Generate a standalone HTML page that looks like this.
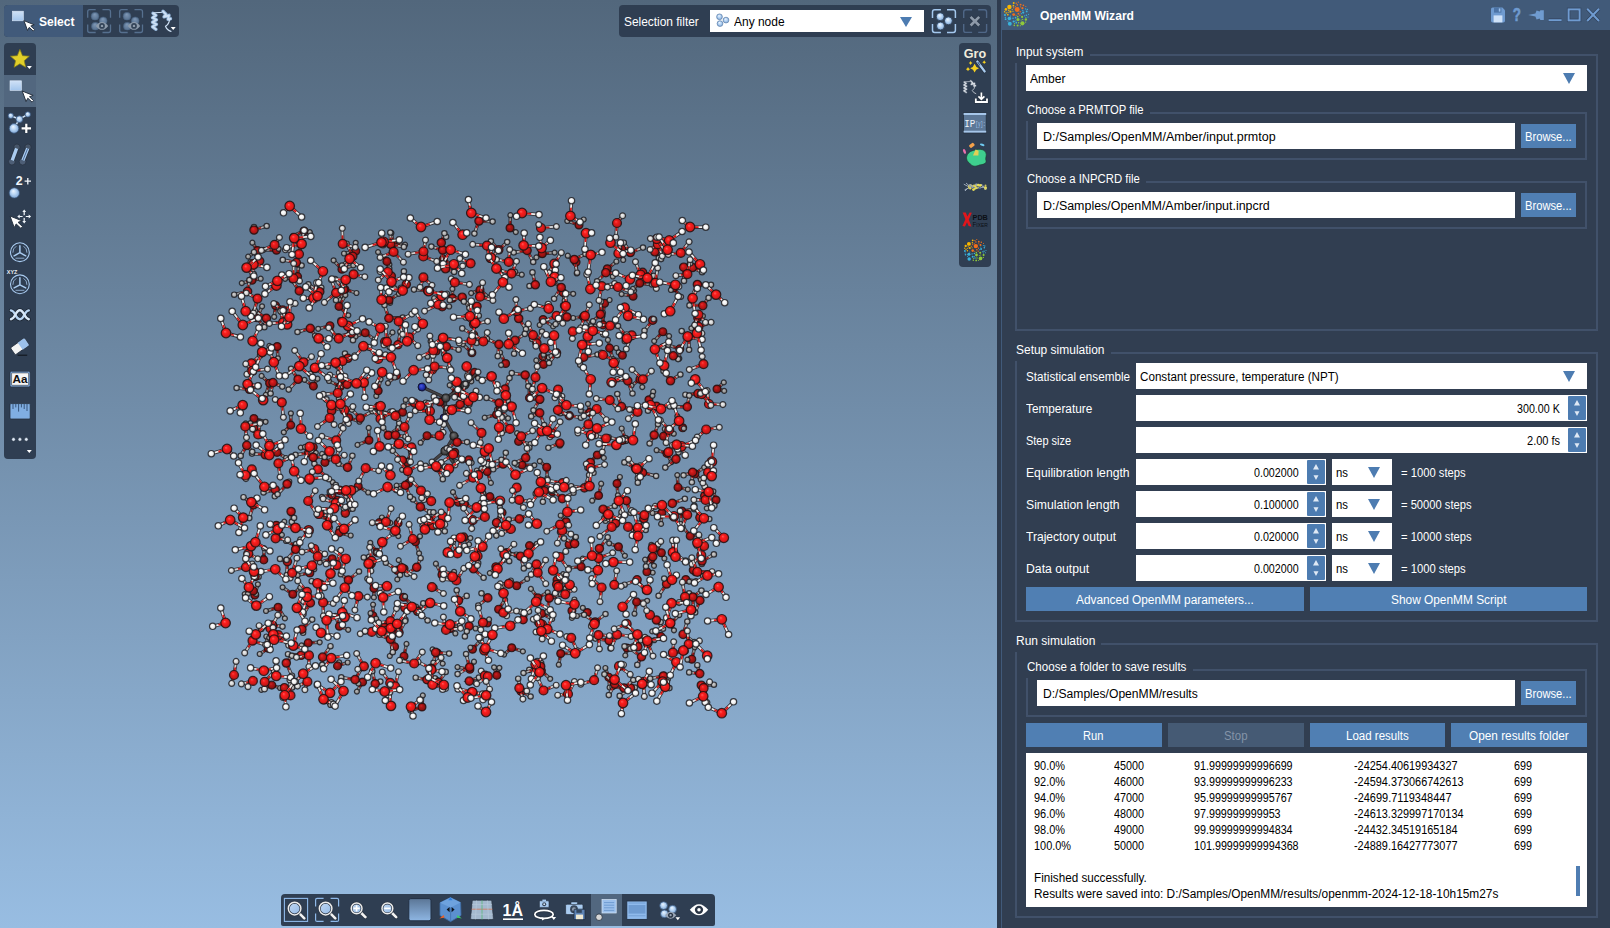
<!DOCTYPE html>
<html lang="en"><head><meta charset="utf-8"><title>OpenMM Wizard</title>
<style>
html,body{margin:0;padding:0;}
body{width:1610px;height:928px;overflow:hidden;position:relative;background:#2f3e52;font-family:"Liberation Sans",sans-serif;font-size:12px;color:#fff;}
.abs,.abs *{position:absolute;box-sizing:border-box;}
#view{left:0;top:0;width:997px;height:928px;background:linear-gradient(#52677c 0%,#98bde2 100%);overflow:hidden;}
#split{left:997px;top:0;width:5px;height:928px;background:#2e3b4e;border-right:1px solid #415a7a;}
#panel{left:1001px;top:0;width:609px;height:928px;background:#313e51;}
#phead{left:0;top:0;width:609px;height:30px;background:#415a79;}
.t{transform-origin:0 50%;white-space:nowrap;line-height:16px;height:16px;color:#fff;}
.dk{color:#000;}
.gb{border:2px solid #41516a;}
.lbl{background:#313e51;padding:0 0 0 0;}
.in{background:#fff;}
.btn{background:#507fb3;text-align:center;}
.btn.dis{background:#455a74;color:#8494a8;}
.tb{background:#2f3e52;border-radius:4px;}
svg{overflow:visible;}
.b{font-weight:bold;}
.t.dis{color:#8494a8;}
.bd{stroke:#201414;stroke-width:3.4;opacity:.82}
.bw1{stroke:#ececec;stroke-width:1.8}.bw2{stroke:#d0d0d0;stroke-width:1.8}.bw3{stroke:#b4b4b4;stroke-width:1.8}.bw4{stroke:#909090;stroke-width:1.8}
.br1{stroke:#d81818;stroke-width:1.8}.br2{stroke:#c01616;stroke-width:1.8}.br3{stroke:#a41414;stroke-width:1.8}.br4{stroke:#881010;stroke-width:1.8}
.bc{stroke:#444;stroke-width:1.7}
</style></head><body>
<div id="view" class="abs">
<svg class="mol" style="left:0;top:0" width="997" height="928" viewBox="0 0 997 928">
<defs><radialGradient id="gO1" cx=".5" cy=".5" r=".5" fx=".38" fy=".34"><stop offset="0" stop-color="#ff5a5a"/><stop offset="0.35" stop-color="#fc1c1c"/><stop offset="0.75" stop-color="#dc1a1a"/><stop offset="1" stop-color="#a41616"/></radialGradient><radialGradient id="gO2" cx=".5" cy=".5" r=".5" fx=".38" fy=".34"><stop offset="0" stop-color="#f84444"/><stop offset="0.35" stop-color="#ee1a1a"/><stop offset="0.75" stop-color="#c81818"/><stop offset="1" stop-color="#921414"/></radialGradient><radialGradient id="gO3" cx=".5" cy=".5" r=".5" fx=".38" fy=".34"><stop offset="0" stop-color="#e03232"/><stop offset="0.35" stop-color="#d01818"/><stop offset="0.75" stop-color="#aa1414"/><stop offset="1" stop-color="#7a1010"/></radialGradient><radialGradient id="gO4" cx=".5" cy=".5" r=".5" fx=".38" fy=".34"><stop offset="0" stop-color="#c42a2a"/><stop offset="0.35" stop-color="#b01414"/><stop offset="0.75" stop-color="#8e1212"/><stop offset="1" stop-color="#640e0e"/></radialGradient><radialGradient id="gH1" cx=".5" cy=".5" r=".5" fx=".38" fy=".34"><stop offset="0" stop-color="#fff"/><stop offset="0.45" stop-color="#f8f8f8"/><stop offset="0.78" stop-color="#dcdcdc"/><stop offset="1" stop-color="#aaa"/></radialGradient><radialGradient id="gH2" cx=".5" cy=".5" r=".5" fx=".38" fy=".34"><stop offset="0" stop-color="#f0f0f0"/><stop offset="0.45" stop-color="#dedede"/><stop offset="0.78" stop-color="#bcbcbc"/><stop offset="1" stop-color="#8c8c8c"/></radialGradient><radialGradient id="gH3" cx=".5" cy=".5" r=".5" fx=".38" fy=".34"><stop offset="0" stop-color="#d0d0d0"/><stop offset="0.45" stop-color="#bababa"/><stop offset="0.78" stop-color="#9a9a9a"/><stop offset="1" stop-color="#727272"/></radialGradient><radialGradient id="gH4" cx=".5" cy=".5" r=".5" fx=".38" fy=".34"><stop offset="0" stop-color="#b8b8b8"/><stop offset="0.45" stop-color="#a4a4a4"/><stop offset="0.78" stop-color="#888"/><stop offset="1" stop-color="#646464"/></radialGradient><radialGradient id="gC" cx=".5" cy=".5" r=".5" fx=".38" fy=".34"><stop offset="0" stop-color="#777"/><stop offset="0.6" stop-color="#4a4a4a"/><stop offset="1" stop-color="#2a2a2a"/></radialGradient><radialGradient id="gN" cx=".5" cy=".5" r=".5" fx=".38" fy=".34"><stop offset="0" stop-color="#4a5ae0"/><stop offset="0.6" stop-color="#2030b0"/><stop offset="1" stop-color="#101850"/></radialGradient><circle id="o1" r="4.8" fill="url(#gO1)" stroke="#1e1010" stroke-opacity=".82" stroke-width="1.2"/><circle id="h1" r="3.2" fill="url(#gH1)" stroke="#1c1c20" stroke-opacity=".8" stroke-width="1.2"/><circle id="o2" r="4.5" fill="url(#gO2)" stroke="#1e1010" stroke-opacity=".82" stroke-width="1.2"/><circle id="h2" r="2.95" fill="url(#gH2)" stroke="#1c1c20" stroke-opacity=".8" stroke-width="1.2"/><circle id="o3" r="4.2" fill="url(#gO3)" stroke="#1e1010" stroke-opacity=".82" stroke-width="1.2"/><circle id="h3" r="2.7" fill="url(#gH3)" stroke="#1c1c20" stroke-opacity=".8" stroke-width="1.2"/><circle id="o4" r="3.95" fill="url(#gO4)" stroke="#1e1010" stroke-opacity=".82" stroke-width="1.2"/><circle id="h4" r="2.5" fill="url(#gH4)" stroke="#1c1c20" stroke-opacity=".8" stroke-width="1.2"/><circle id="c" r="4.1" fill="url(#gC)" stroke="#181818" stroke-width=".9"/><circle id="n" r="4" fill="url(#gN)" stroke="#101030" stroke-width=".9"/></defs>
<g fill="none" stroke-linecap="round">
<path class="bd" d="M453 492.1L458.5 502.3L466.3 504.3"/><path class="bw4" d="M453 492.1L458.5 502.3L466.3 504.3"/><path class="br4" d="M455.7 497.2L458.5 502.3L462.4 503.3"/>
<use href="#h4" x="466.3" y="504.3"/>
<use href="#h4" x="453" y="492.1"/>
<use href="#o4" x="458.5" y="502.3"/>
<path class="bd" d="M405.1 244.7L393.1 243.8L391.4 233"/><path class="bw4" d="M405.1 244.7L393.1 243.8L391.4 233"/><path class="br4" d="M399.1 244.2L393.1 243.8L392.3 238.4"/>
<use href="#h4" x="391.4" y="233"/>
<use href="#o4" x="393.1" y="243.8"/>
<use href="#h4" x="405.1" y="244.7"/>
<path class="bd" d="M653.2 391.7L648.9 399.8L652.5 395.8"/><path class="bw4" d="M653.2 391.7L648.9 399.8L652.5 395.8"/><path class="br4" d="M651 395.7L648.9 399.8L650.7 397.8"/>
<use href="#h4" x="653.2" y="391.7"/>
<use href="#o4" x="648.9" y="399.8"/>
<use href="#h4" x="652.5" y="395.8"/>
<path class="bd" d="M376.3 396L378.2 390.8L380.6 379.3"/><path class="bw4" d="M376.3 396L378.2 390.8L380.6 379.3"/><path class="br4" d="M377.2 393.4L378.2 390.8L379.4 385.1"/>
<use href="#h4" x="376.3" y="396"/>
<use href="#h4" x="380.6" y="379.3"/>
<use href="#o4" x="378.2" y="390.8"/>
<path class="bd" d="M616.3 348L622.4 355.3L618.7 352.5"/><path class="bw4" d="M616.3 348L622.4 355.3L618.7 352.5"/><path class="br4" d="M619.3 351.7L622.4 355.3L620.5 353.9"/>
<use href="#h4" x="618.7" y="352.5"/>
<use href="#o4" x="622.4" y="355.3"/>
<use href="#h4" x="616.3" y="348"/>
<path class="bd" d="M398.9 293.8L389 300.2L390.1 302.9"/><path class="bw4" d="M398.9 293.8L389 300.2L390.1 302.9"/><path class="br4" d="M394 297L389 300.2L389.6 301.5"/>
<use href="#h4" x="390.1" y="302.9"/>
<use href="#o4" x="389" y="300.2"/>
<use href="#h4" x="398.9" y="293.8"/>
<path class="bd" d="M370.3 542.8L376.8 552.4L376.3 552.3"/><path class="bw4" d="M370.3 542.8L376.8 552.4L376.3 552.3"/><path class="br4" d="M373.5 547.6L376.8 552.4L376.6 552.3"/>
<use href="#h4" x="370.3" y="542.8"/>
<use href="#o4" x="376.8" y="552.4"/>
<use href="#h4" x="376.3" y="552.3"/>
<path class="bd" d="M449.2 306.5L442.2 306.9L434.1 298.2"/><path class="bw4" d="M449.2 306.5L442.2 306.9L434.1 298.2"/><path class="br4" d="M445.7 306.7L442.2 306.9L438.2 302.5"/>
<use href="#o4" x="442.2" y="306.9"/>
<use href="#h4" x="434.1" y="298.2"/>
<use href="#h4" x="449.2" y="306.5"/>
<path class="bd" d="M634.5 613.7L636.6 601.9L647.2 600.8"/><path class="bw4" d="M634.5 613.7L636.6 601.9L647.2 600.8"/><path class="br4" d="M635.5 607.8L636.6 601.9L641.9 601.3"/>
<use href="#h4" x="647.2" y="600.8"/>
<use href="#o4" x="636.6" y="601.9"/>
<use href="#h4" x="634.5" y="613.7"/>
<path class="bd" d="M334 457.7L324.9 462.4L322.1 453.9"/><path class="bw4" d="M334 457.7L324.9 462.4L322.1 453.9"/><path class="br4" d="M329.4 460.1L324.9 462.4L323.5 458.2"/>
<use href="#h4" x="334" y="457.7"/>
<use href="#o4" x="324.9" y="462.4"/>
<use href="#h4" x="322.1" y="453.9"/>
<path class="bd" d="M338.8 528.8L339.1 532.8L350.7 535.5"/><path class="bw4" d="M338.8 528.8L339.1 532.8L350.7 535.5"/><path class="br4" d="M339 530.8L339.1 532.8L344.9 534.1"/>
<use href="#h4" x="338.8" y="528.8"/>
<use href="#o4" x="339.1" y="532.8"/>
<use href="#h4" x="350.7" y="535.5"/>
<path class="bd" d="M573.2 318L583.5 316.8L591 324.7"/><path class="bw4" d="M573.2 318L583.5 316.8L591 324.7"/><path class="br4" d="M578.3 317.4L583.5 316.8L587.2 320.7"/>
<use href="#h4" x="573.2" y="318"/>
<use href="#h4" x="591" y="324.7"/>
<use href="#o4" x="583.5" y="316.8"/>
<path class="bd" d="M495.2 522.5L502.1 512.6L499.9 507.1"/><path class="bw4" d="M495.2 522.5L502.1 512.6L499.9 507.1"/><path class="br4" d="M498.7 517.5L502.1 512.6L501 509.9"/>
<use href="#o4" x="502.1" y="512.6"/>
<use href="#h4" x="495.2" y="522.5"/>
<use href="#h4" x="499.9" y="507.1"/>
<path class="bd" d="M657.3 549L651 559.1L654 565.8"/><path class="bw4" d="M657.3 549L651 559.1L654 565.8"/><path class="br4" d="M654.2 554.1L651 559.1L652.5 562.5"/>
<use href="#h4" x="654" y="565.8"/>
<use href="#h4" x="657.3" y="549"/>
<use href="#o4" x="651" y="559.1"/>
<path class="bd" d="M355.7 489.4L358.2 486.3L368.2 492.5"/><path class="bw4" d="M355.7 489.4L358.2 486.3L368.2 492.5"/><path class="br4" d="M356.9 487.8L358.2 486.3L363.2 489.4"/>
<use href="#h4" x="368.2" y="492.5"/>
<use href="#o4" x="358.2" y="486.3"/>
<use href="#h4" x="355.7" y="489.4"/>
<path class="bd" d="M257.9 584.3L254.8 595.1L256 593.9"/><path class="bw4" d="M257.9 584.3L254.8 595.1L256 593.9"/><path class="br4" d="M256.4 589.7L254.8 595.1L255.4 594.5"/>
<use href="#h4" x="257.9" y="584.3"/>
<use href="#o4" x="254.8" y="595.1"/>
<use href="#h4" x="256" y="593.9"/>
<path class="bd" d="M619.4 247.5L622.1 248.2L623.2 260"/><path class="bw4" d="M619.4 247.5L622.1 248.2L623.2 260"/><path class="br4" d="M620.7 247.8L622.1 248.2L622.6 254.1"/>
<use href="#h4" x="623.2" y="260"/>
<use href="#o4" x="622.1" y="248.2"/>
<use href="#h4" x="619.4" y="247.5"/>
<path class="bd" d="M300.2 539.4L296.4 546.1L286 541"/><path class="bw4" d="M300.2 539.4L296.4 546.1L286 541"/><path class="br4" d="M298.3 542.8L296.4 546.1L291.2 543.6"/>
<use href="#h4" x="286" y="541"/>
<use href="#o4" x="296.4" y="546.1"/>
<use href="#h4" x="300.2" y="539.4"/>
<path class="bd" d="M446.9 411.5L439.9 402L443 399.3"/><path class="bw4" d="M446.9 411.5L439.9 402L443 399.3"/><path class="br4" d="M443.4 406.7L439.9 402L441.5 400.7"/>
<use href="#h4" x="443" y="399.3"/>
<use href="#o4" x="439.9" y="402"/>
<use href="#h4" x="446.9" y="411.5"/>
<path class="bd" d="M348.2 629.8L339.4 626.2L335.4 615.9"/><path class="bw4" d="M348.2 629.8L339.4 626.2L335.4 615.9"/><path class="br4" d="M343.8 628L339.4 626.2L337.4 621.1"/>
<use href="#h4" x="348.2" y="629.8"/>
<use href="#h4" x="335.4" y="615.9"/>
<use href="#o4" x="339.4" y="626.2"/>
<path class="bd" d="M252.4 242.7L257.5 250.5L248.2 256.6"/><path class="bw4" d="M252.4 242.7L257.5 250.5L248.2 256.6"/><path class="br4" d="M255 246.6L257.5 250.5L252.9 253.6"/>
<use href="#h4" x="252.4" y="242.7"/>
<use href="#o4" x="257.5" y="250.5"/>
<use href="#h4" x="248.2" y="256.6"/>
<path class="bd" d="M480.4 640.6L472.5 649.2L470.4 647.6"/><path class="bw4" d="M480.4 640.6L472.5 649.2L470.4 647.6"/><path class="br4" d="M476.5 644.9L472.5 649.2L471.4 648.4"/>
<use href="#h4" x="480.4" y="640.6"/>
<use href="#o4" x="472.5" y="649.2"/>
<use href="#h4" x="470.4" y="647.6"/>
<path class="bd" d="M304.5 379.8L313.4 386.1L317.5 378.7"/><path class="bw4" d="M304.5 379.8L313.4 386.1L317.5 378.7"/><path class="br4" d="M309 382.9L313.4 386.1L315.5 382.4"/>
<use href="#h4" x="304.5" y="379.8"/>
<use href="#o4" x="313.4" y="386.1"/>
<use href="#h4" x="317.5" y="378.7"/>
<path class="bd" d="M476.8 470.5L487.2 471.5L490.9 482.9"/><path class="bw4" d="M476.8 470.5L487.2 471.5L490.9 482.9"/><path class="br4" d="M482 471L487.2 471.5L489 477.2"/>
<use href="#h4" x="476.8" y="470.5"/>
<use href="#h4" x="490.9" y="482.9"/>
<use href="#o4" x="487.2" y="471.5"/>
<path class="bd" d="M340.8 425.9L348.7 417.7L359.5 421.7"/><path class="bw4" d="M340.8 425.9L348.7 417.7L359.5 421.7"/><path class="br4" d="M344.8 421.8L348.7 417.7L354.1 419.7"/>
<use href="#h4" x="340.8" y="425.9"/>
<use href="#h4" x="359.5" y="421.7"/>
<use href="#o4" x="348.7" y="417.7"/>
<path class="bd" d="M515.2 271.7L511.5 273L521.8 274.7"/><path class="bw4" d="M515.2 271.7L511.5 273L521.8 274.7"/><path class="br4" d="M513.4 272.4L511.5 273L516.7 273.8"/>
<use href="#h4" x="515.2" y="271.7"/>
<use href="#o4" x="511.5" y="273"/>
<use href="#h4" x="521.8" y="274.7"/>
<path class="bd" d="M419.1 553.3L415.5 541.8L420 536.3"/><path class="bw4" d="M419.1 553.3L415.5 541.8L420 536.3"/><path class="br4" d="M417.3 547.6L415.5 541.8L417.8 539.1"/>
<use href="#h4" x="420" y="536.3"/>
<use href="#h4" x="419.1" y="553.3"/>
<use href="#o4" x="415.5" y="541.8"/>
<path class="bd" d="M621.6 294.1L633.1 296.2L634.2 290.6"/><path class="bw4" d="M621.6 294.1L633.1 296.2L634.2 290.6"/><path class="br4" d="M627.4 295.1L633.1 296.2L633.7 293.4"/>
<use href="#h4" x="621.6" y="294.1"/>
<use href="#o4" x="633.1" y="296.2"/>
<use href="#h4" x="634.2" y="290.6"/>
<path class="bd" d="M442.7 663.6L437.3 653L432.6 649.4"/><path class="bw4" d="M442.7 663.6L437.3 653L432.6 649.4"/><path class="br4" d="M440 658.3L437.3 653L435 651.2"/>
<use href="#o4" x="437.3" y="653"/>
<use href="#h4" x="442.7" y="663.6"/>
<use href="#h4" x="432.6" y="649.4"/>
<path class="bd" d="M547.3 478.5L546.7 467.2L539.8 461.2"/><path class="bw4" d="M547.3 478.5L546.7 467.2L539.8 461.2"/><path class="br4" d="M547 472.9L546.7 467.2L543.3 464.2"/>
<use href="#o4" x="546.7" y="467.2"/>
<use href="#h4" x="547.3" y="478.5"/>
<use href="#h4" x="539.8" y="461.2"/>
<path class="bd" d="M671.5 462.1L666.9 453.4L656.6 450.2"/><path class="bw4" d="M671.5 462.1L666.9 453.4L656.6 450.2"/><path class="br4" d="M669.2 457.8L666.9 453.4L661.8 451.8"/>
<use href="#h4" x="671.5" y="462.1"/>
<use href="#h4" x="656.6" y="450.2"/>
<use href="#o4" x="666.9" y="453.4"/>
<path class="bd" d="M266.3 636.5L268.3 648.3L259.7 654"/><path class="bw4" d="M266.3 636.5L268.3 648.3L259.7 654"/><path class="br4" d="M267.3 642.4L268.3 648.3L264 651.2"/>
<use href="#o4" x="268.3" y="648.3"/>
<use href="#h4" x="266.3" y="636.5"/>
<use href="#h4" x="259.7" y="654"/>
<path class="bd" d="M681.1 296.8L673.4 288L670.9 290"/><path class="bw4" d="M681.1 296.8L673.4 288L670.9 290"/><path class="br4" d="M677.3 292.4L673.4 288L672.2 289"/>
<use href="#h4" x="681.1" y="296.8"/>
<use href="#o4" x="673.4" y="288"/>
<use href="#h4" x="670.9" y="290"/>
<path class="bd" d="M393.1 637.1L394.6 646.7L389.8 656"/><path class="bw4" d="M393.1 637.1L394.6 646.7L389.8 656"/><path class="br4" d="M393.9 641.9L394.6 646.7L392.2 651.4"/>
<use href="#h4" x="393.1" y="637.1"/>
<use href="#h4" x="389.8" y="656"/>
<use href="#o4" x="394.6" y="646.7"/>
<path class="bd" d="M438.5 436.7L427 435.7L420.6 442.7"/><path class="bw4" d="M438.5 436.7L427 435.7L420.6 442.7"/><path class="br4" d="M432.7 436.2L427 435.7L423.8 439.2"/>
<use href="#o4" x="427" y="435.7"/>
<use href="#h4" x="438.5" y="436.7"/>
<use href="#h4" x="420.6" y="442.7"/>
<path class="bd" d="M689.3 581.7L685.8 579.5L695.9 581"/><path class="bw4" d="M689.3 581.7L685.8 579.5L695.9 581"/><path class="br4" d="M687.5 580.6L685.8 579.5L690.9 580.3"/>
<use href="#h4" x="695.9" y="581"/>
<use href="#o4" x="685.8" y="579.5"/>
<use href="#h4" x="689.3" y="581.7"/>
<path class="bd" d="M347.7 662.5L337.5 665.9L339.1 662.3"/><path class="bw4" d="M347.7 662.5L337.5 665.9L339.1 662.3"/><path class="br4" d="M342.6 664.2L337.5 665.9L338.3 664.1"/>
<use href="#h4" x="339.1" y="662.3"/>
<use href="#o4" x="337.5" y="665.9"/>
<use href="#h4" x="347.7" y="662.5"/>
<path class="bd" d="M517.1 433.2L518.6 441.4L530.5 444"/><path class="bw4" d="M517.1 433.2L518.6 441.4L530.5 444"/><path class="br4" d="M517.8 437.3L518.6 441.4L524.5 442.7"/>
<use href="#h4" x="517.1" y="433.2"/>
<use href="#h4" x="530.5" y="444"/>
<use href="#o4" x="518.6" y="441.4"/>
<path class="bd" d="M374.5 339.5L365.2 332.7L355.5 336.6"/><path class="bw4" d="M374.5 339.5L365.2 332.7L355.5 336.6"/><path class="br4" d="M369.8 336.1L365.2 332.7L360.4 334.7"/>
<use href="#h4" x="355.5" y="336.6"/>
<use href="#h4" x="374.5" y="339.5"/>
<use href="#o4" x="365.2" y="332.7"/>
<path class="bd" d="M603.8 457.9L597.3 455L588.6 463.5"/><path class="bw4" d="M603.8 457.9L597.3 455L588.6 463.5"/><path class="br4" d="M600.6 456.4L597.3 455L592.9 459.2"/>
<use href="#h4" x="603.8" y="457.9"/>
<use href="#o4" x="597.3" y="455"/>
<use href="#h4" x="588.6" y="463.5"/>
<path class="bd" d="M471.3 381.4L474.5 372.4L478 378.2"/><path class="bw4" d="M471.3 381.4L474.5 372.4L478 378.2"/><path class="br4" d="M472.9 376.9L474.5 372.4L476.3 375.3"/>
<use href="#h4" x="471.3" y="381.4"/>
<use href="#o4" x="474.5" y="372.4"/>
<use href="#h4" x="478" y="378.2"/>
<path class="bd" d="M274.2 316.8L275.6 305.6L278.5 307.5"/><path class="bw4" d="M274.2 316.8L275.6 305.6L278.5 307.5"/><path class="br4" d="M274.9 311.2L275.6 305.6L277 306.6"/>
<use href="#h4" x="274.2" y="316.8"/>
<use href="#o4" x="275.6" y="305.6"/>
<use href="#h4" x="278.5" y="307.5"/>
<path class="bd" d="M724.2 390.9L717 389L723.8 382.4"/><path class="bw4" d="M724.2 390.9L717 389L723.8 382.4"/><path class="br4" d="M720.6 390L717 389L720.4 385.7"/>
<use href="#h4" x="724.2" y="390.9"/>
<use href="#o4" x="717" y="389"/>
<use href="#h4" x="723.8" y="382.4"/>
<path class="bd" d="M277.9 358.3L277.2 346.5L269.4 345.9"/><path class="bw4" d="M277.9 358.3L277.2 346.5L269.4 345.9"/><path class="br4" d="M277.6 352.4L277.2 346.5L273.3 346.2"/>
<use href="#h4" x="269.4" y="345.9"/>
<use href="#o4" x="277.2" y="346.5"/>
<use href="#h4" x="277.9" y="358.3"/>
<path class="bd" d="M504.2 613L498.6 609.2L505.1 599.5"/><path class="bw4" d="M504.2 613L498.6 609.2L505.1 599.5"/><path class="br4" d="M501.4 611.1L498.6 609.2L501.8 604.3"/>
<use href="#h4" x="504.2" y="613"/>
<use href="#o4" x="498.6" y="609.2"/>
<use href="#h4" x="505.1" y="599.5"/>
<path class="bd" d="M530.9 588.9L537.9 597.9L547.7 592.3"/><path class="bw4" d="M530.9 588.9L537.9 597.9L547.7 592.3"/><path class="br4" d="M534.4 593.4L537.9 597.9L542.8 595.1"/>
<use href="#h4" x="530.9" y="588.9"/>
<use href="#o4" x="537.9" y="597.9"/>
<use href="#h4" x="547.7" y="592.3"/>
<path class="bd" d="M580.9 410.7L589.8 412.5L588 403.9"/><path class="bw4" d="M580.9 410.7L589.8 412.5L588 403.9"/><path class="br4" d="M585.3 411.6L589.8 412.5L588.9 408.2"/>
<use href="#h4" x="588" y="403.9"/>
<use href="#o4" x="589.8" y="412.5"/>
<use href="#h4" x="580.9" y="410.7"/>
<path class="bd" d="M668.2 345.1L679.8 348.9L679.3 358.5"/><path class="bw4" d="M668.2 345.1L679.8 348.9L679.3 358.5"/><path class="br4" d="M674 347L679.8 348.9L679.5 353.7"/>
<use href="#h4" x="668.2" y="345.1"/>
<use href="#o4" x="679.8" y="348.9"/>
<use href="#h4" x="679.3" y="358.5"/>
<path class="bd" d="M625.3 655.4L627 648L637.4 642"/><path class="bw4" d="M625.3 655.4L627 648L637.4 642"/><path class="br4" d="M626.2 651.7L627 648L632.2 645"/>
<use href="#o4" x="627" y="648"/>
<use href="#h4" x="637.4" y="642"/>
<use href="#h4" x="625.3" y="655.4"/>
<path class="bd" d="M319.7 642.3L308.2 642.9L301.6 645.4"/><path class="bw4" d="M319.7 642.3L308.2 642.9L301.6 645.4"/><path class="br4" d="M314 642.6L308.2 642.9L304.9 644.1"/>
<use href="#h4" x="301.6" y="645.4"/>
<use href="#h4" x="319.7" y="642.3"/>
<use href="#o4" x="308.2" y="642.9"/>
<path class="bd" d="M355.7 242.8L355.8 251.1L344 253.5"/><path class="bw4" d="M355.7 242.8L355.8 251.1L344 253.5"/><path class="br4" d="M355.8 246.9L355.8 251.1L349.9 252.3"/>
<use href="#h4" x="344" y="253.5"/>
<use href="#o4" x="355.8" y="251.1"/>
<use href="#h4" x="355.7" y="242.8"/>
<path class="bd" d="M539.8 400.7L529.5 397.9L529.1 385.6"/><path class="bw4" d="M539.8 400.7L529.5 397.9L529.1 385.6"/><path class="br4" d="M534.7 399.3L529.5 397.9L529.3 391.8"/>
<use href="#o4" x="529.5" y="397.9"/>
<use href="#h4" x="529.1" y="385.6"/>
<use href="#h4" x="539.8" y="400.7"/>
<path class="bd" d="M489.3 297.6L480 289.9L471.2 293.1"/><path class="bw4" d="M489.3 297.6L480 289.9L471.2 293.1"/><path class="br4" d="M484.6 293.7L480 289.9L475.6 291.5"/>
<use href="#h4" x="471.2" y="293.1"/>
<use href="#h4" x="489.3" y="297.6"/>
<use href="#o4" x="480" y="289.9"/>
<path class="bd" d="M265.6 421.8L253.9 418.5L250.3 423.2"/><path class="bw4" d="M265.6 421.8L253.9 418.5L250.3 423.2"/><path class="br4" d="M259.8 420.2L253.9 418.5L252.1 420.9"/>
<use href="#h4" x="265.6" y="421.8"/>
<use href="#o4" x="253.9" y="418.5"/>
<use href="#h4" x="250.3" y="423.2"/>
<path class="bd" d="M679.3 615.1L670.6 623.7L674 630.3"/><path class="bw4" d="M679.3 615.1L670.6 623.7L674 630.3"/><path class="br4" d="M675 619.4L670.6 623.7L672.3 627"/>
<use href="#h4" x="679.3" y="615.1"/>
<use href="#o4" x="670.6" y="623.7"/>
<use href="#h4" x="674" y="630.3"/>
<path class="bd" d="M430.6 341.3L436.2 351L427.5 356.7"/><path class="bw4" d="M430.6 341.3L436.2 351L427.5 356.7"/><path class="br4" d="M433.4 346.1L436.2 351L431.8 353.9"/>
<use href="#h4" x="427.5" y="356.7"/>
<use href="#o4" x="436.2" y="351"/>
<use href="#h4" x="430.6" y="341.3"/>
<path class="bd" d="M548.8 357.4L542.7 356.4L551.4 356.1"/><path class="bw4" d="M548.8 357.4L542.7 356.4L551.4 356.1"/><path class="br4" d="M545.7 356.9L542.7 356.4L547 356.2"/>
<use href="#h4" x="548.8" y="357.4"/>
<use href="#o4" x="542.7" y="356.4"/>
<use href="#h4" x="551.4" y="356.1"/>
<path class="bd" d="M504 560.1L495.8 566.7L489.8 573.1"/><path class="bw4" d="M504 560.1L495.8 566.7L489.8 573.1"/><path class="br4" d="M499.9 563.4L495.8 566.7L492.8 569.9"/>
<use href="#o4" x="495.8" y="566.7"/>
<use href="#h4" x="504" y="560.1"/>
<use href="#h4" x="489.8" y="573.1"/>
<path class="bd" d="M682.7 526.6L690.2 536.1L698.6 535.4"/><path class="bw4" d="M682.7 526.6L690.2 536.1L698.6 535.4"/><path class="br4" d="M686.5 531.3L690.2 536.1L694.4 535.8"/>
<use href="#o4" x="690.2" y="536.1"/>
<use href="#h4" x="682.7" y="526.6"/>
<use href="#h4" x="698.6" y="535.4"/>
<path class="bd" d="M687.8 489.4L678 487.4L677.3 475.1"/><path class="bw4" d="M687.8 489.4L678 487.4L677.3 475.1"/><path class="br4" d="M682.9 488.4L678 487.4L677.6 481.2"/>
<use href="#h4" x="677.3" y="475.1"/>
<use href="#o4" x="678" y="487.4"/>
<use href="#h4" x="687.8" y="489.4"/>
<path class="bd" d="M261.3 689.9L271.8 685.1L280.1 688"/><path class="bw4" d="M261.3 689.9L271.8 685.1L280.1 688"/><path class="br4" d="M266.5 687.5L271.8 685.1L275.9 686.5"/>
<use href="#o4" x="271.8" y="685.1"/>
<use href="#h4" x="261.3" y="689.9"/>
<use href="#h4" x="280.1" y="688"/>
<path class="bd" d="M536.8 543.8L529.5 545.6L528.2 557.9"/><path class="bw4" d="M536.8 543.8L529.5 545.6L528.2 557.9"/><path class="br4" d="M533.1 544.7L529.5 545.6L528.8 551.8"/>
<use href="#h4" x="536.8" y="543.8"/>
<use href="#o4" x="529.5" y="545.6"/>
<use href="#h4" x="528.2" y="557.9"/>
<path class="bd" d="M560.7 515.5L566.2 521.8L559.8 532.3"/><path class="bw4" d="M560.7 515.5L566.2 521.8L559.8 532.3"/><path class="br4" d="M563.4 518.7L566.2 521.8L563 527.1"/>
<use href="#h4" x="560.7" y="515.5"/>
<use href="#o4" x="566.2" y="521.8"/>
<use href="#h4" x="559.8" y="532.3"/>
<path class="bd" d="M550.2 678.8L541.4 670.7L541.4 662.7"/><path class="bw4" d="M550.2 678.8L541.4 670.7L541.4 662.7"/><path class="br4" d="M545.8 674.7L541.4 670.7L541.4 666.7"/>
<use href="#h4" x="541.4" y="662.7"/>
<use href="#h4" x="550.2" y="678.8"/>
<use href="#o4" x="541.4" y="670.7"/>
<path class="bd" d="M564.6 300.7L563.1 292.6L573.2 293.8"/><path class="bw4" d="M564.6 300.7L563.1 292.6L573.2 293.8"/><path class="br4" d="M563.9 296.6L563.1 292.6L568.1 293.2"/>
<use href="#h4" x="564.6" y="300.7"/>
<use href="#o4" x="563.1" y="292.6"/>
<use href="#h4" x="573.2" y="293.8"/>
<path class="bd" d="M504.1 654.6L511.7 647.8L522.9 651.4"/><path class="bw4" d="M504.1 654.6L511.7 647.8L522.9 651.4"/><path class="br4" d="M507.9 651.2L511.7 647.8L517.3 649.6"/>
<use href="#o4" x="511.7" y="647.8"/>
<use href="#h4" x="522.9" y="651.4"/>
<use href="#h4" x="504.1" y="654.6"/>
<path class="bd" d="M300.3 587.6L292.8 594.2L282.6 587.3"/><path class="bw4" d="M300.3 587.6L292.8 594.2L282.6 587.3"/><path class="br4" d="M296.5 590.9L292.8 594.2L287.7 590.8"/>
<use href="#h4" x="300.3" y="587.6"/>
<use href="#o4" x="292.8" y="594.2"/>
<use href="#h4" x="282.6" y="587.3"/>
<path class="bd" d="M309.8 232.2L304 231L292.9 235.9"/><path class="bw4" d="M309.8 232.2L304 231L292.9 235.9"/><path class="br4" d="M306.9 231.6L304 231L298.4 233.5"/>
<use href="#h4" x="309.8" y="232.2"/>
<use href="#h4" x="292.9" y="235.9"/>
<use href="#o4" x="304" y="231"/>
<path class="bd" d="M500.1 414.6L496.6 414.5L484.7 417.7"/><path class="bw4" d="M500.1 414.6L496.6 414.5L484.7 417.7"/><path class="br4" d="M498.3 414.5L496.6 414.5L490.6 416.1"/>
<use href="#h4" x="500.1" y="414.6"/>
<use href="#h4" x="484.7" y="417.7"/>
<use href="#o4" x="496.6" y="414.5"/>
<path class="bd" d="M281.9 534.9L276.3 525.3L284.3 521.7"/><path class="bw4" d="M281.9 534.9L276.3 525.3L284.3 521.7"/><path class="br4" d="M279.1 530.1L276.3 525.3L280.3 523.5"/>
<use href="#h4" x="281.9" y="534.9"/>
<use href="#o4" x="276.3" y="525.3"/>
<use href="#h4" x="284.3" y="521.7"/>
<path class="bd" d="M574.4 599.5L571.9 610.8L571.9 617.9"/><path class="bw4" d="M574.4 599.5L571.9 610.8L571.9 617.9"/><path class="br4" d="M573.1 605.2L571.9 610.8L571.9 614.4"/>
<use href="#o4" x="571.9" y="610.8"/>
<use href="#h4" x="574.4" y="599.5"/>
<use href="#h4" x="571.9" y="617.9"/>
<path class="bd" d="M568.9 567.9L581.2 566.7L582.8 558.6"/><path class="bw4" d="M568.9 567.9L581.2 566.7L582.8 558.6"/><path class="br4" d="M575 567.3L581.2 566.7L582 562.7"/>
<use href="#h4" x="568.9" y="567.9"/>
<use href="#o4" x="581.2" y="566.7"/>
<use href="#h4" x="582.8" y="558.6"/>
<path class="bd" d="M409.6 471L408.7 483.3L396.6 485.6"/><path class="bw4" d="M409.6 471L408.7 483.3L396.6 485.6"/><path class="br4" d="M409.2 477.2L408.7 483.3L402.7 484.4"/>
<use href="#o4" x="408.7" y="483.3"/>
<use href="#h4" x="409.6" y="471"/>
<use href="#h4" x="396.6" y="485.6"/>
<path class="bd" d="M617.9 495.3L617 483.5L619.9 477"/><path class="bw4" d="M617.9 495.3L617 483.5L619.9 477"/><path class="br4" d="M617.4 489.4L617 483.5L618.4 480.3"/>
<use href="#h4" x="619.9" y="477"/>
<use href="#h4" x="617.9" y="495.3"/>
<use href="#o4" x="617" y="483.5"/>
<path class="bd" d="M691.4 328.3L697.6 317.7L702.9 316"/><path class="bw4" d="M691.4 328.3L697.6 317.7L702.9 316"/><path class="br4" d="M694.5 323L697.6 317.7L700.2 316.9"/>
<use href="#h4" x="702.9" y="316"/>
<use href="#h4" x="691.4" y="328.3"/>
<use href="#o4" x="697.6" y="317.7"/>
<path class="bd" d="M694.7 647.3L691.8 659.2L687.4 659.7"/><path class="bw4" d="M694.7 647.3L691.8 659.2L687.4 659.7"/><path class="br4" d="M693.3 653.3L691.8 659.2L689.6 659.4"/>
<use href="#h4" x="694.7" y="647.3"/>
<use href="#o4" x="691.8" y="659.2"/>
<use href="#h4" x="687.4" y="659.7"/>
<path class="bd" d="M469.1 544.4L463.7 536.9L470.4 538.1"/><path class="bw4" d="M469.1 544.4L463.7 536.9L470.4 538.1"/><path class="br4" d="M466.4 540.6L463.7 536.9L467 537.5"/>
<use href="#h4" x="469.1" y="544.4"/>
<use href="#o4" x="463.7" y="536.9"/>
<use href="#h4" x="470.4" y="538.1"/>
<path class="bd" d="M452.8 265.4L443.3 259.1L443.3 262.4"/><path class="bw4" d="M452.8 265.4L443.3 259.1L443.3 262.4"/><path class="br4" d="M448 262.3L443.3 259.1L443.3 260.8"/>
<use href="#h4" x="452.8" y="265.4"/>
<use href="#o4" x="443.3" y="259.1"/>
<use href="#h4" x="443.3" y="262.4"/>
<path class="bd" d="M713.4 491.3L716 500L706.8 508.3"/><path class="bw4" d="M713.4 491.3L716 500L706.8 508.3"/><path class="br4" d="M714.7 495.7L716 500L711.4 504.1"/>
<use href="#h4" x="713.4" y="491.3"/>
<use href="#h4" x="706.8" y="508.3"/>
<use href="#o4" x="716" y="500"/>
<path class="bd" d="M612.8 276.5L607.3 268.8L616.4 261.5"/><path class="bw4" d="M612.8 276.5L607.3 268.8L616.4 261.5"/><path class="br4" d="M610 272.7L607.3 268.8L611.8 265.1"/>
<use href="#h4" x="616.4" y="261.5"/>
<use href="#o4" x="607.3" y="268.8"/>
<use href="#h4" x="612.8" y="276.5"/>
<path class="bd" d="M268.4 449.8L277.1 452.4L286 458"/><path class="bw4" d="M268.4 449.8L277.1 452.4L286 458"/><path class="br4" d="M272.7 451.1L277.1 452.4L281.5 455.2"/>
<use href="#h4" x="268.4" y="449.8"/>
<use href="#h4" x="286" y="458"/>
<use href="#o4" x="277.1" y="452.4"/>
<path class="bd" d="M241.8 283.1L252 280.3L260.7 278.7"/><path class="bw4" d="M241.8 283.1L252 280.3L260.7 278.7"/><path class="br4" d="M246.9 281.7L252 280.3L256.4 279.5"/>
<use href="#o4" x="252" y="280.3"/>
<use href="#h4" x="241.8" y="283.1"/>
<use href="#h4" x="260.7" y="278.7"/>
<path class="bd" d="M567.3 221L579 225L583.7 219.5"/><path class="bw4" d="M567.3 221L579 225L583.7 219.5"/><path class="br4" d="M573.1 223L579 225L581.4 222.3"/>
<use href="#h4" x="567.3" y="221"/>
<use href="#o4" x="579" y="225"/>
<use href="#h4" x="583.7" y="219.5"/>
<path class="bd" d="M317.8 515.9L329.6 519.7L330 527.6"/><path class="bw4" d="M317.8 515.9L329.6 519.7L330 527.6"/><path class="br4" d="M323.7 517.8L329.6 519.7L329.8 523.7"/>
<use href="#h4" x="317.8" y="515.9"/>
<use href="#o4" x="329.6" y="519.7"/>
<use href="#h4" x="330" y="527.6"/>
<path class="bd" d="M412.4 605.1L403.5 597.3L405.1 596.4"/><path class="bw4" d="M412.4 605.1L403.5 597.3L405.1 596.4"/><path class="br4" d="M407.9 601.2L403.5 597.3L404.3 596.9"/>
<use href="#h4" x="412.4" y="605.1"/>
<use href="#o4" x="403.5" y="597.3"/>
<use href="#h4" x="405.1" y="596.4"/>
<path class="bd" d="M370.5 613.2L372.9 615.7L373.1 604.6"/><path class="bw4" d="M370.5 613.2L372.9 615.7L373.1 604.6"/><path class="br4" d="M371.7 614.4L372.9 615.7L373 610.2"/>
<use href="#h4" x="373.1" y="604.6"/>
<use href="#o4" x="372.9" y="615.7"/>
<use href="#h4" x="370.5" y="613.2"/>
<path class="bd" d="M645.1 559.6L646.9 571.8L652.7 572.6"/><path class="bw4" d="M645.1 559.6L646.9 571.8L652.7 572.6"/><path class="br4" d="M646 565.7L646.9 571.8L649.8 572.2"/>
<use href="#h4" x="652.7" y="572.6"/>
<use href="#o4" x="646.9" y="571.8"/>
<use href="#h4" x="645.1" y="559.6"/>
<path class="bd" d="M462.4 460.5L454.8 452.3L452.3 457.2"/><path class="bw4" d="M462.4 460.5L454.8 452.3L452.3 457.2"/><path class="br4" d="M458.6 456.4L454.8 452.3L453.6 454.7"/>
<use href="#h4" x="452.3" y="457.2"/>
<use href="#o4" x="454.8" y="452.3"/>
<use href="#h4" x="462.4" y="460.5"/>
<path class="bd" d="M379 412.5L378.2 406.6L385 413.6"/><path class="bw4" d="M379 412.5L378.2 406.6L385 413.6"/><path class="br4" d="M378.6 409.5L378.2 406.6L381.6 410.1"/>
<use href="#h4" x="379" y="412.5"/>
<use href="#o4" x="378.2" y="406.6"/>
<use href="#h4" x="385" y="413.6"/>
<path class="bd" d="M272.1 627.5L272.9 626.6L269.2 637.7"/><path class="bw4" d="M272.1 627.5L272.9 626.6L269.2 637.7"/><path class="br4" d="M272.5 627L272.9 626.6L271 632.2"/>
<use href="#h4" x="272.1" y="627.5"/>
<use href="#o4" x="272.9" y="626.6"/>
<use href="#h4" x="269.2" y="637.7"/>
<path class="bd" d="M422.8 695.4L422 707L410.3 710.6"/><path class="bw4" d="M422.8 695.4L422 707L410.3 710.6"/><path class="br4" d="M422.4 701.2L422 707L416.1 708.8"/>
<use href="#h4" x="422.8" y="695.4"/>
<use href="#h4" x="410.3" y="710.6"/>
<use href="#o4" x="422" y="707"/>
<path class="bd" d="M261.6 375.9L269.6 383.2L265.8 394.9"/><path class="bw4" d="M261.6 375.9L269.6 383.2L265.8 394.9"/><path class="br4" d="M265.6 379.6L269.6 383.2L267.7 389"/>
<use href="#o4" x="269.6" y="383.2"/>
<use href="#h4" x="265.8" y="394.9"/>
<use href="#h4" x="261.6" y="375.9"/>
<path class="bd" d="M457.5 667.1L469.9 669.3L474 661.7"/><path class="bw4" d="M457.5 667.1L469.9 669.3L474 661.7"/><path class="br4" d="M463.7 668.2L469.9 669.3L472 665.5"/>
<use href="#h4" x="474" y="661.7"/>
<use href="#o4" x="469.9" y="669.3"/>
<use href="#h4" x="457.5" y="667.1"/>
<path class="bd" d="M334.9 336.4L330 325.7L318.2 328.8"/><path class="bw4" d="M334.9 336.4L330 325.7L318.2 328.8"/><path class="br4" d="M332.4 331.1L330 325.7L324.1 327.2"/>
<use href="#h4" x="334.9" y="336.4"/>
<use href="#o4" x="330" y="325.7"/>
<use href="#h4" x="318.2" y="328.8"/>
<path class="bd" d="M356.5 293L345 289.4L339.7 299.8"/><path class="bw4" d="M356.5 293L345 289.4L339.7 299.8"/><path class="br4" d="M350.8 291.2L345 289.4L342.4 294.6"/>
<use href="#h4" x="339.7" y="299.8"/>
<use href="#o4" x="345" y="289.4"/>
<use href="#h4" x="356.5" y="293"/>
<path class="bd" d="M381.9 517.5L379.3 522.6L390.3 522.9"/><path class="bw4" d="M381.9 517.5L379.3 522.6L390.3 522.9"/><path class="br4" d="M380.6 520L379.3 522.6L384.8 522.7"/>
<use href="#h4" x="381.9" y="517.5"/>
<use href="#o4" x="379.3" y="522.6"/>
<use href="#h4" x="390.3" y="522.9"/>
<path class="bd" d="M652.5 513L661.9 512.8L661.1 523.9"/><path class="bw4" d="M652.5 513L661.9 512.8L661.1 523.9"/><path class="br4" d="M657.2 512.9L661.9 512.8L661.5 518.4"/>
<use href="#h4" x="661.1" y="523.9"/>
<use href="#o4" x="661.9" y="512.8"/>
<use href="#h4" x="652.5" y="513"/>
<path class="bd" d="M602.6 315.7L604.6 303.3L609.6 300"/><path class="bw4" d="M602.6 315.7L604.6 303.3L609.6 300"/><path class="br4" d="M603.6 309.5L604.6 303.3L607.1 301.7"/>
<use href="#o4" x="604.6" y="303.3"/>
<use href="#h4" x="602.6" y="315.7"/>
<use href="#h4" x="609.6" y="300"/>
<path class="bd" d="M673.8 433.7L663.5 436.2L664.8 429"/><path class="bw4" d="M673.8 433.7L663.5 436.2L664.8 429"/><path class="br4" d="M668.7 434.9L663.5 436.2L664.2 432.6"/>
<use href="#h4" x="673.8" y="433.7"/>
<use href="#o4" x="663.5" y="436.2"/>
<use href="#h4" x="664.8" y="429"/>
<path class="bd" d="M527.2 578.9L516.7 585.7L510.9 580.5"/><path class="bw4" d="M527.2 578.9L516.7 585.7L510.9 580.5"/><path class="br4" d="M522 582.3L516.7 585.7L513.8 583.1"/>
<use href="#h4" x="510.9" y="580.5"/>
<use href="#o4" x="516.7" y="585.7"/>
<use href="#h4" x="527.2" y="578.9"/>
<path class="bd" d="M605.4 668L608.8 677.2L609.6 687.5"/><path class="bw4" d="M605.4 668L608.8 677.2L609.6 687.5"/><path class="br4" d="M607.1 672.6L608.8 677.2L609.2 682.3"/>
<use href="#h4" x="605.4" y="668"/>
<use href="#h4" x="609.6" y="687.5"/>
<use href="#o4" x="608.8" y="677.2"/>
<path class="bd" d="M300.8 447.6L313.3 447.1L315.8 452.8"/><path class="bw4" d="M300.8 447.6L313.3 447.1L315.8 452.8"/><path class="br4" d="M307 447.3L313.3 447.1L314.6 449.9"/>
<use href="#h4" x="315.8" y="452.8"/>
<use href="#o4" x="313.3" y="447.1"/>
<use href="#h4" x="300.8" y="447.6"/>
<path class="bd" d="M454.1 571.8L441.9 574.8L435.9 563.7"/><path class="bw4" d="M454.1 571.8L441.9 574.8L435.9 563.7"/><path class="br4" d="M448 573.3L441.9 574.8L438.9 569.3"/>
<use href="#h4" x="435.9" y="563.7"/>
<use href="#h4" x="454.1" y="571.8"/>
<use href="#o4" x="441.9" y="574.8"/>
<path class="bd" d="M406.5 643.9L404 656.2L401.7 660.2"/><path class="bw4" d="M406.5 643.9L404 656.2L401.7 660.2"/><path class="br4" d="M405.2 650L404 656.2L402.8 658.2"/>
<use href="#o4" x="404" y="656.2"/>
<use href="#h4" x="406.5" y="643.9"/>
<use href="#h4" x="401.7" y="660.2"/>
<path class="bd" d="M314.3 569.2L309.9 573L297.6 575.2"/><path class="bw4" d="M314.3 569.2L309.9 573L297.6 575.2"/><path class="br4" d="M312.1 571.1L309.9 573L303.8 574.1"/>
<use href="#h4" x="314.3" y="569.2"/>
<use href="#h4" x="297.6" y="575.2"/>
<use href="#o4" x="309.9" y="573"/>
<path class="bd" d="M447.1 293.5L452.6 298.3L452.4 288.9"/><path class="bw4" d="M447.1 293.5L452.6 298.3L452.4 288.9"/><path class="br4" d="M449.9 295.9L452.6 298.3L452.5 293.6"/>
<use href="#h4" x="447.1" y="293.5"/>
<use href="#o4" x="452.6" y="298.3"/>
<use href="#h4" x="452.4" y="288.9"/>
<path class="bd" d="M576.8 273.5L576.1 262.1L567.8 255.7"/><path class="bw4" d="M576.8 273.5L576.1 262.1L567.8 255.7"/><path class="br4" d="M576.4 267.8L576.1 262.1L572 258.9"/>
<use href="#h4" x="567.8" y="255.7"/>
<use href="#h4" x="576.8" y="273.5"/>
<use href="#o4" x="576.1" y="262.1"/>
<path class="bd" d="M651.7 284.6L639.7 283.2L632.9 288.9"/><path class="bw4" d="M651.7 284.6L639.7 283.2L632.9 288.9"/><path class="br4" d="M645.7 283.9L639.7 283.2L636.3 286"/>
<use href="#h4" x="632.9" y="288.9"/>
<use href="#h4" x="651.7" y="284.6"/>
<use href="#o4" x="639.7" y="283.2"/>
<path class="bd" d="M576.1 543.5L569.1 544.5L575.2 537.6"/><path class="bw4" d="M576.1 543.5L569.1 544.5L575.2 537.6"/><path class="br4" d="M572.6 544L569.1 544.5L572.1 541.1"/>
<use href="#h4" x="576.1" y="543.5"/>
<use href="#o4" x="569.1" y="544.5"/>
<use href="#h4" x="575.2" y="537.6"/>
<path class="bd" d="M462.9 344.3L471.9 352.7L472.5 352.5"/><path class="bw4" d="M462.9 344.3L471.9 352.7L472.5 352.5"/><path class="br4" d="M467.4 348.5L471.9 352.7L472.2 352.6"/>
<use href="#h4" x="472.5" y="352.5"/>
<use href="#o4" x="471.9" y="352.7"/>
<use href="#h4" x="462.9" y="344.3"/>
<path class="bd" d="M621.7 428.5L625.6 439.6L625.3 438"/><path class="bw4" d="M621.7 428.5L625.6 439.6L625.3 438"/><path class="br4" d="M623.6 434.1L625.6 439.6L625.4 438.8"/>
<use href="#h4" x="621.7" y="428.5"/>
<use href="#o4" x="625.6" y="439.6"/>
<use href="#h4" x="625.3" y="438"/>
<path class="bd" d="M534.4 465.3L522 465L516.7 464.6"/><path class="bw4" d="M534.4 465.3L522 465L516.7 464.6"/><path class="br4" d="M528.2 465.1L522 465L519.3 464.8"/>
<use href="#o4" x="522" y="465"/>
<use href="#h4" x="534.4" y="465.3"/>
<use href="#h4" x="516.7" y="464.6"/>
<path class="bd" d="M331.5 702L324 700L330.3 705"/><path class="bw4" d="M331.5 702L324 700L330.3 705"/><path class="br4" d="M327.8 701L324 700L327.2 702.5"/>
<use href="#h4" x="331.5" y="702"/>
<use href="#o4" x="324" y="700"/>
<use href="#h4" x="330.3" y="705"/>
<path class="bd" d="M386 342.6L384.5 341.6L392.5 332.4"/><path class="bw4" d="M386 342.6L384.5 341.6L392.5 332.4"/><path class="br4" d="M385.3 342.1L384.5 341.6L388.5 337"/>
<use href="#h4" x="386" y="342.6"/>
<use href="#o4" x="384.5" y="341.6"/>
<use href="#h4" x="392.5" y="332.4"/>
<path class="bd" d="M455.4 633.5L450 628.6L459.8 625.3"/><path class="bw4" d="M455.4 633.5L450 628.6L459.8 625.3"/><path class="br4" d="M452.7 631.1L450 628.6L454.9 627"/>
<use href="#h4" x="459.8" y="625.3"/>
<use href="#o4" x="450" y="628.6"/>
<use href="#h4" x="455.4" y="633.5"/>
<path class="bd" d="M543.5 354.7L543.5 364.4L536.3 360.4"/><path class="bw4" d="M543.5 354.7L543.5 364.4L536.3 360.4"/><path class="br4" d="M543.5 359.5L543.5 364.4L539.9 362.4"/>
<use href="#h4" x="543.5" y="354.7"/>
<use href="#o4" x="543.5" y="364.4"/>
<use href="#h4" x="536.3" y="360.4"/>
<path class="bd" d="M245.7 423.4L254.1 428.4L261.7 435.6"/><path class="bw4" d="M245.7 423.4L254.1 428.4L261.7 435.6"/><path class="br4" d="M249.9 425.9L254.1 428.4L257.9 432"/>
<use href="#h4" x="245.7" y="423.4"/>
<use href="#h4" x="261.7" y="435.6"/>
<use href="#o4" x="254.1" y="428.4"/>
<path class="bd" d="M601.2 483.7L598.6 495.5L592.2 500.7"/><path class="bw4" d="M601.2 483.7L598.6 495.5L592.2 500.7"/><path class="br4" d="M599.9 489.6L598.6 495.5L595.4 498.1"/>
<use href="#h4" x="592.2" y="500.7"/>
<use href="#h4" x="601.2" y="483.7"/>
<use href="#o4" x="598.6" y="495.5"/>
<path class="bd" d="M247.9 593.8L253.4 590.9L244.7 594.1"/><path class="bw4" d="M247.9 593.8L253.4 590.9L244.7 594.1"/><path class="br4" d="M250.6 592.4L253.4 590.9L249.1 592.5"/>
<use href="#h4" x="244.7" y="594.1"/>
<use href="#o4" x="253.4" y="590.9"/>
<use href="#h4" x="247.9" y="593.8"/>
<path class="bd" d="M613 359L609.6 348.1L607.9 339.9"/><path class="bw4" d="M613 359L609.6 348.1L607.9 339.9"/><path class="br4" d="M611.3 353.5L609.6 348.1L608.7 344"/>
<use href="#h4" x="607.9" y="339.9"/>
<use href="#h4" x="613" y="359"/>
<use href="#o4" x="609.6" y="348.1"/>
<path class="bd" d="M298.6 264.7L297.6 276.6L285.1 278.8"/><path class="bw4" d="M298.6 264.7L297.6 276.6L285.1 278.8"/><path class="br4" d="M298.1 270.7L297.6 276.6L291.4 277.7"/>
<use href="#h4" x="285.1" y="278.8"/>
<use href="#o4" x="297.6" y="276.6"/>
<use href="#h4" x="298.6" y="264.7"/>
<path class="bd" d="M654.3 640.2L660.9 636.4L652.2 631.4"/><path class="bw4" d="M654.3 640.2L660.9 636.4L652.2 631.4"/><path class="br4" d="M657.6 638.3L660.9 636.4L656.5 633.9"/>
<use href="#h4" x="652.2" y="631.4"/>
<use href="#o4" x="660.9" y="636.4"/>
<use href="#h4" x="654.3" y="640.2"/>
<path class="bd" d="M563.1 574.1L557 579.9L565.3 588.7"/><path class="bw4" d="M563.1 574.1L557 579.9L565.3 588.7"/><path class="br4" d="M560 577L557 579.9L561.2 584.3"/>
<use href="#h4" x="565.3" y="588.7"/>
<use href="#o4" x="557" y="579.9"/>
<use href="#h4" x="563.1" y="574.1"/>
<path class="bd" d="M329 381L340.3 386.5L338.8 398.5"/><path class="bw4" d="M329 381L340.3 386.5L338.8 398.5"/><path class="br4" d="M334.7 383.8L340.3 386.5L339.6 392.5"/>
<use href="#h4" x="338.8" y="398.5"/>
<use href="#h4" x="329" y="381"/>
<use href="#o4" x="340.3" y="386.5"/>
<path class="bd" d="M332.7 482.2L332.1 494.9L321.9 496.8"/><path class="bw4" d="M332.7 482.2L332.1 494.9L321.9 496.8"/><path class="br4" d="M332.4 488.6L332.1 494.9L327 495.9"/>
<use href="#h4" x="321.9" y="496.8"/>
<use href="#o4" x="332.1" y="494.9"/>
<use href="#h4" x="332.7" y="482.2"/>
<path class="bd" d="M542.7 484.7L552.5 491.8L555.3 487.1"/><path class="bw4" d="M542.7 484.7L552.5 491.8L555.3 487.1"/><path class="br4" d="M547.6 488.3L552.5 491.8L553.9 489.5"/>
<use href="#h4" x="542.7" y="484.7"/>
<use href="#o4" x="552.5" y="491.8"/>
<use href="#h4" x="555.3" y="487.1"/>
<path class="bd" d="M398.7 560.1L404.1 568.8L397.3 579.4"/><path class="bw4" d="M398.7 560.1L404.1 568.8L397.3 579.4"/><path class="br4" d="M401.4 564.4L404.1 568.8L400.7 574.1"/>
<use href="#o4" x="404.1" y="568.8"/>
<use href="#h4" x="397.3" y="579.4"/>
<use href="#h4" x="398.7" y="560.1"/>
<path class="bd" d="M576.9 616L587.3 612.5L582.8 607.8"/><path class="bw4" d="M576.9 616L587.3 612.5L582.8 607.8"/><path class="br4" d="M582.1 614.2L587.3 612.5L585.1 610.1"/>
<use href="#h4" x="576.9" y="616"/>
<use href="#o4" x="587.3" y="612.5"/>
<use href="#h4" x="582.8" y="607.8"/>
<path class="bd" d="M624.9 555.8L618.5 546.8L609.2 543.3"/><path class="bw4" d="M624.9 555.8L618.5 546.8L609.2 543.3"/><path class="br4" d="M621.7 551.3L618.5 546.8L613.8 545.1"/>
<use href="#h4" x="609.2" y="543.3"/>
<use href="#h4" x="624.9" y="555.8"/>
<use href="#o4" x="618.5" y="546.8"/>
<path class="bd" d="M494.1 667.3L496.8 675.3L499.4 667.8"/><path class="bw4" d="M494.1 667.3L496.8 675.3L499.4 667.8"/><path class="br4" d="M495.5 671.3L496.8 675.3L498.1 671.6"/>
<use href="#h4" x="494.1" y="667.3"/>
<use href="#o4" x="496.8" y="675.3"/>
<use href="#h4" x="499.4" y="667.8"/>
<path class="bd" d="M410.9 451.8L407.6 462.3L402.1 469.8"/><path class="bw4" d="M410.9 451.8L407.6 462.3L402.1 469.8"/><path class="br4" d="M409.3 457L407.6 462.3L404.8 466.1"/>
<use href="#o4" x="407.6" y="462.3"/>
<use href="#h4" x="410.9" y="451.8"/>
<use href="#h4" x="402.1" y="469.8"/>
<path class="bd" d="M483.2 492.7L489.9 496.6L500 502.8"/><path class="bw4" d="M483.2 492.7L489.9 496.6L500 502.8"/><path class="br4" d="M486.5 494.7L489.9 496.6L494.9 499.7"/>
<use href="#o4" x="489.9" y="496.6"/>
<use href="#h4" x="500" y="502.8"/>
<use href="#h4" x="483.2" y="492.7"/>
<path class="bd" d="M704.2 467.4L694.9 473.9L700.8 479.7"/><path class="bw4" d="M704.2 467.4L694.9 473.9L700.8 479.7"/><path class="br4" d="M699.5 470.6L694.9 473.9L697.8 476.8"/>
<use href="#h4" x="700.8" y="479.7"/>
<use href="#o4" x="694.9" y="473.9"/>
<use href="#h4" x="704.2" y="467.4"/>
<path class="bd" d="M554.6 252.6L542.3 253.7L536.4 257.4"/><path class="bw4" d="M554.6 252.6L542.3 253.7L536.4 257.4"/><path class="br4" d="M548.4 253.2L542.3 253.7L539.3 255.6"/>
<use href="#h4" x="536.4" y="257.4"/>
<use href="#h4" x="554.6" y="252.6"/>
<use href="#o4" x="542.3" y="253.7"/>
<path class="bd" d="M373.9 597.4L373.9 588.2L367.2 578.7"/><path class="bw4" d="M373.9 597.4L373.9 588.2L367.2 578.7"/><path class="br4" d="M373.9 592.8L373.9 588.2L370.5 583.5"/>
<use href="#o4" x="373.9" y="588.2"/>
<use href="#h4" x="367.2" y="578.7"/>
<use href="#h4" x="373.9" y="597.4"/>
<path class="bd" d="M515.8 232.1L510 228L510.4 215.2"/><path class="bw4" d="M515.8 232.1L510 228L510.4 215.2"/><path class="br4" d="M512.9 230L510 228L510.2 221.6"/>
<use href="#o4" x="510" y="228"/>
<use href="#h4" x="510.4" y="215.2"/>
<use href="#h4" x="515.8" y="232.1"/>
<path class="bd" d="M664 674.7L661.9 683.7L667.9 679.4"/><path class="bw4" d="M664 674.7L661.9 683.7L667.9 679.4"/><path class="br4" d="M662.9 679.2L661.9 683.7L664.9 681.5"/>
<use href="#h4" x="667.9" y="679.4"/>
<use href="#o4" x="661.9" y="683.7"/>
<use href="#h4" x="664" y="674.7"/>
<path class="bd" d="M539.7 325L543.1 319.5L553.2 326.4"/><path class="bw4" d="M539.7 325L543.1 319.5L553.2 326.4"/><path class="br4" d="M541.4 322.3L543.1 319.5L548.2 323"/>
<use href="#h4" x="539.7" y="325"/>
<use href="#o4" x="543.1" y="319.5"/>
<use href="#h4" x="553.2" y="326.4"/>
<path class="bd" d="M376.2 618.7L384.6 626.8L386.6 635.8"/><path class="bw4" d="M376.2 618.7L384.6 626.8L386.6 635.8"/><path class="br4" d="M380.4 622.8L384.6 626.8L385.6 631.3"/>
<use href="#o4" x="384.6" y="626.8"/>
<use href="#h4" x="376.2" y="618.7"/>
<use href="#h4" x="386.6" y="635.8"/>
<path class="bd" d="M388 383.1L396.5 375.4L394.7 377.5"/><path class="bw4" d="M388 383.1L396.5 375.4L394.7 377.5"/><path class="br4" d="M392.3 379.3L396.5 375.4L395.6 376.5"/>
<use href="#h4" x="388" y="383.1"/>
<use href="#o4" x="396.5" y="375.4"/>
<use href="#h4" x="394.7" y="377.5"/>
<path class="bd" d="M378.1 252.1L386.9 261.4L389.4 264.5"/><path class="bw4" d="M378.1 252.1L386.9 261.4L389.4 264.5"/><path class="br4" d="M382.5 256.8L386.9 261.4L388.2 263"/>
<use href="#h4" x="389.4" y="264.5"/>
<use href="#h4" x="378.1" y="252.1"/>
<use href="#o4" x="386.9" y="261.4"/>
<path class="bd" d="M456.1 462.1L468.8 459.9L471.7 462.8"/><path class="bw4" d="M456.1 462.1L468.8 459.9L471.7 462.8"/><path class="br4" d="M462.4 461L468.8 459.9L470.3 461.3"/>
<use href="#h4" x="456.1" y="462.1"/>
<use href="#o4" x="468.8" y="459.9"/>
<use href="#h4" x="471.7" y="462.8"/>
<path class="bd" d="M357.5 444.9L369 440.3L368.7 427.9"/><path class="bw4" d="M357.5 444.9L369 440.3L368.7 427.9"/><path class="br4" d="M363.3 442.6L369 440.3L368.9 434.1"/>
<use href="#h4" x="357.5" y="444.9"/>
<use href="#h4" x="368.7" y="427.9"/>
<use href="#o4" x="369" y="440.3"/>
<path class="bd" d="M353.3 265.4L341.9 269.2L333.6 260.3"/><path class="bw4" d="M353.3 265.4L341.9 269.2L333.6 260.3"/><path class="br4" d="M347.6 267.3L341.9 269.2L337.8 264.7"/>
<use href="#h4" x="353.3" y="265.4"/>
<use href="#h4" x="333.6" y="260.3"/>
<use href="#o4" x="341.9" y="269.2"/>
<path class="bd" d="M405.7 399.9L402.6 412.2L390.2 411.7"/><path class="bw4" d="M405.7 399.9L402.6 412.2L390.2 411.7"/><path class="br4" d="M404.1 406.1L402.6 412.2L396.4 412"/>
<use href="#h4" x="405.7" y="399.9"/>
<use href="#o4" x="402.6" y="412.2"/>
<use href="#h4" x="390.2" y="411.7"/>
<path class="bd" d="M263.1 326.2L257.1 317.7L262.1 306.3"/><path class="bw4" d="M263.1 326.2L257.1 317.7L262.1 306.3"/><path class="br4" d="M260.1 322L257.1 317.7L259.6 312"/>
<use href="#o4" x="257.1" y="317.7"/>
<use href="#h4" x="262.1" y="306.3"/>
<use href="#h4" x="263.1" y="326.2"/>
<path class="bd" d="M278.6 248.8L276.5 250.2L263.6 249.9"/><path class="bw4" d="M278.6 248.8L276.5 250.2L263.6 249.9"/><path class="br4" d="M277.5 249.5L276.5 250.2L270.1 250.1"/>
<use href="#h4" x="263.6" y="249.9"/>
<use href="#o4" x="276.5" y="250.2"/>
<use href="#h4" x="278.6" y="248.8"/>
<path class="bd" d="M508.1 418.3L500 408.4L497 409.4"/><path class="bw4" d="M508.1 418.3L500 408.4L497 409.4"/><path class="br4" d="M504 413.3L500 408.4L498.5 408.9"/>
<use href="#h4" x="497" y="409.4"/>
<use href="#o4" x="500" y="408.4"/>
<use href="#h4" x="508.1" y="418.3"/>
<path class="bd" d="M642.3 387.1L639.9 379.2L631.5 385.6"/><path class="bw4" d="M642.3 387.1L639.9 379.2L631.5 385.6"/><path class="br4" d="M641.1 383.1L639.9 379.2L635.7 382.4"/>
<use href="#h4" x="631.5" y="385.6"/>
<use href="#o4" x="639.9" y="379.2"/>
<use href="#h4" x="642.3" y="387.1"/>
<path class="bd" d="M449.7 385.2L456 393.1L462.5 385.1"/><path class="bw4" d="M449.7 385.2L456 393.1L462.5 385.1"/><path class="br4" d="M452.8 389.1L456 393.1L459.2 389.1"/>
<use href="#h4" x="449.7" y="385.2"/>
<use href="#o4" x="456" y="393.1"/>
<use href="#h4" x="462.5" y="385.1"/>
<path class="bd" d="M573.3 653.2L560.7 653.5L558.8 664.7"/><path class="bw4" d="M573.3 653.2L560.7 653.5L558.8 664.7"/><path class="br4" d="M567 653.3L560.7 653.5L559.8 659.1"/>
<use href="#h4" x="558.8" y="664.7"/>
<use href="#o4" x="560.7" y="653.5"/>
<use href="#h4" x="573.3" y="653.2"/>
<path class="bd" d="M500.1 352.5L505.6 363.5L501.1 365.1"/><path class="bw4" d="M500.1 352.5L505.6 363.5L501.1 365.1"/><path class="br4" d="M502.9 358L505.6 363.5L503.4 364.3"/>
<use href="#h4" x="500.1" y="352.5"/>
<use href="#o4" x="505.6" y="363.5"/>
<use href="#h4" x="501.1" y="365.1"/>
<path class="bd" d="M489.1 619.4L487.3 623L475.6 628.5"/><path class="bw4" d="M489.1 619.4L487.3 623L475.6 628.5"/><path class="br4" d="M488.2 621.2L487.3 623L481.5 625.7"/>
<use href="#h4" x="475.6" y="628.5"/>
<use href="#o4" x="487.3" y="623"/>
<use href="#h4" x="489.1" y="619.4"/>
<path class="bd" d="M694.7 573.1L693.2 570L703 575.9"/><path class="bw4" d="M694.7 573.1L693.2 570L703 575.9"/><path class="br4" d="M693.9 571.6L693.2 570L698.1 573"/>
<use href="#h4" x="694.7" y="573.1"/>
<use href="#o4" x="693.2" y="570"/>
<use href="#h4" x="703" y="575.9"/>
<path class="bd" d="M263.5 557.6L263.8 559.9L264.1 548.2"/><path class="bw4" d="M263.5 557.6L263.8 559.9L264.1 548.2"/><path class="br4" d="M263.7 558.7L263.8 559.9L264 554"/>
<use href="#h4" x="263.5" y="557.6"/>
<use href="#o4" x="263.8" y="559.9"/>
<use href="#h4" x="264.1" y="548.2"/>
<path class="bd" d="M337.2 566.3L332.2 558.7L319.8 562.4"/><path class="bw4" d="M337.2 566.3L332.2 558.7L319.8 562.4"/><path class="br4" d="M334.7 562.5L332.2 558.7L326 560.6"/>
<use href="#h4" x="337.2" y="566.3"/>
<use href="#o4" x="332.2" y="558.7"/>
<use href="#h4" x="319.8" y="562.4"/>
<path class="bd" d="M536.7 622.5L541.8 613.4L552.2 619"/><path class="bw4" d="M536.7 622.5L541.8 613.4L552.2 619"/><path class="br4" d="M539.2 618L541.8 613.4L547 616.2"/>
<use href="#h4" x="536.7" y="622.5"/>
<use href="#o4" x="541.8" y="613.4"/>
<use href="#h4" x="552.2" y="619"/>
<path class="bd" d="M283.8 432.3L290.8 425.1L290.9 413.3"/><path class="bw4" d="M283.8 432.3L290.8 425.1L290.9 413.3"/><path class="br4" d="M287.3 428.7L290.8 425.1L290.9 419.2"/>
<use href="#o4" x="290.8" y="425.1"/>
<use href="#h4" x="290.9" y="413.3"/>
<use href="#h4" x="283.8" y="432.3"/>
<path class="bd" d="M465 385L446 398"/><path class="bc" d="M465 385L446 398"/><path class="bd" d="M446 398L422 387"/><path class="bc" d="M446 398L422 387"/><path class="bd" d="M446 398L444 418"/><path class="bc" d="M446 398L444 418"/><path class="bd" d="M444 418L454 436"/><path class="bc" d="M444 418L454 436"/><path class="bd" d="M454 436L445 451"/><path class="bc" d="M454 436L445 451"/><path class="bd" d="M465 385L478 372"/><path class="bc" d="M465 385L478 372"/><path class="bd" d="M445 451L432 462"/><path class="bc" d="M445 451L432 462"/><path class="bd" d="M445 451L455 465"/><path class="bc" d="M445 451L455 465"/><use href="#c" x="465" y="385"/><use href="#c" x="454" y="436"/><use href="#c" x="445" y="451"/><use href="#c" x="446" y="398"/><use href="#n" x="422" y="387"/><use href="#n" x="444" y="418"/><use href="#h2" x="478" y="372"/><use href="#h2" x="432" y="462"/><use href="#h2" x="455" y="465"/><use href="#h2" x="476" y="391"/>
<path class="bd" d="M680.5 523.9L681.8 511L694.1 509.3"/><path class="bw4" d="M680.5 523.9L681.8 511L694.1 509.3"/><path class="br4" d="M681.1 517.4L681.8 511L687.9 510.2"/>
<use href="#h4" x="694.1" y="509.3"/>
<use href="#o4" x="681.8" y="511"/>
<use href="#h4" x="680.5" y="523.9"/>
<path class="bd" d="M348.3 315.3L339 306.4L345.4 295.1"/><path class="bw4" d="M348.3 315.3L339 306.4L345.4 295.1"/><path class="br4" d="M343.7 310.8L339 306.4L342.2 300.7"/>
<use href="#h4" x="348.3" y="315.3"/>
<use href="#o4" x="339" y="306.4"/>
<use href="#h4" x="345.4" y="295.1"/>
<path class="bd" d="M398.3 536.1L398.1 523.1L399 519.8"/><path class="bw4" d="M398.3 536.1L398.1 523.1L399 519.8"/><path class="br4" d="M398.2 529.6L398.1 523.1L398.6 521.5"/>
<use href="#o4" x="398.1" y="523.1"/>
<use href="#h4" x="398.3" y="536.1"/>
<use href="#h4" x="399" y="519.8"/>
<path class="bd" d="M651.4 544.8L661.4 552.7L664.4 558.5"/><path class="bw4" d="M651.4 544.8L661.4 552.7L664.4 558.5"/><path class="br4" d="M656.4 548.8L661.4 552.7L662.9 555.6"/>
<use href="#h4" x="664.4" y="558.5"/>
<use href="#h4" x="651.4" y="544.8"/>
<use href="#o4" x="661.4" y="552.7"/>
<path class="bd" d="M284.9 618.4L278.1 607.3L266 611"/><path class="bw4" d="M284.9 618.4L278.1 607.3L266 611"/><path class="br4" d="M281.5 612.8L278.1 607.3L272.1 609.2"/>
<use href="#h4" x="284.9" y="618.4"/>
<use href="#o4" x="278.1" y="607.3"/>
<use href="#h4" x="266" y="611"/>
<path class="bd" d="M358.4 683.6L362.6 682L356.9 691.6"/><path class="bw4" d="M358.4 683.6L362.6 682L356.9 691.6"/><path class="br4" d="M360.5 682.8L362.6 682L359.8 686.8"/>
<use href="#h4" x="356.9" y="691.6"/>
<use href="#o4" x="362.6" y="682"/>
<use href="#h4" x="358.4" y="683.6"/>
<path class="bd" d="M654.2 341.1L662.8 331.7L669.1 336.1"/><path class="bw4" d="M654.2 341.1L662.8 331.7L669.1 336.1"/><path class="br4" d="M658.5 336.4L662.8 331.7L666 333.9"/>
<use href="#h4" x="654.2" y="341.1"/>
<use href="#o4" x="662.8" y="331.7"/>
<use href="#h4" x="669.1" y="336.1"/>
<path class="bd" d="M677.3 416.1L682.7 427.8L683.8 428.4"/><path class="bw4" d="M677.3 416.1L682.7 427.8L683.8 428.4"/><path class="br4" d="M680 421.9L682.7 427.8L683.2 428.1"/>
<use href="#h4" x="677.3" y="416.1"/>
<use href="#o4" x="682.7" y="427.8"/>
<use href="#h4" x="683.8" y="428.4"/>
<path class="bd" d="M603 312.8L603.1 324.9L591.2 326.2"/><path class="bw4" d="M603 312.8L603.1 324.9L591.2 326.2"/><path class="br4" d="M603.1 318.8L603.1 324.9L597.2 325.6"/>
<use href="#h4" x="591.2" y="326.2"/>
<use href="#o4" x="603.1" y="324.9"/>
<use href="#h4" x="603" y="312.8"/>
<path class="bd" d="M415.8 606.8L404.8 607.8L405.4 619.7"/><path class="bw3" d="M415.8 606.8L404.8 607.8L405.4 619.7"/><path class="br3" d="M410.3 607.3L404.8 607.8L405.1 613.8"/>
<use href="#h3" x="415.8" y="606.8"/>
<use href="#o3" x="404.8" y="607.8"/>
<use href="#h3" x="405.4" y="619.7"/>
<path class="bd" d="M342.3 407.6L331.6 410.9L326.5 399.4"/><path class="bw3" d="M342.3 407.6L331.6 410.9L326.5 399.4"/><path class="br3" d="M336.9 409.2L331.6 410.9L329 405.1"/>
<use href="#h3" x="342.3" y="407.6"/>
<use href="#o3" x="331.6" y="410.9"/>
<use href="#h3" x="326.5" y="399.4"/>
<path class="bd" d="M620 501L626.4 500.7L630.6 513"/><path class="bw3" d="M620 501L626.4 500.7L630.6 513"/><path class="br3" d="M623.2 500.9L626.4 500.7L628.5 506.9"/>
<use href="#h3" x="630.6" y="513"/>
<use href="#o3" x="626.4" y="500.7"/>
<use href="#h3" x="620" y="501"/>
<path class="bd" d="M327.9 366.6L315 368L310.4 373.9"/><path class="bw3" d="M327.9 366.6L315 368L310.4 373.9"/><path class="br3" d="M321.5 367.3L315 368L312.7 371"/>
<use href="#h3" x="310.4" y="373.9"/>
<use href="#h3" x="327.9" y="366.6"/>
<use href="#o3" x="315" y="368"/>
<path class="bd" d="M403.9 271.4L406.3 284.3L401.1 287.7"/><path class="bw3" d="M403.9 271.4L406.3 284.3L401.1 287.7"/><path class="br3" d="M405.1 277.8L406.3 284.3L403.7 286"/>
<use href="#h3" x="403.9" y="271.4"/>
<use href="#o3" x="406.3" y="284.3"/>
<use href="#h3" x="401.1" y="287.7"/>
<path class="bd" d="M593.5 472.8L590.4 462.5L587.4 467.7"/><path class="bw3" d="M593.5 472.8L590.4 462.5L587.4 467.7"/><path class="br3" d="M591.9 467.6L590.4 462.5L588.9 465.1"/>
<use href="#h3" x="593.5" y="472.8"/>
<use href="#o3" x="590.4" y="462.5"/>
<use href="#h3" x="587.4" y="467.7"/>
<path class="bd" d="M702.1 272.2L692.4 267.5L698.1 265.3"/><path class="bw3" d="M702.1 272.2L692.4 267.5L698.1 265.3"/><path class="br3" d="M697.3 269.8L692.4 267.5L695.3 266.4"/>
<use href="#h3" x="702.1" y="272.2"/>
<use href="#o3" x="692.4" y="267.5"/>
<use href="#h3" x="698.1" y="265.3"/>
<path class="bd" d="M559.7 445.4L559.9 443.1L548.4 447.8"/><path class="bw3" d="M559.7 445.4L559.9 443.1L548.4 447.8"/><path class="br3" d="M559.8 444.3L559.9 443.1L554.2 445.5"/>
<use href="#h3" x="559.7" y="445.4"/>
<use href="#o3" x="559.9" y="443.1"/>
<use href="#h3" x="548.4" y="447.8"/>
<path class="bd" d="M292.2 687.5L284.4 687.7L290.1 696.4"/><path class="bw3" d="M292.2 687.5L284.4 687.7L290.1 696.4"/><path class="br3" d="M288.3 687.6L284.4 687.7L287.3 692"/>
<use href="#h3" x="290.1" y="696.4"/>
<use href="#o3" x="284.4" y="687.7"/>
<use href="#h3" x="292.2" y="687.5"/>
<path class="bd" d="M493.2 469.3L503.1 464L505.8 452.8"/><path class="bw3" d="M493.2 469.3L503.1 464L505.8 452.8"/><path class="br3" d="M498.1 466.6L503.1 464L504.4 458.4"/>
<use href="#o3" x="503.1" y="464"/>
<use href="#h3" x="505.8" y="452.8"/>
<use href="#h3" x="493.2" y="469.3"/>
<path class="bd" d="M458.6 349.7L446.4 346.6L444.3 354.2"/><path class="bw3" d="M458.6 349.7L446.4 346.6L444.3 354.2"/><path class="br3" d="M452.5 348.2L446.4 346.6L445.3 350.4"/>
<use href="#h3" x="458.6" y="349.7"/>
<use href="#o3" x="446.4" y="346.6"/>
<use href="#h3" x="444.3" y="354.2"/>
<path class="bd" d="M415.7 677.7L427 679.7L436.3 679.7"/><path class="bw3" d="M415.7 677.7L427 679.7L436.3 679.7"/><path class="br3" d="M421.3 678.7L427 679.7L431.6 679.7"/>
<use href="#h3" x="436.3" y="679.7"/>
<use href="#h3" x="415.7" y="677.7"/>
<use href="#o3" x="427" y="679.7"/>
<path class="bd" d="M660.7 622.1L656.4 620L663 628.7"/><path class="bw3" d="M660.7 622.1L656.4 620L663 628.7"/><path class="br3" d="M658.5 621.1L656.4 620L659.7 624.4"/>
<use href="#h3" x="660.7" y="622.1"/>
<use href="#o3" x="656.4" y="620"/>
<use href="#h3" x="663" y="628.7"/>
<path class="bd" d="M352.6 508.8L345.3 513.1L348.9 505.5"/><path class="bw3" d="M352.6 508.8L345.3 513.1L348.9 505.5"/><path class="br3" d="M348.9 511L345.3 513.1L347.1 509.3"/>
<use href="#h3" x="352.6" y="508.8"/>
<use href="#o3" x="345.3" y="513.1"/>
<use href="#h3" x="348.9" y="505.5"/>
<path class="bd" d="M363.8 557.5L371.1 563.7L369.2 556.8"/><path class="bw3" d="M363.8 557.5L371.1 563.7L369.2 556.8"/><path class="br3" d="M367.4 560.6L371.1 563.7L370.1 560.3"/>
<use href="#h3" x="369.2" y="556.8"/>
<use href="#o3" x="371.1" y="563.7"/>
<use href="#h3" x="363.8" y="557.5"/>
<path class="bd" d="M529 514.5L519.4 518.9L508.8 519.6"/><path class="bw3" d="M529 514.5L519.4 518.9L508.8 519.6"/><path class="br3" d="M524.2 516.7L519.4 518.9L514.1 519.3"/>
<use href="#o3" x="519.4" y="518.9"/>
<use href="#h3" x="529" y="514.5"/>
<use href="#h3" x="508.8" y="519.6"/>
<path class="bd" d="M685.4 394.7L698 393.6L697.5 394.3"/><path class="bw3" d="M685.4 394.7L698 393.6L697.5 394.3"/><path class="br3" d="M691.7 394.2L698 393.6L697.7 394"/>
<use href="#h3" x="697.5" y="394.3"/>
<use href="#o3" x="698" y="393.6"/>
<use href="#h3" x="685.4" y="394.7"/>
<path class="bd" d="M597.1 281.3L605.8 272.7L616.1 273.3"/><path class="bw3" d="M597.1 281.3L605.8 272.7L616.1 273.3"/><path class="br3" d="M601.5 277L605.8 272.7L611 273"/>
<use href="#o3" x="605.8" y="272.7"/>
<use href="#h3" x="597.1" y="281.3"/>
<use href="#h3" x="616.1" y="273.3"/>
<path class="bd" d="M407.1 573.9L416.7 567.3L420.6 558.2"/><path class="bw3" d="M407.1 573.9L416.7 567.3L420.6 558.2"/><path class="br3" d="M411.9 570.6L416.7 567.3L418.6 562.7"/>
<use href="#h3" x="420.6" y="558.2"/>
<use href="#h3" x="407.1" y="573.9"/>
<use href="#o3" x="416.7" y="567.3"/>
<path class="bd" d="M529.5 286L535.3 284.8L532.5 272.4"/><path class="bw3" d="M529.5 286L535.3 284.8L532.5 272.4"/><path class="br3" d="M532.4 285.4L535.3 284.8L533.9 278.6"/>
<use href="#h3" x="529.5" y="286"/>
<use href="#o3" x="535.3" y="284.8"/>
<use href="#h3" x="532.5" y="272.4"/>
<path class="bd" d="M507.2 242.1L498.8 249.8L490.9 241.3"/><path class="bw3" d="M507.2 242.1L498.8 249.8L490.9 241.3"/><path class="br3" d="M503 245.9L498.8 249.8L494.8 245.5"/>
<use href="#h3" x="507.2" y="242.1"/>
<use href="#o3" x="498.8" y="249.8"/>
<use href="#h3" x="490.9" y="241.3"/>
<path class="bd" d="M400.4 331.8L397.9 344.8L389.7 346.9"/><path class="bw3" d="M400.4 331.8L397.9 344.8L389.7 346.9"/><path class="br3" d="M399.2 338.3L397.9 344.8L393.8 345.9"/>
<use href="#h3" x="389.7" y="346.9"/>
<use href="#h3" x="400.4" y="331.8"/>
<use href="#o3" x="397.9" y="344.8"/>
<path class="bd" d="M653.5 275.9L642.6 272.4L645 275.6"/><path class="bw3" d="M653.5 275.9L642.6 272.4L645 275.6"/><path class="br3" d="M648 274.1L642.6 272.4L643.8 274"/>
<use href="#h3" x="645" y="275.6"/>
<use href="#o3" x="642.6" y="272.4"/>
<use href="#h3" x="653.5" y="275.9"/>
<path class="bd" d="M516.4 554.7L506.6 552.8L509.2 561.2"/><path class="bw3" d="M516.4 554.7L506.6 552.8L509.2 561.2"/><path class="br3" d="M511.5 553.8L506.6 552.8L507.9 557"/>
<use href="#h3" x="516.4" y="554.7"/>
<use href="#o3" x="506.6" y="552.8"/>
<use href="#h3" x="509.2" y="561.2"/>
<path class="bd" d="M695.2 612.4L699.9 600.4L689.1 593.4"/><path class="bw3" d="M695.2 612.4L699.9 600.4L689.1 593.4"/><path class="br3" d="M697.6 606.4L699.9 600.4L694.5 596.9"/>
<use href="#h3" x="689.1" y="593.4"/>
<use href="#o3" x="699.9" y="600.4"/>
<use href="#h3" x="695.2" y="612.4"/>
<path class="bd" d="M315.2 335.8L310.3 328.4L297.5 332"/><path class="bw3" d="M315.2 335.8L310.3 328.4L297.5 332"/><path class="br3" d="M312.7 332.1L310.3 328.4L303.9 330.2"/>
<use href="#h3" x="297.5" y="332"/>
<use href="#o3" x="310.3" y="328.4"/>
<use href="#h3" x="315.2" y="335.8"/>
<path class="bd" d="M497.8 356.2L499 344.4L486.9 338.9"/><path class="bw3" d="M497.8 356.2L499 344.4L486.9 338.9"/><path class="br3" d="M498.4 350.3L499 344.4L492.9 341.7"/>
<use href="#h3" x="497.8" y="356.2"/>
<use href="#h3" x="486.9" y="338.9"/>
<use href="#o3" x="499" y="344.4"/>
<path class="bd" d="M637.8 478.2L635.5 468L624.4 462.4"/><path class="bw3" d="M637.8 478.2L635.5 468L624.4 462.4"/><path class="br3" d="M636.7 473.1L635.5 468L630 465.2"/>
<use href="#o3" x="635.5" y="468"/>
<use href="#h3" x="624.4" y="462.4"/>
<use href="#h3" x="637.8" y="478.2"/>
<path class="bd" d="M575.8 537L574.6 543.7L564.1 538.4"/><path class="bw3" d="M575.8 537L574.6 543.7L564.1 538.4"/><path class="br3" d="M575.2 540.3L574.6 543.7L569.4 541.1"/>
<use href="#h3" x="564.1" y="538.4"/>
<use href="#o3" x="574.6" y="543.7"/>
<use href="#h3" x="575.8" y="537"/>
<path class="bd" d="M469.4 308L462.2 297.2L449.8 300.2"/><path class="bw3" d="M469.4 308L462.2 297.2L449.8 300.2"/><path class="br3" d="M465.8 302.6L462.2 297.2L456 298.7"/>
<use href="#o3" x="462.2" y="297.2"/>
<use href="#h3" x="469.4" y="308"/>
<use href="#h3" x="449.8" y="300.2"/>
<path class="bd" d="M683.6 475.3L692.6 472.3L691.9 482.3"/><path class="bw3" d="M683.6 475.3L692.6 472.3L691.9 482.3"/><path class="br3" d="M688.1 473.8L692.6 472.3L692.3 477.3"/>
<use href="#h3" x="691.9" y="482.3"/>
<use href="#o3" x="692.6" y="472.3"/>
<use href="#h3" x="683.6" y="475.3"/>
<path class="bd" d="M337.6 366.3L347.9 358.3L345 353.5"/><path class="bw3" d="M337.6 366.3L347.9 358.3L345 353.5"/><path class="br3" d="M342.7 362.3L347.9 358.3L346.4 355.9"/>
<use href="#h3" x="345" y="353.5"/>
<use href="#o3" x="347.9" y="358.3"/>
<use href="#h3" x="337.6" y="366.3"/>
<path class="bd" d="M441.9 263.3L442.7 250L431.4 246.6"/><path class="bw3" d="M441.9 263.3L442.7 250L431.4 246.6"/><path class="br3" d="M442.3 256.6L442.7 250L437 248.3"/>
<use href="#h3" x="441.9" y="263.3"/>
<use href="#o3" x="442.7" y="250"/>
<use href="#h3" x="431.4" y="246.6"/>
<path class="bd" d="M549.1 363L556.5 352.9L557.3 355.1"/><path class="bw3" d="M549.1 363L556.5 352.9L557.3 355.1"/><path class="br3" d="M552.8 357.9L556.5 352.9L556.9 354"/>
<use href="#h3" x="557.3" y="355.1"/>
<use href="#o3" x="556.5" y="352.9"/>
<use href="#h3" x="549.1" y="363"/>
<path class="bd" d="M478.9 677.6L469.3 681.1L475.6 682.5"/><path class="bw3" d="M478.9 677.6L469.3 681.1L475.6 682.5"/><path class="br3" d="M474.1 679.3L469.3 681.1L472.5 681.8"/>
<use href="#h3" x="475.6" y="682.5"/>
<use href="#o3" x="469.3" y="681.1"/>
<use href="#h3" x="478.9" y="677.6"/>
<path class="bd" d="M469.3 404.6L462.3 394.8L465.5 383.9"/><path class="bw3" d="M469.3 404.6L462.3 394.8L465.5 383.9"/><path class="br3" d="M465.8 399.7L462.3 394.8L463.9 389.4"/>
<use href="#o3" x="462.3" y="394.8"/>
<use href="#h3" x="469.3" y="404.6"/>
<use href="#h3" x="465.5" y="383.9"/>
<path class="bd" d="M311.7 581.2L320.6 584.4L321.3 597.7"/><path class="bw3" d="M311.7 581.2L320.6 584.4L321.3 597.7"/><path class="br3" d="M316.2 582.8L320.6 584.4L321 591"/>
<use href="#h3" x="311.7" y="581.2"/>
<use href="#h3" x="321.3" y="597.7"/>
<use href="#o3" x="320.6" y="584.4"/>
<path class="bd" d="M383.2 427.7L388.3 435.3L398.4 428"/><path class="bw3" d="M383.2 427.7L388.3 435.3L398.4 428"/><path class="br3" d="M385.8 431.5L388.3 435.3L393.4 431.6"/>
<use href="#h3" x="383.2" y="427.7"/>
<use href="#o3" x="388.3" y="435.3"/>
<use href="#h3" x="398.4" y="428"/>
<path class="bd" d="M292 280.1L299.3 290.9L307.8 287"/><path class="bw3" d="M292 280.1L299.3 290.9L307.8 287"/><path class="br3" d="M295.6 285.5L299.3 290.9L303.6 289"/>
<use href="#h3" x="307.8" y="287"/>
<use href="#o3" x="299.3" y="290.9"/>
<use href="#h3" x="292" y="280.1"/>
<path class="bd" d="M274.8 496.3L275.2 489.7L263.5 492.5"/><path class="bw3" d="M274.8 496.3L275.2 489.7L263.5 492.5"/><path class="br3" d="M275 493L275.2 489.7L269.3 491.1"/>
<use href="#h3" x="274.8" y="496.3"/>
<use href="#o3" x="275.2" y="489.7"/>
<use href="#h3" x="263.5" y="492.5"/>
<path class="bd" d="M533.5 410.3L539.8 399.3L531.5 389.3"/><path class="bw3" d="M533.5 410.3L539.8 399.3L531.5 389.3"/><path class="br3" d="M536.6 404.8L539.8 399.3L535.6 394.3"/>
<use href="#h3" x="533.5" y="410.3"/>
<use href="#h3" x="531.5" y="389.3"/>
<use href="#o3" x="539.8" y="399.3"/>
<path class="bd" d="M697.3 665.2L699.8 673.6L689.2 672.4"/><path class="bw3" d="M697.3 665.2L699.8 673.6L689.2 672.4"/><path class="br3" d="M698.5 669.4L699.8 673.6L694.5 673"/>
<use href="#h3" x="689.2" y="672.4"/>
<use href="#o3" x="699.8" y="673.6"/>
<use href="#h3" x="697.3" y="665.2"/>
<path class="bd" d="M466.7 595.9L458.5 600.6L456.7 590.3"/><path class="bw3" d="M466.7 595.9L458.5 600.6L456.7 590.3"/><path class="br3" d="M462.6 598.2L458.5 600.6L457.6 595.5"/>
<use href="#h3" x="456.7" y="590.3"/>
<use href="#o3" x="458.5" y="600.6"/>
<use href="#h3" x="466.7" y="595.9"/>
<path class="bd" d="M252 453.6L265.3 454.8L269.7 442.3"/><path class="bw3" d="M252 453.6L265.3 454.8L269.7 442.3"/><path class="br3" d="M258.6 454.2L265.3 454.8L267.5 448.5"/>
<use href="#h3" x="252" y="453.6"/>
<use href="#o3" x="265.3" y="454.8"/>
<use href="#h3" x="269.7" y="442.3"/>
<path class="bd" d="M573.5 492.7L562.3 498.6L552.5 490.9"/><path class="bw3" d="M573.5 492.7L562.3 498.6L552.5 490.9"/><path class="br3" d="M567.9 495.7L562.3 498.6L557.4 494.7"/>
<use href="#h3" x="552.5" y="490.9"/>
<use href="#h3" x="573.5" y="492.7"/>
<use href="#o3" x="562.3" y="498.6"/>
<path class="bd" d="M252.2 563.7L255.1 576.5L258.6 576.7"/><path class="bw3" d="M252.2 563.7L255.1 576.5L258.6 576.7"/><path class="br3" d="M253.7 570.1L255.1 576.5L256.9 576.6"/>
<use href="#h3" x="258.6" y="576.7"/>
<use href="#o3" x="255.1" y="576.5"/>
<use href="#h3" x="252.2" y="563.7"/>
<path class="bd" d="M619.7 695.9L630.5 688L634.9 687.6"/><path class="bw3" d="M619.7 695.9L630.5 688L634.9 687.6"/><path class="br3" d="M625.1 691.9L630.5 688L632.7 687.8"/>
<use href="#h3" x="634.9" y="687.6"/>
<use href="#h3" x="619.7" y="695.9"/>
<use href="#o3" x="630.5" y="688"/>
<path class="bd" d="M413.1 499.4L420.4 506.9L429.9 512.2"/><path class="bw3" d="M413.1 499.4L420.4 506.9L429.9 512.2"/><path class="br3" d="M416.7 503.1L420.4 506.9L425.2 509.6"/>
<use href="#h3" x="413.1" y="499.4"/>
<use href="#h3" x="429.9" y="512.2"/>
<use href="#o3" x="420.4" y="506.9"/>
<path class="bd" d="M555.6 324.2L566.9 317L563.1 305.5"/><path class="bw3" d="M555.6 324.2L566.9 317L563.1 305.5"/><path class="br3" d="M561.3 320.6L566.9 317L565 311.2"/>
<use href="#h3" x="555.6" y="324.2"/>
<use href="#o3" x="566.9" y="317"/>
<use href="#h3" x="563.1" y="305.5"/>
<path class="bd" d="M649.6 443.5L654.2 435L658 424.2"/><path class="bw3" d="M649.6 443.5L654.2 435L658 424.2"/><path class="br3" d="M651.9 439.3L654.2 435L656.1 429.6"/>
<use href="#o3" x="654.2" y="435"/>
<use href="#h3" x="658" y="424.2"/>
<use href="#h3" x="649.6" y="443.5"/>
<path class="bd" d="M280 558.9L287.4 561.6L286.8 575"/><path class="bw3" d="M280 558.9L287.4 561.6L286.8 575"/><path class="br3" d="M283.7 560.3L287.4 561.6L287.1 568.3"/>
<use href="#h3" x="286.8" y="575"/>
<use href="#o3" x="287.4" y="561.6"/>
<use href="#h3" x="280" y="558.9"/>
<path class="bd" d="M646 566.4L652.8 556.6L656.1 548"/><path class="bw3" d="M646 566.4L652.8 556.6L656.1 548"/><path class="br3" d="M649.4 561.5L652.8 556.6L654.4 552.3"/>
<use href="#h3" x="656.1" y="548"/>
<use href="#h3" x="646" y="566.4"/>
<use href="#o3" x="652.8" y="556.6"/>
<path class="bd" d="M605.6 520.8L603.1 509.2L614.8 505.9"/><path class="bw3" d="M605.6 520.8L603.1 509.2L614.8 505.9"/><path class="br3" d="M604.3 515L603.1 509.2L608.9 507.6"/>
<use href="#h3" x="605.6" y="520.8"/>
<use href="#o3" x="603.1" y="509.2"/>
<use href="#h3" x="614.8" y="505.9"/>
<path class="bd" d="M709.3 519L699.9 517.6L694.3 505.7"/><path class="bw3" d="M709.3 519L699.9 517.6L694.3 505.7"/><path class="br3" d="M704.6 518.3L699.9 517.6L697.1 511.6"/>
<use href="#o3" x="699.9" y="517.6"/>
<use href="#h3" x="694.3" y="505.7"/>
<use href="#h3" x="709.3" y="519"/>
<path class="bd" d="M462.1 501.4L464 503.9L476.2 509.6"/><path class="bw3" d="M462.1 501.4L464 503.9L476.2 509.6"/><path class="br3" d="M463.1 502.7L464 503.9L470.1 506.8"/>
<use href="#h3" x="476.2" y="509.6"/>
<use href="#o3" x="464" y="503.9"/>
<use href="#h3" x="462.1" y="501.4"/>
<path class="bd" d="M529.3 669.8L540.7 666.4L538.8 670.3"/><path class="bw3" d="M529.3 669.8L540.7 666.4L538.8 670.3"/><path class="br3" d="M535 668.1L540.7 666.4L539.8 668.3"/>
<use href="#h3" x="529.3" y="669.8"/>
<use href="#o3" x="540.7" y="666.4"/>
<use href="#h3" x="538.8" y="670.3"/>
<path class="bd" d="M270.6 393.5L273 382.6L282.3 386.6"/><path class="bw3" d="M270.6 393.5L273 382.6L282.3 386.6"/><path class="br3" d="M271.8 388L273 382.6L277.7 384.6"/>
<use href="#h3" x="282.3" y="386.6"/>
<use href="#o3" x="273" y="382.6"/>
<use href="#h3" x="270.6" y="393.5"/>
<path class="bd" d="M681.7 331.1L688.9 336.7L689.1 349.8"/><path class="bw3" d="M681.7 331.1L688.9 336.7L689.1 349.8"/><path class="br3" d="M685.3 333.9L688.9 336.7L689 343.2"/>
<use href="#o3" x="688.9" y="336.7"/>
<use href="#h3" x="689.1" y="349.8"/>
<use href="#h3" x="681.7" y="331.1"/>
<path class="bd" d="M405.2 621.1L399 632.7L385.9 629.6"/><path class="bw3" d="M405.2 621.1L399 632.7L385.9 629.6"/><path class="br3" d="M402.1 626.9L399 632.7L392.5 631.1"/>
<use href="#o3" x="399" y="632.7"/>
<use href="#h3" x="385.9" y="629.6"/>
<use href="#h3" x="405.2" y="621.1"/>
<path class="bd" d="M640.8 640.3L637.9 646.8L624.5 646.4"/><path class="bw3" d="M640.8 640.3L637.9 646.8L624.5 646.4"/><path class="br3" d="M639.4 643.5L637.9 646.8L631.2 646.6"/>
<use href="#h3" x="640.8" y="640.3"/>
<use href="#o3" x="637.9" y="646.8"/>
<use href="#h3" x="624.5" y="646.4"/>
<path class="bd" d="M585.4 254L574.3 259.5L577.1 272.7"/><path class="bw3" d="M585.4 254L574.3 259.5L577.1 272.7"/><path class="br3" d="M579.9 256.7L574.3 259.5L575.7 266.1"/>
<use href="#h3" x="585.4" y="254"/>
<use href="#o3" x="574.3" y="259.5"/>
<use href="#h3" x="577.1" y="272.7"/>
<path class="bd" d="M338.6 463.8L347.6 467.4L352.4 455.8"/><path class="bw3" d="M338.6 463.8L347.6 467.4L352.4 455.8"/><path class="br3" d="M343.1 465.6L347.6 467.4L350 461.6"/>
<use href="#h3" x="352.4" y="455.8"/>
<use href="#o3" x="347.6" y="467.4"/>
<use href="#h3" x="338.6" y="463.8"/>
<path class="bd" d="M314.4 463.8L308.8 452.7L295.5 454.9"/><path class="bw3" d="M314.4 463.8L308.8 452.7L295.5 454.9"/><path class="br3" d="M311.6 458.2L308.8 452.7L302.2 453.8"/>
<use href="#h3" x="314.4" y="463.8"/>
<use href="#h3" x="295.5" y="454.9"/>
<use href="#o3" x="308.8" y="452.7"/>
<path class="bd" d="M653.6 319.2L652.7 320.2L644.5 330.7"/><path class="bw3" d="M653.6 319.2L652.7 320.2L644.5 330.7"/><path class="br3" d="M653.2 319.7L652.7 320.2L648.6 325.4"/>
<use href="#h3" x="644.5" y="330.7"/>
<use href="#o3" x="652.7" y="320.2"/>
<use href="#h3" x="653.6" y="319.2"/>
<path class="bd" d="M414 289.6L427.5 290.5L431.1 291.8"/><path class="bw3" d="M414 289.6L427.5 290.5L431.1 291.8"/><path class="br3" d="M420.8 290L427.5 290.5L429.3 291.2"/>
<use href="#o3" x="427.5" y="290.5"/>
<use href="#h3" x="414" y="289.6"/>
<use href="#h3" x="431.1" y="291.8"/>
<path class="bd" d="M663.5 370.9L670.5 380.8L680.4 374.5"/><path class="bw3" d="M663.5 370.9L670.5 380.8L680.4 374.5"/><path class="br3" d="M667 375.8L670.5 380.8L675.5 377.6"/>
<use href="#h3" x="663.5" y="370.9"/>
<use href="#o3" x="670.5" y="380.8"/>
<use href="#h3" x="680.4" y="374.5"/>
<path class="bd" d="M529 611.6L523.1 619.7L520.9 611.7"/><path class="bw3" d="M529 611.6L523.1 619.7L520.9 611.7"/><path class="br3" d="M526.1 615.7L523.1 619.7L522 615.7"/>
<use href="#h3" x="529" y="611.6"/>
<use href="#o3" x="523.1" y="619.7"/>
<use href="#h3" x="520.9" y="611.7"/>
<path class="bd" d="M529.3 447.7L525.7 457.8L514.7 463"/><path class="bw3" d="M529.3 447.7L525.7 457.8L514.7 463"/><path class="br3" d="M527.5 452.7L525.7 457.8L520.2 460.4"/>
<use href="#o3" x="525.7" y="457.8"/>
<use href="#h3" x="514.7" y="463"/>
<use href="#h3" x="529.3" y="447.7"/>
<path class="bd" d="M288 654.2L301.1 655.3L307.4 655.6"/><path class="bw3" d="M288 654.2L301.1 655.3L307.4 655.6"/><path class="br3" d="M294.6 654.8L301.1 655.3L304.2 655.5"/>
<use href="#o3" x="301.1" y="655.3"/>
<use href="#h3" x="288" y="654.2"/>
<use href="#h3" x="307.4" y="655.6"/>
<path class="bd" d="M560.4 588L556.7 584.5L554 596.1"/><path class="bw3" d="M560.4 588L556.7 584.5L554 596.1"/><path class="br3" d="M558.6 586.3L556.7 584.5L555.4 590.3"/>
<use href="#h3" x="560.4" y="588"/>
<use href="#o3" x="556.7" y="584.5"/>
<use href="#h3" x="554" y="596.1"/>
<path class="bd" d="M390.3 232.6L390.7 244.3L403.9 246.9"/><path class="bw3" d="M390.3 232.6L390.7 244.3L403.9 246.9"/><path class="br3" d="M390.5 238.4L390.7 244.3L397.3 245.6"/>
<use href="#h3" x="403.9" y="246.9"/>
<use href="#o3" x="390.7" y="244.3"/>
<use href="#h3" x="390.3" y="232.6"/>
<path class="bd" d="M584.1 614.8L595.2 622L605.5 614"/><path class="bw3" d="M584.1 614.8L595.2 622L605.5 614"/><path class="br3" d="M589.6 618.4L595.2 622L600.3 618"/>
<use href="#o3" x="595.2" y="622"/>
<use href="#h3" x="584.1" y="614.8"/>
<use href="#h3" x="605.5" y="614"/>
<path class="bd" d="M560.2 413.2L569.2 415.6L580.9 417.7"/><path class="bw3" d="M560.2 413.2L569.2 415.6L580.9 417.7"/><path class="br3" d="M564.7 414.4L569.2 415.6L575 416.6"/>
<use href="#h3" x="560.2" y="413.2"/>
<use href="#h3" x="580.9" y="417.7"/>
<use href="#o3" x="569.2" y="415.6"/>
<path class="bd" d="M669.4 688.1L663.4 676L650.2 678.6"/><path class="bw3" d="M669.4 688.1L663.4 676L650.2 678.6"/><path class="br3" d="M666.4 682.1L663.4 676L656.8 677.3"/>
<use href="#o3" x="663.4" y="676"/>
<use href="#h3" x="650.2" y="678.6"/>
<use href="#h3" x="669.4" y="688.1"/>
<path class="bd" d="M261.3 628.9L272.5 625L282.5 626.6"/><path class="bw3" d="M261.3 628.9L272.5 625L282.5 626.6"/><path class="br3" d="M266.9 626.9L272.5 625L277.5 625.8"/>
<use href="#h3" x="282.5" y="626.6"/>
<use href="#h3" x="261.3" y="628.9"/>
<use href="#o3" x="272.5" y="625"/>
<path class="bd" d="M467 442.1L457.1 442.2L446.7 448.3"/><path class="bw3" d="M467 442.1L457.1 442.2L446.7 448.3"/><path class="br3" d="M462 442.2L457.1 442.2L451.9 445.3"/>
<use href="#h3" x="467" y="442.1"/>
<use href="#h3" x="446.7" y="448.3"/>
<use href="#o3" x="457.1" y="442.2"/>
<path class="bd" d="M476.6 342.9L473.5 334.9L462.3 328.4"/><path class="bw3" d="M476.6 342.9L473.5 334.9L462.3 328.4"/><path class="br3" d="M475.1 338.9L473.5 334.9L467.9 331.7"/>
<use href="#h3" x="476.6" y="342.9"/>
<use href="#h3" x="462.3" y="328.4"/>
<use href="#o3" x="473.5" y="334.9"/>
<path class="bd" d="M264.4 327.2L266.4 318.3L255 311"/><path class="bw3" d="M264.4 327.2L266.4 318.3L255 311"/><path class="br3" d="M265.4 322.8L266.4 318.3L260.7 314.6"/>
<use href="#h3" x="264.4" y="327.2"/>
<use href="#o3" x="266.4" y="318.3"/>
<use href="#h3" x="255" y="311"/>
<path class="bd" d="M445.7 671.9L438.4 682.3L434.9 678.4"/><path class="bw3" d="M445.7 671.9L438.4 682.3L434.9 678.4"/><path class="br3" d="M442 677.1L438.4 682.3L436.6 680.3"/>
<use href="#h3" x="434.9" y="678.4"/>
<use href="#o3" x="438.4" y="682.3"/>
<use href="#h3" x="445.7" y="671.9"/>
<path class="bd" d="M645.7 530L643.8 518.8L638.8 523.5"/><path class="bw3" d="M645.7 530L643.8 518.8L638.8 523.5"/><path class="br3" d="M644.7 524.4L643.8 518.8L641.3 521.2"/>
<use href="#h3" x="645.7" y="530"/>
<use href="#o3" x="643.8" y="518.8"/>
<use href="#h3" x="638.8" y="523.5"/>
<path class="bd" d="M409.1 460.9L402.2 460.2L392.7 450.8"/><path class="bw3" d="M409.1 460.9L402.2 460.2L392.7 450.8"/><path class="br3" d="M405.7 460.5L402.2 460.2L397.5 455.5"/>
<use href="#h3" x="409.1" y="460.9"/>
<use href="#h3" x="392.7" y="450.8"/>
<use href="#o3" x="402.2" y="460.2"/>
<path class="bd" d="M514.5 312.4L518.7 318.5L526 329.2"/><path class="bw3" d="M514.5 312.4L518.7 318.5L526 329.2"/><path class="br3" d="M516.6 315.5L518.7 318.5L522.4 323.9"/>
<use href="#h3" x="514.5" y="312.4"/>
<use href="#h3" x="526" y="329.2"/>
<use href="#o3" x="518.7" y="318.5"/>
<path class="bd" d="M690.1 263.5L683.7 267.2L684 280.9"/><path class="bw3" d="M690.1 263.5L683.7 267.2L684 280.9"/><path class="br3" d="M686.9 265.4L683.7 267.2L683.8 274.1"/>
<use href="#o3" x="683.7" y="267.2"/>
<use href="#h3" x="684" y="280.9"/>
<use href="#h3" x="690.1" y="263.5"/>
<path class="bd" d="M508.3 553.4L520.5 556.2L523.8 568.4"/><path class="bw3" d="M508.3 553.4L520.5 556.2L523.8 568.4"/><path class="br3" d="M514.4 554.8L520.5 556.2L522.2 562.3"/>
<use href="#h3" x="508.3" y="553.4"/>
<use href="#h3" x="523.8" y="568.4"/>
<use href="#o3" x="520.5" y="556.2"/>
<path class="bd" d="M359 571.5L348.4 580L340.8 574.2"/><path class="bw3" d="M359 571.5L348.4 580L340.8 574.2"/><path class="br3" d="M353.7 575.8L348.4 580L344.6 577.1"/>
<use href="#h3" x="359" y="571.5"/>
<use href="#o3" x="348.4" y="580"/>
<use href="#h3" x="340.8" y="574.2"/>
<path class="bd" d="M336 300.2L343.6 289.6L335 279"/><path class="bw3" d="M336 300.2L343.6 289.6L335 279"/><path class="br3" d="M339.8 294.9L343.6 289.6L339.3 284.3"/>
<use href="#h3" x="335" y="279"/>
<use href="#o3" x="343.6" y="289.6"/>
<use href="#h3" x="336" y="300.2"/>
<path class="bd" d="M500.7 515.2L496.6 522.7L496.3 535.6"/><path class="bw3" d="M500.7 515.2L496.6 522.7L496.3 535.6"/><path class="br3" d="M498.6 519L496.6 522.7L496.5 529.1"/>
<use href="#o3" x="496.6" y="522.7"/>
<use href="#h3" x="496.3" y="535.6"/>
<use href="#h3" x="500.7" y="515.2"/>
<path class="bd" d="M701.8 564L702 561L713.9 554.4"/><path class="bw3" d="M701.8 564L702 561L713.9 554.4"/><path class="br3" d="M701.9 562.5L702 561L708 557.7"/>
<use href="#h3" x="701.8" y="564"/>
<use href="#o3" x="702" y="561"/>
<use href="#h3" x="713.9" y="554.4"/>
<path class="bd" d="M708.6 297.9L702.8 305.6L689.5 305.4"/><path class="bw3" d="M708.6 297.9L702.8 305.6L689.5 305.4"/><path class="br3" d="M705.7 301.8L702.8 305.6L696.1 305.5"/>
<use href="#h3" x="708.6" y="297.9"/>
<use href="#h3" x="689.5" y="305.4"/>
<use href="#o3" x="702.8" y="305.6"/>
<path class="bd" d="M643 247.6L630.4 252.5L623.8 242.7"/><path class="bw3" d="M643 247.6L630.4 252.5L623.8 242.7"/><path class="br3" d="M636.7 250.1L630.4 252.5L627.1 247.6"/>
<use href="#h3" x="643" y="247.6"/>
<use href="#o3" x="630.4" y="252.5"/>
<use href="#h3" x="623.8" y="242.7"/>
<path class="bd" d="M250.6 262.4L259.7 261.1L254 252.2"/><path class="bw3" d="M250.6 262.4L259.7 261.1L254 252.2"/><path class="br3" d="M255.1 261.8L259.7 261.1L256.8 256.7"/>
<use href="#h3" x="254" y="252.2"/>
<use href="#o3" x="259.7" y="261.1"/>
<use href="#h3" x="250.6" y="262.4"/>
<path class="bd" d="M372.3 671.2L375.2 683.8L380.4 681.6"/><path class="bw3" d="M372.3 671.2L375.2 683.8L380.4 681.6"/><path class="br3" d="M373.7 677.5L375.2 683.8L377.8 682.7"/>
<use href="#h3" x="380.4" y="681.6"/>
<use href="#o3" x="375.2" y="683.8"/>
<use href="#h3" x="372.3" y="671.2"/>
<path class="bd" d="M674 406.8L687.3 406.9L689.2 395.6"/><path class="bw3" d="M674 406.8L687.3 406.9L689.2 395.6"/><path class="br3" d="M680.7 406.9L687.3 406.9L688.3 401.3"/>
<use href="#h3" x="689.2" y="395.6"/>
<use href="#o3" x="687.3" y="406.9"/>
<use href="#h3" x="674" y="406.8"/>
<path class="bd" d="M329.8 491.9L337.6 500.6L343.8 508.3"/><path class="bw3" d="M329.8 491.9L337.6 500.6L343.8 508.3"/><path class="br3" d="M333.7 496.2L337.6 500.6L340.7 504.4"/>
<use href="#o3" x="337.6" y="500.6"/>
<use href="#h3" x="329.8" y="491.9"/>
<use href="#h3" x="343.8" y="508.3"/>
<path class="bd" d="M601.1 301.5L600.4 314.3L593.1 321.3"/><path class="bw3" d="M601.1 301.5L600.4 314.3L593.1 321.3"/><path class="br3" d="M600.8 307.9L600.4 314.3L596.8 317.8"/>
<use href="#o3" x="600.4" y="314.3"/>
<use href="#h3" x="601.1" y="301.5"/>
<use href="#h3" x="593.1" y="321.3"/>
<path class="bd" d="M528.3 386.3L525.2 375L511.8 373.1"/><path class="bw3" d="M528.3 386.3L525.2 375L511.8 373.1"/><path class="br3" d="M526.8 380.7L525.2 375L518.5 374.1"/>
<use href="#h3" x="528.3" y="386.3"/>
<use href="#h3" x="511.8" y="373.1"/>
<use href="#o3" x="525.2" y="375"/>
<path class="bd" d="M632.5 393.5L627.8 380.9L617.4 379.2"/><path class="bw3" d="M632.5 393.5L627.8 380.9L617.4 379.2"/><path class="br3" d="M630.2 387.2L627.8 380.9L622.6 380"/>
<use href="#o3" x="627.8" y="380.9"/>
<use href="#h3" x="632.5" y="393.5"/>
<use href="#h3" x="617.4" y="379.2"/>
<path class="bd" d="M500.1 410.4L499.2 403L486.5 397.9"/><path class="bw3" d="M500.1 410.4L499.2 403L486.5 397.9"/><path class="br3" d="M499.7 406.7L499.2 403L492.8 400.4"/>
<use href="#h3" x="500.1" y="410.4"/>
<use href="#h3" x="486.5" y="397.9"/>
<use href="#o3" x="499.2" y="403"/>
<path class="bd" d="M626.3 440.5L622.1 440.3L608.6 437.4"/><path class="bw3" d="M626.3 440.5L622.1 440.3L608.6 437.4"/><path class="br3" d="M624.2 440.4L622.1 440.3L615.4 438.9"/>
<use href="#h3" x="626.3" y="440.5"/>
<use href="#h3" x="608.6" y="437.4"/>
<use href="#o3" x="622.1" y="440.3"/>
<path class="bd" d="M474.4 233.6L479 221L492.6 221.6"/><path class="bw3" d="M474.4 233.6L479 221L492.6 221.6"/><path class="br3" d="M476.7 227.3L479 221L485.8 221.3"/>
<use href="#h3" x="474.4" y="233.6"/>
<use href="#h3" x="492.6" y="221.6"/>
<use href="#o3" x="479" y="221"/>
<path class="bd" d="M338.3 336.3L351.3 333.4L353 340.2"/><path class="bw3" d="M338.3 336.3L351.3 333.4L353 340.2"/><path class="br3" d="M344.8 334.9L351.3 333.4L352.1 336.8"/>
<use href="#h3" x="338.3" y="336.3"/>
<use href="#o3" x="351.3" y="333.4"/>
<use href="#h3" x="353" y="340.2"/>
<path class="bd" d="M453.7 265.1L445.5 268.8L454.1 271.9"/><path class="bw3" d="M453.7 265.1L445.5 268.8L454.1 271.9"/><path class="br3" d="M449.6 267L445.5 268.8L449.8 270.4"/>
<use href="#h3" x="453.7" y="265.1"/>
<use href="#o3" x="445.5" y="268.8"/>
<use href="#h3" x="454.1" y="271.9"/>
<path class="bd" d="M389.2 268.5L391.3 276.1L394.5 288.6"/><path class="bw3" d="M389.2 268.5L391.3 276.1L394.5 288.6"/><path class="br3" d="M390.3 272.3L391.3 276.1L392.9 282.4"/>
<use href="#h3" x="389.2" y="268.5"/>
<use href="#h3" x="394.5" y="288.6"/>
<use href="#o3" x="391.3" y="276.1"/>
<path class="bd" d="M571.2 486.2L584.4 487.9L589.1 475.1"/><path class="bw3" d="M571.2 486.2L584.4 487.9L589.1 475.1"/><path class="br3" d="M577.8 487.1L584.4 487.9L586.7 481.5"/>
<use href="#h3" x="589.1" y="475.1"/>
<use href="#o3" x="584.4" y="487.9"/>
<use href="#h3" x="571.2" y="486.2"/>
<path class="bd" d="M624.6 584.7L637.1 579.8L645.3 590.9"/><path class="bw3" d="M624.6 584.7L637.1 579.8L645.3 590.9"/><path class="br3" d="M630.8 582.2L637.1 579.8L641.2 585.3"/>
<use href="#h3" x="645.3" y="590.9"/>
<use href="#o3" x="637.1" y="579.8"/>
<use href="#h3" x="624.6" y="584.7"/>
<path class="bd" d="M533.2 262L527.1 250.4L513.7 252.5"/><path class="bw3" d="M533.2 262L527.1 250.4L513.7 252.5"/><path class="br3" d="M530.1 256.2L527.1 250.4L520.4 251.5"/>
<use href="#o3" x="527.1" y="250.4"/>
<use href="#h3" x="513.7" y="252.5"/>
<use href="#h3" x="533.2" y="262"/>
<path class="bd" d="M612.6 686.9L624 688L633.3 680"/><path class="bw3" d="M612.6 686.9L624 688L633.3 680"/><path class="br3" d="M618.3 687.5L624 688L628.6 684"/>
<use href="#h3" x="612.6" y="686.9"/>
<use href="#h3" x="633.3" y="680"/>
<use href="#o3" x="624" y="688"/>
<path class="bd" d="M481.5 593.3L487.8 597.9L478.3 605.5"/><path class="bw3" d="M481.5 593.3L487.8 597.9L478.3 605.5"/><path class="br3" d="M484.7 595.6L487.8 597.9L483.1 601.7"/>
<use href="#h3" x="478.3" y="605.5"/>
<use href="#o3" x="487.8" y="597.9"/>
<use href="#h3" x="481.5" y="593.3"/>
<path class="bd" d="M687.3 621.5L683.1 634.4L694.4 642.1"/><path class="bw3" d="M687.3 621.5L683.1 634.4L694.4 642.1"/><path class="br3" d="M685.2 627.9L683.1 634.4L688.7 638.3"/>
<use href="#o3" x="683.1" y="634.4"/>
<use href="#h3" x="694.4" y="642.1"/>
<use href="#h3" x="687.3" y="621.5"/>
<path class="bd" d="M303.5 614.1L310.4 602.9L303.5 599"/><path class="bw3" d="M303.5 614.1L310.4 602.9L303.5 599"/><path class="br3" d="M306.9 608.5L310.4 602.9L306.9 601"/>
<use href="#h3" x="303.5" y="614.1"/>
<use href="#o3" x="310.4" y="602.9"/>
<use href="#h3" x="303.5" y="599"/>
<path class="bd" d="M446.9 408L460.2 404.4L464.3 409.5"/><path class="bw3" d="M446.9 408L460.2 404.4L464.3 409.5"/><path class="br3" d="M453.5 406.2L460.2 404.4L462.3 406.9"/>
<use href="#h3" x="446.9" y="408"/>
<use href="#o3" x="460.2" y="404.4"/>
<use href="#h3" x="464.3" y="409.5"/>
<path class="bd" d="M693.3 610.3L692.8 597L701.5 590.6"/><path class="bw3" d="M693.3 610.3L692.8 597L701.5 590.6"/><path class="br3" d="M693 603.6L692.8 597L697.2 593.8"/>
<use href="#h3" x="701.5" y="590.6"/>
<use href="#h3" x="693.3" y="610.3"/>
<use href="#o3" x="692.8" y="597"/>
<path class="bd" d="M322.2 664.8L322.6 657.1L330.5 646.2"/><path class="bw3" d="M322.2 664.8L322.6 657.1L330.5 646.2"/><path class="br3" d="M322.4 661L322.6 657.1L326.5 651.7"/>
<use href="#h3" x="322.2" y="664.8"/>
<use href="#h3" x="330.5" y="646.2"/>
<use href="#o3" x="322.6" y="657.1"/>
<path class="bd" d="M425.6 465.8L437.2 467.7L442.8 479.2"/><path class="bw3" d="M425.6 465.8L437.2 467.7L442.8 479.2"/><path class="br3" d="M431.4 466.8L437.2 467.7L440 473.5"/>
<use href="#h3" x="425.6" y="465.8"/>
<use href="#h3" x="442.8" y="479.2"/>
<use href="#o3" x="437.2" y="467.7"/>
<path class="bd" d="M530.6 696.5L521.1 691.2L518.2 678.7"/><path class="bw3" d="M530.6 696.5L521.1 691.2L518.2 678.7"/><path class="br3" d="M525.9 693.9L521.1 691.2L519.6 685"/>
<use href="#o3" x="521.1" y="691.2"/>
<use href="#h3" x="518.2" y="678.7"/>
<use href="#h3" x="530.6" y="696.5"/>
<path class="bd" d="M554.1 298.8L561.2 287.5L554.2 282.3"/><path class="bw3" d="M554.1 298.8L561.2 287.5L554.2 282.3"/><path class="br3" d="M557.6 293.1L561.2 287.5L557.7 284.9"/>
<use href="#h3" x="554.1" y="298.8"/>
<use href="#o3" x="561.2" y="287.5"/>
<use href="#h3" x="554.2" y="282.3"/>
<path class="bd" d="M249.4 280L247.6 291.4L234.2 294.7"/><path class="bw3" d="M249.4 280L247.6 291.4L234.2 294.7"/><path class="br3" d="M248.5 285.7L247.6 291.4L240.9 293.1"/>
<use href="#h3" x="249.4" y="280"/>
<use href="#h3" x="234.2" y="294.7"/>
<use href="#o3" x="247.6" y="291.4"/>
<path class="bd" d="M305.3 447L313.2 457.3L324.6 457.1"/><path class="bw3" d="M305.3 447L313.2 457.3L324.6 457.1"/><path class="br3" d="M309.2 452.2L313.2 457.3L318.9 457.2"/>
<use href="#h3" x="324.6" y="457.1"/>
<use href="#h3" x="305.3" y="447"/>
<use href="#o3" x="313.2" y="457.3"/>
<path class="bd" d="M531.2 416.4L539.7 412.9L544.2 425"/><path class="bw3" d="M531.2 416.4L539.7 412.9L544.2 425"/><path class="br3" d="M535.5 414.6L539.7 412.9L542 418.9"/>
<use href="#h3" x="544.2" y="425"/>
<use href="#o3" x="539.7" y="412.9"/>
<use href="#h3" x="531.2" y="416.4"/>
<path class="bd" d="M457.6 674.1L469.6 667.2L466.1 654"/><path class="bw3" d="M457.6 674.1L469.6 667.2L466.1 654"/><path class="br3" d="M463.6 670.7L469.6 667.2L467.9 660.6"/>
<use href="#h3" x="466.1" y="654"/>
<use href="#h3" x="457.6" y="674.1"/>
<use href="#o3" x="469.6" y="667.2"/>
<path class="bd" d="M423.3 603.3L417.6 611.3L427.6 620.5"/><path class="bw3" d="M423.3 603.3L417.6 611.3L427.6 620.5"/><path class="br3" d="M420.4 607.3L417.6 611.3L422.6 615.9"/>
<use href="#h3" x="427.6" y="620.5"/>
<use href="#o3" x="417.6" y="611.3"/>
<use href="#h3" x="423.3" y="603.3"/>
<path class="bd" d="M535.7 493.7L544.3 490.9L542.9 501.8"/><path class="bw3" d="M535.7 493.7L544.3 490.9L542.9 501.8"/><path class="br3" d="M540 492.3L544.3 490.9L543.6 496.3"/>
<use href="#h3" x="535.7" y="493.7"/>
<use href="#o3" x="544.3" y="490.9"/>
<use href="#h3" x="542.9" y="501.8"/>
<path class="bd" d="M289.1 481.7L287.1 484L277.6 494.3"/><path class="bw3" d="M289.1 481.7L287.1 484L277.6 494.3"/><path class="br3" d="M288.1 482.9L287.1 484L282.4 489.2"/>
<use href="#h3" x="289.1" y="481.7"/>
<use href="#o3" x="287.1" y="484"/>
<use href="#h3" x="277.6" y="494.3"/>
<path class="bd" d="M624.8 341.1L626.8 336.7L618 326"/><path class="bw3" d="M624.8 341.1L626.8 336.7L618 326"/><path class="br3" d="M625.8 338.9L626.8 336.7L622.4 331.3"/>
<use href="#h3" x="618" y="326"/>
<use href="#o3" x="626.8" y="336.7"/>
<use href="#h3" x="624.8" y="341.1"/>
<path class="bd" d="M291.1 368.8L298.1 379.3L288.7 389.6"/><path class="bw3" d="M291.1 368.8L298.1 379.3L288.7 389.6"/><path class="br3" d="M294.6 374.1L298.1 379.3L293.4 384.5"/>
<use href="#h3" x="291.1" y="368.8"/>
<use href="#o3" x="298.1" y="379.3"/>
<use href="#h3" x="288.7" y="389.6"/>
<path class="bd" d="M402.8 317.5L388.9 318.3L384.5 305.1"/><path class="bw3" d="M402.8 317.5L388.9 318.3L384.5 305.1"/><path class="br3" d="M395.8 317.9L388.9 318.3L386.7 311.7"/>
<use href="#h3" x="402.8" y="317.5"/>
<use href="#h3" x="384.5" y="305.1"/>
<use href="#o3" x="388.9" y="318.3"/>
<path class="bd" d="M292 675.7L286.3 663L291.9 655.8"/><path class="bw3" d="M292 675.7L286.3 663L291.9 655.8"/><path class="br3" d="M289.1 669.3L286.3 663L289.1 659.4"/>
<use href="#o3" x="286.3" y="663"/>
<use href="#h3" x="292" y="675.7"/>
<use href="#h3" x="291.9" y="655.8"/>
<path class="bd" d="M542 331.5L536.9 343.1L532.2 339"/><path class="bw3" d="M542 331.5L536.9 343.1L532.2 339"/><path class="br3" d="M539.4 337.3L536.9 343.1L534.6 341"/>
<use href="#h3" x="542" y="331.5"/>
<use href="#o3" x="536.9" y="343.1"/>
<use href="#h3" x="532.2" y="339"/>
<path class="bd" d="M621.5 512.2L615.6 523.3L604.3 518.3"/><path class="bw3" d="M621.5 512.2L615.6 523.3L604.3 518.3"/><path class="br3" d="M618.5 517.7L615.6 523.3L609.9 520.8"/>
<use href="#h3" x="621.5" y="512.2"/>
<use href="#o3" x="615.6" y="523.3"/>
<use href="#h3" x="604.3" y="518.3"/>
<path class="bd" d="M351.9 409.6L360.2 418.1L372.4 411.2"/><path class="bw3" d="M351.9 409.6L360.2 418.1L372.4 411.2"/><path class="br3" d="M356.1 413.8L360.2 418.1L366.3 414.7"/>
<use href="#h3" x="351.9" y="409.6"/>
<use href="#o3" x="360.2" y="418.1"/>
<use href="#h3" x="372.4" y="411.2"/>
<path class="bd" d="M637.3 664.9L641.5 656.8L630.4 648.7"/><path class="bw3" d="M637.3 664.9L641.5 656.8L630.4 648.7"/><path class="br3" d="M639.4 660.9L641.5 656.8L636 652.8"/>
<use href="#h3" x="637.3" y="664.9"/>
<use href="#o3" x="641.5" y="656.8"/>
<use href="#h3" x="630.4" y="648.7"/>
<path class="bd" d="M243.5 497.2L253.4 504.8L249.3 518.1"/><path class="bw3" d="M243.5 497.2L253.4 504.8L249.3 518.1"/><path class="br3" d="M248.4 501L253.4 504.8L251.3 511.5"/>
<use href="#h3" x="243.5" y="497.2"/>
<use href="#h3" x="249.3" y="518.1"/>
<use href="#o3" x="253.4" y="504.8"/>
<path class="bd" d="M301.6 265.5L296.3 262.6L282.8 259.9"/><path class="bw3" d="M301.6 265.5L296.3 262.6L282.8 259.9"/><path class="br3" d="M299 264L296.3 262.6L289.6 261.3"/>
<use href="#h3" x="301.6" y="265.5"/>
<use href="#h3" x="282.8" y="259.9"/>
<use href="#o3" x="296.3" y="262.6"/>
<path class="bd" d="M665.3 467.6L676 459.1L678.5 452.4"/><path class="bw3" d="M665.3 467.6L676 459.1L678.5 452.4"/><path class="br3" d="M670.7 463.4L676 459.1L677.3 455.7"/>
<use href="#h3" x="678.5" y="452.4"/>
<use href="#h3" x="665.3" y="467.6"/>
<use href="#o3" x="676" y="459.1"/>
<path class="bd" d="M338 388.6L347.1 384.4L340 374.7"/><path class="bw3" d="M338 388.6L347.1 384.4L340 374.7"/><path class="br3" d="M342.5 386.5L347.1 384.4L343.5 379.6"/>
<use href="#h3" x="340" y="374.7"/>
<use href="#o3" x="347.1" y="384.4"/>
<use href="#h3" x="338" y="388.6"/>
<path class="bd" d="M444.8 531.3L432.4 525.7L433.4 512.3"/><path class="bw3" d="M444.8 531.3L432.4 525.7L433.4 512.3"/><path class="br3" d="M438.6 528.5L432.4 525.7L432.9 519"/>
<use href="#o3" x="432.4" y="525.7"/>
<use href="#h3" x="444.8" y="531.3"/>
<use href="#h3" x="433.4" y="512.3"/>
<path class="bd" d="M254 227L254 230L266.7 226"/><path class="bw3" d="M254 227L254 230L266.7 226"/><path class="br3" d="M254 228.5L254 230L260.3 228"/>
<use href="#h3" x="254" y="227"/>
<use href="#o3" x="254" y="230"/>
<use href="#h3" x="266.7" y="226"/>
<path class="bd" d="M392.8 652.2L390.4 639.2L379.4 634.8"/><path class="bw3" d="M392.8 652.2L390.4 639.2L379.4 634.8"/><path class="br3" d="M391.6 645.7L390.4 639.2L384.9 637"/>
<use href="#o3" x="390.4" y="639.2"/>
<use href="#h3" x="392.8" y="652.2"/>
<use href="#h3" x="379.4" y="634.8"/>
<path class="bd" d="M501.5 459.8L489.3 463.4L481.7 468.9"/><path class="bw3" d="M501.5 459.8L489.3 463.4L481.7 468.9"/><path class="br3" d="M495.4 461.6L489.3 463.4L485.5 466.1"/>
<use href="#o3" x="489.3" y="463.4"/>
<use href="#h3" x="501.5" y="459.8"/>
<use href="#h3" x="481.7" y="468.9"/>
<path class="bd" d="M286.6 559.9L295.6 549.3L296.1 544"/><path class="bw3" d="M286.6 559.9L295.6 549.3L296.1 544"/><path class="br3" d="M291.1 554.6L295.6 549.3L295.8 546.6"/>
<use href="#h3" x="296.1" y="544"/>
<use href="#h3" x="286.6" y="559.9"/>
<use href="#o3" x="295.6" y="549.3"/>
<path class="bd" d="M684.9 498.8L672.3 503.4L672.7 502.4"/><path class="bw3" d="M684.9 498.8L672.3 503.4L672.7 502.4"/><path class="br3" d="M678.6 501.1L672.3 503.4L672.5 502.9"/>
<use href="#h3" x="672.7" y="502.4"/>
<use href="#o3" x="672.3" y="503.4"/>
<use href="#h3" x="684.9" y="498.8"/>
<path class="bd" d="M661.1 259.1L654.8 251.8L658.8 258.1"/><path class="bw3" d="M661.1 259.1L654.8 251.8L658.8 258.1"/><path class="br3" d="M657.9 255.5L654.8 251.8L656.8 255"/>
<use href="#h3" x="658.8" y="258.1"/>
<use href="#o3" x="654.8" y="251.8"/>
<use href="#h3" x="661.1" y="259.1"/>
<path class="bd" d="M396.3 490.1L405.4 485.3L410.1 496.9"/><path class="bw3" d="M396.3 490.1L405.4 485.3L410.1 496.9"/><path class="br3" d="M400.9 487.7L405.4 485.3L407.8 491.1"/>
<use href="#h3" x="396.3" y="490.1"/>
<use href="#o3" x="405.4" y="485.3"/>
<use href="#h3" x="410.1" y="496.9"/>
<path class="bd" d="M678.1 359.1L673.3 355.8L663 346.6"/><path class="bw3" d="M678.1 359.1L673.3 355.8L663 346.6"/><path class="br3" d="M675.7 357.5L673.3 355.8L668.2 351.2"/>
<use href="#h3" x="678.1" y="359.1"/>
<use href="#h3" x="663" y="346.6"/>
<use href="#o3" x="673.3" y="355.8"/>
<path class="bd" d="M595.4 638.6L609.2 640.5L610.5 648.4"/><path class="bw3" d="M595.4 638.6L609.2 640.5L610.5 648.4"/><path class="br3" d="M602.3 639.5L609.2 640.5L609.9 644.5"/>
<use href="#h3" x="595.4" y="638.6"/>
<use href="#o3" x="609.2" y="640.5"/>
<use href="#h3" x="610.5" y="648.4"/>
<path class="bd" d="M478.8 315.7L477 306.3L463.9 301.6"/><path class="bw3" d="M478.8 315.7L477 306.3L463.9 301.6"/><path class="br3" d="M477.9 311L477 306.3L470.5 303.9"/>
<use href="#o3" x="477" y="306.3"/>
<use href="#h3" x="463.9" y="301.6"/>
<use href="#h3" x="478.8" y="315.7"/>
<path class="bd" d="M483.6 577.8L473.5 568.8L478.2 563"/><path class="bw3" d="M483.6 577.8L473.5 568.8L478.2 563"/><path class="br3" d="M478.5 573.3L473.5 568.8L475.8 565.9"/>
<use href="#h3" x="478.2" y="563"/>
<use href="#o3" x="473.5" y="568.8"/>
<use href="#h3" x="483.6" y="577.8"/>
<path class="bd" d="M433.5 662.9L435.6 652.4L449.1 653.6"/><path class="bw3" d="M433.5 662.9L435.6 652.4L449.1 653.6"/><path class="br3" d="M434.6 657.7L435.6 652.4L442.3 653"/>
<use href="#h3" x="433.5" y="662.9"/>
<use href="#o3" x="435.6" y="652.4"/>
<use href="#h3" x="449.1" y="653.6"/>
<path class="bd" d="M400.1 575L397.6 570.3L385.8 562.7"/><path class="bw3" d="M400.1 575L397.6 570.3L385.8 562.7"/><path class="br3" d="M398.8 572.6L397.6 570.3L391.7 566.5"/>
<use href="#o3" x="397.6" y="570.3"/>
<use href="#h3" x="385.8" y="562.7"/>
<use href="#h3" x="400.1" y="575"/>
<path class="bd" d="M399.2 423.3L395.5 435.1L405.4 436.7"/><path class="bw3" d="M399.2 423.3L395.5 435.1L405.4 436.7"/><path class="br3" d="M397.3 429.2L395.5 435.1L400.5 435.9"/>
<use href="#h3" x="405.4" y="436.7"/>
<use href="#o3" x="395.5" y="435.1"/>
<use href="#h3" x="399.2" y="423.3"/>
<path class="bd" d="M713.9 684.7L701.3 685.2L703.7 691.9"/><path class="bw3" d="M713.9 684.7L701.3 685.2L703.7 691.9"/><path class="br3" d="M707.6 685L701.3 685.2L702.5 688.5"/>
<use href="#h3" x="703.7" y="691.9"/>
<use href="#o3" x="701.3" y="685.2"/>
<use href="#h3" x="713.9" y="684.7"/>
<path class="bd" d="M446.1 236.8L441.3 242.7L444.4 233.3"/><path class="bw3" d="M446.1 236.8L441.3 242.7L444.4 233.3"/><path class="br3" d="M443.7 239.7L441.3 242.7L442.8 238"/>
<use href="#h3" x="446.1" y="236.8"/>
<use href="#o3" x="441.3" y="242.7"/>
<use href="#h3" x="444.4" y="233.3"/>
<path class="bd" d="M561.2 594.3L549.2 598L547.6 611.7"/><path class="bw3" d="M561.2 594.3L549.2 598L547.6 611.7"/><path class="br3" d="M555.2 596.2L549.2 598L548.4 604.9"/>
<use href="#h3" x="561.2" y="594.3"/>
<use href="#h3" x="547.6" y="611.7"/>
<use href="#o3" x="549.2" y="598"/>
<path class="bd" d="M580.2 364.7L583.7 357.2L597.5 354.5"/><path class="bw3" d="M580.2 364.7L583.7 357.2L597.5 354.5"/><path class="br3" d="M582 361L583.7 357.2L590.6 355.9"/>
<use href="#h3" x="580.2" y="364.7"/>
<use href="#h3" x="597.5" y="354.5"/>
<use href="#o3" x="583.7" y="357.2"/>
<path class="bd" d="M464.9 636.4L469 626.1L466.8 631.3"/><path class="bw3" d="M464.9 636.4L469 626.1L466.8 631.3"/><path class="br3" d="M466.9 631.2L469 626.1L467.9 628.7"/>
<use href="#h3" x="464.9" y="636.4"/>
<use href="#o3" x="469" y="626.1"/>
<use href="#h3" x="466.8" y="631.3"/>
<path class="bd" d="M711 284.8L697.4 284.5L691.9 296.4"/><path class="bw3" d="M711 284.8L697.4 284.5L691.9 296.4"/><path class="br3" d="M704.2 284.7L697.4 284.5L694.6 290.5"/>
<use href="#h3" x="691.9" y="296.4"/>
<use href="#h3" x="711" y="284.8"/>
<use href="#o3" x="697.4" y="284.5"/>
<path class="bd" d="M656.1 476L642.5 472.7L637.8 482.7"/><path class="bw3" d="M656.1 476L642.5 472.7L637.8 482.7"/><path class="br3" d="M649.3 474.4L642.5 472.7L640.2 477.7"/>
<use href="#h3" x="637.8" y="482.7"/>
<use href="#o3" x="642.5" y="472.7"/>
<use href="#h3" x="656.1" y="476"/>
<path class="bd" d="M303.1 632.8L301.9 629.2L312.2 619.6"/><path class="bw3" d="M303.1 632.8L301.9 629.2L312.2 619.6"/><path class="br3" d="M302.5 631L301.9 629.2L307.1 624.4"/>
<use href="#h3" x="303.1" y="632.8"/>
<use href="#o3" x="301.9" y="629.2"/>
<use href="#h3" x="312.2" y="619.6"/>
<path class="bd" d="M632.8 410L621.5 406.6L617.3 394"/><path class="bw3" d="M632.8 410L621.5 406.6L617.3 394"/><path class="br3" d="M627.1 408.3L621.5 406.6L619.4 400.3"/>
<use href="#o3" x="621.5" y="406.6"/>
<use href="#h3" x="617.3" y="394"/>
<use href="#h3" x="632.8" y="410"/>
<path class="bd" d="M346.6 243.7L352.8 256.3L342 265.6"/><path class="bw3" d="M346.6 243.7L352.8 256.3L342 265.6"/><path class="br3" d="M349.7 250L352.8 256.3L347.4 261"/>
<use href="#h3" x="346.6" y="243.7"/>
<use href="#h3" x="342" y="265.6"/>
<use href="#o3" x="352.8" y="256.3"/>
<path class="bd" d="M240.7 455.9L246.8 445.4L252.3 451.8"/><path class="bw3" d="M240.7 455.9L246.8 445.4L252.3 451.8"/><path class="br3" d="M243.8 450.7L246.8 445.4L249.5 448.6"/>
<use href="#h3" x="252.3" y="451.8"/>
<use href="#o3" x="246.8" y="445.4"/>
<use href="#h3" x="240.7" y="455.9"/>
<path class="bd" d="M523.5 673L536.9 668.7L537.2 661.1"/><path class="bw3" d="M523.5 673L536.9 668.7L537.2 661.1"/><path class="br3" d="M530.2 670.8L536.9 668.7L537 664.9"/>
<use href="#h3" x="523.5" y="673"/>
<use href="#o3" x="536.9" y="668.7"/>
<use href="#h3" x="537.2" y="661.1"/>
<path class="bd" d="M291.8 521.9L291.1 511.5L294.1 517.9"/><path class="bw3" d="M291.8 521.9L291.1 511.5L294.1 517.9"/><path class="br3" d="M291.4 516.7L291.1 511.5L292.6 514.7"/>
<use href="#h3" x="291.8" y="521.9"/>
<use href="#o3" x="291.1" y="511.5"/>
<use href="#h3" x="294.1" y="517.9"/>
<path class="bd" d="M341.3 677.4L355.1 679.6L361.7 668.1"/><path class="bw3" d="M341.3 677.4L355.1 679.6L361.7 668.1"/><path class="br3" d="M348.2 678.5L355.1 679.6L358.4 673.8"/>
<use href="#o3" x="355.1" y="679.6"/>
<use href="#h3" x="341.3" y="677.4"/>
<use href="#h3" x="361.7" y="668.1"/>
<path class="bd" d="M425.9 402.7L414.6 403.1L403.6 406.3"/><path class="bw3" d="M425.9 402.7L414.6 403.1L403.6 406.3"/><path class="br3" d="M420.2 402.9L414.6 403.1L409.1 404.7"/>
<use href="#h3" x="425.9" y="402.7"/>
<use href="#h3" x="403.6" y="406.3"/>
<use href="#o3" x="414.6" y="403.1"/>
<path class="bd" d="M308.4 284.4L319.8 291.7L321.3 287.7"/><path class="bw3" d="M308.4 284.4L319.8 291.7L321.3 287.7"/><path class="br3" d="M314.1 288L319.8 291.7L320.5 289.7"/>
<use href="#h3" x="321.3" y="287.7"/>
<use href="#o3" x="319.8" y="291.7"/>
<use href="#h3" x="308.4" y="284.4"/>
<path class="bd" d="M236.6 388L249.5 389.3L258.6 385.5"/><path class="bw3" d="M236.6 388L249.5 389.3L258.6 385.5"/><path class="br3" d="M243 388.7L249.5 389.3L254 387.4"/>
<use href="#o3" x="249.5" y="389.3"/>
<use href="#h3" x="236.6" y="388"/>
<use href="#h3" x="258.6" y="385.5"/>
<path class="bd" d="M600.2 557L599.4 548.5L607.7 537.3"/><path class="bw3" d="M600.2 557L599.4 548.5L607.7 537.3"/><path class="br3" d="M599.8 552.7L599.4 548.5L603.5 542.9"/>
<use href="#o3" x="599.4" y="548.5"/>
<use href="#h3" x="607.7" y="537.3"/>
<use href="#h3" x="600.2" y="557"/>
<path class="bd" d="M664.2 578.6L666.6 584L658.6 595.8"/><path class="bw3" d="M664.2 578.6L666.6 584L658.6 595.8"/><path class="br3" d="M665.4 581.3L666.6 584L662.6 589.9"/>
<use href="#h3" x="658.6" y="595.8"/>
<use href="#o3" x="666.6" y="584"/>
<use href="#h3" x="664.2" y="578.6"/>
<path class="bd" d="M604.4 674.3L614.8 684.1L608.8 695.1"/><path class="bw3" d="M604.4 674.3L614.8 684.1L608.8 695.1"/><path class="br3" d="M609.6 679.2L614.8 684.1L611.8 689.6"/>
<use href="#h3" x="608.8" y="695.1"/>
<use href="#o3" x="614.8" y="684.1"/>
<use href="#h3" x="604.4" y="674.3"/>
<path class="bd" d="M349.2 500.3L339.5 490.2L335.8 485.1"/><path class="bw3" d="M349.2 500.3L339.5 490.2L335.8 485.1"/><path class="br3" d="M344.3 495.3L339.5 490.2L337.6 487.7"/>
<use href="#h3" x="335.8" y="485.1"/>
<use href="#h3" x="349.2" y="500.3"/>
<use href="#o3" x="339.5" y="490.2"/>
<path class="bd" d="M509.5 378.1L505 389L507.8 400.6"/><path class="bw3" d="M509.5 378.1L505 389L507.8 400.6"/><path class="br3" d="M507.3 383.5L505 389L506.4 394.8"/>
<use href="#h3" x="509.5" y="378.1"/>
<use href="#h3" x="507.8" y="400.6"/>
<use href="#o3" x="505" y="389"/>
<path class="bd" d="M714.4 505.7L704.8 495.8L704 496.5"/><path class="bw3" d="M714.4 505.7L704.8 495.8L704 496.5"/><path class="br3" d="M709.6 500.7L704.8 495.8L704.4 496.1"/>
<use href="#h3" x="704" y="496.5"/>
<use href="#o3" x="704.8" y="495.8"/>
<use href="#h3" x="714.4" y="505.7"/>
<path class="bd" d="M524.8 333.9L515.1 340.4L514.1 353.7"/><path class="bw3" d="M524.8 333.9L515.1 340.4L514.1 353.7"/><path class="br3" d="M519.9 337.2L515.1 340.4L514.6 347"/>
<use href="#h3" x="524.8" y="333.9"/>
<use href="#h3" x="514.1" y="353.7"/>
<use href="#o3" x="515.1" y="340.4"/>
<path class="bd" d="M669.7 406.4L656.5 406.3L648 410.7"/><path class="bw3" d="M669.7 406.4L656.5 406.3L648 410.7"/><path class="br3" d="M663.1 406.3L656.5 406.3L652.3 408.5"/>
<use href="#h3" x="648" y="410.7"/>
<use href="#h3" x="669.7" y="406.4"/>
<use href="#o3" x="656.5" y="406.3"/>
<path class="bd" d="M500.3 587.6L508.8 583.8L500.2 583.9"/><path class="bw2" d="M500.3 587.6L508.8 583.8L500.2 583.9"/><path class="br2" d="M504.5 585.7L508.8 583.8L504.5 583.9"/>
<use href="#h2" x="500.2" y="583.9"/>
<use href="#o2" x="508.8" y="583.8"/>
<use href="#h2" x="500.3" y="587.6"/>
<path class="bd" d="M274.3 671.5L264.7 681.9L264.5 688.9"/><path class="bw2" d="M274.3 671.5L264.7 681.9L264.5 688.9"/><path class="br2" d="M269.5 676.7L264.7 681.9L264.6 685.4"/>
<use href="#h2" x="264.5" y="688.9"/>
<use href="#h2" x="274.3" y="671.5"/>
<use href="#o2" x="264.7" y="681.9"/>
<path class="bd" d="M574.4 681.5L568 694L557.7 695.2"/><path class="bw2" d="M574.4 681.5L568 694L557.7 695.2"/><path class="br2" d="M571.2 687.7L568 694L562.9 694.6"/>
<use href="#o2" x="568" y="694"/>
<use href="#h2" x="574.4" y="681.5"/>
<use href="#h2" x="557.7" y="695.2"/>
<path class="bd" d="M658.1 544.2L652.7 548.2L660.8 541.4"/><path class="bw2" d="M658.1 544.2L652.7 548.2L660.8 541.4"/><path class="br2" d="M655.4 546.2L652.7 548.2L656.7 544.8"/>
<use href="#h2" x="658.1" y="544.2"/>
<use href="#o2" x="652.7" y="548.2"/>
<use href="#h2" x="660.8" y="541.4"/>
<path class="bd" d="M255.2 542.6L248.3 553.6L257.7 558.8"/><path class="bw2" d="M255.2 542.6L248.3 553.6L257.7 558.8"/><path class="br2" d="M251.8 548.1L248.3 553.6L253 556.2"/>
<use href="#h2" x="255.2" y="542.6"/>
<use href="#o2" x="248.3" y="553.6"/>
<use href="#h2" x="257.7" y="558.8"/>
<path class="bd" d="M423.7 499.7L431.2 501.1L421.7 497.9"/><path class="bw2" d="M423.7 499.7L431.2 501.1L421.7 497.9"/><path class="br2" d="M427.5 500.4L431.2 501.1L426.5 499.5"/>
<use href="#h2" x="423.7" y="499.7"/>
<use href="#o2" x="431.2" y="501.1"/>
<use href="#h2" x="421.7" y="497.9"/>
<path class="bd" d="M297.8 580.9L306.9 591.8L303.7 601.4"/><path class="bw2" d="M297.8 580.9L306.9 591.8L303.7 601.4"/><path class="br2" d="M302.4 586.3L306.9 591.8L305.3 596.6"/>
<use href="#o2" x="306.9" y="591.8"/>
<use href="#h2" x="297.8" y="580.9"/>
<use href="#h2" x="303.7" y="601.4"/>
<path class="bd" d="M417.8 329.1L409 337.4L417.8 345.7"/><path class="bw2" d="M417.8 329.1L409 337.4L417.8 345.7"/><path class="br2" d="M413.4 333.2L409 337.4L413.4 341.6"/>
<use href="#h2" x="417.8" y="329.1"/>
<use href="#o2" x="409" y="337.4"/>
<use href="#h2" x="417.8" y="345.7"/>
<path class="bd" d="M433 355.5L432 369.7L426.2 374.9"/><path class="bw2" d="M433 355.5L432 369.7L426.2 374.9"/><path class="br2" d="M432.5 362.6L432 369.7L429.1 372.3"/>
<use href="#h2" x="426.2" y="374.9"/>
<use href="#h2" x="433" y="355.5"/>
<use href="#o2" x="432" y="369.7"/>
<path class="bd" d="M443.1 432.4L439.5 435.7L443.7 424.4"/><path class="bw2" d="M443.1 432.4L439.5 435.7L443.7 424.4"/><path class="br2" d="M441.3 434.1L439.5 435.7L441.6 430.1"/>
<use href="#h2" x="443.1" y="432.4"/>
<use href="#o2" x="439.5" y="435.7"/>
<use href="#h2" x="443.7" y="424.4"/>
<path class="bd" d="M472.7 244.4L487 245.7L489.6 259.4"/><path class="bw2" d="M472.7 244.4L487 245.7L489.6 259.4"/><path class="br2" d="M479.9 245L487 245.7L488.3 252.5"/>
<use href="#h2" x="489.6" y="259.4"/>
<use href="#h2" x="472.7" y="244.4"/>
<use href="#o2" x="487" y="245.7"/>
<path class="bd" d="M707.1 390.5L709 404L722.9 404.6"/><path class="bw2" d="M707.1 390.5L709 404L722.9 404.6"/><path class="br2" d="M708 397.3L709 404L715.9 404.3"/>
<use href="#h2" x="707.1" y="390.5"/>
<use href="#o2" x="709" y="404"/>
<use href="#h2" x="722.9" y="404.6"/>
<path class="bd" d="M489.6 689.2L484.9 675.7L481.2 671.1"/><path class="bw2" d="M489.6 689.2L484.9 675.7L481.2 671.1"/><path class="br2" d="M487.2 682.5L484.9 675.7L483 673.4"/>
<use href="#h2" x="481.2" y="671.1"/>
<use href="#h2" x="489.6" y="689.2"/>
<use href="#o2" x="484.9" y="675.7"/>
<path class="bd" d="M434.3 587.6L431.9 587.1L443.4 593.5"/><path class="bw2" d="M434.3 587.6L431.9 587.1L443.4 593.5"/><path class="br2" d="M433.1 587.3L431.9 587.1L437.6 590.3"/>
<use href="#h2" x="434.3" y="587.6"/>
<use href="#o2" x="431.9" y="587.1"/>
<use href="#h2" x="443.4" y="593.5"/>
<path class="bd" d="M566.7 636.6L571.2 637.9L577.4 650.9"/><path class="bw2" d="M566.7 636.6L571.2 637.9L577.4 650.9"/><path class="br2" d="M569 637.3L571.2 637.9L574.3 644.4"/>
<use href="#h2" x="566.7" y="636.6"/>
<use href="#o2" x="571.2" y="637.9"/>
<use href="#h2" x="577.4" y="650.9"/>
<path class="bd" d="M550 436.8L551.7 433.5L560.1 421.8"/><path class="bw2" d="M550 436.8L551.7 433.5L560.1 421.8"/><path class="br2" d="M550.8 435.1L551.7 433.5L555.9 427.7"/>
<use href="#h2" x="550" y="436.8"/>
<use href="#h2" x="560.1" y="421.8"/>
<use href="#o2" x="551.7" y="433.5"/>
<path class="bd" d="M586.3 464L590.6 468L604.6 464.6"/><path class="bw2" d="M586.3 464L590.6 468L604.6 464.6"/><path class="br2" d="M588.5 466L590.6 468L597.6 466.3"/>
<use href="#h2" x="586.3" y="464"/>
<use href="#o2" x="590.6" y="468"/>
<use href="#h2" x="604.6" y="464.6"/>
<path class="bd" d="M645 637.3L647.6 643L653 656.1"/><path class="bw2" d="M645 637.3L647.6 643L653 656.1"/><path class="br2" d="M646.3 640.2L647.6 643L650.3 649.5"/>
<use href="#h2" x="645" y="637.3"/>
<use href="#h2" x="653" y="656.1"/>
<use href="#o2" x="647.6" y="643"/>
<path class="bd" d="M698.9 534.9L704.1 546L696.8 545.6"/><path class="bw2" d="M698.9 534.9L704.1 546L696.8 545.6"/><path class="br2" d="M701.5 540.4L704.1 546L700.4 545.8"/>
<use href="#h2" x="696.8" y="545.6"/>
<use href="#o2" x="704.1" y="546"/>
<use href="#h2" x="698.9" y="534.9"/>
<path class="bd" d="M638.1 275L640.6 274.7L635.5 261.8"/><path class="bw2" d="M638.1 275L640.6 274.7L635.5 261.8"/><path class="br2" d="M639.4 274.8L640.6 274.7L638.1 268.2"/>
<use href="#h2" x="638.1" y="275"/>
<use href="#o2" x="640.6" y="274.7"/>
<use href="#h2" x="635.5" y="261.8"/>
<path class="bd" d="M352.9 406.6L344.5 410.1L348.4 423.5"/><path class="bw2" d="M352.9 406.6L344.5 410.1L348.4 423.5"/><path class="br2" d="M348.7 408.3L344.5 410.1L346.4 416.8"/>
<use href="#h2" x="348.4" y="423.5"/>
<use href="#o2" x="344.5" y="410.1"/>
<use href="#h2" x="352.9" y="406.6"/>
<path class="bd" d="M302 552L314.3 549L324.8 554"/><path class="bw2" d="M302 552L314.3 549L324.8 554"/><path class="br2" d="M308.2 550.5L314.3 549L319.5 551.5"/>
<use href="#o2" x="314.3" y="549"/>
<use href="#h2" x="302" y="552"/>
<use href="#h2" x="324.8" y="554"/>
<path class="bd" d="M477.4 565.5L477.6 556L481.1 543.4"/><path class="bw2" d="M477.4 565.5L477.6 556L481.1 543.4"/><path class="br2" d="M477.5 560.7L477.6 556L479.3 549.7"/>
<use href="#o2" x="477.6" y="556"/>
<use href="#h2" x="481.1" y="543.4"/>
<use href="#h2" x="477.4" y="565.5"/>
<path class="bd" d="M465.8 317.3L473.9 324.1L487.6 321.3"/><path class="bw2" d="M465.8 317.3L473.9 324.1L487.6 321.3"/><path class="br2" d="M469.9 320.7L473.9 324.1L480.7 322.7"/>
<use href="#h2" x="465.8" y="317.3"/>
<use href="#h2" x="487.6" y="321.3"/>
<use href="#o2" x="473.9" y="324.1"/>
<path class="bd" d="M244.7 652.9L252.5 640.7L265.6 644.8"/><path class="bw2" d="M244.7 652.9L252.5 640.7L265.6 644.8"/><path class="br2" d="M248.6 646.8L252.5 640.7L259.1 642.8"/>
<use href="#h2" x="244.7" y="652.9"/>
<use href="#o2" x="252.5" y="640.7"/>
<use href="#h2" x="265.6" y="644.8"/>
<path class="bd" d="M557.4 543.2L562.2 530.5L570.9 534.1"/><path class="bw2" d="M557.4 543.2L562.2 530.5L570.9 534.1"/><path class="br2" d="M559.8 536.8L562.2 530.5L566.5 532.3"/>
<use href="#h2" x="557.4" y="543.2"/>
<use href="#o2" x="562.2" y="530.5"/>
<use href="#h2" x="570.9" y="534.1"/>
<path class="bd" d="M304.9 689.8L307.4 681.7L297.5 686.1"/><path class="bw2" d="M304.9 689.8L307.4 681.7L297.5 686.1"/><path class="br2" d="M306.2 685.7L307.4 681.7L302.5 683.9"/>
<use href="#h2" x="297.5" y="686.1"/>
<use href="#o2" x="307.4" y="681.7"/>
<use href="#h2" x="304.9" y="689.8"/>
<path class="bd" d="M523.4 507.5L519.2 499.8L529.7 501.7"/><path class="bw2" d="M523.4 507.5L519.2 499.8L529.7 501.7"/><path class="br2" d="M521.3 503.7L519.2 499.8L524.5 500.7"/>
<use href="#h2" x="529.7" y="501.7"/>
<use href="#o2" x="519.2" y="499.8"/>
<use href="#h2" x="523.4" y="507.5"/>
<path class="bd" d="M273.8 303.6L282.6 310.4L295.2 303.4"/><path class="bw2" d="M273.8 303.6L282.6 310.4L295.2 303.4"/><path class="br2" d="M278.2 307L282.6 310.4L288.9 306.9"/>
<use href="#o2" x="282.6" y="310.4"/>
<use href="#h2" x="295.2" y="303.4"/>
<use href="#h2" x="273.8" y="303.6"/>
<path class="bd" d="M531.2 574.5L536.5 564.3L528.8 565.7"/><path class="bw2" d="M531.2 574.5L536.5 564.3L528.8 565.7"/><path class="br2" d="M533.9 569.4L536.5 564.3L532.6 565"/>
<use href="#h2" x="531.2" y="574.5"/>
<use href="#o2" x="536.5" y="564.3"/>
<use href="#h2" x="528.8" y="565.7"/>
<path class="bd" d="M498.7 269.8L511.5 273.6L516.5 261.3"/><path class="bw2" d="M498.7 269.8L511.5 273.6L516.5 261.3"/><path class="br2" d="M505.1 271.7L511.5 273.6L514 267.4"/>
<use href="#h2" x="516.5" y="261.3"/>
<use href="#o2" x="511.5" y="273.6"/>
<use href="#h2" x="498.7" y="269.8"/>
<path class="bd" d="M358.8 481L365.7 468.2L378.7 470.8"/><path class="bw2" d="M358.8 481L365.7 468.2L378.7 470.8"/><path class="br2" d="M362.2 474.6L365.7 468.2L372.2 469.5"/>
<use href="#o2" x="365.7" y="468.2"/>
<use href="#h2" x="358.8" y="481"/>
<use href="#h2" x="378.7" y="470.8"/>
<path class="bd" d="M635.3 532.9L628.1 526.9L636.4 529.7"/><path class="bw2" d="M635.3 532.9L628.1 526.9L636.4 529.7"/><path class="br2" d="M631.7 529.9L628.1 526.9L632.2 528.3"/>
<use href="#h2" x="635.3" y="532.9"/>
<use href="#o2" x="628.1" y="526.9"/>
<use href="#h2" x="636.4" y="529.7"/>
<path class="bd" d="M675.9 275.7L687.4 274.1L690.1 259.7"/><path class="bw2" d="M675.9 275.7L687.4 274.1L690.1 259.7"/><path class="br2" d="M681.6 274.9L687.4 274.1L688.8 266.9"/>
<use href="#h2" x="675.9" y="275.7"/>
<use href="#h2" x="690.1" y="259.7"/>
<use href="#o2" x="687.4" y="274.1"/>
<path class="bd" d="M644.3 696.4L643.5 681.8L638.5 679.2"/><path class="bw2" d="M644.3 696.4L643.5 681.8L638.5 679.2"/><path class="br2" d="M643.9 689.1L643.5 681.8L641 680.5"/>
<use href="#h2" x="644.3" y="696.4"/>
<use href="#o2" x="643.5" y="681.8"/>
<use href="#h2" x="638.5" y="679.2"/>
<path class="bd" d="M246.9 374.2L251.5 363.3L260.3 355.3"/><path class="bw2" d="M246.9 374.2L251.5 363.3L260.3 355.3"/><path class="br2" d="M249.2 368.7L251.5 363.3L255.9 359.3"/>
<use href="#h2" x="260.3" y="355.3"/>
<use href="#h2" x="246.9" y="374.2"/>
<use href="#o2" x="251.5" y="363.3"/>
<path class="bd" d="M701.9 333.4L698.4 326.8L711.1 322.3"/><path class="bw2" d="M701.9 333.4L698.4 326.8L711.1 322.3"/><path class="br2" d="M700.2 330.1L698.4 326.8L704.8 324.6"/>
<use href="#h2" x="711.1" y="322.3"/>
<use href="#o2" x="698.4" y="326.8"/>
<use href="#h2" x="701.9" y="333.4"/>
<path class="bd" d="M562.8 323.3L556.6 315.8L543.2 321.5"/><path class="bw2" d="M562.8 323.3L556.6 315.8L543.2 321.5"/><path class="br2" d="M559.7 319.6L556.6 315.8L549.9 318.7"/>
<use href="#h2" x="543.2" y="321.5"/>
<use href="#o2" x="556.6" y="315.8"/>
<use href="#h2" x="562.8" y="323.3"/>
<path class="bd" d="M396.5 608.6L390.4 621.2L378.8 622.9"/><path class="bw2" d="M396.5 608.6L390.4 621.2L378.8 622.9"/><path class="br2" d="M393.4 614.9L390.4 621.2L384.6 622.1"/>
<use href="#o2" x="390.4" y="621.2"/>
<use href="#h2" x="396.5" y="608.6"/>
<use href="#h2" x="378.8" y="622.9"/>
<path class="bd" d="M616.7 570.8L614.3 584.8L621.2 586.3"/><path class="bw2" d="M616.7 570.8L614.3 584.8L621.2 586.3"/><path class="br2" d="M615.5 577.8L614.3 584.8L617.8 585.6"/>
<use href="#h2" x="616.7" y="570.8"/>
<use href="#o2" x="614.3" y="584.8"/>
<use href="#h2" x="621.2" y="586.3"/>
<path class="bd" d="M436.7 261.4L423.3 256.5L424.1 251.8"/><path class="bw2" d="M436.7 261.4L423.3 256.5L424.1 251.8"/><path class="br2" d="M430 258.9L423.3 256.5L423.7 254.1"/>
<use href="#h2" x="436.7" y="261.4"/>
<use href="#o2" x="423.3" y="256.5"/>
<use href="#h2" x="424.1" y="251.8"/>
<path class="bd" d="M392.7 411.5L380.5 418.7L370.9 408.2"/><path class="bw2" d="M392.7 411.5L380.5 418.7L370.9 408.2"/><path class="br2" d="M386.6 415.1L380.5 418.7L375.7 413.5"/>
<use href="#h2" x="370.9" y="408.2"/>
<use href="#o2" x="380.5" y="418.7"/>
<use href="#h2" x="392.7" y="411.5"/>
<path class="bd" d="M583.9 416L596.7 409L606.3 419.7"/><path class="bw2" d="M583.9 416L596.7 409L606.3 419.7"/><path class="br2" d="M590.3 412.5L596.7 409L601.5 414.4"/>
<use href="#h2" x="606.3" y="419.7"/>
<use href="#o2" x="596.7" y="409"/>
<use href="#h2" x="583.9" y="416"/>
<path class="bd" d="M454.6 397.2L468.4 401.4L471.7 395.8"/><path class="bw2" d="M454.6 397.2L468.4 401.4L471.7 395.8"/><path class="br2" d="M461.5 399.3L468.4 401.4L470 398.6"/>
<use href="#h2" x="454.6" y="397.2"/>
<use href="#o2" x="468.4" y="401.4"/>
<use href="#h2" x="471.7" y="395.8"/>
<path class="bd" d="M339.3 372.8L342.4 361.1L354.7 355.7"/><path class="bw2" d="M339.3 372.8L342.4 361.1L354.7 355.7"/><path class="br2" d="M340.9 366.9L342.4 361.1L348.5 358.4"/>
<use href="#h2" x="339.3" y="372.8"/>
<use href="#h2" x="354.7" y="355.7"/>
<use href="#o2" x="342.4" y="361.1"/>
<path class="bd" d="M328.8 479L317.9 469.3L312.3 471.8"/><path class="bw2" d="M328.8 479L317.9 469.3L312.3 471.8"/><path class="br2" d="M323.3 474.1L317.9 469.3L315.1 470.6"/>
<use href="#h2" x="328.8" y="479"/>
<use href="#o2" x="317.9" y="469.3"/>
<use href="#h2" x="312.3" y="471.8"/>
<path class="bd" d="M628.6 459.2L638.1 469.2L640.2 465.8"/><path class="bw2" d="M628.6 459.2L638.1 469.2L640.2 465.8"/><path class="br2" d="M633.4 464.2L638.1 469.2L639.2 467.5"/>
<use href="#h2" x="640.2" y="465.8"/>
<use href="#o2" x="638.1" y="469.2"/>
<use href="#h2" x="628.6" y="459.2"/>
<path class="bd" d="M662.3 256.1L657.9 244.2L650.1 249.5"/><path class="bw2" d="M662.3 256.1L657.9 244.2L650.1 249.5"/><path class="br2" d="M660.1 250.1L657.9 244.2L654 246.8"/>
<use href="#h2" x="662.3" y="256.1"/>
<use href="#o2" x="657.9" y="244.2"/>
<use href="#h2" x="650.1" y="249.5"/>
<path class="bd" d="M599 300.4L601.7 286.2L614.6 283.6"/><path class="bw2" d="M599 300.4L601.7 286.2L614.6 283.6"/><path class="br2" d="M600.3 293.3L601.7 286.2L608.2 284.9"/>
<use href="#o2" x="601.7" y="286.2"/>
<use href="#h2" x="599" y="300.4"/>
<use href="#h2" x="614.6" y="283.6"/>
<path class="bd" d="M666.1 442.7L669.2 429.9L660.3 420.2"/><path class="bw2" d="M666.1 442.7L669.2 429.9L660.3 420.2"/><path class="br2" d="M667.6 436.3L669.2 429.9L664.7 425"/>
<use href="#o2" x="669.2" y="429.9"/>
<use href="#h2" x="660.3" y="420.2"/>
<use href="#h2" x="666.1" y="442.7"/>
<path class="bd" d="M469.4 284.4L454.8 282.4L451.3 278.9"/><path class="bw2" d="M469.4 284.4L454.8 282.4L451.3 278.9"/><path class="br2" d="M462.1 283.4L454.8 282.4L453 280.6"/>
<use href="#h2" x="451.3" y="278.9"/>
<use href="#h2" x="469.4" y="284.4"/>
<use href="#o2" x="454.8" y="282.4"/>
<path class="bd" d="M537.2 366.4L535.5 377.3L532.4 389.1"/><path class="bw2" d="M537.2 366.4L535.5 377.3L532.4 389.1"/><path class="br2" d="M536.4 371.8L535.5 377.3L533.9 383.2"/>
<use href="#o2" x="535.5" y="377.3"/>
<use href="#h2" x="532.4" y="389.1"/>
<use href="#h2" x="537.2" y="366.4"/>
<path class="bd" d="M561.9 396.3L557.9 410.1L569.4 415.6"/><path class="bw2" d="M561.9 396.3L557.9 410.1L569.4 415.6"/><path class="br2" d="M559.9 403.2L557.9 410.1L563.6 412.9"/>
<use href="#h2" x="569.4" y="415.6"/>
<use href="#o2" x="557.9" y="410.1"/>
<use href="#h2" x="561.9" y="396.3"/>
<path class="bd" d="M611.1 648.1L617 634.6L631.1 636.4"/><path class="bw2" d="M611.1 648.1L617 634.6L631.1 636.4"/><path class="br2" d="M614 641.4L617 634.6L624 635.5"/>
<use href="#h2" x="631.1" y="636.4"/>
<use href="#h2" x="611.1" y="648.1"/>
<use href="#o2" x="617" y="634.6"/>
<path class="bd" d="M616.4 361L603 355L601.3 353.1"/><path class="bw2" d="M616.4 361L603 355L601.3 353.1"/><path class="br2" d="M609.7 358L603 355L602.1 354.1"/>
<use href="#h2" x="601.3" y="353.1"/>
<use href="#o2" x="603" y="355"/>
<use href="#h2" x="616.4" y="361"/>
<path class="bd" d="M555.2 593.2L558.4 586.9L566.3 575"/><path class="bw2" d="M555.2 593.2L558.4 586.9L566.3 575"/><path class="br2" d="M556.8 590.1L558.4 586.9L562.3 581"/>
<use href="#h2" x="555.2" y="593.2"/>
<use href="#h2" x="566.3" y="575"/>
<use href="#o2" x="558.4" y="586.9"/>
<path class="bd" d="M418.1 661.9L431.2 668.7L441.1 657.7"/><path class="bw2" d="M418.1 661.9L431.2 668.7L441.1 657.7"/><path class="br2" d="M424.7 665.3L431.2 668.7L436.2 663.2"/>
<use href="#h2" x="441.1" y="657.7"/>
<use href="#o2" x="431.2" y="668.7"/>
<use href="#h2" x="418.1" y="661.9"/>
<path class="bd" d="M410.5 461.9L411.5 447.3L397.5 442.6"/><path class="bw2" d="M410.5 461.9L411.5 447.3L397.5 442.6"/><path class="br2" d="M411 454.6L411.5 447.3L404.5 444.9"/>
<use href="#h2" x="410.5" y="461.9"/>
<use href="#h2" x="397.5" y="442.6"/>
<use href="#o2" x="411.5" y="447.3"/>
<path class="bd" d="M628.4 418.7L637.6 411.8L629.6 409.5"/><path class="bw2" d="M628.4 418.7L637.6 411.8L629.6 409.5"/><path class="br2" d="M633 415.3L637.6 411.8L633.6 410.7"/>
<use href="#h2" x="628.4" y="418.7"/>
<use href="#o2" x="637.6" y="411.8"/>
<use href="#h2" x="629.6" y="409.5"/>
<path class="bd" d="M444.8 524.4L442.7 516.2L436.3 525.4"/><path class="bw2" d="M444.8 524.4L442.7 516.2L436.3 525.4"/><path class="br2" d="M443.8 520.3L442.7 516.2L439.5 520.8"/>
<use href="#h2" x="444.8" y="524.4"/>
<use href="#o2" x="442.7" y="516.2"/>
<use href="#h2" x="436.3" y="525.4"/>
<path class="bd" d="M329.7 515.8L319.1 514L326.4 510.9"/><path class="bw2" d="M329.7 515.8L319.1 514L326.4 510.9"/><path class="br2" d="M324.4 514.9L319.1 514L322.8 512.5"/>
<use href="#h2" x="329.7" y="515.8"/>
<use href="#o2" x="319.1" y="514"/>
<use href="#h2" x="326.4" y="510.9"/>
<path class="bd" d="M236.1 661.4L234 675L231.7 683.4"/><path class="bw2" d="M236.1 661.4L234 675L231.7 683.4"/><path class="br2" d="M235.1 668.2L234 675L232.8 679.2"/>
<use href="#o2" x="234" y="675"/>
<use href="#h2" x="236.1" y="661.4"/>
<use href="#h2" x="231.7" y="683.4"/>
<path class="bd" d="M354.9 610.1L358.4 596.1L367.4 597.1"/><path class="bw2" d="M354.9 610.1L358.4 596.1L367.4 597.1"/><path class="br2" d="M356.6 603.1L358.4 596.1L362.9 596.6"/>
<use href="#h2" x="367.4" y="597.1"/>
<use href="#o2" x="358.4" y="596.1"/>
<use href="#h2" x="354.9" y="610.1"/>
<path class="bd" d="M700.6 393.5L701.7 394.1L710.9 405.3"/><path class="bw2" d="M700.6 393.5L701.7 394.1L710.9 405.3"/><path class="br2" d="M701.2 393.8L701.7 394.1L706.3 399.7"/>
<use href="#h2" x="710.9" y="405.3"/>
<use href="#o2" x="701.7" y="394.1"/>
<use href="#h2" x="700.6" y="393.5"/>
<path class="bd" d="M391 508.6L386 521.9L372.3 522.7"/><path class="bw2" d="M391 508.6L386 521.9L372.3 522.7"/><path class="br2" d="M388.5 515.3L386 521.9L379.2 522.3"/>
<use href="#o2" x="386" y="521.9"/>
<use href="#h2" x="391" y="508.6"/>
<use href="#h2" x="372.3" y="522.7"/>
<path class="bd" d="M526.8 691L519.3 688.1L522.9 699.1"/><path class="bw2" d="M526.8 691L519.3 688.1L522.9 699.1"/><path class="br2" d="M523 689.5L519.3 688.1L521.1 693.6"/>
<use href="#h2" x="522.9" y="699.1"/>
<use href="#o2" x="519.3" y="688.1"/>
<use href="#h2" x="526.8" y="691"/>
<path class="bd" d="M696.1 541.6L701.3 555.2L692 564.2"/><path class="bw2" d="M696.1 541.6L701.3 555.2L692 564.2"/><path class="br2" d="M698.7 548.4L701.3 555.2L696.6 559.7"/>
<use href="#o2" x="701.3" y="555.2"/>
<use href="#h2" x="696.1" y="541.6"/>
<use href="#h2" x="692" y="564.2"/>
<path class="bd" d="M471.1 422.7L481.5 432.8L480.3 442.7"/><path class="bw2" d="M471.1 422.7L481.5 432.8L480.3 442.7"/><path class="br2" d="M476.3 427.8L481.5 432.8L480.9 437.8"/>
<use href="#h2" x="480.3" y="442.7"/>
<use href="#h2" x="471.1" y="422.7"/>
<use href="#o2" x="481.5" y="432.8"/>
<path class="bd" d="M500.9 548.8L504.3 554.1L513.9 544.2"/><path class="bw2" d="M500.9 548.8L504.3 554.1L513.9 544.2"/><path class="br2" d="M502.6 551.4L504.3 554.1L509.1 549.1"/>
<use href="#h2" x="513.9" y="544.2"/>
<use href="#o2" x="504.3" y="554.1"/>
<use href="#h2" x="500.9" y="548.8"/>
<path class="bd" d="M535.9 346.2L533 335.1L528.4 323.9"/><path class="bw2" d="M535.9 346.2L533 335.1L528.4 323.9"/><path class="br2" d="M534.5 340.7L533 335.1L530.7 329.5"/>
<use href="#o2" x="533" y="335.1"/>
<use href="#h2" x="528.4" y="323.9"/>
<use href="#h2" x="535.9" y="346.2"/>
<path class="bd" d="M434 396.8L430 411.1L415.3 410.8"/><path class="bw2" d="M434 396.8L430 411.1L415.3 410.8"/><path class="br2" d="M432 403.9L430 411.1L422.7 411"/>
<use href="#h2" x="415.3" y="410.8"/>
<use href="#h2" x="434" y="396.8"/>
<use href="#o2" x="430" y="411.1"/>
<path class="bd" d="M280.1 477.1L278.4 463.3L291.6 456.8"/><path class="bw2" d="M280.1 477.1L278.4 463.3L291.6 456.8"/><path class="br2" d="M279.3 470.2L278.4 463.3L285 460.1"/>
<use href="#h2" x="280.1" y="477.1"/>
<use href="#h2" x="291.6" y="456.8"/>
<use href="#o2" x="278.4" y="463.3"/>
<path class="bd" d="M538.1 610.4L542.1 624.6L536 632"/><path class="bw2" d="M538.1 610.4L542.1 624.6L536 632"/><path class="br2" d="M540.1 617.5L542.1 624.6L539.1 628.3"/>
<use href="#h2" x="536" y="632"/>
<use href="#h2" x="538.1" y="610.4"/>
<use href="#o2" x="542.1" y="624.6"/>
<path class="bd" d="M673.7 641.8L672.9 652.7L685.5 651.3"/><path class="bw2" d="M673.7 641.8L672.9 652.7L685.5 651.3"/><path class="br2" d="M673.3 647.2L672.9 652.7L679.2 652"/>
<use href="#h2" x="685.5" y="651.3"/>
<use href="#o2" x="672.9" y="652.7"/>
<use href="#h2" x="673.7" y="641.8"/>
<path class="bd" d="M299.5 280.9L293.4 278.3L293.7 263.5"/><path class="bw2" d="M299.5 280.9L293.4 278.3L293.7 263.5"/><path class="br2" d="M296.5 279.6L293.4 278.3L293.6 270.9"/>
<use href="#h2" x="299.5" y="280.9"/>
<use href="#o2" x="293.4" y="278.3"/>
<use href="#h2" x="293.7" y="263.5"/>
<path class="bd" d="M340.8 378.7L337.8 393L323.2 394.3"/><path class="bw2" d="M340.8 378.7L337.8 393L323.2 394.3"/><path class="br2" d="M339.3 385.9L337.8 393L330.5 393.7"/>
<use href="#h2" x="340.8" y="378.7"/>
<use href="#h2" x="323.2" y="394.3"/>
<use href="#o2" x="337.8" y="393"/>
<path class="bd" d="M279.4 237.5L274.6 244.9L261.4 250.4"/><path class="bw2" d="M279.4 237.5L274.6 244.9L261.4 250.4"/><path class="br2" d="M277 241.2L274.6 244.9L268 247.7"/>
<use href="#o2" x="274.6" y="244.9"/>
<use href="#h2" x="261.4" y="250.4"/>
<use href="#h2" x="279.4" y="237.5"/>
<path class="bd" d="M706.9 702.6L703.6 688.1L709.6 681.9"/><path class="bw2" d="M706.9 702.6L703.6 688.1L709.6 681.9"/><path class="br2" d="M705.3 695.3L703.6 688.1L706.6 685"/>
<use href="#o2" x="703.6" y="688.1"/>
<use href="#h2" x="706.9" y="702.6"/>
<use href="#h2" x="709.6" y="681.9"/>
<path class="bd" d="M364.8 276.8L353.6 274.3L343.4 284.7"/><path class="bw2" d="M364.8 276.8L353.6 274.3L343.4 284.7"/><path class="br2" d="M359.2 275.6L353.6 274.3L348.5 279.5"/>
<use href="#h2" x="364.8" y="276.8"/>
<use href="#h2" x="343.4" y="284.7"/>
<use href="#o2" x="353.6" y="274.3"/>
<path class="bd" d="M597.6 667.8L594.1 680.2L580.8 684.2"/><path class="bw2" d="M597.6 667.8L594.1 680.2L580.8 684.2"/><path class="br2" d="M595.8 674L594.1 680.2L587.4 682.2"/>
<use href="#h2" x="597.6" y="667.8"/>
<use href="#h2" x="580.8" y="684.2"/>
<use href="#o2" x="594.1" y="680.2"/>
<path class="bd" d="M516.5 611L503.3 612.6L506.7 615.8"/><path class="bw2" d="M516.5 611L503.3 612.6L506.7 615.8"/><path class="br2" d="M509.9 611.8L503.3 612.6L505 614.2"/>
<use href="#h2" x="506.7" y="615.8"/>
<use href="#o2" x="503.3" y="612.6"/>
<use href="#h2" x="516.5" y="611"/>
<path class="bd" d="M394.6 569.7L401.8 568.2L414.1 576.6"/><path class="bw2" d="M394.6 569.7L401.8 568.2L414.1 576.6"/><path class="br2" d="M398.2 569L401.8 568.2L407.9 572.4"/>
<use href="#o2" x="401.8" y="568.2"/>
<use href="#h2" x="414.1" y="576.6"/>
<use href="#h2" x="394.6" y="569.7"/>
<path class="bd" d="M311.3 545.8L317.8 556.5L309.3 568.5"/><path class="bw2" d="M311.3 545.8L317.8 556.5L309.3 568.5"/><path class="br2" d="M314.6 551.2L317.8 556.5L313.5 562.5"/>
<use href="#o2" x="317.8" y="556.5"/>
<use href="#h2" x="309.3" y="568.5"/>
<use href="#h2" x="311.3" y="545.8"/>
<path class="bd" d="M343.1 428.3L336.2 440.4L321.9 436.3"/><path class="bw2" d="M343.1 428.3L336.2 440.4L321.9 436.3"/><path class="br2" d="M339.6 434.4L336.2 440.4L329 438.3"/>
<use href="#h2" x="321.9" y="436.3"/>
<use href="#o2" x="336.2" y="440.4"/>
<use href="#h2" x="343.1" y="428.3"/>
<path class="bd" d="M287.7 539.9L275.6 538.3L279.9 528.8"/><path class="bw2" d="M287.7 539.9L275.6 538.3L279.9 528.8"/><path class="br2" d="M281.7 539.1L275.6 538.3L277.8 533.5"/>
<use href="#h2" x="287.7" y="539.9"/>
<use href="#o2" x="275.6" y="538.3"/>
<use href="#h2" x="279.9" y="528.8"/>
<path class="bd" d="M615.9 237.2L617 223L622.6 215.8"/><path class="bw2" d="M615.9 237.2L617 223L622.6 215.8"/><path class="br2" d="M616.4 230.1L617 223L619.8 219.4"/>
<use href="#o2" x="617" y="223"/>
<use href="#h2" x="615.9" y="237.2"/>
<use href="#h2" x="622.6" y="215.8"/>
<path class="bd" d="M463.8 568.4L456.4 580.4L442.6 579"/><path class="bw2" d="M463.8 568.4L456.4 580.4L442.6 579"/><path class="br2" d="M460.1 574.4L456.4 580.4L449.5 579.7"/>
<use href="#o2" x="456.4" y="580.4"/>
<use href="#h2" x="463.8" y="568.4"/>
<use href="#h2" x="442.6" y="579"/>
<path class="bd" d="M487.6 464.2L478.2 475.2L466.4 473.4"/><path class="bw2" d="M487.6 464.2L478.2 475.2L466.4 473.4"/><path class="br2" d="M482.9 469.7L478.2 475.2L472.3 474.3"/>
<use href="#o2" x="478.2" y="475.2"/>
<use href="#h2" x="487.6" y="464.2"/>
<use href="#h2" x="466.4" y="473.4"/>
<path class="bd" d="M679.1 602.6L685 596.9L682.4 582.2"/><path class="bw2" d="M679.1 602.6L685 596.9L682.4 582.2"/><path class="br2" d="M682.1 599.8L685 596.9L683.7 589.6"/>
<use href="#h2" x="679.1" y="602.6"/>
<use href="#h2" x="682.4" y="582.2"/>
<use href="#o2" x="685" y="596.9"/>
<path class="bd" d="M424.6 311.1L438 304.5L440 302.3"/><path class="bw2" d="M424.6 311.1L438 304.5L440 302.3"/><path class="br2" d="M431.3 307.8L438 304.5L439 303.4"/>
<use href="#h2" x="440" y="302.3"/>
<use href="#o2" x="438" y="304.5"/>
<use href="#h2" x="424.6" y="311.1"/>
<path class="bd" d="M308.9 666.7L309 655.4L296.5 657.3"/><path class="bw2" d="M308.9 666.7L309 655.4L296.5 657.3"/><path class="br2" d="M309 661.1L309 655.4L302.8 656.4"/>
<use href="#h2" x="296.5" y="657.3"/>
<use href="#o2" x="309" y="655.4"/>
<use href="#h2" x="308.9" y="666.7"/>
<path class="bd" d="M388.2 694.9L390.2 682.9L382.3 672"/><path class="bw2" d="M388.2 694.9L390.2 682.9L382.3 672"/><path class="br2" d="M389.2 688.9L390.2 682.9L386.2 677.5"/>
<use href="#h2" x="388.2" y="694.9"/>
<use href="#h2" x="382.3" y="672"/>
<use href="#o2" x="390.2" y="682.9"/>
<path class="bd" d="M260.1 422.4L258.2 434.5L252.6 429"/><path class="bw2" d="M260.1 422.4L258.2 434.5L252.6 429"/><path class="br2" d="M259.1 428.4L258.2 434.5L255.4 431.7"/>
<use href="#h2" x="252.6" y="429"/>
<use href="#o2" x="258.2" y="434.5"/>
<use href="#h2" x="260.1" y="422.4"/>
<path class="bd" d="M323.4 615.9L323.1 602.4L333.2 603.4"/><path class="bw2" d="M323.4 615.9L323.1 602.4L333.2 603.4"/><path class="br2" d="M323.3 609.1L323.1 602.4L328.1 602.9"/>
<use href="#h2" x="323.4" y="615.9"/>
<use href="#o2" x="323.1" y="602.4"/>
<use href="#h2" x="333.2" y="603.4"/>
<path class="bd" d="M275.3 399.5L281.8 402.3L283.4 417.3"/><path class="bw2" d="M275.3 399.5L281.8 402.3L283.4 417.3"/><path class="br2" d="M278.5 400.9L281.8 402.3L282.6 409.8"/>
<use href="#h2" x="275.3" y="399.5"/>
<use href="#o2" x="281.8" y="402.3"/>
<use href="#h2" x="283.4" y="417.3"/>
<path class="bd" d="M602.3 452L606.1 438.5L595.6 435.7"/><path class="bw2" d="M602.3 452L606.1 438.5L595.6 435.7"/><path class="br2" d="M604.2 445.3L606.1 438.5L600.9 437.1"/>
<use href="#h2" x="595.6" y="435.7"/>
<use href="#o2" x="606.1" y="438.5"/>
<use href="#h2" x="602.3" y="452"/>
<path class="bd" d="M246.7 554.3L246 567.1L231.4 570.5"/><path class="bw2" d="M246.7 554.3L246 567.1L231.4 570.5"/><path class="br2" d="M246.4 560.7L246 567.1L238.7 568.8"/>
<use href="#h2" x="246.7" y="554.3"/>
<use href="#o2" x="246" y="567.1"/>
<use href="#h2" x="231.4" y="570.5"/>
<path class="bd" d="M380.1 257.5L393.6 251.9L403.4 262.2"/><path class="bw2" d="M380.1 257.5L393.6 251.9L403.4 262.2"/><path class="br2" d="M386.9 254.7L393.6 251.9L398.5 257"/>
<use href="#h2" x="403.4" y="262.2"/>
<use href="#h2" x="380.1" y="257.5"/>
<use href="#o2" x="393.6" y="251.9"/>
<path class="bd" d="M277.8 615.2L270.5 628.4L259.1 625.7"/><path class="bw2" d="M277.8 615.2L270.5 628.4L259.1 625.7"/><path class="br2" d="M274.1 621.8L270.5 628.4L264.8 627"/>
<use href="#h2" x="259.1" y="625.7"/>
<use href="#o2" x="270.5" y="628.4"/>
<use href="#h2" x="277.8" y="615.2"/>
<path class="bd" d="M597.9 568.8L598.6 558.1L612.7 552.8"/><path class="bw2" d="M597.9 568.8L598.6 558.1L612.7 552.8"/><path class="br2" d="M598.3 563.4L598.6 558.1L605.7 555.4"/>
<use href="#o2" x="598.6" y="558.1"/>
<use href="#h2" x="612.7" y="552.8"/>
<use href="#h2" x="597.9" y="568.8"/>
<path class="bd" d="M561.3 252.7L554.3 263.7L548.9 272.8"/><path class="bw2" d="M561.3 252.7L554.3 263.7L548.9 272.8"/><path class="br2" d="M557.8 258.2L554.3 263.7L551.6 268.3"/>
<use href="#o2" x="554.3" y="263.7"/>
<use href="#h2" x="561.3" y="252.7"/>
<use href="#h2" x="548.9" y="272.8"/>
<path class="bd" d="M665.2 251.6L656.7 239.1L650.4 238.6"/><path class="bw2" d="M665.2 251.6L656.7 239.1L650.4 238.6"/><path class="br2" d="M661 245.4L656.7 239.1L653.6 238.9"/>
<use href="#o2" x="656.7" y="239.1"/>
<use href="#h2" x="665.2" y="251.6"/>
<use href="#h2" x="650.4" y="238.6"/>
<path class="bd" d="M400.5 546.3L412.8 539L409.1 524.4"/><path class="bw2" d="M400.5 546.3L412.8 539L409.1 524.4"/><path class="br2" d="M406.7 542.6L412.8 539L411 531.7"/>
<use href="#h2" x="400.5" y="546.3"/>
<use href="#h2" x="409.1" y="524.4"/>
<use href="#o2" x="412.8" y="539"/>
<path class="bd" d="M459.2 342.9L471.5 340.5L471.9 352.4"/><path class="bw2" d="M459.2 342.9L471.5 340.5L471.9 352.4"/><path class="br2" d="M465.3 341.7L471.5 340.5L471.7 346.4"/>
<use href="#h2" x="459.2" y="342.9"/>
<use href="#o2" x="471.5" y="340.5"/>
<use href="#h2" x="471.9" y="352.4"/>
<path class="bd" d="M352.2 332.1L338.7 338.6L328.7 327.8"/><path class="bw2" d="M352.2 332.1L338.7 338.6L328.7 327.8"/><path class="br2" d="M345.4 335.4L338.7 338.6L333.7 333.2"/>
<use href="#o2" x="338.7" y="338.6"/>
<use href="#h2" x="352.2" y="332.1"/>
<use href="#h2" x="328.7" y="327.8"/>
<path class="bd" d="M655.2 506.4L644.4 515.1L631.7 510.6"/><path class="bw2" d="M655.2 506.4L644.4 515.1L631.7 510.6"/><path class="br2" d="M649.8 510.8L644.4 515.1L638 512.9"/>
<use href="#h2" x="631.7" y="510.6"/>
<use href="#h2" x="655.2" y="506.4"/>
<use href="#o2" x="644.4" y="515.1"/>
<path class="bd" d="M657.7 268L655.3 282.8L656.3 288.5"/><path class="bw2" d="M657.7 268L655.3 282.8L656.3 288.5"/><path class="br2" d="M656.5 275.4L655.3 282.8L655.8 285.7"/>
<use href="#h2" x="656.3" y="288.5"/>
<use href="#h2" x="657.7" y="268"/>
<use href="#o2" x="655.3" y="282.8"/>
<path class="bd" d="M411.1 479.6L421 490.7L427.4 493.8"/><path class="bw2" d="M411.1 479.6L421 490.7L427.4 493.8"/><path class="br2" d="M416 485.2L421 490.7L424.2 492.3"/>
<use href="#o2" x="421" y="490.7"/>
<use href="#h2" x="411.1" y="479.6"/>
<use href="#h2" x="427.4" y="493.8"/>
<path class="bd" d="M587.5 329.1L572.8 331.4L572.4 338.5"/><path class="bw2" d="M587.5 329.1L572.8 331.4L572.4 338.5"/><path class="br2" d="M580.2 330.3L572.8 331.4L572.6 335"/>
<use href="#h2" x="572.4" y="338.5"/>
<use href="#o2" x="572.8" y="331.4"/>
<use href="#h2" x="587.5" y="329.1"/>
<path class="bd" d="M345.4 507L335.7 503.1L323.1 498.8"/><path class="bw2" d="M345.4 507L335.7 503.1L323.1 498.8"/><path class="br2" d="M340.5 505.1L335.7 503.1L329.4 501"/>
<use href="#h2" x="345.4" y="507"/>
<use href="#h2" x="323.1" y="498.8"/>
<use href="#o2" x="335.7" y="503.1"/>
<path class="bd" d="M410 415L404.5 427L408.2 439"/><path class="bw2" d="M410 415L404.5 427L408.2 439"/><path class="br2" d="M407.2 421L404.5 427L406.3 433"/>
<use href="#h2" x="408.2" y="439"/>
<use href="#h2" x="410" y="415"/>
<use href="#o2" x="404.5" y="427"/>
<path class="bd" d="M527.1 448.4L521.2 436.3L532.6 430.7"/><path class="bw2" d="M527.1 448.4L521.2 436.3L532.6 430.7"/><path class="br2" d="M524.1 442.4L521.2 436.3L526.9 433.5"/>
<use href="#h2" x="532.6" y="430.7"/>
<use href="#o2" x="521.2" y="436.3"/>
<use href="#h2" x="527.1" y="448.4"/>
<path class="bd" d="M599.6 324.6L610.1 325.7L603.5 334.2"/><path class="bw2" d="M599.6 324.6L610.1 325.7L603.5 334.2"/><path class="br2" d="M604.8 325.2L610.1 325.7L606.8 329.9"/>
<use href="#h2" x="603.5" y="334.2"/>
<use href="#o2" x="610.1" y="325.7"/>
<use href="#h2" x="599.6" y="324.6"/>
<path class="bd" d="M370.9 570.9L371.4 560.8L369.7 547.3"/><path class="bw2" d="M370.9 570.9L371.4 560.8L369.7 547.3"/><path class="br2" d="M371.1 565.8L371.4 560.8L370.6 554.1"/>
<use href="#h2" x="370.9" y="570.9"/>
<use href="#h2" x="369.7" y="547.3"/>
<use href="#o2" x="371.4" y="560.8"/>
<path class="bd" d="M246.3 293L257.5 298.6L253.5 313"/><path class="bw2" d="M246.3 293L257.5 298.6L253.5 313"/><path class="br2" d="M251.9 295.8L257.5 298.6L255.5 305.8"/>
<use href="#h2" x="253.5" y="313"/>
<use href="#o2" x="257.5" y="298.6"/>
<use href="#h2" x="246.3" y="293"/>
<path class="bd" d="M705.5 322.4L698.5 314.6L694.7 325.1"/><path class="bw2" d="M705.5 322.4L698.5 314.6L694.7 325.1"/><path class="br2" d="M702 318.5L698.5 314.6L696.6 319.8"/>
<use href="#h2" x="694.7" y="325.1"/>
<use href="#o2" x="698.5" y="314.6"/>
<use href="#h2" x="705.5" y="322.4"/>
<path class="bd" d="M245.9 478.6L251.8 469.4L247.5 475.5"/><path class="bw2" d="M245.9 478.6L251.8 469.4L247.5 475.5"/><path class="br2" d="M248.8 474L251.8 469.4L249.6 472.5"/>
<use href="#h2" x="245.9" y="478.6"/>
<use href="#o2" x="251.8" y="469.4"/>
<use href="#h2" x="247.5" y="475.5"/>
<path class="bd" d="M411.8 314.1L398.7 321.4L402.7 334.3"/><path class="bw2" d="M411.8 314.1L398.7 321.4L402.7 334.3"/><path class="br2" d="M405.2 317.7L398.7 321.4L400.7 327.9"/>
<use href="#h2" x="411.8" y="314.1"/>
<use href="#o2" x="398.7" y="321.4"/>
<use href="#h2" x="402.7" y="334.3"/>
<path class="bd" d="M441.2 462.6L453.2 454.4L449.7 449.8"/><path class="bw2" d="M441.2 462.6L453.2 454.4L449.7 449.8"/><path class="br2" d="M447.2 458.5L453.2 454.4L451.4 452.1"/>
<use href="#h2" x="449.7" y="449.8"/>
<use href="#o2" x="453.2" y="454.4"/>
<use href="#h2" x="441.2" y="462.6"/>
<path class="bd" d="M614.2 628.9L626.7 623.9L636.5 635.4"/><path class="bw2" d="M614.2 628.9L626.7 623.9L636.5 635.4"/><path class="br2" d="M620.4 626.4L626.7 623.9L631.6 629.7"/>
<use href="#h2" x="614.2" y="628.9"/>
<use href="#h2" x="636.5" y="635.4"/>
<use href="#o2" x="626.7" y="623.9"/>
<path class="bd" d="M545.8 583.7L537.7 572.7L545.6 560"/><path class="bw2" d="M545.8 583.7L537.7 572.7L545.6 560"/><path class="br2" d="M541.8 578.2L537.7 572.7L541.6 566.4"/>
<use href="#h2" x="545.8" y="583.7"/>
<use href="#h2" x="545.6" y="560"/>
<use href="#o2" x="537.7" y="572.7"/>
<path class="bd" d="M501.7 533.4L510.9 529L501.5 525.3"/><path class="bw2" d="M501.7 533.4L510.9 529L501.5 525.3"/><path class="br2" d="M506.3 531.2L510.9 529L506.2 527.2"/>
<use href="#h2" x="501.7" y="533.4"/>
<use href="#o2" x="510.9" y="529"/>
<use href="#h2" x="501.5" y="525.3"/>
<path class="bd" d="M449.5 367.9L434.6 366.5L428.8 379.9"/><path class="bw2" d="M449.5 367.9L434.6 366.5L428.8 379.9"/><path class="br2" d="M442 367.2L434.6 366.5L431.7 373.2"/>
<use href="#h2" x="428.8" y="379.9"/>
<use href="#h2" x="449.5" y="367.9"/>
<use href="#o2" x="434.6" y="366.5"/>
<path class="bd" d="M324.4 302.4L336.1 292.8L331.4 279.7"/><path class="bw2" d="M324.4 302.4L336.1 292.8L331.4 279.7"/><path class="br2" d="M330.2 297.6L336.1 292.8L333.7 286.3"/>
<use href="#h2" x="331.4" y="279.7"/>
<use href="#h2" x="324.4" y="302.4"/>
<use href="#o2" x="336.1" y="292.8"/>
<path class="bd" d="M365.1 631.1L371.8 631.9L360.3 633.8"/><path class="bw2" d="M365.1 631.1L371.8 631.9L360.3 633.8"/><path class="br2" d="M368.5 631.5L371.8 631.9L366.1 632.8"/>
<use href="#h2" x="360.3" y="633.8"/>
<use href="#o2" x="371.8" y="631.9"/>
<use href="#h2" x="365.1" y="631.1"/>
<path class="bd" d="M368.9 347.4L378.2 359L385.5 354.8"/><path class="bw2" d="M368.9 347.4L378.2 359L385.5 354.8"/><path class="br2" d="M373.6 353.2L378.2 359L381.9 356.9"/>
<use href="#h2" x="385.5" y="354.8"/>
<use href="#o2" x="378.2" y="359"/>
<use href="#h2" x="368.9" y="347.4"/>
<path class="bd" d="M496.5 259.5L508.8 261.9L509.7 249.5"/><path class="bw2" d="M496.5 259.5L508.8 261.9L509.7 249.5"/><path class="br2" d="M502.6 260.7L508.8 261.9L509.2 255.7"/>
<use href="#h2" x="496.5" y="259.5"/>
<use href="#o2" x="508.8" y="261.9"/>
<use href="#h2" x="509.7" y="249.5"/>
<path class="bd" d="M420.1 287.3L423.4 277.4L432 285.3"/><path class="bw2" d="M420.1 287.3L423.4 277.4L432 285.3"/><path class="br2" d="M421.7 282.4L423.4 277.4L427.7 281.4"/>
<use href="#h2" x="432" y="285.3"/>
<use href="#o2" x="423.4" y="277.4"/>
<use href="#h2" x="420.1" y="287.3"/>
<path class="bd" d="M471.7 528.6L472.7 520.2L463.7 508.2"/><path class="bw2" d="M471.7 528.6L472.7 520.2L463.7 508.2"/><path class="br2" d="M472.2 524.4L472.7 520.2L468.2 514.2"/>
<use href="#o2" x="472.7" y="520.2"/>
<use href="#h2" x="463.7" y="508.2"/>
<use href="#h2" x="471.7" y="528.6"/>
<path class="bd" d="M651.4 371.1L642.9 379.3L632.1 369.6"/><path class="bw2" d="M651.4 371.1L642.9 379.3L632.1 369.6"/><path class="br2" d="M647.2 375.2L642.9 379.3L637.5 374.4"/>
<use href="#h2" x="651.4" y="371.1"/>
<use href="#o2" x="642.9" y="379.3"/>
<use href="#h2" x="632.1" y="369.6"/>
<path class="bd" d="M704.8 486.5L705.6 500L693.9 499.8"/><path class="bw2" d="M704.8 486.5L705.6 500L693.9 499.8"/><path class="br2" d="M705.2 493.2L705.6 500L699.8 499.9"/>
<use href="#h2" x="693.9" y="499.8"/>
<use href="#o2" x="705.6" y="500"/>
<use href="#h2" x="704.8" y="486.5"/>
<path class="bd" d="M607.4 287.1L618 287L630.8 291.9"/><path class="bw2" d="M607.4 287.1L618 287L630.8 291.9"/><path class="br2" d="M612.7 287.1L618 287L624.4 289.5"/>
<use href="#o2" x="618" y="287"/>
<use href="#h2" x="630.8" y="291.9"/>
<use href="#h2" x="607.4" y="287.1"/>
<path class="bd" d="M596.3 398.6L609.8 400.1L618 409"/><path class="bw2" d="M596.3 398.6L609.8 400.1L618 409"/><path class="br2" d="M603.1 399.4L609.8 400.1L613.9 404.6"/>
<use href="#o2" x="609.8" y="400.1"/>
<use href="#h2" x="596.3" y="398.6"/>
<use href="#h2" x="618" y="409"/>
<path class="bd" d="M492.9 300.4L480 296.7L482.6 282.7"/><path class="bw2" d="M492.9 300.4L480 296.7L482.6 282.7"/><path class="br2" d="M486.5 298.5L480 296.7L481.3 289.7"/>
<use href="#h2" x="482.6" y="282.7"/>
<use href="#o2" x="480" y="296.7"/>
<use href="#h2" x="492.9" y="300.4"/>
<path class="bd" d="M554.9 397.8L558.1 389.7L561.8 400.2"/><path class="bw2" d="M554.9 397.8L558.1 389.7L561.8 400.2"/><path class="br2" d="M556.5 393.7L558.1 389.7L559.9 394.9"/>
<use href="#h2" x="561.8" y="400.2"/>
<use href="#o2" x="558.1" y="389.7"/>
<use href="#h2" x="554.9" y="397.8"/>
<path class="bd" d="M344.3 455.2L335.8 459.4L339 449.1"/><path class="bw2" d="M344.3 455.2L335.8 459.4L339 449.1"/><path class="br2" d="M340.1 457.3L335.8 459.4L337.4 454.3"/>
<use href="#h2" x="344.3" y="455.2"/>
<use href="#o2" x="335.8" y="459.4"/>
<use href="#h2" x="339" y="449.1"/>
<path class="bd" d="M464.6 546.1L457.4 553.4L452.6 542.1"/><path class="bw2" d="M464.6 546.1L457.4 553.4L452.6 542.1"/><path class="br2" d="M461 549.8L457.4 553.4L455 547.7"/>
<use href="#h2" x="452.6" y="542.1"/>
<use href="#o2" x="457.4" y="553.4"/>
<use href="#h2" x="464.6" y="546.1"/>
<path class="bd" d="M623.5 664.7L619 666.2L630.2 674.4"/><path class="bw2" d="M623.5 664.7L619 666.2L630.2 674.4"/><path class="br2" d="M621.2 665.5L619 666.2L624.6 670.3"/>
<use href="#h2" x="630.2" y="674.4"/>
<use href="#o2" x="619" y="666.2"/>
<use href="#h2" x="623.5" y="664.7"/>
<path class="bd" d="M478.6 608.1L482.9 622.6L480.8 629.8"/><path class="bw2" d="M478.6 608.1L482.9 622.6L480.8 629.8"/><path class="br2" d="M480.8 615.3L482.9 622.6L481.9 626.2"/>
<use href="#o2" x="482.9" y="622.6"/>
<use href="#h2" x="478.6" y="608.1"/>
<use href="#h2" x="480.8" y="629.8"/>
<path class="bd" d="M547.5 480.3L562.7 483.2L566.3 480.4"/><path class="bw2" d="M547.5 480.3L562.7 483.2L566.3 480.4"/><path class="br2" d="M555.1 481.7L562.7 483.2L564.5 481.8"/>
<use href="#h2" x="547.5" y="480.3"/>
<use href="#o2" x="562.7" y="483.2"/>
<use href="#h2" x="566.3" y="480.4"/>
<path class="bd" d="M574.1 589.3L565.2 594.3L570.5 586.8"/><path class="bw2" d="M574.1 589.3L565.2 594.3L570.5 586.8"/><path class="br2" d="M569.7 591.8L565.2 594.3L567.9 590.6"/>
<use href="#h2" x="570.5" y="586.8"/>
<use href="#o2" x="565.2" y="594.3"/>
<use href="#h2" x="574.1" y="589.3"/>
<path class="bd" d="M294.7 350.5L303.5 362.3L311.5 356.7"/><path class="bw2" d="M294.7 350.5L303.5 362.3L311.5 356.7"/><path class="br2" d="M299.1 356.4L303.5 362.3L307.5 359.5"/>
<use href="#h2" x="311.5" y="356.7"/>
<use href="#o2" x="303.5" y="362.3"/>
<use href="#h2" x="294.7" y="350.5"/>
<path class="bd" d="M719.3 427.3L706.2 429.5L697.2 437.1"/><path class="bw2" d="M719.3 427.3L706.2 429.5L697.2 437.1"/><path class="br2" d="M712.8 428.4L706.2 429.5L701.7 433.3"/>
<use href="#h2" x="697.2" y="437.1"/>
<use href="#h2" x="719.3" y="427.3"/>
<use href="#o2" x="706.2" y="429.5"/>
<path class="bd" d="M568.7 525.2L560.1 524.6L546.8 531.3"/><path class="bw2" d="M568.7 525.2L560.1 524.6L546.8 531.3"/><path class="br2" d="M564.4 524.9L560.1 524.6L553.4 528"/>
<use href="#o2" x="560.1" y="524.6"/>
<use href="#h2" x="546.8" y="531.3"/>
<use href="#h2" x="568.7" y="525.2"/>
<path class="bd" d="M422.3 652.1L414.2 663.5L399.5 660.4"/><path class="bw2" d="M422.3 652.1L414.2 663.5L399.5 660.4"/><path class="br2" d="M418.2 657.8L414.2 663.5L406.9 661.9"/>
<use href="#o2" x="414.2" y="663.5"/>
<use href="#h2" x="399.5" y="660.4"/>
<use href="#h2" x="422.3" y="652.1"/>
<path class="bd" d="M668.3 254.4L680.8 252.9L689.1 241.8"/><path class="bw2" d="M668.3 254.4L680.8 252.9L689.1 241.8"/><path class="br2" d="M674.5 253.6L680.8 252.9L684.9 247.4"/>
<use href="#o2" x="680.8" y="252.9"/>
<use href="#h2" x="689.1" y="241.8"/>
<use href="#h2" x="668.3" y="254.4"/>
<path class="bd" d="M356.7 653.5L363.9 666.3L357.8 669.3"/><path class="bw2" d="M356.7 653.5L363.9 666.3L357.8 669.3"/><path class="br2" d="M360.3 659.9L363.9 666.3L360.8 667.8"/>
<use href="#h2" x="356.7" y="653.5"/>
<use href="#o2" x="363.9" y="666.3"/>
<use href="#h2" x="357.8" y="669.3"/>
<path class="bd" d="M530.4 308.4L517 310.9L515.9 299.6"/><path class="bw2" d="M530.4 308.4L517 310.9L515.9 299.6"/><path class="br2" d="M523.7 309.6L517 310.9L516.5 305.3"/>
<use href="#h2" x="515.9" y="299.6"/>
<use href="#o2" x="517" y="310.9"/>
<use href="#h2" x="530.4" y="308.4"/>
<path class="bd" d="M285.4 249.8L299 254.1L301 244.9"/><path class="bw2" d="M285.4 249.8L299 254.1L301 244.9"/><path class="br2" d="M292.2 252L299 254.1L300 249.5"/>
<use href="#h2" x="301" y="244.9"/>
<use href="#o2" x="299" y="254.1"/>
<use href="#h2" x="285.4" y="249.8"/>
<path class="bd" d="M267.5 369.1L252.3 370.9L245.8 363.9"/><path class="bw2" d="M267.5 369.1L252.3 370.9L245.8 363.9"/><path class="br2" d="M259.9 370L252.3 370.9L249.1 367.4"/>
<use href="#h2" x="245.8" y="363.9"/>
<use href="#h2" x="267.5" y="369.1"/>
<use href="#o2" x="252.3" y="370.9"/>
<path class="bd" d="M542.2 638.9L540 623.7L533.3 619.3"/><path class="bw2" d="M542.2 638.9L540 623.7L533.3 619.3"/><path class="br2" d="M541.1 631.3L540 623.7L536.7 621.5"/>
<use href="#h2" x="533.3" y="619.3"/>
<use href="#h2" x="542.2" y="638.9"/>
<use href="#o2" x="540" y="623.7"/>
<path class="bd" d="M342.3 228.3L342.7 243.8L355.3 247.3"/><path class="bw2" d="M342.3 228.3L342.7 243.8L355.3 247.3"/><path class="br2" d="M342.5 236.1L342.7 243.8L349 245.6"/>
<use href="#h2" x="355.3" y="247.3"/>
<use href="#o2" x="342.7" y="243.8"/>
<use href="#h2" x="342.3" y="228.3"/>
<path class="bd" d="M689.3 369.6L703.5 364.1L702.2 356.5"/><path class="bw2" d="M689.3 369.6L703.5 364.1L702.2 356.5"/><path class="br2" d="M696.4 366.9L703.5 364.1L702.9 360.3"/>
<use href="#h2" x="689.3" y="369.6"/>
<use href="#o2" x="703.5" y="364.1"/>
<use href="#h2" x="702.2" y="356.5"/>
<path class="bd" d="M248 686.7L252.9 680.9L241.4 683.9"/><path class="bw2" d="M248 686.7L252.9 680.9L241.4 683.9"/><path class="br2" d="M250.4 683.8L252.9 680.9L247.1 682.4"/>
<use href="#h2" x="241.4" y="683.9"/>
<use href="#o2" x="252.9" y="680.9"/>
<use href="#h2" x="248" y="686.7"/>
<path class="bd" d="M610.7 515.5L611.7 527L599.9 536.4"/><path class="bw2" d="M610.7 515.5L611.7 527L599.9 536.4"/><path class="br2" d="M611.2 521.2L611.7 527L605.8 531.7"/>
<use href="#h2" x="610.7" y="515.5"/>
<use href="#h2" x="599.9" y="536.4"/>
<use href="#o2" x="611.7" y="527"/>
<path class="bd" d="M459.8 258.6L470.6 263.3L462.7 266"/><path class="bw2" d="M459.8 258.6L470.6 263.3L462.7 266"/><path class="br2" d="M465.2 260.9L470.6 263.3L466.6 264.6"/>
<use href="#h2" x="462.7" y="266"/>
<use href="#o2" x="470.6" y="263.3"/>
<use href="#h2" x="459.8" y="258.6"/>
<path class="bd" d="M443.4 617.1L446 629.9L460.6 628.3"/><path class="bw2" d="M443.4 617.1L446 629.9L460.6 628.3"/><path class="br2" d="M444.7 623.5L446 629.9L453.3 629.1"/>
<use href="#h2" x="443.4" y="617.1"/>
<use href="#o2" x="446" y="629.9"/>
<use href="#h2" x="460.6" y="628.3"/>
<path class="bd" d="M315.2 490.7L308.2 501L316.8 513.9"/><path class="bw2" d="M315.2 490.7L308.2 501L316.8 513.9"/><path class="br2" d="M311.7 495.9L308.2 501L312.5 507.5"/>
<use href="#o2" x="308.2" y="501"/>
<use href="#h2" x="316.8" y="513.9"/>
<use href="#h2" x="315.2" y="490.7"/>
<path class="bd" d="M486.1 681.4L487.8 676.4L476.7 683.8"/><path class="bw2" d="M486.1 681.4L487.8 676.4L476.7 683.8"/><path class="br2" d="M487 678.9L487.8 676.4L482.3 680.1"/>
<use href="#h2" x="476.7" y="683.8"/>
<use href="#o2" x="487.8" y="676.4"/>
<use href="#h2" x="486.1" y="681.4"/>
<path class="bd" d="M260 423.3L245.3 426.5L246.5 437.6"/><path class="bw2" d="M260 423.3L245.3 426.5L246.5 437.6"/><path class="br2" d="M252.6 424.9L245.3 426.5L245.9 432.1"/>
<use href="#h2" x="246.5" y="437.6"/>
<use href="#o2" x="245.3" y="426.5"/>
<use href="#h2" x="260" y="423.3"/>
<path class="bd" d="M672.5 445.2L668.5 452.1L676.3 444.4"/><path class="bw2" d="M672.5 445.2L668.5 452.1L676.3 444.4"/><path class="br2" d="M670.5 448.6L668.5 452.1L672.4 448.2"/>
<use href="#h2" x="676.3" y="444.4"/>
<use href="#o2" x="668.5" y="452.1"/>
<use href="#h2" x="672.5" y="445.2"/>
<path class="bd" d="M472.7 333.2L483.3 341.5L487.3 332.6"/><path class="bw2" d="M472.7 333.2L483.3 341.5L487.3 332.6"/><path class="br2" d="M478 337.4L483.3 341.5L485.3 337"/>
<use href="#h2" x="472.7" y="333.2"/>
<use href="#o2" x="483.3" y="341.5"/>
<use href="#h2" x="487.3" y="332.6"/>
<path class="bd" d="M290.2 577.9L292.2 572.9L296.9 558.2"/><path class="bw2" d="M290.2 577.9L292.2 572.9L296.9 558.2"/><path class="br2" d="M291.2 575.4L292.2 572.9L294.5 565.6"/>
<use href="#h2" x="290.2" y="577.9"/>
<use href="#h2" x="296.9" y="558.2"/>
<use href="#o2" x="292.2" y="572.9"/>
<path class="bd" d="M699.4 640.9L688.7 644.1L687.4 630.9"/><path class="bw2" d="M699.4 640.9L688.7 644.1L687.4 630.9"/><path class="br2" d="M694 642.5L688.7 644.1L688.1 637.5"/>
<use href="#h2" x="699.4" y="640.9"/>
<use href="#o2" x="688.7" y="644.1"/>
<use href="#h2" x="687.4" y="630.9"/>
<path class="bd" d="M600 601.7L601.6 587.5L591.8 578.6"/><path class="bw2" d="M600 601.7L601.6 587.5L591.8 578.6"/><path class="br2" d="M600.8 594.6L601.6 587.5L596.7 583.1"/>
<use href="#h2" x="591.8" y="578.6"/>
<use href="#h2" x="600" y="601.7"/>
<use href="#o2" x="601.6" y="587.5"/>
<path class="bd" d="M691.8 557.8L697.3 571.8L712.1 571.7"/><path class="bw2" d="M691.8 557.8L697.3 571.8L712.1 571.7"/><path class="br2" d="M694.6 564.8L697.3 571.8L704.7 571.7"/>
<use href="#o2" x="697.3" y="571.8"/>
<use href="#h2" x="691.8" y="557.8"/>
<use href="#h2" x="712.1" y="571.7"/>
<path class="bd" d="M273 627.6L278.3 635.2L288.7 645.3"/><path class="bw2" d="M273 627.6L278.3 635.2L288.7 645.3"/><path class="br2" d="M275.6 631.4L278.3 635.2L283.5 640.2"/>
<use href="#h2" x="273" y="627.6"/>
<use href="#h2" x="288.7" y="645.3"/>
<use href="#o2" x="278.3" y="635.2"/>
<path class="bd" d="M339.6 367.8L341.7 377.8L329.8 375.1"/><path class="bw2" d="M339.6 367.8L341.7 377.8L329.8 375.1"/><path class="br2" d="M340.7 372.8L341.7 377.8L335.8 376.5"/>
<use href="#h2" x="329.8" y="375.1"/>
<use href="#o2" x="341.7" y="377.8"/>
<use href="#h2" x="339.6" y="367.8"/>
<path class="bd" d="M556.4 226.5L541 228L538.8 224.6"/><path class="bw2" d="M556.4 226.5L541 228L538.8 224.6"/><path class="br2" d="M548.7 227.3L541 228L539.9 226.3"/>
<use href="#h2" x="556.4" y="226.5"/>
<use href="#o2" x="541" y="228"/>
<use href="#h2" x="538.8" y="224.6"/>
<path class="bd" d="M408.1 254.2L423.5 251.5L425.5 240.1"/><path class="bw2" d="M408.1 254.2L423.5 251.5L425.5 240.1"/><path class="br2" d="M415.8 252.9L423.5 251.5L424.5 245.8"/>
<use href="#h2" x="425.5" y="240.1"/>
<use href="#h2" x="408.1" y="254.2"/>
<use href="#o2" x="423.5" y="251.5"/>
<path class="bd" d="M340.7 550.3L336.7 565.1L326.2 564"/><path class="bw2" d="M340.7 550.3L336.7 565.1L326.2 564"/><path class="br2" d="M338.7 557.7L336.7 565.1L331.4 564.5"/>
<use href="#h2" x="340.7" y="550.3"/>
<use href="#o2" x="336.7" y="565.1"/>
<use href="#h2" x="326.2" y="564"/>
<path class="bd" d="M280.8 311.2L283.1 322.3L269.4 323.5"/><path class="bw2" d="M280.8 311.2L283.1 322.3L269.4 323.5"/><path class="br2" d="M282 316.7L283.1 322.3L276.3 322.9"/>
<use href="#h2" x="269.4" y="323.5"/>
<use href="#o2" x="283.1" y="322.3"/>
<use href="#h2" x="280.8" y="311.2"/>
<path class="bd" d="M289.9 680L290.5 695.4L282.9 697.4"/><path class="bw2" d="M289.9 680L290.5 695.4L282.9 697.4"/><path class="br2" d="M290.2 687.7L290.5 695.4L286.7 696.4"/>
<use href="#h2" x="289.9" y="680"/>
<use href="#o2" x="290.5" y="695.4"/>
<use href="#h2" x="282.9" y="697.4"/>
<path class="bd" d="M646.7 610.7L650 614.9L643.4 603.7"/><path class="bw2" d="M646.7 610.7L650 614.9L643.4 603.7"/><path class="br2" d="M648.3 612.8L650 614.9L646.7 609.3"/>
<use href="#h2" x="643.4" y="603.7"/>
<use href="#o2" x="650" y="614.9"/>
<use href="#h2" x="646.7" y="610.7"/>
<path class="bd" d="M580.7 327.8L585 315.8L589.3 304.8"/><path class="bw2" d="M580.7 327.8L585 315.8L589.3 304.8"/><path class="br2" d="M582.8 321.8L585 315.8L587.2 310.3"/>
<use href="#h2" x="589.3" y="304.8"/>
<use href="#h2" x="580.7" y="327.8"/>
<use href="#o2" x="585" y="315.8"/>
<path class="bd" d="M626.7 334.8L631.7 335.3L626.3 349"/><path class="bw2" d="M626.7 334.8L631.7 335.3L626.3 349"/><path class="br2" d="M629.2 335.1L631.7 335.3L629 342.1"/>
<use href="#h2" x="626.3" y="349"/>
<use href="#o2" x="631.7" y="335.3"/>
<use href="#h2" x="626.7" y="334.8"/>
<path class="bd" d="M512.1 500.2L516.7 487.7L512.5 490.6"/><path class="bw2" d="M512.1 500.2L516.7 487.7L512.5 490.6"/><path class="br2" d="M514.4 493.9L516.7 487.7L514.6 489.1"/>
<use href="#h2" x="512.1" y="500.2"/>
<use href="#o2" x="516.7" y="487.7"/>
<use href="#h2" x="512.5" y="490.6"/>
<path class="bd" d="M680.1 511L687.2 514.8L681.4 528.8"/><path class="bw2" d="M680.1 511L687.2 514.8L681.4 528.8"/><path class="br2" d="M683.6 512.9L687.2 514.8L684.3 521.8"/>
<use href="#h2" x="681.4" y="528.8"/>
<use href="#o2" x="687.2" y="514.8"/>
<use href="#h2" x="680.1" y="511"/>
<path class="bd" d="M397.8 418.3L395.4 415.8L380.3 411.7"/><path class="bw2" d="M397.8 418.3L395.4 415.8L380.3 411.7"/><path class="br2" d="M396.6 417L395.4 415.8L387.9 413.7"/>
<use href="#h2" x="397.8" y="418.3"/>
<use href="#o2" x="395.4" y="415.8"/>
<use href="#h2" x="380.3" y="411.7"/>
<path class="bd" d="M469 462.6L473 477.7L459.6 485.4"/><path class="bw2" d="M469 462.6L473 477.7L459.6 485.4"/><path class="br2" d="M471 470.1L473 477.7L466.3 481.5"/>
<use href="#o2" x="473" y="477.7"/>
<use href="#h2" x="469" y="462.6"/>
<use href="#h2" x="459.6" y="485.4"/>
<path class="bd" d="M419.3 357.4L433.3 350.5L429.9 336"/><path class="bw2" d="M419.3 357.4L433.3 350.5L429.9 336"/><path class="br2" d="M426.3 353.9L433.3 350.5L431.6 343.2"/>
<use href="#h2" x="429.9" y="336"/>
<use href="#o2" x="433.3" y="350.5"/>
<use href="#h2" x="419.3" y="357.4"/>
<path class="bd" d="M599.4 649L598.4 635.1L609.4 635.7"/><path class="bw2" d="M599.4 649L598.4 635.1L609.4 635.7"/><path class="br2" d="M598.9 642.1L598.4 635.1L603.9 635.4"/>
<use href="#h2" x="599.4" y="649"/>
<use href="#o2" x="598.4" y="635.1"/>
<use href="#h2" x="609.4" y="635.7"/>
<path class="bd" d="M334.1 424.6L329.7 418L317.5 426.5"/><path class="bw2" d="M334.1 424.6L329.7 418L317.5 426.5"/><path class="br2" d="M331.9 421.3L329.7 418L323.6 422.2"/>
<use href="#h2" x="317.5" y="426.5"/>
<use href="#o2" x="329.7" y="418"/>
<use href="#h2" x="334.1" y="424.6"/>
<path class="bd" d="M537.6 677.8L543.5 690.5L556.2 685.2"/><path class="bw2" d="M537.6 677.8L543.5 690.5L556.2 685.2"/><path class="br2" d="M540.5 684.1L543.5 690.5L549.9 687.8"/>
<use href="#h2" x="556.2" y="685.2"/>
<use href="#o2" x="543.5" y="690.5"/>
<use href="#h2" x="537.6" y="677.8"/>
<path class="bd" d="M702.9 483L708.1 472.4L703.8 478"/><path class="bw2" d="M702.9 483L708.1 472.4L703.8 478"/><path class="br2" d="M705.5 477.7L708.1 472.4L705.9 475.2"/>
<use href="#h2" x="702.9" y="483"/>
<use href="#o2" x="708.1" y="472.4"/>
<use href="#h2" x="703.8" y="478"/>
<path class="bd" d="M378.3 280.1L387.8 272L380.1 271.6"/><path class="bw2" d="M378.3 280.1L387.8 272L380.1 271.6"/><path class="br2" d="M383 276.1L387.8 272L384 271.8"/>
<use href="#h2" x="380.1" y="271.6"/>
<use href="#o2" x="387.8" y="272"/>
<use href="#h2" x="378.3" y="280.1"/>
<path class="bd" d="M385.4 326.2L386.9 341.8L384 345"/><path class="bw2" d="M385.4 326.2L386.9 341.8L384 345"/><path class="br2" d="M386.2 334L386.9 341.8L385.4 343.4"/>
<use href="#h2" x="384" y="345"/>
<use href="#o2" x="386.9" y="341.8"/>
<use href="#h2" x="385.4" y="326.2"/>
<path class="bd" d="M441.2 512L428.8 520.7L422.8 525.5"/><path class="bw2" d="M441.2 512L428.8 520.7L422.8 525.5"/><path class="br2" d="M435 516.3L428.8 520.7L425.8 523.1"/>
<use href="#h2" x="422.8" y="525.5"/>
<use href="#h2" x="441.2" y="512"/>
<use href="#o2" x="428.8" y="520.7"/>
<path class="bd" d="M565.8 551.4L559.6 557L568.5 569.5"/><path class="bw2" d="M565.8 551.4L559.6 557L568.5 569.5"/><path class="br2" d="M562.7 554.2L559.6 557L564 563.3"/>
<use href="#h2" x="565.8" y="551.4"/>
<use href="#o2" x="559.6" y="557"/>
<use href="#h2" x="568.5" y="569.5"/>
<path class="bd" d="M398.5 671.7L395.1 686.3L390.3 684.5"/><path class="bw2" d="M398.5 671.7L395.1 686.3L390.3 684.5"/><path class="br2" d="M396.8 679L395.1 686.3L392.7 685.4"/>
<use href="#h2" x="398.5" y="671.7"/>
<use href="#o2" x="395.1" y="686.3"/>
<use href="#h2" x="390.3" y="684.5"/>
<path class="bd" d="M420.5 463.8L407.8 471.1L397.6 459.5"/><path class="bw2" d="M420.5 463.8L407.8 471.1L397.6 459.5"/><path class="br2" d="M414.1 467.4L407.8 471.1L402.7 465.3"/>
<use href="#h2" x="397.6" y="459.5"/>
<use href="#o2" x="407.8" y="471.1"/>
<use href="#h2" x="420.5" y="463.8"/>
<path class="bd" d="M501.6 433L509.9 428.9L501.5 417.4"/><path class="bw2" d="M501.6 433L509.9 428.9L501.5 417.4"/><path class="br2" d="M505.7 431L509.9 428.9L505.7 423.1"/>
<use href="#h2" x="501.5" y="417.4"/>
<use href="#o2" x="509.9" y="428.9"/>
<use href="#h2" x="501.6" y="433"/>
<path class="bd" d="M473.1 520.4L484.9 516.9L480.6 503.4"/><path class="bw2" d="M473.1 520.4L484.9 516.9L480.6 503.4"/><path class="br2" d="M479 518.6L484.9 516.9L482.7 510.1"/>
<use href="#h2" x="480.6" y="503.4"/>
<use href="#o2" x="484.9" y="516.9"/>
<use href="#h2" x="473.1" y="520.4"/>
<path class="bd" d="M577.9 433L588.4 424.4L592.7 413.1"/><path class="bw2" d="M577.9 433L588.4 424.4L592.7 413.1"/><path class="br2" d="M583.2 428.7L588.4 424.4L590.6 418.8"/>
<use href="#h2" x="592.7" y="413.1"/>
<use href="#h2" x="577.9" y="433"/>
<use href="#o2" x="588.4" y="424.4"/>
<path class="bd" d="M250.9 316.3L245.7 311.2L241.5 296.2"/><path class="bw1" d="M250.9 316.3L245.7 311.2L241.5 296.2"/><path class="br1" d="M248.3 313.8L245.7 311.2L243.6 303.7"/>
<use href="#h1" x="250.9" y="316.3"/>
<use href="#h1" x="241.5" y="296.2"/>
<use href="#o1" x="245.7" y="311.2"/>
<path class="bd" d="M528.5 525L536.9 523.7L528.7 513.8"/><path class="bw1" d="M528.5 525L536.9 523.7L528.7 513.8"/><path class="br1" d="M532.7 524.4L536.9 523.7L532.8 518.7"/>
<use href="#h1" x="528.5" y="525"/>
<use href="#o1" x="536.9" y="523.7"/>
<use href="#h1" x="528.7" y="513.8"/>
<path class="bd" d="M238.5 462.8L245.3 475.2L240.1 474.7"/><path class="bw1" d="M238.5 462.8L245.3 475.2L240.1 474.7"/><path class="br1" d="M241.9 469L245.3 475.2L242.7 475"/>
<use href="#h1" x="238.5" y="462.8"/>
<use href="#o1" x="245.3" y="475.2"/>
<use href="#h1" x="240.1" y="474.7"/>
<path class="bd" d="M666.4 682L662.6 681.6L652 693.2"/><path class="bw1" d="M666.4 682L662.6 681.6L652 693.2"/><path class="br1" d="M664.5 681.8L662.6 681.6L657.3 687.4"/>
<use href="#h1" x="666.4" y="682"/>
<use href="#o1" x="662.6" y="681.6"/>
<use href="#h1" x="652" y="693.2"/>
<path class="bd" d="M301 480.3L294.2 471.2L291.6 457.5"/><path class="bw1" d="M301 480.3L294.2 471.2L291.6 457.5"/><path class="br1" d="M297.6 475.7L294.2 471.2L292.9 464.3"/>
<use href="#o1" x="294.2" y="471.2"/>
<use href="#h1" x="291.6" y="457.5"/>
<use href="#h1" x="301" y="480.3"/>
<path class="bd" d="M357 617.7L342.3 612.5L344.3 600.5"/><path class="bw1" d="M357 617.7L342.3 612.5L344.3 600.5"/><path class="br1" d="M349.7 615.1L342.3 612.5L343.3 606.5"/>
<use href="#h1" x="357" y="617.7"/>
<use href="#o1" x="342.3" y="612.5"/>
<use href="#h1" x="344.3" y="600.5"/>
<path class="bd" d="M624.6 515L618.8 500.8L627.4 490.7"/><path class="bw1" d="M624.6 515L618.8 500.8L627.4 490.7"/><path class="br1" d="M621.7 507.9L618.8 500.8L623.1 495.7"/>
<use href="#h1" x="627.4" y="490.7"/>
<use href="#h1" x="624.6" y="515"/>
<use href="#o1" x="618.8" y="500.8"/>
<path class="bd" d="M466.7 232.9L462.6 234.7L452.9 222.5"/><path class="bw1" d="M466.7 232.9L462.6 234.7L452.9 222.5"/><path class="br1" d="M464.7 233.8L462.6 234.7L457.8 228.6"/>
<use href="#h1" x="452.9" y="222.5"/>
<use href="#o1" x="462.6" y="234.7"/>
<use href="#h1" x="466.7" y="232.9"/>
<path class="bd" d="M253.3 274.6L253.4 264.4L266.9 267.4"/><path class="bw1" d="M253.3 274.6L253.4 264.4L266.9 267.4"/><path class="br1" d="M253.3 269.5L253.4 264.4L260.2 265.9"/>
<use href="#h1" x="253.3" y="274.6"/>
<use href="#o1" x="253.4" y="264.4"/>
<use href="#h1" x="266.9" y="267.4"/>
<path class="bd" d="M685.5 561.1L673 552.4L672.9 540.4"/><path class="bw1" d="M685.5 561.1L673 552.4L672.9 540.4"/><path class="br1" d="M679.3 556.8L673 552.4L672.9 546.4"/>
<use href="#h1" x="672.9" y="540.4"/>
<use href="#h1" x="685.5" y="561.1"/>
<use href="#o1" x="673" y="552.4"/>
<path class="bd" d="M375.6 585.6L387 586.2L380.3 593.5"/><path class="bw1" d="M375.6 585.6L387 586.2L380.3 593.5"/><path class="br1" d="M381.3 585.9L387 586.2L383.7 589.9"/>
<use href="#h1" x="380.3" y="593.5"/>
<use href="#o1" x="387" y="586.2"/>
<use href="#h1" x="375.6" y="585.6"/>
<path class="bd" d="M667.5 350.5L664.1 365.6L666.2 373.2"/><path class="bw1" d="M667.5 350.5L664.1 365.6L666.2 373.2"/><path class="br1" d="M665.8 358.1L664.1 365.6L665.2 369.4"/>
<use href="#o1" x="664.1" y="365.6"/>
<use href="#h1" x="667.5" y="350.5"/>
<use href="#h1" x="666.2" y="373.2"/>
<path class="bd" d="M269.4 596.7L256.3 605.6L245.6 597.9"/><path class="bw1" d="M269.4 596.7L256.3 605.6L245.6 597.9"/><path class="br1" d="M262.9 601.1L256.3 605.6L251 601.7"/>
<use href="#h1" x="245.6" y="597.9"/>
<use href="#h1" x="269.4" y="596.7"/>
<use href="#o1" x="256.3" y="605.6"/>
<path class="bd" d="M428.5 403.9L429.6 419.7L439.6 422.1"/><path class="bw1" d="M428.5 403.9L429.6 419.7L439.6 422.1"/><path class="br1" d="M429.1 411.8L429.6 419.7L434.6 420.9"/>
<use href="#h1" x="428.5" y="403.9"/>
<use href="#o1" x="429.6" y="419.7"/>
<use href="#h1" x="439.6" y="422.1"/>
<path class="bd" d="M334 518.4L344 528.9L355 519.9"/><path class="bw1" d="M334 518.4L344 528.9L355 519.9"/><path class="br1" d="M339 523.6L344 528.9L349.5 524.4"/>
<use href="#h1" x="355" y="519.9"/>
<use href="#o1" x="344" y="528.9"/>
<use href="#h1" x="334" y="518.4"/>
<path class="bd" d="M303.3 298.2L313.5 298.2L316.9 282.9"/><path class="bw1" d="M303.3 298.2L313.5 298.2L316.9 282.9"/><path class="br1" d="M308.4 298.2L313.5 298.2L315.2 290.6"/>
<use href="#h1" x="316.9" y="282.9"/>
<use href="#o1" x="313.5" y="298.2"/>
<use href="#h1" x="303.3" y="298.2"/>
<path class="bd" d="M350.7 504.4L351.1 490.4L336.1 487.7"/><path class="bw1" d="M350.7 504.4L351.1 490.4L336.1 487.7"/><path class="br1" d="M350.9 497.4L351.1 490.4L343.6 489.1"/>
<use href="#h1" x="336.1" y="487.7"/>
<use href="#o1" x="351.1" y="490.4"/>
<use href="#h1" x="350.7" y="504.4"/>
<path class="bd" d="M304.1 230.5L301.6 243.9L286.6 247.7"/><path class="bw1" d="M304.1 230.5L301.6 243.9L286.6 247.7"/><path class="br1" d="M302.8 237.2L301.6 243.9L294.1 245.8"/>
<use href="#h1" x="304.1" y="230.5"/>
<use href="#h1" x="286.6" y="247.7"/>
<use href="#o1" x="301.6" y="243.9"/>
<path class="bd" d="M625.9 376.5L611.6 382.3L612 383.6"/><path class="bw1" d="M625.9 376.5L611.6 382.3L612 383.6"/><path class="br1" d="M618.7 379.4L611.6 382.3L611.8 383"/>
<use href="#h1" x="625.9" y="376.5"/>
<use href="#o1" x="611.6" y="382.3"/>
<use href="#h1" x="612" y="383.6"/>
<path class="bd" d="M498.4 250.4L491 257.8L491.5 247.4"/><path class="bw1" d="M498.4 250.4L491 257.8L491.5 247.4"/><path class="br1" d="M494.7 254.1L491 257.8L491.3 252.6"/>
<use href="#h1" x="498.4" y="250.4"/>
<use href="#o1" x="491" y="257.8"/>
<use href="#h1" x="491.5" y="247.4"/>
<path class="bd" d="M318.4 440.5L329.5 451.3L337.3 445"/><path class="bw1" d="M318.4 440.5L329.5 451.3L337.3 445"/><path class="br1" d="M323.9 445.9L329.5 451.3L333.4 448.1"/>
<use href="#h1" x="337.3" y="445"/>
<use href="#o1" x="329.5" y="451.3"/>
<use href="#h1" x="318.4" y="440.5"/>
<path class="bd" d="M389.1 631.4L390.7 628.1L375.8 628.7"/><path class="bw1" d="M389.1 631.4L390.7 628.1L375.8 628.7"/><path class="br1" d="M389.9 629.8L390.7 628.1L383.2 628.4"/>
<use href="#h1" x="389.1" y="631.4"/>
<use href="#o1" x="390.7" y="628.1"/>
<use href="#h1" x="375.8" y="628.7"/>
<path class="bd" d="M454.1 538.2L447.8 552.4L450.6 554.3"/><path class="bw1" d="M454.1 538.2L447.8 552.4L450.6 554.3"/><path class="br1" d="M451 545.3L447.8 552.4L449.2 553.4"/>
<use href="#h1" x="454.1" y="538.2"/>
<use href="#o1" x="447.8" y="552.4"/>
<use href="#h1" x="450.6" y="554.3"/>
<path class="bd" d="M393.2 533L382.3 542.1L379.4 553.9"/><path class="bw1" d="M393.2 533L382.3 542.1L379.4 553.9"/><path class="br1" d="M387.7 537.6L382.3 542.1L380.9 548"/>
<use href="#h1" x="379.4" y="553.9"/>
<use href="#h1" x="393.2" y="533"/>
<use href="#o1" x="382.3" y="542.1"/>
<path class="bd" d="M534.3 304.5L548.7 308.5L548.3 304.5"/><path class="bw1" d="M534.3 304.5L548.7 308.5L548.3 304.5"/><path class="br1" d="M541.5 306.5L548.7 308.5L548.5 306.5"/>
<use href="#h1" x="548.3" y="304.5"/>
<use href="#o1" x="548.7" y="308.5"/>
<use href="#h1" x="534.3" y="304.5"/>
<path class="bd" d="M302.7 612.1L307.1 596.9L320.8 595.9"/><path class="bw1" d="M302.7 612.1L307.1 596.9L320.8 595.9"/><path class="br1" d="M304.9 604.5L307.1 596.9L314 596.4"/>
<use href="#h1" x="320.8" y="595.9"/>
<use href="#h1" x="302.7" y="612.1"/>
<use href="#o1" x="307.1" y="596.9"/>
<path class="bd" d="M373.4 451.4L379.6 446.4L377.6 430.6"/><path class="bw1" d="M373.4 451.4L379.6 446.4L377.6 430.6"/><path class="br1" d="M376.5 448.9L379.6 446.4L378.6 438.5"/>
<use href="#o1" x="379.6" y="446.4"/>
<use href="#h1" x="377.6" y="430.6"/>
<use href="#h1" x="373.4" y="451.4"/>
<path class="bd" d="M276.1 660.9L276.2 675.9L290.5 677.5"/><path class="bw1" d="M276.1 660.9L276.2 675.9L290.5 677.5"/><path class="br1" d="M276.2 668.4L276.2 675.9L283.4 676.7"/>
<use href="#h1" x="290.5" y="677.5"/>
<use href="#o1" x="276.2" y="675.9"/>
<use href="#h1" x="276.1" y="660.9"/>
<path class="bd" d="M443.7 605.9L430.1 602.9L419.4 612.4"/><path class="bw1" d="M443.7 605.9L430.1 602.9L419.4 612.4"/><path class="br1" d="M436.9 604.4L430.1 602.9L424.7 607.6"/>
<use href="#o1" x="430.1" y="602.9"/>
<use href="#h1" x="419.4" y="612.4"/>
<use href="#h1" x="443.7" y="605.9"/>
<path class="bd" d="M577.8 561L592.1 555.7L591.3 539.9"/><path class="bw1" d="M577.8 561L592.1 555.7L591.3 539.9"/><path class="br1" d="M584.9 558.3L592.1 555.7L591.7 547.8"/>
<use href="#o1" x="592.1" y="555.7"/>
<use href="#h1" x="591.3" y="539.9"/>
<use href="#h1" x="577.8" y="561"/>
<path class="bd" d="M666.7 617.9L671.5 603.2L686.7 602.6"/><path class="bw1" d="M666.7 617.9L671.5 603.2L686.7 602.6"/><path class="br1" d="M669.1 610.6L671.5 603.2L679.1 602.9"/>
<use href="#o1" x="671.5" y="603.2"/>
<use href="#h1" x="666.7" y="617.9"/>
<use href="#h1" x="686.7" y="602.6"/>
<path class="bd" d="M678.6 286.3L675.4 284.8L659.7 282.2"/><path class="bw1" d="M678.6 286.3L675.4 284.8L659.7 282.2"/><path class="br1" d="M677 285.5L675.4 284.8L667.6 283.5"/>
<use href="#h1" x="678.6" y="286.3"/>
<use href="#o1" x="675.4" y="284.8"/>
<use href="#h1" x="659.7" y="282.2"/>
<path class="bd" d="M620.5 242.8L618.7 253.3L630.8 250.2"/><path class="bw1" d="M620.5 242.8L618.7 253.3L630.8 250.2"/><path class="br1" d="M619.6 248.1L618.7 253.3L624.8 251.8"/>
<use href="#h1" x="630.8" y="250.2"/>
<use href="#o1" x="618.7" y="253.3"/>
<use href="#h1" x="620.5" y="242.8"/>
<path class="bd" d="M685.2 455.2L681.5 446.3L695.5 440.4"/><path class="bw1" d="M685.2 455.2L681.5 446.3L695.5 440.4"/><path class="br1" d="M683.3 450.7L681.5 446.3L688.5 443.4"/>
<use href="#h1" x="685.2" y="455.2"/>
<use href="#o1" x="681.5" y="446.3"/>
<use href="#h1" x="695.5" y="440.4"/>
<path class="bd" d="M327.7 377.6L315 367.9L321.1 353.7"/><path class="bw1" d="M327.7 377.6L315 367.9L321.1 353.7"/><path class="br1" d="M321.4 372.7L315 367.9L318 360.8"/>
<use href="#h1" x="321.1" y="353.7"/>
<use href="#o1" x="315" y="367.9"/>
<use href="#h1" x="327.7" y="377.6"/>
<path class="bd" d="M234.1 508.2L243.2 517.6L238.9 532.5"/><path class="bw1" d="M234.1 508.2L243.2 517.6L238.9 532.5"/><path class="br1" d="M238.6 512.9L243.2 517.6L241 525.1"/>
<use href="#o1" x="243.2" y="517.6"/>
<use href="#h1" x="238.9" y="532.5"/>
<use href="#h1" x="234.1" y="508.2"/>
<path class="bd" d="M260.9 343.4L252.6 341L259 327.8"/><path class="bw1" d="M260.9 343.4L252.6 341L259 327.8"/><path class="br1" d="M256.7 342.2L252.6 341L255.8 334.4"/>
<use href="#h1" x="260.9" y="343.4"/>
<use href="#o1" x="252.6" y="341"/>
<use href="#h1" x="259" y="327.8"/>
<path class="bd" d="M491.7 636.4L484.4 650.1L488.5 660.3"/><path class="bw1" d="M491.7 636.4L484.4 650.1L488.5 660.3"/><path class="br1" d="M488 643.3L484.4 650.1L486.5 655.2"/>
<use href="#h1" x="488.5" y="660.3"/>
<use href="#h1" x="491.7" y="636.4"/>
<use href="#o1" x="484.4" y="650.1"/>
<path class="bd" d="M588.3 351.6L587.8 336.4L585.2 327.9"/><path class="bw1" d="M588.3 351.6L587.8 336.4L585.2 327.9"/><path class="br1" d="M588.1 344L587.8 336.4L586.5 332.2"/>
<use href="#h1" x="585.2" y="327.9"/>
<use href="#h1" x="588.3" y="351.6"/>
<use href="#o1" x="587.8" y="336.4"/>
<path class="bd" d="M557.3 434.1L541.6 431.1L534.8 442.6"/><path class="bw1" d="M557.3 434.1L541.6 431.1L534.8 442.6"/><path class="br1" d="M549.5 432.6L541.6 431.1L538.2 436.8"/>
<use href="#o1" x="541.6" y="431.1"/>
<use href="#h1" x="557.3" y="434.1"/>
<use href="#h1" x="534.8" y="442.6"/>
<path class="bd" d="M550.4 240.3L541.6 248L539.9 237.3"/><path class="bw1" d="M550.4 240.3L541.6 248L539.9 237.3"/><path class="br1" d="M546 244.1L541.6 248L540.7 242.6"/>
<use href="#h1" x="539.9" y="237.3"/>
<use href="#o1" x="541.6" y="248"/>
<use href="#h1" x="550.4" y="240.3"/>
<path class="bd" d="M497 384.8L505.8 395.4L504.2 409.2"/><path class="bw1" d="M497 384.8L505.8 395.4L504.2 409.2"/><path class="br1" d="M501.4 390.1L505.8 395.4L505 402.3"/>
<use href="#o1" x="505.8" y="395.4"/>
<use href="#h1" x="504.2" y="409.2"/>
<use href="#h1" x="497" y="384.8"/>
<path class="bd" d="M451.4 378.1L456.6 381.8L463.5 396.2"/><path class="bw1" d="M451.4 378.1L456.6 381.8L463.5 396.2"/><path class="br1" d="M454 380L456.6 381.8L460 389"/>
<use href="#o1" x="456.6" y="381.8"/>
<use href="#h1" x="463.5" y="396.2"/>
<use href="#h1" x="451.4" y="378.1"/>
<path class="bd" d="M341 681.6L330 692.9L317.4 684.9"/><path class="bw1" d="M341 681.6L330 692.9L317.4 684.9"/><path class="br1" d="M335.5 687.2L330 692.9L323.7 688.9"/>
<use href="#h1" x="341" y="681.6"/>
<use href="#o1" x="330" y="692.9"/>
<use href="#h1" x="317.4" y="684.9"/>
<path class="bd" d="M640.2 476.9L636.7 468.9L649 458.7"/><path class="bw1" d="M640.2 476.9L636.7 468.9L649 458.7"/><path class="br1" d="M638.5 472.9L636.7 468.9L642.9 463.8"/>
<use href="#h1" x="649" y="458.7"/>
<use href="#o1" x="636.7" y="468.9"/>
<use href="#h1" x="640.2" y="476.9"/>
<path class="bd" d="M375.2 358.6L391 357.2L396.6 372.3"/><path class="bw1" d="M375.2 358.6L391 357.2L396.6 372.3"/><path class="br1" d="M383.1 357.9L391 357.2L393.8 364.8"/>
<use href="#o1" x="391" y="357.2"/>
<use href="#h1" x="396.6" y="372.3"/>
<use href="#h1" x="375.2" y="358.6"/>
<path class="bd" d="M270.2 524.2L277.7 529.2L265.9 534.9"/><path class="bw1" d="M270.2 524.2L277.7 529.2L265.9 534.9"/><path class="br1" d="M273.9 526.7L277.7 529.2L271.8 532"/>
<use href="#h1" x="270.2" y="524.2"/>
<use href="#o1" x="277.7" y="529.2"/>
<use href="#h1" x="265.9" y="534.9"/>
<path class="bd" d="M632.4 535.4L638.1 527.8L633.9 512.4"/><path class="bw1" d="M632.4 535.4L638.1 527.8L633.9 512.4"/><path class="br1" d="M635.3 531.6L638.1 527.8L636 520.1"/>
<use href="#o1" x="638.1" y="527.8"/>
<use href="#h1" x="633.9" y="512.4"/>
<use href="#h1" x="632.4" y="535.4"/>
<path class="bd" d="M670.3 675.2L676.4 662.3L663.6 654.5"/><path class="bw1" d="M670.3 675.2L676.4 662.3L663.6 654.5"/><path class="br1" d="M673.4 668.7L676.4 662.3L670 658.4"/>
<use href="#h1" x="670.3" y="675.2"/>
<use href="#o1" x="676.4" y="662.3"/>
<use href="#h1" x="663.6" y="654.5"/>
<path class="bd" d="M443.2 305.1L441.7 295.8L430.8 303.3"/><path class="bw1" d="M443.2 305.1L441.7 295.8L430.8 303.3"/><path class="br1" d="M442.5 300.5L441.7 295.8L436.3 299.6"/>
<use href="#h1" x="430.8" y="303.3"/>
<use href="#o1" x="441.7" y="295.8"/>
<use href="#h1" x="443.2" y="305.1"/>
<path class="bd" d="M340.8 320.9L348.1 325.9L362.5 318.8"/><path class="bw1" d="M340.8 320.9L348.1 325.9L362.5 318.8"/><path class="br1" d="M344.4 323.4L348.1 325.9L355.3 322.4"/>
<use href="#o1" x="348.1" y="325.9"/>
<use href="#h1" x="362.5" y="318.8"/>
<use href="#h1" x="340.8" y="320.9"/>
<path class="bd" d="M702 339.5L687.7 336.5L679.7 350.4"/><path class="bw1" d="M702 339.5L687.7 336.5L679.7 350.4"/><path class="br1" d="M694.9 338L687.7 336.5L683.7 343.4"/>
<use href="#h1" x="702" y="339.5"/>
<use href="#h1" x="679.7" y="350.4"/>
<use href="#o1" x="687.7" y="336.5"/>
<path class="bd" d="M638.4 314.7L624.6 307.7L615.6 319.9"/><path class="bw1" d="M638.4 314.7L624.6 307.7L615.6 319.9"/><path class="br1" d="M631.5 311.2L624.6 307.7L620.1 313.8"/>
<use href="#h1" x="615.6" y="319.9"/>
<use href="#o1" x="624.6" y="307.7"/>
<use href="#h1" x="638.4" y="314.7"/>
<path class="bd" d="M364.7 397.3L363.7 382.6L371.6 372.9"/><path class="bw1" d="M364.7 397.3L363.7 382.6L371.6 372.9"/><path class="br1" d="M364.2 390L363.7 382.6L367.6 377.8"/>
<use href="#o1" x="363.7" y="382.6"/>
<use href="#h1" x="364.7" y="397.3"/>
<use href="#h1" x="371.6" y="372.9"/>
<path class="bd" d="M506 462L515.5 474.7L530 468.3"/><path class="bw1" d="M506 462L515.5 474.7L530 468.3"/><path class="br1" d="M510.7 468.3L515.5 474.7L522.7 471.5"/>
<use href="#h1" x="506" y="462"/>
<use href="#o1" x="515.5" y="474.7"/>
<use href="#h1" x="530" y="468.3"/>
<path class="bd" d="M585.7 445.1L591.1 434.9L577.8 430.1"/><path class="bw1" d="M585.7 445.1L591.1 434.9L577.8 430.1"/><path class="br1" d="M588.4 440L591.1 434.9L584.4 432.5"/>
<use href="#h1" x="585.7" y="445.1"/>
<use href="#o1" x="591.1" y="434.9"/>
<use href="#h1" x="577.8" y="430.1"/>
<path class="bd" d="M565.8 579.8L569.6 584.8L559.6 576.7"/><path class="bw1" d="M565.8 579.8L569.6 584.8L559.6 576.7"/><path class="br1" d="M567.7 582.3L569.6 584.8L564.6 580.7"/>
<use href="#h1" x="559.6" y="576.7"/>
<use href="#o1" x="569.6" y="584.8"/>
<use href="#h1" x="565.8" y="579.8"/>
<path class="bd" d="M399.3 239.9L383.6 241.8L383 244.7"/><path class="bw1" d="M399.3 239.9L383.6 241.8L383 244.7"/><path class="br1" d="M391.4 240.8L383.6 241.8L383.3 243.3"/>
<use href="#h1" x="383" y="244.7"/>
<use href="#o1" x="383.6" y="241.8"/>
<use href="#h1" x="399.3" y="239.9"/>
<path class="bd" d="M257.9 385.9L247.6 384.1L253.3 371.4"/><path class="bw1" d="M257.9 385.9L247.6 384.1L253.3 371.4"/><path class="br1" d="M252.8 385L247.6 384.1L250.4 377.8"/>
<use href="#h1" x="253.3" y="371.4"/>
<use href="#o1" x="247.6" y="384.1"/>
<use href="#h1" x="257.9" y="385.9"/>
<path class="bd" d="M495.3 574.9L497.5 568.9L506.7 555.8"/><path class="bw1" d="M495.3 574.9L497.5 568.9L506.7 555.8"/><path class="br1" d="M496.4 571.9L497.5 568.9L502.1 562.3"/>
<use href="#o1" x="497.5" y="568.9"/>
<use href="#h1" x="506.7" y="555.8"/>
<use href="#h1" x="495.3" y="574.9"/>
<path class="bd" d="M470.9 618.9L460.3 611.4L454.5 599.3"/><path class="bw1" d="M470.9 618.9L460.3 611.4L454.5 599.3"/><path class="br1" d="M465.6 615.2L460.3 611.4L457.4 605.3"/>
<use href="#h1" x="470.9" y="618.9"/>
<use href="#h1" x="454.5" y="599.3"/>
<use href="#o1" x="460.3" y="611.4"/>
<path class="bd" d="M264.9 293.9L276.4 285.5L281.9 275"/><path class="bw1" d="M264.9 293.9L276.4 285.5L281.9 275"/><path class="br1" d="M270.7 289.7L276.4 285.5L279.1 280.2"/>
<use href="#o1" x="276.4" y="285.5"/>
<use href="#h1" x="264.9" y="293.9"/>
<use href="#h1" x="281.9" y="275"/>
<path class="bd" d="M458.1 689L472.2 692.1L482.7 694"/><path class="bw1" d="M458.1 689L472.2 692.1L482.7 694"/><path class="br1" d="M465.2 690.5L472.2 692.1L477.5 693"/>
<use href="#h1" x="482.7" y="694"/>
<use href="#h1" x="458.1" y="689"/>
<use href="#o1" x="472.2" y="692.1"/>
<path class="bd" d="M557 354.5L544.3 348.5L550.8 342.3"/><path class="bw1" d="M557 354.5L544.3 348.5L550.8 342.3"/><path class="br1" d="M550.7 351.5L544.3 348.5L547.6 345.4"/>
<use href="#h1" x="550.8" y="342.3"/>
<use href="#o1" x="544.3" y="348.5"/>
<use href="#h1" x="557" y="354.5"/>
<path class="bd" d="M580.5 406.2L566.4 405.2L557.6 394.6"/><path class="bw1" d="M580.5 406.2L566.4 405.2L557.6 394.6"/><path class="br1" d="M573.4 405.7L566.4 405.2L562 399.9"/>
<use href="#h1" x="557.6" y="394.6"/>
<use href="#h1" x="580.5" y="406.2"/>
<use href="#o1" x="566.4" y="405.2"/>
<path class="bd" d="M557.5 485.6L564.1 487.2L551.5 489.4"/><path class="bw1" d="M557.5 485.6L564.1 487.2L551.5 489.4"/><path class="br1" d="M560.8 486.4L564.1 487.2L557.8 488.3"/>
<use href="#h1" x="557.5" y="485.6"/>
<use href="#o1" x="564.1" y="487.2"/>
<use href="#h1" x="551.5" y="489.4"/>
<path class="bd" d="M241.9 578.5L248.9 587.3L254.4 576.4"/><path class="bw1" d="M241.9 578.5L248.9 587.3L254.4 576.4"/><path class="br1" d="M245.4 582.9L248.9 587.3L251.7 581.8"/>
<use href="#h1" x="241.9" y="578.5"/>
<use href="#o1" x="248.9" y="587.3"/>
<use href="#h1" x="254.4" y="576.4"/>
<path class="bd" d="M386.6 288.1L402.7 290.5L408.9 277.6"/><path class="bw1" d="M386.6 288.1L402.7 290.5L408.9 277.6"/><path class="br1" d="M394.6 289.3L402.7 290.5L405.8 284"/>
<use href="#o1" x="402.7" y="290.5"/>
<use href="#h1" x="386.6" y="288.1"/>
<use href="#h1" x="408.9" y="277.6"/>
<path class="bd" d="M620.6 372.2L613.7 362.9L613.2 372.2"/><path class="bw1" d="M620.6 372.2L613.7 362.9L613.2 372.2"/><path class="br1" d="M617.2 367.5L613.7 362.9L613.5 367.5"/>
<use href="#h1" x="613.2" y="372.2"/>
<use href="#o1" x="613.7" y="362.9"/>
<use href="#h1" x="620.6" y="372.2"/>
<path class="bd" d="M591.7 626L594.4 624L589.7 638"/><path class="bw1" d="M591.7 626L594.4 624L589.7 638"/><path class="br1" d="M593.1 625L594.4 624L592 631"/>
<use href="#h1" x="591.7" y="626"/>
<use href="#o1" x="594.4" y="624"/>
<use href="#h1" x="589.7" y="638"/>
<path class="bd" d="M309.7 436.2L301 428.7L300.2 413.3"/><path class="bw1" d="M309.7 436.2L301 428.7L300.2 413.3"/><path class="br1" d="M305.4 432.5L301 428.7L300.6 421"/>
<use href="#h1" x="309.7" y="436.2"/>
<use href="#h1" x="300.2" y="413.3"/>
<use href="#o1" x="301" y="428.7"/>
<path class="bd" d="M398.2 591.6L383.1 597.4L383.8 612"/><path class="bw1" d="M398.2 591.6L383.1 597.4L383.8 612"/><path class="br1" d="M390.6 594.5L383.1 597.4L383.4 604.7"/>
<use href="#o1" x="383.1" y="597.4"/>
<use href="#h1" x="398.2" y="591.6"/>
<use href="#h1" x="383.8" y="612"/>
<path class="bd" d="M695.3 489.7L708.7 491.9L711.7 507.9"/><path class="bw1" d="M695.3 489.7L708.7 491.9L711.7 507.9"/><path class="br1" d="M702 490.8L708.7 491.9L710.2 499.9"/>
<use href="#o1" x="708.7" y="491.9"/>
<use href="#h1" x="711.7" y="507.9"/>
<use href="#h1" x="695.3" y="489.7"/>
<path class="bd" d="M287.1 320.6L287.1 324.4L283 310.5"/><path class="bw1" d="M287.1 320.6L287.1 324.4L283 310.5"/><path class="br1" d="M287.1 322.5L287.1 324.4L285.1 317.4"/>
<use href="#h1" x="283" y="310.5"/>
<use href="#o1" x="287.1" y="324.4"/>
<use href="#h1" x="287.1" y="320.6"/>
<path class="bd" d="M318.7 282.7L322.9 271.3L310.7 260.5"/><path class="bw1" d="M318.7 282.7L322.9 271.3L310.7 260.5"/><path class="br1" d="M320.8 277L322.9 271.3L316.8 265.9"/>
<use href="#o1" x="322.9" y="271.3"/>
<use href="#h1" x="310.7" y="260.5"/>
<use href="#h1" x="318.7" y="282.7"/>
<path class="bd" d="M705.2 702.3L703.2 696.3L689.4 703"/><path class="bw1" d="M705.2 702.3L703.2 696.3L689.4 703"/><path class="br1" d="M704.2 699.3L703.2 696.3L696.3 699.7"/>
<use href="#h1" x="705.2" y="702.3"/>
<use href="#o1" x="703.2" y="696.3"/>
<use href="#h1" x="689.4" y="703"/>
<path class="bd" d="M235.3 549.8L251.1 546.1L255.3 541.9"/><path class="bw1" d="M235.3 549.8L251.1 546.1L255.3 541.9"/><path class="br1" d="M243.2 548L251.1 546.1L253.2 544"/>
<use href="#h1" x="255.3" y="541.9"/>
<use href="#h1" x="235.3" y="549.8"/>
<use href="#o1" x="251.1" y="546.1"/>
<path class="bd" d="M286.4 636.1L273.3 634.4L270.1 649.6"/><path class="bw1" d="M286.4 636.1L273.3 634.4L270.1 649.6"/><path class="br1" d="M279.8 635.2L273.3 634.4L271.7 642"/>
<use href="#h1" x="270.1" y="649.6"/>
<use href="#o1" x="273.3" y="634.4"/>
<use href="#h1" x="286.4" y="636.1"/>
<path class="bd" d="M318.4 509.2L334.1 508.3L341.3 500.4"/><path class="bw1" d="M318.4 509.2L334.1 508.3L341.3 500.4"/><path class="br1" d="M326.2 508.8L334.1 508.3L337.7 504.4"/>
<use href="#o1" x="334.1" y="508.3"/>
<use href="#h1" x="318.4" y="509.2"/>
<use href="#h1" x="341.3" y="500.4"/>
<path class="bd" d="M474.3 474.8L480.9 488.1L483.3 498.4"/><path class="bw1" d="M474.3 474.8L480.9 488.1L483.3 498.4"/><path class="br1" d="M477.6 481.5L480.9 488.1L482.1 493.2"/>
<use href="#o1" x="480.9" y="488.1"/>
<use href="#h1" x="474.3" y="474.8"/>
<use href="#h1" x="483.3" y="498.4"/>
<path class="bd" d="M461.8 459.2L448.9 468.8L445.6 467.1"/><path class="bw1" d="M461.8 459.2L448.9 468.8L445.6 467.1"/><path class="br1" d="M455.3 464L448.9 468.8L447.2 467.9"/>
<use href="#h1" x="445.6" y="467.1"/>
<use href="#o1" x="448.9" y="468.8"/>
<use href="#h1" x="461.8" y="459.2"/>
<path class="bd" d="M663.5 638.4L647.3 640.7L644.5 652.7"/><path class="bw1" d="M663.5 638.4L647.3 640.7L644.5 652.7"/><path class="br1" d="M655.4 639.6L647.3 640.7L645.9 646.7"/>
<use href="#o1" x="647.3" y="640.7"/>
<use href="#h1" x="663.5" y="638.4"/>
<use href="#h1" x="644.5" y="652.7"/>
<path class="bd" d="M319.6 395.9L331.4 405L341.9 407.5"/><path class="bw1" d="M319.6 395.9L331.4 405L341.9 407.5"/><path class="br1" d="M325.5 400.4L331.4 405L336.7 406.3"/>
<use href="#h1" x="341.9" y="407.5"/>
<use href="#h1" x="319.6" y="395.9"/>
<use href="#o1" x="331.4" y="405"/>
<path class="bd" d="M498.4 439.3L499.2 427.3L498.3 413.6"/><path class="bw1" d="M498.4 439.3L499.2 427.3L498.3 413.6"/><path class="br1" d="M498.8 433.3L499.2 427.3L498.7 420.4"/>
<use href="#h1" x="498.4" y="439.3"/>
<use href="#h1" x="498.3" y="413.6"/>
<use href="#o1" x="499.2" y="427.3"/>
<path class="bd" d="M315.5 665.9L303.2 673.7L295.3 681.5"/><path class="bw1" d="M315.5 665.9L303.2 673.7L295.3 681.5"/><path class="br1" d="M309.3 669.8L303.2 673.7L299.3 677.6"/>
<use href="#o1" x="303.2" y="673.7"/>
<use href="#h1" x="315.5" y="665.9"/>
<use href="#h1" x="295.3" y="681.5"/>
<path class="bd" d="M414.9 326.7L422.8 323.8L414.9 311.2"/><path class="bw1" d="M414.9 326.7L422.8 323.8L414.9 311.2"/><path class="br1" d="M418.9 325.2L422.8 323.8L418.8 317.5"/>
<use href="#h1" x="414.9" y="311.2"/>
<use href="#o1" x="422.8" y="323.8"/>
<use href="#h1" x="414.9" y="326.7"/>
<path class="bd" d="M351.9 595.6L344.8 587.7L336.2 599.3"/><path class="bw1" d="M351.9 595.6L344.8 587.7L336.2 599.3"/><path class="br1" d="M348.3 591.6L344.8 587.7L340.5 593.5"/>
<use href="#h1" x="351.9" y="595.6"/>
<use href="#o1" x="344.8" y="587.7"/>
<use href="#h1" x="336.2" y="599.3"/>
<path class="bd" d="M494.8 628.1L510.2 625.8L518 619.8"/><path class="bw1" d="M494.8 628.1L510.2 625.8L518 619.8"/><path class="br1" d="M502.5 626.9L510.2 625.8L514.1 622.8"/>
<use href="#h1" x="518" y="619.8"/>
<use href="#h1" x="494.8" y="628.1"/>
<use href="#o1" x="510.2" y="625.8"/>
<path class="bd" d="M450.7 370L447.2 357.9L440.2 346.4"/><path class="bw1" d="M450.7 370L447.2 357.9L440.2 346.4"/><path class="br1" d="M449 364L447.2 357.9L443.7 352.1"/>
<use href="#o1" x="447.2" y="357.9"/>
<use href="#h1" x="440.2" y="346.4"/>
<use href="#h1" x="450.7" y="370"/>
<path class="bd" d="M565.7 293.7L565.7 306.1L558.5 318.4"/><path class="bw1" d="M565.7 293.7L565.7 306.1L558.5 318.4"/><path class="br1" d="M565.7 299.9L565.7 306.1L562.1 312.3"/>
<use href="#h1" x="565.7" y="293.7"/>
<use href="#h1" x="558.5" y="318.4"/>
<use href="#o1" x="565.7" y="306.1"/>
<path class="bd" d="M459.1 550.1L460.8 537.8L450.6 541.4"/><path class="bw1" d="M459.1 550.1L460.8 537.8L450.6 541.4"/><path class="br1" d="M459.9 544L460.8 537.8L455.7 539.6"/>
<use href="#h1" x="459.1" y="550.1"/>
<use href="#o1" x="460.8" y="537.8"/>
<use href="#h1" x="450.6" y="541.4"/>
<path class="bd" d="M468 410.6L451.8 409.8L445.2 417.6"/><path class="bw1" d="M468 410.6L451.8 409.8L445.2 417.6"/><path class="br1" d="M459.9 410.2L451.8 409.8L448.5 413.7"/>
<use href="#o1" x="451.8" y="409.8"/>
<use href="#h1" x="468" y="410.6"/>
<use href="#h1" x="445.2" y="417.6"/>
<path class="bd" d="M697.3 288.4L692.6 298.3L695.1 313.5"/><path class="bw1" d="M697.3 288.4L692.6 298.3L695.1 313.5"/><path class="br1" d="M694.9 293.4L692.6 298.3L693.9 305.9"/>
<use href="#h1" x="697.3" y="288.4"/>
<use href="#h1" x="695.1" y="313.5"/>
<use href="#o1" x="692.6" y="298.3"/>
<path class="bd" d="M298.4 568.8L311.9 565.7L308.4 571.2"/><path class="bw1" d="M298.4 568.8L311.9 565.7L308.4 571.2"/><path class="br1" d="M305.1 567.3L311.9 565.7L310.1 568.4"/>
<use href="#h1" x="308.4" y="571.2"/>
<use href="#o1" x="311.9" y="565.7"/>
<use href="#h1" x="298.4" y="568.8"/>
<path class="bd" d="M659.9 363.1L654.9 349.3L668.8 341.8"/><path class="bw1" d="M659.9 363.1L654.9 349.3L668.8 341.8"/><path class="br1" d="M657.4 356.2L654.9 349.3L661.9 345.5"/>
<use href="#h1" x="668.8" y="341.8"/>
<use href="#o1" x="654.9" y="349.3"/>
<use href="#h1" x="659.9" y="363.1"/>
<path class="bd" d="M256.2 445.1L269.3 455L280.7 445.9"/><path class="bw1" d="M256.2 445.1L269.3 455L280.7 445.9"/><path class="br1" d="M262.7 450.1L269.3 455L275 450.5"/>
<use href="#h1" x="280.7" y="445.9"/>
<use href="#o1" x="269.3" y="455"/>
<use href="#h1" x="256.2" y="445.1"/>
<path class="bd" d="M276.6 667.8L263.8 670.7L250.6 667.9"/><path class="bw1" d="M276.6 667.8L263.8 670.7L250.6 667.9"/><path class="br1" d="M270.2 669.2L263.8 670.7L257.2 669.3"/>
<use href="#o1" x="263.8" y="670.7"/>
<use href="#h1" x="250.6" y="667.9"/>
<use href="#h1" x="276.6" y="667.8"/>
<path class="bd" d="M443.2 263.8L450.6 249.7L465.4 254.3"/><path class="bw1" d="M443.2 263.8L450.6 249.7L465.4 254.3"/><path class="br1" d="M446.9 256.8L450.6 249.7L458 252"/>
<use href="#h1" x="465.4" y="254.3"/>
<use href="#o1" x="450.6" y="249.7"/>
<use href="#h1" x="443.2" y="263.8"/>
<path class="bd" d="M472.2 335.8L475.2 322.9L477.3 310.3"/><path class="bw1" d="M472.2 335.8L475.2 322.9L477.3 310.3"/><path class="br1" d="M473.7 329.3L475.2 322.9L476.2 316.6"/>
<use href="#h1" x="477.3" y="310.3"/>
<use href="#h1" x="472.2" y="335.8"/>
<use href="#o1" x="475.2" y="322.9"/>
<path class="bd" d="M316.1 627.3L321 632.8L337 636.1"/><path class="bw1" d="M316.1 627.3L321 632.8L337 636.1"/><path class="br1" d="M318.6 630.1L321 632.8L329 634.5"/>
<use href="#h1" x="316.1" y="627.3"/>
<use href="#h1" x="337" y="636.1"/>
<use href="#o1" x="321" y="632.8"/>
<path class="bd" d="M524.2 233L523.6 245.4L538.8 246.1"/><path class="bw1" d="M524.2 233L523.6 245.4L538.8 246.1"/><path class="br1" d="M523.9 239.2L523.6 245.4L531.2 245.8"/>
<use href="#h1" x="538.8" y="246.1"/>
<use href="#o1" x="523.6" y="245.4"/>
<use href="#h1" x="524.2" y="233"/>
<path class="bd" d="M584.9 249.2L586 233.2L591.6 232.9"/><path class="bw1" d="M584.9 249.2L586 233.2L591.6 232.9"/><path class="br1" d="M585.5 241.2L586 233.2L588.8 233"/>
<use href="#h1" x="584.9" y="249.2"/>
<use href="#o1" x="586" y="233.2"/>
<use href="#h1" x="591.6" y="232.9"/>
<path class="bd" d="M707.4 658.9L707.2 655.7L695.9 643.9"/><path class="bw1" d="M707.4 658.9L707.2 655.7L695.9 643.9"/><path class="br1" d="M707.3 657.3L707.2 655.7L701.6 649.8"/>
<use href="#h1" x="695.9" y="643.9"/>
<use href="#o1" x="707.2" y="655.7"/>
<use href="#h1" x="707.4" y="658.9"/>
<path class="bd" d="M381.5 466L390.4 475.2L389.9 466.9"/><path class="bw1" d="M381.5 466L390.4 475.2L389.9 466.9"/><path class="br1" d="M385.9 470.6L390.4 475.2L390.1 471.1"/>
<use href="#h1" x="381.5" y="466"/>
<use href="#o1" x="390.4" y="475.2"/>
<use href="#h1" x="389.9" y="466.9"/>
<path class="bd" d="M367.7 677.2L375.6 663.2L390.7 668.1"/><path class="bw1" d="M367.7 677.2L375.6 663.2L390.7 668.1"/><path class="br1" d="M371.7 670.2L375.6 663.2L383.1 665.7"/>
<use href="#h1" x="367.7" y="677.2"/>
<use href="#o1" x="375.6" y="663.2"/>
<use href="#h1" x="390.7" y="668.1"/>
<path class="bd" d="M270 352L273.8 362.2L279.3 375.8"/><path class="bw1" d="M270 352L273.8 362.2L279.3 375.8"/><path class="br1" d="M271.9 357.1L273.8 362.2L276.5 369"/>
<use href="#h1" x="270" y="352"/>
<use href="#h1" x="279.3" y="375.8"/>
<use href="#o1" x="273.8" y="362.2"/>
<path class="bd" d="M285.9 579.2L275.3 569.3L260.9 571.6"/><path class="bw1" d="M285.9 579.2L275.3 569.3L260.9 571.6"/><path class="br1" d="M280.6 574.2L275.3 569.3L268.1 570.4"/>
<use href="#h1" x="285.9" y="579.2"/>
<use href="#h1" x="260.9" y="571.6"/>
<use href="#o1" x="275.3" y="569.3"/>
<path class="bd" d="M380.2 526.6L395.4 530.6L402.4 516.2"/><path class="bw1" d="M380.2 526.6L395.4 530.6L402.4 516.2"/><path class="br1" d="M387.8 528.6L395.4 530.6L398.9 523.4"/>
<use href="#h1" x="380.2" y="526.6"/>
<use href="#o1" x="395.4" y="530.6"/>
<use href="#h1" x="402.4" y="516.2"/>
<path class="bd" d="M432.5 683.5L431.2 669.7L442 671.6"/><path class="bw1" d="M432.5 683.5L431.2 669.7L442 671.6"/><path class="br1" d="M431.9 676.6L431.2 669.7L436.6 670.6"/>
<use href="#h1" x="442" y="671.6"/>
<use href="#o1" x="431.2" y="669.7"/>
<use href="#h1" x="432.5" y="683.5"/>
<path class="bd" d="M500.7 511L506 525.2L493.1 530.8"/><path class="bw1" d="M500.7 511L506 525.2L493.1 530.8"/><path class="br1" d="M503.3 518.1L506 525.2L499.6 528"/>
<use href="#h1" x="493.1" y="530.8"/>
<use href="#o1" x="506" y="525.2"/>
<use href="#h1" x="500.7" y="511"/>
<path class="bd" d="M669.3 428.7L679.1 420.9L673.9 405.3"/><path class="bw1" d="M669.3 428.7L679.1 420.9L673.9 405.3"/><path class="br1" d="M674.2 424.8L679.1 420.9L676.5 413.1"/>
<use href="#o1" x="679.1" y="420.9"/>
<use href="#h1" x="673.9" y="405.3"/>
<use href="#h1" x="669.3" y="428.7"/>
<path class="bd" d="M676.4 540.2L675.5 556.7L685.6 561.9"/><path class="bw1" d="M676.4 540.2L675.5 556.7L685.6 561.9"/><path class="br1" d="M676 548.4L675.5 556.7L680.5 559.3"/>
<use href="#h1" x="685.6" y="561.9"/>
<use href="#h1" x="676.4" y="540.2"/>
<use href="#o1" x="675.5" y="556.7"/>
<path class="bd" d="M482.2 380.4L491.6 376.4L497 390.9"/><path class="bw1" d="M482.2 380.4L491.6 376.4L497 390.9"/><path class="br1" d="M486.9 378.4L491.6 376.4L494.3 383.6"/>
<use href="#h1" x="482.2" y="380.4"/>
<use href="#o1" x="491.6" y="376.4"/>
<use href="#h1" x="497" y="390.9"/>
<path class="bd" d="M626.1 614.2L622.6 606.8L633.5 594.5"/><path class="bw1" d="M626.1 614.2L622.6 606.8L633.5 594.5"/><path class="br1" d="M624.3 610.5L622.6 606.8L628 600.6"/>
<use href="#h1" x="633.5" y="594.5"/>
<use href="#o1" x="622.6" y="606.8"/>
<use href="#h1" x="626.1" y="614.2"/>
<path class="bd" d="M407.2 611.1L397.2 623.9L399.1 634"/><path class="bw1" d="M407.2 611.1L397.2 623.9L399.1 634"/><path class="br1" d="M402.2 617.5L397.2 623.9L398.2 628.9"/>
<use href="#o1" x="397.2" y="623.9"/>
<use href="#h1" x="407.2" y="611.1"/>
<use href="#h1" x="399.1" y="634"/>
<path class="bd" d="M344.3 268.9L349.6 258.7L360.7 267.6"/><path class="bw1" d="M344.3 268.9L349.6 258.7L360.7 267.6"/><path class="br1" d="M347 263.8L349.6 258.7L355.1 263.1"/>
<use href="#h1" x="344.3" y="268.9"/>
<use href="#o1" x="349.6" y="258.7"/>
<use href="#h1" x="360.7" y="267.6"/>
<path class="bd" d="M567.5 700.2L566 685.2L580.8 682.3"/><path class="bw1" d="M567.5 700.2L566 685.2L580.8 682.3"/><path class="br1" d="M566.7 692.7L566 685.2L573.4 683.7"/>
<use href="#h1" x="580.8" y="682.3"/>
<use href="#o1" x="566" y="685.2"/>
<use href="#h1" x="567.5" y="700.2"/>
<path class="bd" d="M258.1 257L246.6 267.6L253.8 276"/><path class="bw1" d="M258.1 257L246.6 267.6L253.8 276"/><path class="br1" d="M252.3 262.3L246.6 267.6L250.2 271.8"/>
<use href="#h1" x="253.8" y="276"/>
<use href="#o1" x="246.6" y="267.6"/>
<use href="#h1" x="258.1" y="257"/>
<path class="bd" d="M718.6 573.8L707.4 575.5L694.5 582.9"/><path class="bw1" d="M718.6 573.8L707.4 575.5L694.5 582.9"/><path class="br1" d="M713 574.7L707.4 575.5L701 579.2"/>
<use href="#o1" x="707.4" y="575.5"/>
<use href="#h1" x="694.5" y="582.9"/>
<use href="#h1" x="718.6" y="573.8"/>
<path class="bd" d="M626.1 285.7L630 279.3L615.7 273.1"/><path class="bw1" d="M626.1 285.7L630 279.3L615.7 273.1"/><path class="br1" d="M628.1 282.5L630 279.3L622.9 276.2"/>
<use href="#h1" x="615.7" y="273.1"/>
<use href="#o1" x="630" y="279.3"/>
<use href="#h1" x="626.1" y="285.7"/>
<path class="bd" d="M621.4 713.7L623 703L635.5 693.1"/><path class="bw1" d="M621.4 713.7L623 703L635.5 693.1"/><path class="br1" d="M622.2 708.3L623 703L629.2 698.1"/>
<use href="#o1" x="623" y="703"/>
<use href="#h1" x="635.5" y="693.1"/>
<use href="#h1" x="621.4" y="713.7"/>
<path class="bd" d="M705.3 391.6L695.2 379.4L691.3 383.1"/><path class="bw1" d="M705.3 391.6L695.2 379.4L691.3 383.1"/><path class="br1" d="M700.2 385.5L695.2 379.4L693.2 381.2"/>
<use href="#h1" x="705.3" y="391.6"/>
<use href="#o1" x="695.2" y="379.4"/>
<use href="#h1" x="691.3" y="383.1"/>
<path class="bd" d="M309.2 307.9L317.5 296.1L305.8 286.9"/><path class="bw1" d="M309.2 307.9L317.5 296.1L305.8 286.9"/><path class="br1" d="M313.3 302L317.5 296.1L311.6 291.5"/>
<use href="#h1" x="305.8" y="286.9"/>
<use href="#o1" x="317.5" y="296.1"/>
<use href="#h1" x="309.2" y="307.9"/>
<path class="bd" d="M488.8 256.9L496.4 268.5L504.9 277.5"/><path class="bw1" d="M488.8 256.9L496.4 268.5L504.9 277.5"/><path class="br1" d="M492.6 262.7L496.4 268.5L500.6 273"/>
<use href="#o1" x="496.4" y="268.5"/>
<use href="#h1" x="488.8" y="256.9"/>
<use href="#h1" x="504.9" y="277.5"/>
<path class="bd" d="M369.1 321.9L380.3 328L374.2 342.8"/><path class="bw1" d="M369.1 321.9L380.3 328L374.2 342.8"/><path class="br1" d="M374.7 325L380.3 328L377.3 335.4"/>
<use href="#h1" x="374.2" y="342.8"/>
<use href="#o1" x="380.3" y="328"/>
<use href="#h1" x="369.1" y="321.9"/>
<path class="bd" d="M682.1 231.5L669.2 240.5L657 237.2"/><path class="bw1" d="M682.1 231.5L669.2 240.5L657 237.2"/><path class="br1" d="M675.6 236L669.2 240.5L663.1 238.8"/>
<use href="#h1" x="657" y="237.2"/>
<use href="#h1" x="682.1" y="231.5"/>
<use href="#o1" x="669.2" y="240.5"/>
<path class="bd" d="M656.8 701.1L665.2 686.8L663.5 682.2"/><path class="bw1" d="M656.8 701.1L665.2 686.8L663.5 682.2"/><path class="br1" d="M661 694L665.2 686.8L664.3 684.5"/>
<use href="#h1" x="656.8" y="701.1"/>
<use href="#o1" x="665.2" y="686.8"/>
<use href="#h1" x="663.5" y="682.2"/>
<path class="bd" d="M483.5 462.5L484.9 451.6L481 460.3"/><path class="bw1" d="M483.5 462.5L484.9 451.6L481 460.3"/><path class="br1" d="M484.2 457.1L484.9 451.6L483 455.9"/>
<use href="#h1" x="483.5" y="462.5"/>
<use href="#o1" x="484.9" y="451.6"/>
<use href="#h1" x="481" y="460.3"/>
<path class="bd" d="M543.4 656L535.7 664.3L531.4 678.8"/><path class="bw1" d="M543.4 656L535.7 664.3L531.4 678.8"/><path class="br1" d="M539.5 660.1L535.7 664.3L533.5 671.5"/>
<use href="#h1" x="543.4" y="656"/>
<use href="#h1" x="531.4" y="678.8"/>
<use href="#o1" x="535.7" y="664.3"/>
<path class="bd" d="M693.8 530.8L703.9 518.3L693.9 507.1"/><path class="bw1" d="M693.8 530.8L703.9 518.3L693.9 507.1"/><path class="br1" d="M698.9 524.5L703.9 518.3L698.9 512.7"/>
<use href="#h1" x="693.9" y="507.1"/>
<use href="#o1" x="703.9" y="518.3"/>
<use href="#h1" x="693.8" y="530.8"/>
<path class="bd" d="M550.2 609.9L536.1 601.8L524.1 612.9"/><path class="bw1" d="M550.2 609.9L536.1 601.8L524.1 612.9"/><path class="br1" d="M543.2 605.9L536.1 601.8L530.1 607.3"/>
<use href="#h1" x="550.2" y="609.9"/>
<use href="#h1" x="524.1" y="612.9"/>
<use href="#o1" x="536.1" y="601.8"/>
<path class="bd" d="M457 685.8L467.7 697.5L463.5 700.4"/><path class="bw1" d="M457 685.8L467.7 697.5L463.5 700.4"/><path class="br1" d="M462.4 691.6L467.7 697.5L465.6 699"/>
<use href="#h1" x="463.5" y="700.4"/>
<use href="#o1" x="467.7" y="697.5"/>
<use href="#h1" x="457" y="685.8"/>
<path class="bd" d="M369.6 580.2L368.6 563.6L384.4 558.5"/><path class="bw1" d="M369.6 580.2L368.6 563.6L384.4 558.5"/><path class="br1" d="M369.1 571.9L368.6 563.6L376.5 561"/>
<use href="#h1" x="369.6" y="580.2"/>
<use href="#o1" x="368.6" y="563.6"/>
<use href="#h1" x="384.4" y="558.5"/>
<path class="bd" d="M389.7 376.2L382.1 372.2L374.8 386.3"/><path class="bw1" d="M389.7 376.2L382.1 372.2L374.8 386.3"/><path class="br1" d="M385.9 374.2L382.1 372.2L378.5 379.2"/>
<use href="#h1" x="374.8" y="386.3"/>
<use href="#o1" x="382.1" y="372.2"/>
<use href="#h1" x="389.7" y="376.2"/>
<path class="bd" d="M299.8 542.5L308.6 530.4L308.6 534.5"/><path class="bw1" d="M299.8 542.5L308.6 530.4L308.6 534.5"/><path class="br1" d="M304.2 536.4L308.6 530.4L308.6 532.4"/>
<use href="#h1" x="299.8" y="542.5"/>
<use href="#o1" x="308.6" y="530.4"/>
<use href="#h1" x="308.6" y="534.5"/>
<path class="bd" d="M321.7 365.5L335.6 362.6L344.7 376.5"/><path class="bw1" d="M321.7 365.5L335.6 362.6L344.7 376.5"/><path class="br1" d="M328.6 364.1L335.6 362.6L340.1 369.6"/>
<use href="#o1" x="335.6" y="362.6"/>
<use href="#h1" x="344.7" y="376.5"/>
<use href="#h1" x="321.7" y="365.5"/>
<path class="bd" d="M689 252L700 264.3L703.4 270.1"/><path class="bw1" d="M689 252L700 264.3L703.4 270.1"/><path class="br1" d="M694.5 258.2L700 264.3L701.7 267.2"/>
<use href="#o1" x="700" y="264.3"/>
<use href="#h1" x="689" y="252"/>
<use href="#h1" x="703.4" y="270.1"/>
<path class="bd" d="M522.4 353.3L508.7 344.2L508.7 333.1"/><path class="bw1" d="M522.4 353.3L508.7 344.2L508.7 333.1"/><path class="br1" d="M515.5 348.8L508.7 344.2L508.7 338.7"/>
<use href="#h1" x="508.7" y="333.1"/>
<use href="#h1" x="522.4" y="353.3"/>
<use href="#o1" x="508.7" y="344.2"/>
<path class="bd" d="M708.1 463.8L711.9 461.7L713.6 445.2"/><path class="bw1" d="M708.1 463.8L711.9 461.7L713.6 445.2"/><path class="br1" d="M710 462.7L711.9 461.7L712.7 453.5"/>
<use href="#h1" x="713.6" y="445.2"/>
<use href="#o1" x="711.9" y="461.7"/>
<use href="#h1" x="708.1" y="463.8"/>
<path class="bd" d="M605.8 563.6L613.4 562.1L629.7 562.1"/><path class="bw1" d="M605.8 563.6L613.4 562.1L629.7 562.1"/><path class="br1" d="M609.6 562.8L613.4 562.1L621.6 562.1"/>
<use href="#o1" x="613.4" y="562.1"/>
<use href="#h1" x="629.7" y="562.1"/>
<use href="#h1" x="605.8" y="563.6"/>
<path class="bd" d="M596.1 285.2L590.4 289L587.1 274.2"/><path class="bw1" d="M596.1 285.2L590.4 289L587.1 274.2"/><path class="br1" d="M593.2 287.1L590.4 289L588.7 281.6"/>
<use href="#h1" x="587.1" y="274.2"/>
<use href="#o1" x="590.4" y="289"/>
<use href="#h1" x="596.1" y="285.2"/>
<path class="bd" d="M329 614.2L344.6 617.1L342.4 624.8"/><path class="bw1" d="M329 614.2L344.6 617.1L342.4 624.8"/><path class="br1" d="M336.8 615.6L344.6 617.1L343.5 621"/>
<use href="#h1" x="342.4" y="624.8"/>
<use href="#o1" x="344.6" y="617.1"/>
<use href="#h1" x="329" y="614.2"/>
<path class="bd" d="M273.1 485.4L264.4 486.8L254.1 473.5"/><path class="bw1" d="M273.1 485.4L264.4 486.8L254.1 473.5"/><path class="br1" d="M268.7 486.1L264.4 486.8L259.3 480.1"/>
<use href="#h1" x="273.1" y="485.4"/>
<use href="#h1" x="254.1" y="473.5"/>
<use href="#o1" x="264.4" y="486.8"/>
<path class="bd" d="M556.5 487.3L540.9 481.9L537.2 472.6"/><path class="bw1" d="M556.5 487.3L540.9 481.9L537.2 472.6"/><path class="br1" d="M548.7 484.6L540.9 481.9L539.1 477.3"/>
<use href="#o1" x="540.9" y="481.9"/>
<use href="#h1" x="556.5" y="487.3"/>
<use href="#h1" x="537.2" y="472.6"/>
<path class="bd" d="M655.9 630.9L670.2 623.1L665.8 607.2"/><path class="bw1" d="M655.9 630.9L670.2 623.1L665.8 607.2"/><path class="br1" d="M663.1 627L670.2 623.1L668 615.2"/>
<use href="#h1" x="665.8" y="607.2"/>
<use href="#o1" x="670.2" y="623.1"/>
<use href="#h1" x="655.9" y="630.9"/>
<path class="bd" d="M290 301.8L289.4 317.2L281.5 326.4"/><path class="bw1" d="M290 301.8L289.4 317.2L281.5 326.4"/><path class="br1" d="M289.7 309.5L289.4 317.2L285.4 321.8"/>
<use href="#o1" x="289.4" y="317.2"/>
<use href="#h1" x="290" y="301.8"/>
<use href="#h1" x="281.5" y="326.4"/>
<path class="bd" d="M609.8 238.3L610.5 242.7L623.1 253.7"/><path class="bw1" d="M609.8 238.3L610.5 242.7L623.1 253.7"/><path class="br1" d="M610.1 240.5L610.5 242.7L616.8 248.2"/>
<use href="#h1" x="623.1" y="253.7"/>
<use href="#o1" x="610.5" y="242.7"/>
<use href="#h1" x="609.8" y="238.3"/>
<path class="bd" d="M304.8 649.2L293.3 645.6L297.1 630"/><path class="bw1" d="M304.8 649.2L293.3 645.6L297.1 630"/><path class="br1" d="M299 647.4L293.3 645.6L295.2 637.8"/>
<use href="#h1" x="304.8" y="649.2"/>
<use href="#o1" x="293.3" y="645.6"/>
<use href="#h1" x="297.1" y="630"/>
<path class="bd" d="M249.2 631.2L255.8 634.4L268.2 623.2"/><path class="bw1" d="M249.2 631.2L255.8 634.4L268.2 623.2"/><path class="br1" d="M252.5 632.8L255.8 634.4L262 628.8"/>
<use href="#h1" x="268.2" y="623.2"/>
<use href="#o1" x="255.8" y="634.4"/>
<use href="#h1" x="249.2" y="631.2"/>
<path class="bd" d="M292 254.5L294.2 238.1L310.8 236.4"/><path class="bw1" d="M292 254.5L294.2 238.1L310.8 236.4"/><path class="br1" d="M293.1 246.3L294.2 238.1L302.5 237.2"/>
<use href="#h1" x="292" y="254.5"/>
<use href="#o1" x="294.2" y="238.1"/>
<use href="#h1" x="310.8" y="236.4"/>
<path class="bd" d="M346.2 419.5L340.4 404L350.4 394"/><path class="bw1" d="M346.2 419.5L340.4 404L350.4 394"/><path class="br1" d="M343.3 411.8L340.4 404L345.4 399"/>
<use href="#h1" x="350.4" y="394"/>
<use href="#h1" x="346.2" y="419.5"/>
<use href="#o1" x="340.4" y="404"/>
<path class="bd" d="M556.4 394.2L542.1 388.1L530.2 398.3"/><path class="bw1" d="M556.4 394.2L542.1 388.1L530.2 398.3"/><path class="br1" d="M549.3 391.1L542.1 388.1L536.2 393.2"/>
<use href="#h1" x="556.4" y="394.2"/>
<use href="#h1" x="530.2" y="398.3"/>
<use href="#o1" x="542.1" y="388.1"/>
<path class="bd" d="M637.4 405.7L650.5 405.3L658.4 419.9"/><path class="bw1" d="M637.4 405.7L650.5 405.3L658.4 419.9"/><path class="br1" d="M643.9 405.5L650.5 405.3L654.4 412.6"/>
<use href="#h1" x="637.4" y="405.7"/>
<use href="#h1" x="658.4" y="419.9"/>
<use href="#o1" x="650.5" y="405.3"/>
<path class="bd" d="M309.8 481.1L309.5 478.7L325.7 477.4"/><path class="bw1" d="M309.8 481.1L309.5 478.7L325.7 477.4"/><path class="br1" d="M309.7 479.9L309.5 478.7L317.6 478"/>
<use href="#h1" x="309.8" y="481.1"/>
<use href="#o1" x="309.5" y="478.7"/>
<use href="#h1" x="325.7" y="477.4"/>
<path class="bd" d="M635.6 581.5L647 589.9L650 580"/><path class="bw1" d="M635.6 581.5L647 589.9L650 580"/><path class="br1" d="M641.3 585.7L647 589.9L648.5 584.9"/>
<use href="#h1" x="650" y="580"/>
<use href="#o1" x="647" y="589.9"/>
<use href="#h1" x="635.6" y="581.5"/>
<path class="bd" d="M635.2 549.7L638 536L646.1 525.4"/><path class="bw1" d="M635.2 549.7L638 536L646.1 525.4"/><path class="br1" d="M636.6 542.8L638 536L642.1 530.7"/>
<use href="#h1" x="646.1" y="525.4"/>
<use href="#h1" x="635.2" y="549.7"/>
<use href="#o1" x="638" y="536"/>
<path class="bd" d="M556.1 555.1L553.2 570.4L565 580.2"/><path class="bw1" d="M556.1 555.1L553.2 570.4L565 580.2"/><path class="br1" d="M554.6 562.8L553.2 570.4L559.1 575.3"/>
<use href="#h1" x="565" y="580.2"/>
<use href="#h1" x="556.1" y="555.1"/>
<use href="#o1" x="553.2" y="570.4"/>
<path class="bd" d="M333.3 563L330.5 573.6L324.2 587.4"/><path class="bw1" d="M333.3 563L330.5 573.6L324.2 587.4"/><path class="br1" d="M331.9 568.3L330.5 573.6L327.3 580.5"/>
<use href="#h1" x="333.3" y="563"/>
<use href="#h1" x="324.2" y="587.4"/>
<use href="#o1" x="330.5" y="573.6"/>
<path class="bd" d="M500 502L500 500.8L484 503.6"/><path class="bw1" d="M500 502L500 500.8L484 503.6"/><path class="br1" d="M500 501.4L500 500.8L492 502.2"/>
<use href="#h1" x="484" y="503.6"/>
<use href="#o1" x="500" y="500.8"/>
<use href="#h1" x="500" y="502"/>
<path class="bd" d="M611.9 422.1L597 428.4L591.5 436.7"/><path class="bw1" d="M611.9 422.1L597 428.4L591.5 436.7"/><path class="br1" d="M604.5 425.2L597 428.4L594.3 432.5"/>
<use href="#o1" x="597" y="428.4"/>
<use href="#h1" x="611.9" y="422.1"/>
<use href="#h1" x="591.5" y="436.7"/>
<path class="bd" d="M555.4 270.2L554.6 277L556.1 263.9"/><path class="bw1" d="M555.4 270.2L554.6 277L556.1 263.9"/><path class="br1" d="M555 273.6L554.6 277L555.3 270.4"/>
<use href="#h1" x="555.4" y="270.2"/>
<use href="#o1" x="554.6" y="277"/>
<use href="#h1" x="556.1" y="263.9"/>
<path class="bd" d="M643.5 319.3L628.1 315.9L620.5 307.6"/><path class="bw1" d="M643.5 319.3L628.1 315.9L620.5 307.6"/><path class="br1" d="M635.8 317.6L628.1 315.9L624.3 311.7"/>
<use href="#h1" x="620.5" y="307.6"/>
<use href="#h1" x="643.5" y="319.3"/>
<use href="#o1" x="628.1" y="315.9"/>
<path class="bd" d="M333.6 704.4L323.5 699.2L317.5 684.3"/><path class="bw1" d="M333.6 704.4L323.5 699.2L317.5 684.3"/><path class="br1" d="M328.5 701.8L323.5 699.2L320.5 691.8"/>
<use href="#h1" x="333.6" y="704.4"/>
<use href="#h1" x="317.5" y="684.3"/>
<use href="#o1" x="323.5" y="699.2"/>
<path class="bd" d="M664.3 313.8L670.2 311.2L678.2 296.4"/><path class="bw1" d="M664.3 313.8L670.2 311.2L678.2 296.4"/><path class="br1" d="M667.3 312.5L670.2 311.2L674.2 303.8"/>
<use href="#h1" x="664.3" y="313.8"/>
<use href="#h1" x="678.2" y="296.4"/>
<use href="#o1" x="670.2" y="311.2"/>
<path class="bd" d="M427.3 517.7L424.9 529.4L420.5 520.6"/><path class="bw1" d="M427.3 517.7L424.9 529.4L420.5 520.6"/><path class="br1" d="M426.1 523.5L424.9 529.4L422.7 525"/>
<use href="#h1" x="427.3" y="517.7"/>
<use href="#o1" x="424.9" y="529.4"/>
<use href="#h1" x="420.5" y="520.6"/>
<path class="bd" d="M412 400.5L420.1 405.8L436.1 400.9"/><path class="bw1" d="M412 400.5L420.1 405.8L436.1 400.9"/><path class="br1" d="M416.1 403.1L420.1 405.8L428.1 403.4"/>
<use href="#o1" x="420.1" y="405.8"/>
<use href="#h1" x="436.1" y="400.9"/>
<use href="#h1" x="412" y="400.5"/>
<path class="bd" d="M552.9 614.8L547.3 629.1L559.9 634.1"/><path class="bw1" d="M552.9 614.8L547.3 629.1L559.9 634.1"/><path class="br1" d="M550.1 622L547.3 629.1L553.6 631.6"/>
<use href="#h1" x="552.9" y="614.8"/>
<use href="#o1" x="547.3" y="629.1"/>
<use href="#h1" x="559.9" y="634.1"/>
<path class="bd" d="M437.5 268.2L453.9 264.3L461.8 273.4"/><path class="bw1" d="M437.5 268.2L453.9 264.3L461.8 273.4"/><path class="br1" d="M445.7 266.2L453.9 264.3L457.9 268.9"/>
<use href="#o1" x="453.9" y="264.3"/>
<use href="#h1" x="437.5" y="268.2"/>
<use href="#h1" x="461.8" y="273.4"/>
<path class="bd" d="M680.9 528.3L674 516.3L657.5 516.7"/><path class="bw1" d="M680.9 528.3L674 516.3L657.5 516.7"/><path class="br1" d="M677.5 522.3L674 516.3L665.7 516.5"/>
<use href="#h1" x="680.9" y="528.3"/>
<use href="#h1" x="657.5" y="516.7"/>
<use href="#o1" x="674" y="516.3"/>
<path class="bd" d="M443.1 569.4L452.6 576.7L443.8 574.5"/><path class="bw1" d="M443.1 569.4L452.6 576.7L443.8 574.5"/><path class="br1" d="M447.9 573L452.6 576.7L448.2 575.6"/>
<use href="#h1" x="443.1" y="569.4"/>
<use href="#o1" x="452.6" y="576.7"/>
<use href="#h1" x="443.8" y="574.5"/>
<path class="bd" d="M500.8 653.3L485.4 648.3L480.3 637.6"/><path class="bw1" d="M500.8 653.3L485.4 648.3L480.3 637.6"/><path class="br1" d="M493.1 650.8L485.4 648.3L482.8 643"/>
<use href="#h1" x="480.3" y="637.6"/>
<use href="#h1" x="500.8" y="653.3"/>
<use href="#o1" x="485.4" y="648.3"/>
<path class="bd" d="M446.7 473.5L436.2 466.3L420.8 468.4"/><path class="bw1" d="M446.7 473.5L436.2 466.3L420.8 468.4"/><path class="br1" d="M441.4 469.9L436.2 466.3L428.5 467.4"/>
<use href="#o1" x="436.2" y="466.3"/>
<use href="#h1" x="420.8" y="468.4"/>
<use href="#h1" x="446.7" y="473.5"/>
<path class="bd" d="M567.8 498.4L567.4 512L580.7 510"/><path class="bw1" d="M567.8 498.4L567.4 512L580.7 510"/><path class="br1" d="M567.6 505.2L567.4 512L574.1 511"/>
<use href="#h1" x="580.7" y="510"/>
<use href="#o1" x="567.4" y="512"/>
<use href="#h1" x="567.8" y="498.4"/>
<path class="bd" d="M271.5 347.9L262.2 351.9L255.7 367.1"/><path class="bw1" d="M271.5 347.9L262.2 351.9L255.7 367.1"/><path class="br1" d="M266.9 349.9L262.2 351.9L259 359.5"/>
<use href="#h1" x="271.5" y="347.9"/>
<use href="#h1" x="255.7" y="367.1"/>
<use href="#o1" x="262.2" y="351.9"/>
<path class="bd" d="M428.9 668.4L432.6 684.5L445.2 688.3"/><path class="bw1" d="M428.9 668.4L432.6 684.5L445.2 688.3"/><path class="br1" d="M430.8 676.4L432.6 684.5L438.9 686.4"/>
<use href="#h1" x="445.2" y="688.3"/>
<use href="#h1" x="428.9" y="668.4"/>
<use href="#o1" x="432.6" y="684.5"/>
<path class="bd" d="M230.2 410.9L242.7 405.1L240.3 412.8"/><path class="bw1" d="M230.2 410.9L242.7 405.1L240.3 412.8"/><path class="br1" d="M236.5 408L242.7 405.1L241.5 408.9"/>
<use href="#h1" x="230.2" y="410.9"/>
<use href="#o1" x="242.7" y="405.1"/>
<use href="#h1" x="240.3" y="412.8"/>
<path class="bd" d="M596.3 525.4L608.3 514.4L622.6 520.5"/><path class="bw1" d="M596.3 525.4L608.3 514.4L622.6 520.5"/><path class="br1" d="M602.3 519.9L608.3 514.4L615.4 517.5"/>
<use href="#h1" x="622.6" y="520.5"/>
<use href="#h1" x="596.3" y="525.4"/>
<use href="#o1" x="608.3" y="514.4"/>
<path class="bd" d="M692.4 446.2L676.6 444.7L677.6 449"/><path class="bw1" d="M692.4 446.2L676.6 444.7L677.6 449"/><path class="br1" d="M684.5 445.4L676.6 444.7L677.1 446.8"/>
<use href="#h1" x="677.6" y="449"/>
<use href="#o1" x="676.6" y="444.7"/>
<use href="#h1" x="692.4" y="446.2"/>
<path class="bd" d="M283.5 212.8L289.7 206L301.6 217"/><path class="bw1" d="M283.5 212.8L289.7 206L301.6 217"/><path class="br1" d="M286.6 209.4L289.7 206L295.6 211.5"/>
<use href="#o1" x="289.7" y="206"/>
<use href="#h1" x="283.5" y="212.8"/>
<use href="#h1" x="301.6" y="217"/>
<path class="bd" d="M410.4 218L421 227L437.2 221.5"/><path class="bw1" d="M410.4 218L421 227L437.2 221.5"/><path class="br1" d="M415.7 222.5L421 227L429.1 224.2"/>
<use href="#o1" x="421" y="227"/>
<use href="#h1" x="410.4" y="218"/>
<use href="#h1" x="437.2" y="221.5"/>
<path class="bd" d="M468.5 199.6L471.3 213L486 218"/><path class="bw1" d="M468.5 199.6L471.3 213L486 218"/><path class="br1" d="M469.9 206.3L471.3 213L478.6 215.5"/>
<use href="#o1" x="471.3" y="213"/>
<use href="#h1" x="468.5" y="199.6"/>
<use href="#h1" x="486" y="218"/>
<path class="bd" d="M539 214.6L522 213L516.5 216.3"/><path class="bw1" d="M539 214.6L522 213L516.5 216.3"/><path class="br1" d="M530.5 213.8L522 213L519.2 214.7"/>
<use href="#o1" x="522" y="213"/>
<use href="#h1" x="539" y="214.6"/>
<use href="#h1" x="516.5" y="216.3"/>
<path class="bd" d="M571.5 200.7L570.4 216L580 222"/><path class="bw1" d="M571.5 200.7L570.4 216L580 222"/><path class="br1" d="M571 208.3L570.4 216L575.2 219"/>
<use href="#o1" x="570.4" y="216"/>
<use href="#h1" x="571.5" y="200.7"/>
<use href="#h1" x="580" y="222"/>
<path class="bd" d="M682.3 220.5L690 227L705.8 227.2"/><path class="bw1" d="M682.3 220.5L690 227L705.8 227.2"/><path class="br1" d="M686.1 223.8L690 227L697.9 227.1"/>
<use href="#o1" x="690" y="227"/>
<use href="#h1" x="682.3" y="220.5"/>
<use href="#h1" x="705.8" y="227.2"/>
<path class="bd" d="M220.8 318.4L226 333L240.4 337"/><path class="bw1" d="M220.8 318.4L226 333L240.4 337"/><path class="br1" d="M223.4 325.7L226 333L233.2 335"/>
<use href="#o1" x="226" y="333"/>
<use href="#h1" x="220.8" y="318.4"/>
<use href="#h1" x="240.4" y="337"/>
<path class="bd" d="M211.3 453.7L227 449L233.7 456"/><path class="bw1" d="M211.3 453.7L227 449L233.7 456"/><path class="br1" d="M219.2 451.4L227 449L230.3 452.5"/>
<use href="#o1" x="227" y="449"/>
<use href="#h1" x="211.3" y="453.7"/>
<use href="#h1" x="233.7" y="456"/>
<path class="bd" d="M218.3 525.8L230.2 520L244.5 528"/><path class="bw1" d="M218.3 525.8L230.2 520L244.5 528"/><path class="br1" d="M224.2 522.9L230.2 520L237.3 524"/>
<use href="#o1" x="230.2" y="520"/>
<use href="#h1" x="218.3" y="525.8"/>
<use href="#h1" x="244.5" y="528"/>
<path class="bd" d="M220.8 608L225.6 623L212.7 626.3"/><path class="bw1" d="M220.8 608L225.6 623L212.7 626.3"/><path class="br1" d="M223.2 615.5L225.6 623L219.1 624.6"/>
<use href="#o1" x="225.6" y="623"/>
<use href="#h1" x="220.8" y="608"/>
<use href="#h1" x="212.7" y="626.3"/>
<path class="bd" d="M724.7 302.7L716 294.6L705.8 284.9"/><path class="bw1" d="M724.7 302.7L716 294.6L705.8 284.9"/><path class="br1" d="M720.4 298.6L716 294.6L710.9 289.8"/>
<use href="#o1" x="716" y="294.6"/>
<use href="#h1" x="724.7" y="302.7"/>
<use href="#h1" x="705.8" y="284.9"/>
<path class="bd" d="M713.8 527.7L723.8 537.8L716.3 543.3"/><path class="bw1" d="M713.8 527.7L723.8 537.8L716.3 543.3"/><path class="br1" d="M718.8 532.8L723.8 537.8L720 540.5"/>
<use href="#o1" x="723.8" y="537.8"/>
<use href="#h1" x="713.8" y="527.7"/>
<use href="#h1" x="716.3" y="543.3"/>
<path class="bd" d="M706 594.4L718.6 587L726 597.3"/><path class="bw1" d="M706 594.4L718.6 587L726 597.3"/><path class="br1" d="M712.3 590.7L718.6 587L722.3 592.1"/>
<use href="#o1" x="718.6" y="587"/>
<use href="#h1" x="706" y="594.4"/>
<use href="#h1" x="726" y="597.3"/>
<path class="bd" d="M728.6 634.5L721.8 619.3L707.6 621"/><path class="bw1" d="M728.6 634.5L721.8 619.3L707.6 621"/><path class="br1" d="M725.2 626.9L721.8 619.3L714.7 620.1"/>
<use href="#o1" x="721.8" y="619.3"/>
<use href="#h1" x="728.6" y="634.5"/>
<use href="#h1" x="707.6" y="621"/>
<path class="bd" d="M733.5 701.8L721.8 713.2L708.3 707.3"/><path class="bw1" d="M733.5 701.8L721.8 713.2L708.3 707.3"/><path class="br1" d="M727.6 707.5L721.8 713.2L715 710.2"/>
<use href="#o1" x="721.8" y="713.2"/>
<use href="#h1" x="733.5" y="701.8"/>
<use href="#h1" x="708.3" y="707.3"/>
<path class="bd" d="M385.3 700.5L391 705.9L389.6 692"/><path class="bw1" d="M385.3 700.5L391 705.9L389.6 692"/><path class="br1" d="M388.1 703.2L391 705.9L390.3 699"/>
<use href="#o1" x="391" y="705.9"/>
<use href="#h1" x="385.3" y="700.5"/>
<use href="#h1" x="389.6" y="692"/>
<path class="bd" d="M413 716L411 706.7L420 700"/><path class="bw1" d="M413 716L411 706.7L420 700"/><path class="br1" d="M412 711.4L411 706.7L415.5 703.4"/>
<use href="#o1" x="411" y="706.7"/>
<use href="#h1" x="413" y="716"/>
<use href="#h1" x="420" y="700"/>
<path class="bd" d="M491.5 702L486 712L478 706"/><path class="bw1" d="M491.5 702L486 712L478 706"/><path class="br1" d="M488.8 707L486 712L482 709"/>
<use href="#o1" x="486" y="712"/>
<use href="#h1" x="491.5" y="702"/>
<use href="#h1" x="478" y="706"/>
<path class="bd" d="M327.1 346.8L318.6 338.4L328.9 338.7"/><path class="bw1" d="M327.1 346.8L318.6 338.4L328.9 338.7"/><path class="br1" d="M322.9 342.6L318.6 338.4L323.8 338.5"/>
<use href="#h1" x="328.9" y="338.7"/>
<use href="#o1" x="318.6" y="338.4"/>
<use href="#h1" x="327.1" y="346.8"/>
<path class="bd" d="M488.7 536.1L482.4 546.6L466.8 550.3"/><path class="bw1" d="M488.7 536.1L482.4 546.6L466.8 550.3"/><path class="br1" d="M485.6 541.4L482.4 546.6L474.6 548.5"/>
<use href="#h1" x="488.7" y="536.1"/>
<use href="#h1" x="466.8" y="550.3"/>
<use href="#o1" x="482.4" y="546.6"/>
<path class="bd" d="M468.8 377.4L466.7 366.5L467.7 376.1"/><path class="bw1" d="M468.8 377.4L466.7 366.5L467.7 376.1"/><path class="br1" d="M467.7 372L466.7 366.5L467.2 371.3"/>
<use href="#h1" x="467.7" y="376.1"/>
<use href="#o1" x="466.7" y="366.5"/>
<use href="#h1" x="468.8" y="377.4"/>
<path class="bd" d="M605.6 334L592.8 330.8L579.1 330.2"/><path class="bw1" d="M605.6 334L592.8 330.8L579.1 330.2"/><path class="br1" d="M599.2 332.4L592.8 330.8L585.9 330.5"/>
<use href="#o1" x="592.8" y="330.8"/>
<use href="#h1" x="579.1" y="330.2"/>
<use href="#h1" x="605.6" y="334"/>
<path class="bd" d="M392.1 348.1L407.2 341.3L405.5 324.9"/><path class="bw1" d="M392.1 348.1L407.2 341.3L405.5 324.9"/><path class="br1" d="M399.6 344.7L407.2 341.3L406.4 333.1"/>
<use href="#h1" x="405.5" y="324.9"/>
<use href="#h1" x="392.1" y="348.1"/>
<use href="#o1" x="407.2" y="341.3"/>
<path class="bd" d="M403.6 277.1L391.5 281.7L380.2 269.1"/><path class="bw1" d="M403.6 277.1L391.5 281.7L380.2 269.1"/><path class="br1" d="M397.5 279.4L391.5 281.7L385.9 275.4"/>
<use href="#o1" x="391.5" y="281.7"/>
<use href="#h1" x="380.2" y="269.1"/>
<use href="#h1" x="403.6" y="277.1"/>
<path class="bd" d="M465.8 498.5L449.6 502.5L447.9 518.3"/><path class="bw1" d="M465.8 498.5L449.6 502.5L447.9 518.3"/><path class="br1" d="M457.7 500.5L449.6 502.5L448.8 510.4"/>
<use href="#o1" x="449.6" y="502.5"/>
<use href="#h1" x="465.8" y="498.5"/>
<use href="#h1" x="447.9" y="518.3"/>
<path class="bd" d="M651.1 684.7L642.2 683.9L649.3 671.3"/><path class="bw1" d="M651.1 684.7L642.2 683.9L649.3 671.3"/><path class="br1" d="M646.6 684.3L642.2 683.9L645.7 677.6"/>
<use href="#h1" x="651.1" y="684.7"/>
<use href="#o1" x="642.2" y="683.9"/>
<use href="#h1" x="649.3" y="671.3"/>
<path class="bd" d="M289.1 273.7L277.4 280.9L265.5 286.3"/><path class="bw1" d="M289.1 273.7L277.4 280.9L265.5 286.3"/><path class="br1" d="M283.3 277.3L277.4 280.9L271.4 283.6"/>
<use href="#h1" x="265.5" y="286.3"/>
<use href="#h1" x="289.1" y="273.7"/>
<use href="#o1" x="277.4" y="280.9"/>
<path class="bd" d="M546.1 334.7L554 335.5L555.5 352.1"/><path class="bw1" d="M546.1 334.7L554 335.5L555.5 352.1"/><path class="br1" d="M550 335.1L554 335.5L554.8 343.8"/>
<use href="#h1" x="555.5" y="352.1"/>
<use href="#o1" x="554" y="335.5"/>
<use href="#h1" x="546.1" y="334.7"/>
<path class="bd" d="M471.3 301.2L469.9 316.2L453.5 317.2"/><path class="bw1" d="M471.3 301.2L469.9 316.2L453.5 317.2"/><path class="br1" d="M470.6 308.7L469.9 316.2L461.7 316.7"/>
<use href="#h1" x="471.3" y="301.2"/>
<use href="#o1" x="469.9" y="316.2"/>
<use href="#h1" x="453.5" y="317.2"/>
<path class="bd" d="M260.3 525.9L255.4 542.2L269.9 551"/><path class="bw1" d="M260.3 525.9L255.4 542.2L269.9 551"/><path class="br1" d="M257.9 534L255.4 542.2L262.6 546.6"/>
<use href="#h1" x="269.9" y="551"/>
<use href="#o1" x="255.4" y="542.2"/>
<use href="#h1" x="260.3" y="525.9"/>
<path class="bd" d="M492.4 294.9L502.9 282.3L509 287.2"/><path class="bw1" d="M492.4 294.9L502.9 282.3L509 287.2"/><path class="br1" d="M497.6 288.6L502.9 282.3L505.9 284.7"/>
<use href="#h1" x="492.4" y="294.9"/>
<use href="#o1" x="502.9" y="282.3"/>
<use href="#h1" x="509" y="287.2"/>
<path class="bd" d="M497.9 586.3L503.5 593.2L508.2 609"/><path class="bw1" d="M497.9 586.3L503.5 593.2L508.2 609"/><path class="br1" d="M500.7 589.7L503.5 593.2L505.8 601.1"/>
<use href="#h1" x="497.9" y="586.3"/>
<use href="#h1" x="508.2" y="609"/>
<use href="#o1" x="503.5" y="593.2"/>
<path class="bd" d="M633.9 647.5L637.4 634.5L625.1 623.2"/><path class="bw1" d="M633.9 647.5L637.4 634.5L625.1 623.2"/><path class="br1" d="M635.7 641L637.4 634.5L631.3 628.8"/>
<use href="#o1" x="637.4" y="634.5"/>
<use href="#h1" x="625.1" y="623.2"/>
<use href="#h1" x="633.9" y="647.5"/>
<path class="bd" d="M632.4 275.4L647.4 278L655.2 262.9"/><path class="bw1" d="M632.4 275.4L647.4 278L655.2 262.9"/><path class="br1" d="M639.9 276.7L647.4 278L651.3 270.4"/>
<use href="#o1" x="647.4" y="278"/>
<use href="#h1" x="655.2" y="262.9"/>
<use href="#h1" x="632.4" y="275.4"/>
<path class="bd" d="M341.3 290.4L345.7 279.8L331.9 279"/><path class="bw1" d="M341.3 290.4L345.7 279.8L331.9 279"/><path class="br1" d="M343.5 285.1L345.7 279.8L338.8 279.4"/>
<use href="#h1" x="331.9" y="279"/>
<use href="#o1" x="345.7" y="279.8"/>
<use href="#h1" x="341.3" y="290.4"/>
<path class="bd" d="M379.2 352.7L363.4 346.2L354.9 357.1"/><path class="bw1" d="M379.2 352.7L363.4 346.2L354.9 357.1"/><path class="br1" d="M371.3 349.5L363.4 346.2L359.2 351.7"/>
<use href="#h1" x="379.2" y="352.7"/>
<use href="#o1" x="363.4" y="346.2"/>
<use href="#h1" x="354.9" y="357.1"/>
<path class="bd" d="M622.1 439.5L633 440.2L635.3 423.9"/><path class="bw1" d="M622.1 439.5L633 440.2L635.3 423.9"/><path class="br1" d="M627.6 439.8L633 440.2L634.2 432"/>
<use href="#h1" x="635.3" y="423.9"/>
<use href="#o1" x="633" y="440.2"/>
<use href="#h1" x="622.1" y="439.5"/>
<path class="bd" d="M346.7 655.4L331.2 658.1L323.6 668.8"/><path class="bw1" d="M346.7 655.4L331.2 658.1L323.6 668.8"/><path class="br1" d="M339 656.8L331.2 658.1L327.4 663.4"/>
<use href="#o1" x="331.2" y="658.1"/>
<use href="#h1" x="346.7" y="655.4"/>
<use href="#h1" x="323.6" y="668.8"/>
<path class="bd" d="M371.3 619.9L381.7 631.2L392.2 636.2"/><path class="bw1" d="M371.3 619.9L381.7 631.2L392.2 636.2"/><path class="br1" d="M376.5 625.5L381.7 631.2L387 633.7"/>
<use href="#o1" x="381.7" y="631.2"/>
<use href="#h1" x="371.3" y="619.9"/>
<use href="#h1" x="392.2" y="636.2"/>
<path class="bd" d="M373.6 493.8L387.6 487L400.5 492.5"/><path class="bw1" d="M373.6 493.8L387.6 487L400.5 492.5"/><path class="br1" d="M380.6 490.4L387.6 487L394.1 489.8"/>
<use href="#o1" x="387.6" y="487"/>
<use href="#h1" x="373.6" y="493.8"/>
<use href="#h1" x="400.5" y="492.5"/>
<path class="bd" d="M305 621.2L296.9 607.9L302 594.4"/><path class="bw1" d="M305 621.2L296.9 607.9L302 594.4"/><path class="br1" d="M301 614.6L296.9 607.9L299.5 601.1"/>
<use href="#o1" x="296.9" y="607.9"/>
<use href="#h1" x="305" y="621.2"/>
<use href="#h1" x="302" y="594.4"/>
<path class="bd" d="M540.6 541.9L528.5 553.6L524.6 559.7"/><path class="bw1" d="M540.6 541.9L528.5 553.6L524.6 559.7"/><path class="br1" d="M534.6 547.7L528.5 553.6L526.5 556.6"/>
<use href="#o1" x="528.5" y="553.6"/>
<use href="#h1" x="540.6" y="541.9"/>
<use href="#h1" x="524.6" y="559.7"/>
<path class="bd" d="M583.4 367.6L590.7 379.3L589.3 394"/><path class="bw1" d="M583.4 367.6L590.7 379.3L589.3 394"/><path class="br1" d="M587.1 373.4L590.7 379.3L590 386.6"/>
<use href="#o1" x="590.7" y="379.3"/>
<use href="#h1" x="589.3" y="394"/>
<use href="#h1" x="583.4" y="367.6"/>
<path class="bd" d="M310.9 449.8L309.6 446.8L304.3 461.7"/><path class="bw1" d="M310.9 449.8L309.6 446.8L304.3 461.7"/><path class="br1" d="M310.3 448.3L309.6 446.8L306.9 454.3"/>
<use href="#h1" x="310.9" y="449.8"/>
<use href="#o1" x="309.6" y="446.8"/>
<use href="#h1" x="304.3" y="461.7"/>
<path class="bd" d="M413.7 451.4L399 443.9L388.3 446.9"/><path class="bw1" d="M413.7 451.4L399 443.9L388.3 446.9"/><path class="br1" d="M406.4 447.7L399 443.9L393.7 445.4"/>
<use href="#h1" x="388.3" y="446.9"/>
<use href="#h1" x="413.7" y="451.4"/>
<use href="#o1" x="399" y="443.9"/>
<path class="bd" d="M552.9 418.8L547.2 430.9L534.6 423.3"/><path class="bw1" d="M552.9 418.8L547.2 430.9L534.6 423.3"/><path class="br1" d="M550.1 424.8L547.2 430.9L540.9 427.1"/>
<use href="#h1" x="552.9" y="418.8"/>
<use href="#o1" x="547.2" y="430.9"/>
<use href="#h1" x="534.6" y="423.3"/>
<path class="bd" d="M591.3 469.9L589.5 486.1L573 489.8"/><path class="bw1" d="M591.3 469.9L589.5 486.1L573 489.8"/><path class="br1" d="M590.4 478L589.5 486.1L581.2 487.9"/>
<use href="#h1" x="591.3" y="469.9"/>
<use href="#h1" x="573" y="489.8"/>
<use href="#o1" x="589.5" y="486.1"/>
<path class="bd" d="M592.2 583.7L597.9 570.2L587.9 569.9"/><path class="bw1" d="M592.2 583.7L597.9 570.2L587.9 569.9"/><path class="br1" d="M595 577L597.9 570.2L592.9 570.1"/>
<use href="#h1" x="587.9" y="569.9"/>
<use href="#o1" x="597.9" y="570.2"/>
<use href="#h1" x="592.2" y="583.7"/>
<path class="bd" d="M429.3 290.3L428.7 291.1L444.8 294.9"/><path class="bw1" d="M429.3 290.3L428.7 291.1L444.8 294.9"/><path class="br1" d="M429 290.7L428.7 291.1L436.7 293"/>
<use href="#h1" x="444.8" y="294.9"/>
<use href="#o1" x="428.7" y="291.1"/>
<use href="#h1" x="429.3" y="290.3"/>
<path class="bd" d="M285 439.8L269.5 445.9L262.8 433.8"/><path class="bw1" d="M285 439.8L269.5 445.9L262.8 433.8"/><path class="br1" d="M277.3 442.8L269.5 445.9L266.1 439.8"/>
<use href="#h1" x="285" y="439.8"/>
<use href="#o1" x="269.5" y="445.9"/>
<use href="#h1" x="262.8" y="433.8"/>
<path class="bd" d="M530.3 685L539.6 672.3L530.4 658.1"/><path class="bw1" d="M530.3 685L539.6 672.3L530.4 658.1"/><path class="br1" d="M534.9 678.6L539.6 672.3L535 665.2"/>
<use href="#h1" x="530.3" y="685"/>
<use href="#h1" x="530.4" y="658.1"/>
<use href="#o1" x="539.6" y="672.3"/>
<path class="bd" d="M473.2 445.2L488.7 448.5L492.2 464.6"/><path class="bw1" d="M473.2 445.2L488.7 448.5L492.2 464.6"/><path class="br1" d="M481 446.9L488.7 448.5L490.4 456.6"/>
<use href="#h1" x="473.2" y="445.2"/>
<use href="#h1" x="492.2" y="464.6"/>
<use href="#o1" x="488.7" y="448.5"/>
<path class="bd" d="M589.4 644.6L575.2 653.3L562.6 645.2"/><path class="bw1" d="M589.4 644.6L575.2 653.3L562.6 645.2"/><path class="br1" d="M582.3 649L575.2 653.3L568.9 649.3"/>
<use href="#h1" x="562.6" y="645.2"/>
<use href="#h1" x="589.4" y="644.6"/>
<use href="#o1" x="575.2" y="653.3"/>
<path class="bd" d="M257 498.2L251.3 502.1L264.6 509.8"/><path class="bw1" d="M257 498.2L251.3 502.1L264.6 509.8"/><path class="br1" d="M254.2 500.2L251.3 502.1L258 506"/>
<use href="#h1" x="257" y="498.2"/>
<use href="#o1" x="251.3" y="502.1"/>
<use href="#h1" x="264.6" y="509.8"/>
<path class="bd" d="M331.6 491.5L346.1 490.4L354.8 504.6"/><path class="bw1" d="M331.6 491.5L346.1 490.4L354.8 504.6"/><path class="br1" d="M338.8 490.9L346.1 490.4L350.4 497.5"/>
<use href="#o1" x="346.1" y="490.4"/>
<use href="#h1" x="354.8" y="504.6"/>
<use href="#h1" x="331.6" y="491.5"/>
<path class="bd" d="M421.7 615.4L411.8 606.9L397.4 603.5"/><path class="bw1" d="M421.7 615.4L411.8 606.9L397.4 603.5"/><path class="br1" d="M416.7 611.2L411.8 606.9L404.6 605.2"/>
<use href="#o1" x="411.8" y="606.9"/>
<use href="#h1" x="397.4" y="603.5"/>
<use href="#h1" x="421.7" y="615.4"/>
<path class="bd" d="M711.5 461.5L711.7 476.1L713.4 470.9"/><path class="bw1" d="M711.5 461.5L711.7 476.1L713.4 470.9"/><path class="br1" d="M711.6 468.8L711.7 476.1L712.6 473.5"/>
<use href="#h1" x="713.4" y="470.9"/>
<use href="#o1" x="711.7" y="476.1"/>
<use href="#h1" x="711.5" y="461.5"/>
<path class="bd" d="M330.1 511L327.1 525.3L335.3 537.7"/><path class="bw1" d="M330.1 511L327.1 525.3L335.3 537.7"/><path class="br1" d="M328.6 518.2L327.1 525.3L331.2 531.5"/>
<use href="#o1" x="327.1" y="525.3"/>
<use href="#h1" x="335.3" y="537.7"/>
<use href="#h1" x="330.1" y="511"/>
<path class="bd" d="M530.5 504.6L538.9 492.2L553.1 499.9"/><path class="bw1" d="M530.5 504.6L538.9 492.2L553.1 499.9"/><path class="br1" d="M534.7 498.4L538.9 492.2L546 496"/>
<use href="#h1" x="553.1" y="499.9"/>
<use href="#o1" x="538.9" y="492.2"/>
<use href="#h1" x="530.5" y="504.6"/>
<path class="bd" d="M701.2 558.4L697.4 542.8L711.8 537.6"/><path class="bw1" d="M701.2 558.4L697.4 542.8L711.8 537.6"/><path class="br1" d="M699.3 550.6L697.4 542.8L704.6 540.2"/>
<use href="#h1" x="711.8" y="537.6"/>
<use href="#o1" x="697.4" y="542.8"/>
<use href="#h1" x="701.2" y="558.4"/>
<path class="bd" d="M365.1 247.4L381.5 242.4L381.7 233.2"/><path class="bw1" d="M365.1 247.4L381.5 242.4L381.7 233.2"/><path class="br1" d="M373.3 244.9L381.5 242.4L381.6 237.8"/>
<use href="#h1" x="381.7" y="233.2"/>
<use href="#o1" x="381.5" y="242.4"/>
<use href="#h1" x="365.1" y="247.4"/>
<path class="bd" d="M645.4 405.3L661 409L672 400.7"/><path class="bw1" d="M645.4 405.3L661 409L672 400.7"/><path class="br1" d="M653.2 407.1L661 409L666.5 404.9"/>
<use href="#h1" x="672" y="400.7"/>
<use href="#h1" x="645.4" y="405.3"/>
<use href="#o1" x="661" y="409"/>
<path class="bd" d="M659.1 237L667.6 249.8L673.3 242.9"/><path class="bw1" d="M659.1 237L667.6 249.8L673.3 242.9"/><path class="br1" d="M663.4 243.4L667.6 249.8L670.5 246.3"/>
<use href="#h1" x="673.3" y="242.9"/>
<use href="#o1" x="667.6" y="249.8"/>
<use href="#h1" x="659.1" y="237"/>
<path class="bd" d="M457.9 389.6L473.4 397L479.4 397.3"/><path class="bw1" d="M457.9 389.6L473.4 397L479.4 397.3"/><path class="br1" d="M465.7 393.3L473.4 397L476.4 397.1"/>
<use href="#h1" x="479.4" y="397.3"/>
<use href="#h1" x="457.9" y="389.6"/>
<use href="#o1" x="473.4" y="397"/>
<path class="bd" d="M366.8 370.2L356.5 383.4L340.5 376.9"/><path class="bw1" d="M366.8 370.2L356.5 383.4L340.5 376.9"/><path class="br1" d="M361.7 376.8L356.5 383.4L348.5 380.2"/>
<use href="#h1" x="366.8" y="370.2"/>
<use href="#h1" x="340.5" y="376.9"/>
<use href="#o1" x="356.5" y="383.4"/>
<path class="bd" d="M331.1 679.3L343.5 691L335.1 706.1"/><path class="bw1" d="M331.1 679.3L343.5 691L335.1 706.1"/><path class="br1" d="M337.3 685.2L343.5 691L339.3 698.6"/>
<use href="#h1" x="331.1" y="679.3"/>
<use href="#o1" x="343.5" y="691"/>
<use href="#h1" x="335.1" y="706.1"/>
<path class="bd" d="M331.6 548.9L345.7 558.8L342.2 571"/><path class="bw1" d="M331.6 548.9L345.7 558.8L342.2 571"/><path class="br1" d="M338.7 553.8L345.7 558.8L344 564.9"/>
<use href="#h1" x="342.2" y="571"/>
<use href="#o1" x="345.7" y="558.8"/>
<use href="#h1" x="331.6" y="548.9"/>
<path class="bd" d="M458.8 340.3L443.1 337.9L432.3 344.7"/><path class="bw1" d="M458.8 340.3L443.1 337.9L432.3 344.7"/><path class="br1" d="M451 339.1L443.1 337.9L437.7 341.3"/>
<use href="#h1" x="432.3" y="344.7"/>
<use href="#h1" x="458.8" y="340.3"/>
<use href="#o1" x="443.1" y="337.9"/>
<path class="bd" d="M588.2 272L590.7 254.9L602 252.3"/><path class="bw1" d="M588.2 272L590.7 254.9L602 252.3"/><path class="br1" d="M589.5 263.4L590.7 254.9L596.4 253.6"/>
<use href="#h1" x="602" y="252.3"/>
<use href="#o1" x="590.7" y="254.9"/>
<use href="#h1" x="588.2" y="272"/>
<path class="bd" d="M628 690.6L614.6 679.6L621.1 664.4"/><path class="bw1" d="M628 690.6L614.6 679.6L621.1 664.4"/><path class="br1" d="M621.3 685.1L614.6 679.6L617.8 672"/>
<use href="#o1" x="614.6" y="679.6"/>
<use href="#h1" x="628" y="690.6"/>
<use href="#h1" x="621.1" y="664.4"/>
<path class="bd" d="M499 312.2L503.8 318.7L517.9 309.7"/><path class="bw1" d="M499 312.2L503.8 318.7L517.9 309.7"/><path class="br1" d="M501.4 315.5L503.8 318.7L510.8 314.2"/>
<use href="#h1" x="499" y="312.2"/>
<use href="#o1" x="503.8" y="318.7"/>
<use href="#h1" x="517.9" y="309.7"/>
<path class="bd" d="M698.6 329L697 333.2L701.1 350"/><path class="bw1" d="M698.6 329L697 333.2L701.1 350"/><path class="br1" d="M697.8 331.1L697 333.2L699.1 341.6"/>
<use href="#h1" x="701.1" y="350"/>
<use href="#o1" x="697" y="333.2"/>
<use href="#h1" x="698.6" y="329"/>
<path class="bd" d="M675.3 613.6L691 609.8L690.9 615.7"/><path class="bw1" d="M675.3 613.6L691 609.8L690.9 615.7"/><path class="br1" d="M683.2 611.7L691 609.8L691 612.8"/>
<use href="#h1" x="690.9" y="615.7"/>
<use href="#o1" x="691" y="609.8"/>
<use href="#h1" x="675.3" y="613.6"/>
<path class="bd" d="M461.8 621.1L449.9 624.5L434.8 623"/><path class="bw1" d="M461.8 621.1L449.9 624.5L434.8 623"/><path class="br1" d="M455.9 622.8L449.9 624.5L442.4 623.7"/>
<use href="#h1" x="461.8" y="621.1"/>
<use href="#h1" x="434.8" y="623"/>
<use href="#o1" x="449.9" y="624.5"/>
<path class="bd" d="M673.8 516.9L662 505.2L648.3 508.3"/><path class="bw1" d="M673.8 516.9L662 505.2L648.3 508.3"/><path class="br1" d="M667.9 511.1L662 505.2L655.2 506.7"/>
<use href="#o1" x="662" y="505.2"/>
<use href="#h1" x="673.8" y="516.9"/>
<use href="#h1" x="648.3" y="508.3"/>
<path class="bd" d="M357 330.8L342.5 322.1L347.1 305.4"/><path class="bw1" d="M357 330.8L342.5 322.1L347.1 305.4"/><path class="br1" d="M349.8 326.5L342.5 322.1L344.8 313.7"/>
<use href="#o1" x="342.5" y="322.1"/>
<use href="#h1" x="347.1" y="305.4"/>
<use href="#h1" x="357" y="330.8"/>
<path class="bd" d="M380.7 287.5L381.6 299.7L389 291.8"/><path class="bw1" d="M380.7 287.5L381.6 299.7L389 291.8"/><path class="br1" d="M381.1 293.6L381.6 299.7L385.3 295.8"/>
<use href="#h1" x="389" y="291.8"/>
<use href="#o1" x="381.6" y="299.7"/>
<use href="#h1" x="380.7" y="287.5"/>
<path class="bd" d="M318.5 596L317.4 583.3L332.9 583.2"/><path class="bw1" d="M318.5 596L317.4 583.3L332.9 583.2"/><path class="br1" d="M318 589.7L317.4 583.3L325.1 583.3"/>
<use href="#h1" x="318.5" y="596"/>
<use href="#o1" x="317.4" y="583.3"/>
<use href="#h1" x="332.9" y="583.2"/>
<path class="bd" d="M516.1 422.8L511.6 406.6L504.4 408"/><path class="bw1" d="M516.1 422.8L511.6 406.6L504.4 408"/><path class="br1" d="M513.9 414.7L511.6 406.6L508 407.3"/>
<use href="#h1" x="516.1" y="422.8"/>
<use href="#o1" x="511.6" y="406.6"/>
<use href="#h1" x="504.4" y="408"/>
<path class="bd" d="M599.3 343.1L582.2 344.9L578.6 360.9"/><path class="bw1" d="M599.3 343.1L582.2 344.9L578.6 360.9"/><path class="br1" d="M590.8 344L582.2 344.9L580.4 352.9"/>
<use href="#h1" x="578.6" y="360.9"/>
<use href="#h1" x="599.3" y="343.1"/>
<use href="#o1" x="582.2" y="344.9"/>
<path class="bd" d="M285.3 375.8L299.3 366.1L312.5 377.4"/><path class="bw1" d="M285.3 375.8L299.3 366.1L312.5 377.4"/><path class="br1" d="M292.3 370.9L299.3 366.1L305.9 371.7"/>
<use href="#h1" x="285.3" y="375.8"/>
<use href="#o1" x="299.3" y="366.1"/>
<use href="#h1" x="312.5" y="377.4"/>
<path class="bd" d="M543.8 266.7L550.9 281.8L560.9 277.7"/><path class="bw1" d="M543.8 266.7L550.9 281.8L560.9 277.7"/><path class="br1" d="M547.4 274.2L550.9 281.8L555.9 279.7"/>
<use href="#h1" x="560.9" y="277.7"/>
<use href="#o1" x="550.9" y="281.8"/>
<use href="#h1" x="543.8" y="266.7"/>
<path class="bd" d="M245.8 558.7L254 571.6L253.7 566.9"/><path class="bw1" d="M245.8 558.7L254 571.6L253.7 566.9"/><path class="br1" d="M249.9 565.2L254 571.6L253.8 569.3"/>
<use href="#h1" x="245.8" y="558.7"/>
<use href="#o1" x="254" y="571.6"/>
<use href="#h1" x="253.7" y="566.9"/>
<path class="bd" d="M468.7 565.7L474.9 556.5L478.1 540.8"/><path class="bw1" d="M468.7 565.7L474.9 556.5L478.1 540.8"/><path class="br1" d="M471.8 561.1L474.9 556.5L476.5 548.6"/>
<use href="#o1" x="474.9" y="556.5"/>
<use href="#h1" x="478.1" y="540.8"/>
<use href="#h1" x="468.7" y="565.7"/>
<path class="bd" d="M250.5 389.8L263.2 400.1L262.2 398.5"/><path class="bw1" d="M250.5 389.8L263.2 400.1L262.2 398.5"/><path class="br1" d="M256.9 395L263.2 400.1L262.7 399.3"/>
<use href="#h1" x="250.5" y="389.8"/>
<use href="#o1" x="263.2" y="400.1"/>
<use href="#h1" x="262.2" y="398.5"/>
<path class="bd" d="M427.5 368.8L413.6 370.2L403 381.2"/><path class="bw1" d="M427.5 368.8L413.6 370.2L403 381.2"/><path class="br1" d="M420.6 369.5L413.6 370.2L408.3 375.7"/>
<use href="#o1" x="413.6" y="370.2"/>
<use href="#h1" x="403" y="381.2"/>
<use href="#h1" x="427.5" y="368.8"/>
<path class="bd" d="M551.4 641.2L541.3 631.1L536.9 617.8"/><path class="bw1" d="M551.4 641.2L541.3 631.1L536.9 617.8"/><path class="br1" d="M546.4 636.2L541.3 631.1L539.1 624.5"/>
<use href="#o1" x="541.3" y="631.1"/>
<use href="#h1" x="551.4" y="641.2"/>
<use href="#h1" x="536.9" y="617.8"/>
<path class="bd" d="M342.6 615.9L326.6 620.3L328 637.1"/><path class="bw1" d="M342.6 615.9L326.6 620.3L328 637.1"/><path class="br1" d="M334.6 618.1L326.6 620.3L327.3 628.7"/>
<use href="#h1" x="342.6" y="615.9"/>
<use href="#o1" x="326.6" y="620.3"/>
<use href="#h1" x="328" y="637.1"/>
<path class="bd" d="M258.3 318.2L242.8 325L232.2 311.3"/><path class="bw1" d="M258.3 318.2L242.8 325L232.2 311.3"/><path class="br1" d="M250.5 321.6L242.8 325L237.5 318.2"/>
<use href="#h1" x="258.3" y="318.2"/>
<use href="#o1" x="242.8" y="325"/>
<use href="#h1" x="232.2" y="311.3"/>
<path class="bd" d="M479 637.6L492.4 634.8L485.2 634.2"/><path class="bw1" d="M479 637.6L492.4 634.8L485.2 634.2"/><path class="br1" d="M485.7 636.2L492.4 634.8L488.8 634.5"/>
<use href="#h1" x="485.2" y="634.2"/>
<use href="#o1" x="492.4" y="634.8"/>
<use href="#h1" x="479" y="637.6"/>
<path class="bd" d="M428.5 677.5L443.8 685L442.7 689.2"/><path class="bw1" d="M428.5 677.5L443.8 685L442.7 689.2"/><path class="br1" d="M436.1 681.3L443.8 685L443.3 687.1"/>
<use href="#h1" x="442.7" y="689.2"/>
<use href="#o1" x="443.8" y="685"/>
<use href="#h1" x="428.5" y="677.5"/>
<path class="bd" d="M680.1 667L683.3 650.5L683.2 651.2"/><path class="bw1" d="M680.1 667L683.3 650.5L683.2 651.2"/><path class="br1" d="M681.7 658.7L683.3 650.5L683.3 650.8"/>
<use href="#h1" x="683.2" y="651.2"/>
<use href="#o1" x="683.3" y="650.5"/>
<use href="#h1" x="680.1" y="667"/>
<path class="bd" d="M619.2 335.6L627 338.5L643.9 335.8"/><path class="bw1" d="M619.2 335.6L627 338.5L643.9 335.8"/><path class="br1" d="M623.1 337L627 338.5L635.5 337.1"/>
<use href="#h1" x="619.2" y="335.6"/>
<use href="#h1" x="643.9" y="335.8"/>
<use href="#o1" x="627" y="338.5"/>
<path class="bd" d="M619.4 440.1L616.4 444.9L599.1 443.7"/><path class="bw1" d="M619.4 440.1L616.4 444.9L599.1 443.7"/><path class="br1" d="M617.9 442.5L616.4 444.9L607.8 444.3"/>
<use href="#h1" x="599.1" y="443.7"/>
<use href="#o1" x="616.4" y="444.9"/>
<use href="#h1" x="619.4" y="440.1"/>
<path class="bd" d="M282 525.2L295.5 527.9L309 530.8"/><path class="bw1" d="M282 525.2L295.5 527.9L309 530.8"/><path class="br1" d="M288.7 526.6L295.5 527.9L302.3 529.4"/>
<use href="#o1" x="295.5" y="527.9"/>
<use href="#h1" x="309" y="530.8"/>
<use href="#h1" x="282" y="525.2"/>
<path class="bd" d="M470.9 698.1L486.1 695.4L483 699.6"/><path class="bw1" d="M470.9 698.1L486.1 695.4L483 699.6"/><path class="br1" d="M478.5 696.7L486.1 695.4L484.6 697.5"/>
<use href="#h1" x="483" y="699.6"/>
<use href="#o1" x="486.1" y="695.4"/>
<use href="#h1" x="470.9" y="698.1"/>
<path class="bd" d="M366.2 407.2L380.6 406.2L382 422"/><path class="bw1" d="M366.2 407.2L380.6 406.2L382 422"/><path class="br1" d="M373.4 406.7L380.6 406.2L381.3 414.1"/>
<use href="#h1" x="382" y="422"/>
<use href="#o1" x="380.6" y="406.2"/>
<use href="#h1" x="366.2" y="407.2"/>
<path class="bd" d="M291.2 643.1L274.1 639.7L267.2 644.6"/><path class="bw1" d="M291.2 643.1L274.1 639.7L267.2 644.6"/><path class="br1" d="M282.7 641.4L274.1 639.7L270.7 642.1"/>
<use href="#h1" x="267.2" y="644.6"/>
<use href="#h1" x="291.2" y="643.1"/>
<use href="#o1" x="274.1" y="639.7"/>
<path class="bd" d="M465.1 520.4L476.7 507.4L484.4 508.8"/><path class="bw1" d="M465.1 520.4L476.7 507.4L484.4 508.8"/><path class="br1" d="M470.9 513.9L476.7 507.4L480.5 508.1"/>
<use href="#h1" x="465.1" y="520.4"/>
<use href="#o1" x="476.7" y="507.4"/>
<use href="#h1" x="484.4" y="508.8"/>
<path class="bd" d="M558 601.2L574.5 604.3L572.9 615.2"/><path class="bw1" d="M558 601.2L574.5 604.3L572.9 615.2"/><path class="br1" d="M566.3 602.8L574.5 604.3L573.7 609.7"/>
<use href="#h1" x="558" y="601.2"/>
<use href="#o1" x="574.5" y="604.3"/>
<use href="#h1" x="572.9" y="615.2"/>
<path class="bd" d="M437.9 532L440.1 524L423.9 519.5"/><path class="bw1" d="M437.9 532L440.1 524L423.9 519.5"/><path class="br1" d="M439 528L440.1 524L432 521.8"/>
<use href="#h1" x="437.9" y="532"/>
<use href="#o1" x="440.1" y="524"/>
<use href="#h1" x="423.9" y="519.5"/>
<path class="bd" d="M399.7 689.6L384.7 691.5L372.3 689.5"/><path class="bw1" d="M399.7 689.6L384.7 691.5L372.3 689.5"/><path class="br1" d="M392.2 690.6L384.7 691.5L378.5 690.5"/>
<use href="#h1" x="372.3" y="689.5"/>
<use href="#h1" x="399.7" y="689.6"/>
<use href="#o1" x="384.7" y="691.5"/>
<path class="bd" d="M667.1 564.8L672 579.8L676.4 575.2"/><path class="bw1" d="M667.1 564.8L672 579.8L676.4 575.2"/><path class="br1" d="M669.6 572.3L672 579.8L674.2 577.5"/>
<use href="#h1" x="676.4" y="575.2"/>
<use href="#o1" x="672" y="579.8"/>
<use href="#h1" x="667.1" y="564.8"/>
<path class="bd" d="M294.2 681.6L284.7 695.3L285.9 706.8"/><path class="bw1" d="M294.2 681.6L284.7 695.3L285.9 706.8"/><path class="br1" d="M289.5 688.5L284.7 695.3L285.3 701.1"/>
<use href="#h1" x="285.9" y="706.8"/>
<use href="#h1" x="294.2" y="681.6"/>
<use href="#o1" x="284.7" y="695.3"/>
</g></svg>
<div class="tb" style="left:4px;top:5px;width:175px;height:32px;"></div>
<div class="" style="left:4px;top:5px;width:79px;height:32px;background:#415a7a;border-radius:4px 0 0 4px"></div>
<div class="tb" style="left:4px;top:43px;width:32px;height:416px;"></div>
<div class="" style="left:4px;top:75px;width:32px;height:32px;background:#52677f"></div>
<div class="tb" style="left:619px;top:5px;width:372px;height:32px;"></div>
<div class="in" style="left:710px;top:10px;width:214px;height:22px;"></div>
<div class="tb" style="left:959px;top:43px;width:32px;height:224px;"></div>
<div class="tb" style="left:281px;top:894px;width:434px;height:32px;border-radius:4px 4px 2px 2px"></div>
<div class="" style="left:591px;top:894px;width:31px;height:32px;background:#52677f"></div>
<span class="t b" style="left:38.8px;top:13.6px;font-size:12.5px;transform:scaleX(0.9635);">Select</span>
<span class="t " style="left:624.0px;top:14.4px;font-size:12.5px;transform:scaleX(0.9527);">Selection filter</span>
<span class="t dk" style="left:734.4px;top:14.4px;font-size:12.5px;transform:scaleX(0.9578);">Any node</span>
</div>
<div id="split" class="abs"></div>
<div id="panelbg" class="abs" style="left:1002px;top:0;width:608px;height:928px;background:#313e51"></div>
<div class="abs" style="left:0;top:0;width:1610px;height:928px">
<div class="" style="left:1001px;top:0px;width:609px;height:30px;background:#415a79"></div>
<span class="t b" style="left:1040.0px;top:7.8px;font-size:13px;transform:scaleX(0.9307);">OpenMM Wizard</span>
<div class="gb" style="left:1015px;top:54px;width:583px;height:277px;"></div>
<div class="lbl" style="left:1014.2px;top:44px;width:75.40000000000009px;height:16px;"></div>
<div class="lbl" style="left:1014px;top:54px;width:4px;height:8.600000000000001px;"></div>
<span class="t " style="left:1016.2px;top:44.0px;transform:scaleX(0.9907);">Input system</span>
<div class="gb" style="left:1015px;top:352px;width:583px;height:270px;"></div>
<div class="lbl" style="left:1014.2px;top:341.6px;width:96.5px;height:16.0px;"></div>
<div class="lbl" style="left:1014px;top:352px;width:4px;height:8.600000000000023px;"></div>
<span class="t " style="left:1016.2px;top:341.6px;transform:scaleX(0.9975);">Setup simulation</span>
<div class="gb" style="left:1015px;top:643px;width:583px;height:275px;"></div>
<div class="lbl" style="left:1014.2px;top:633.3px;width:87.29999999999995px;height:16.0px;"></div>
<div class="lbl" style="left:1014px;top:643px;width:4px;height:8.600000000000023px;"></div>
<span class="t " style="left:1016.2px;top:633.3px;transform:scaleX(0.9991);">Run simulation</span>
<div class="in" style="left:1026px;top:65px;width:561px;height:26px;"></div>
<span class="t dk" style="left:1030.4px;top:70.5px;transform:scaleX(1.0044);">Amber</span>
<svg style="left:1562.5px;top:73.0px" width="12" height="11" viewBox="0 0 12 11"><path d="M0 0H12L6.0 11Z" fill="#4d7cb1"/></svg>
<div class="gb" style="left:1026px;top:112px;width:561px;height:48px;"></div>
<div class="lbl" style="left:1025.4px;top:101.8px;width:124.59999999999991px;height:16.0px;"></div>
<div class="lbl" style="left:1025px;top:112px;width:4px;height:8.599999999999994px;"></div>
<span class="t " style="left:1027.4px;top:101.8px;transform:scaleX(0.9382);">Choose a PRMTOP file</span>
<div class="in" style="left:1037px;top:123px;width:478px;height:26px;"></div>
<span class="t dk" style="left:1043.1px;top:128.7px;transform:scaleX(1.0411);">D:/Samples/OpenMM/Amber/input.prmtop</span>
<div class="btn" style="left:1521px;top:124px;width:55px;height:24px;"></div>
<span class="t " style="left:1525.2px;top:128.7px;transform:scaleX(0.9317);">Browse...</span>
<div class="gb" style="left:1026px;top:181px;width:561px;height:48px;"></div>
<div class="lbl" style="left:1025.4px;top:170.8px;width:120.79999999999995px;height:16.0px;"></div>
<div class="lbl" style="left:1025px;top:181px;width:4px;height:8.599999999999994px;"></div>
<span class="t " style="left:1027.4px;top:170.8px;transform:scaleX(0.9448);">Choose a INPCRD file</span>
<div class="in" style="left:1037px;top:192px;width:478px;height:26px;"></div>
<span class="t dk" style="left:1043.1px;top:197.7px;transform:scaleX(1.0367);">D:/Samples/OpenMM/Amber/input.inpcrd</span>
<div class="btn" style="left:1521px;top:193px;width:55px;height:24px;"></div>
<span class="t " style="left:1525.2px;top:197.7px;transform:scaleX(0.9317);">Browse...</span>
<span class="t " style="left:1025.8px;top:368.6px;transform:scaleX(0.9745);">Statistical ensemble</span>
<div class="in" style="left:1136px;top:363px;width:451px;height:26px;"></div>
<span class="t dk" style="left:1140.2px;top:368.6px;transform:scaleX(0.9705);">Constant pressure, temperature (NPT)</span>
<svg style="left:1562.5px;top:371.0px" width="12" height="11" viewBox="0 0 12 11"><path d="M0 0H12L6.0 11Z" fill="#4d7cb1"/></svg>
<span class="t " style="left:1025.8px;top:400.6px;transform:scaleX(0.9826);">Temperature</span>
<div class="in" style="left:1136px;top:395px;width:451px;height:26px;"></div>
<span class="t dk" style="left:1517.1px;top:400.6px;transform:scaleX(0.8908);">300.00 K</span>
<div style="left:1568px;top:395px;width:19px;height:26px;background:#fff"></div><div style="left:1568px;top:396px;width:18px;height:24px;background:#4d7cb1;border-radius:1px"></div><svg style="left:1574.3px;top:400px" width="6" height="16" viewBox="0 0 6 16"><path d="M0 5.4L3 0L6 5.4Z M0.5 11.3L3 16L5.5 11.3Z" fill="#dfe9f5"/></svg>
<span class="t " style="left:1025.8px;top:432.6px;transform:scaleX(0.9117);">Step size</span>
<div class="in" style="left:1136px;top:427px;width:451px;height:26px;"></div>
<span class="t dk" style="left:1526.8px;top:432.6px;transform:scaleX(0.9186);">2.00 fs</span>
<div style="left:1568px;top:427px;width:19px;height:26px;background:#fff"></div><div style="left:1568px;top:428px;width:18px;height:24px;background:#4d7cb1;border-radius:1px"></div><svg style="left:1574.3px;top:432px" width="6" height="16" viewBox="0 0 6 16"><path d="M0 5.4L3 0L6 5.4Z M0.5 11.3L3 16L5.5 11.3Z" fill="#dfe9f5"/></svg>
<span class="t " style="left:1025.8px;top:464.6px;transform:scaleX(1.0149);">Equilibration length</span>
<div class="in" style="left:1136px;top:459px;width:190px;height:26px;"></div>
<span class="t dk" style="left:1254.2px;top:464.6px;transform:scaleX(0.8909);">0.002000</span>
<div style="left:1307px;top:459px;width:19px;height:26px;background:#fff"></div><div style="left:1307px;top:460px;width:18px;height:24px;background:#4d7cb1;border-radius:1px"></div><svg style="left:1313.3px;top:464px" width="6" height="16" viewBox="0 0 6 16"><path d="M0 5.4L3 0L6 5.4Z M0.5 11.3L3 16L5.5 11.3Z" fill="#dfe9f5"/></svg>
<div class="in" style="left:1332px;top:459px;width:60px;height:26px;"></div>
<span class="t dk" style="left:1336.2px;top:464.6px;transform:scaleX(0.9458);">ns</span>
<svg style="left:1368.0px;top:467.0px" width="12" height="11" viewBox="0 0 12 11"><path d="M0 0H12L6.0 11Z" fill="#4d7cb1"/></svg>
<span class="t " style="left:1401.2px;top:464.6px;transform:scaleX(0.9368);">= 1000 steps</span>
<span class="t " style="left:1025.8px;top:496.6px;transform:scaleX(1.0167);">Simulation length</span>
<div class="in" style="left:1136px;top:491px;width:190px;height:26px;"></div>
<span class="t dk" style="left:1254.2px;top:496.6px;transform:scaleX(0.8909);">0.100000</span>
<div style="left:1307px;top:491px;width:19px;height:26px;background:#fff"></div><div style="left:1307px;top:492px;width:18px;height:24px;background:#4d7cb1;border-radius:1px"></div><svg style="left:1313.3px;top:496px" width="6" height="16" viewBox="0 0 6 16"><path d="M0 5.4L3 0L6 5.4Z M0.5 11.3L3 16L5.5 11.3Z" fill="#dfe9f5"/></svg>
<div class="in" style="left:1332px;top:491px;width:60px;height:26px;"></div>
<span class="t dk" style="left:1336.2px;top:496.6px;transform:scaleX(0.9458);">ns</span>
<svg style="left:1368.0px;top:499.0px" width="12" height="11" viewBox="0 0 12 11"><path d="M0 0H12L6.0 11Z" fill="#4d7cb1"/></svg>
<span class="t " style="left:1401.2px;top:496.6px;transform:scaleX(0.9309);">= 50000 steps</span>
<span class="t " style="left:1025.8px;top:528.6px;transform:scaleX(1.0055);">Trajectory output</span>
<div class="in" style="left:1136px;top:523px;width:190px;height:26px;"></div>
<span class="t dk" style="left:1254.2px;top:528.6px;transform:scaleX(0.8909);">0.020000</span>
<div style="left:1307px;top:523px;width:19px;height:26px;background:#fff"></div><div style="left:1307px;top:524px;width:18px;height:24px;background:#4d7cb1;border-radius:1px"></div><svg style="left:1313.3px;top:528px" width="6" height="16" viewBox="0 0 6 16"><path d="M0 5.4L3 0L6 5.4Z M0.5 11.3L3 16L5.5 11.3Z" fill="#dfe9f5"/></svg>
<div class="in" style="left:1332px;top:523px;width:60px;height:26px;"></div>
<span class="t dk" style="left:1336.2px;top:528.6px;transform:scaleX(0.9458);">ns</span>
<svg style="left:1368.0px;top:531.0px" width="12" height="11" viewBox="0 0 12 11"><path d="M0 0H12L6.0 11Z" fill="#4d7cb1"/></svg>
<span class="t " style="left:1401.2px;top:528.6px;transform:scaleX(0.9309);">= 10000 steps</span>
<span class="t " style="left:1025.8px;top:560.6px;transform:scaleX(1.0186);">Data output</span>
<div class="in" style="left:1136px;top:555px;width:190px;height:26px;"></div>
<span class="t dk" style="left:1254.2px;top:560.6px;transform:scaleX(0.8909);">0.002000</span>
<div style="left:1307px;top:555px;width:19px;height:26px;background:#fff"></div><div style="left:1307px;top:556px;width:18px;height:24px;background:#4d7cb1;border-radius:1px"></div><svg style="left:1313.3px;top:560px" width="6" height="16" viewBox="0 0 6 16"><path d="M0 5.4L3 0L6 5.4Z M0.5 11.3L3 16L5.5 11.3Z" fill="#dfe9f5"/></svg>
<div class="in" style="left:1332px;top:555px;width:60px;height:26px;"></div>
<span class="t dk" style="left:1336.2px;top:560.6px;transform:scaleX(0.9458);">ns</span>
<svg style="left:1368.0px;top:563.0px" width="12" height="11" viewBox="0 0 12 11"><path d="M0 0H12L6.0 11Z" fill="#4d7cb1"/></svg>
<span class="t " style="left:1401.2px;top:560.6px;transform:scaleX(0.9368);">= 1000 steps</span>
<div class="btn" style="left:1026px;top:587px;width:278px;height:24px;"></div>
<span class="t " style="left:1076.3px;top:591.5px;transform:scaleX(0.9878);">Advanced OpenMM parameters...</span>
<div class="btn" style="left:1310px;top:587px;width:277px;height:24px;"></div>
<span class="t " style="left:1390.5px;top:591.5px;transform:scaleX(0.9896);">Show OpenMM Script</span>
<div class="gb" style="left:1026px;top:669px;width:561px;height:48px;"></div>
<div class="lbl" style="left:1025.4px;top:658.6px;width:167.4000000000001px;height:16.0px;"></div>
<div class="lbl" style="left:1025px;top:669px;width:4px;height:8.600000000000023px;"></div>
<span class="t " style="left:1027.4px;top:658.6px;transform:scaleX(0.9636);">Choose a folder to save results</span>
<div class="in" style="left:1037px;top:680px;width:478px;height:26px;"></div>
<span class="t dk" style="left:1043.1px;top:685.6px;transform:scaleX(1.0092);">D:/Samples/OpenMM/results</span>
<div class="btn" style="left:1521px;top:681px;width:55px;height:24px;"></div>
<span class="t " style="left:1525.2px;top:685.6px;transform:scaleX(0.9317);">Browse...</span>
<div class="btn" style="left:1026px;top:723px;width:136px;height:24px;"></div>
<span class="t " style="left:1083.2px;top:727.5px;transform:scaleX(0.9266);">Run</span>
<div class="btn dis" style="left:1168px;top:723px;width:136px;height:24px;"></div>
<span class="t dis" style="left:1224.1px;top:727.5px;transform:scaleX(0.9519);">Stop</span>
<div class="btn" style="left:1310px;top:723px;width:135px;height:24px;"></div>
<span class="t " style="left:1346.2px;top:727.5px;transform:scaleX(0.9606);">Load results</span>
<div class="btn" style="left:1451px;top:723px;width:136px;height:24px;"></div>
<span class="t " style="left:1469.4px;top:727.5px;transform:scaleX(0.9833);">Open results folder</span>
<div class="in" style="left:1026px;top:753px;width:561px;height:154px;"></div>
<span class="t dk" style="left:1034.0px;top:757.6px;transform:scaleX(0.9109);">90.0%</span>
<span class="t dk" style="left:1113.6px;top:757.6px;transform:scaleX(0.8989);">45000</span>
<span class="t dk" style="left:1193.7px;top:757.6px;transform:scaleX(0.8953);">91.99999999996699</span>
<span class="t dk" style="left:1354.3px;top:757.6px;transform:scaleX(0.9069);">-24254.40619934327</span>
<span class="t dk" style="left:1514.0px;top:757.6px;transform:scaleX(0.8986);">699</span>
<span class="t dk" style="left:1034.0px;top:773.6px;transform:scaleX(0.9109);">92.0%</span>
<span class="t dk" style="left:1113.6px;top:773.6px;transform:scaleX(0.8989);">46000</span>
<span class="t dk" style="left:1193.7px;top:773.6px;transform:scaleX(0.8953);">93.99999999996233</span>
<span class="t dk" style="left:1354.3px;top:773.6px;transform:scaleX(0.9065);">-24594.373066742613</span>
<span class="t dk" style="left:1514.0px;top:773.6px;transform:scaleX(0.8986);">699</span>
<span class="t dk" style="left:1034.0px;top:789.6px;transform:scaleX(0.9109);">94.0%</span>
<span class="t dk" style="left:1113.6px;top:789.6px;transform:scaleX(0.8989);">47000</span>
<span class="t dk" style="left:1193.7px;top:789.6px;transform:scaleX(0.8953);">95.99999999995767</span>
<span class="t dk" style="left:1354.3px;top:789.6px;transform:scaleX(0.9151);">-24699.7119348447</span>
<span class="t dk" style="left:1514.0px;top:789.6px;transform:scaleX(0.8986);">699</span>
<span class="t dk" style="left:1034.0px;top:805.6px;transform:scaleX(0.9109);">96.0%</span>
<span class="t dk" style="left:1113.6px;top:805.6px;transform:scaleX(0.8989);">48000</span>
<span class="t dk" style="left:1193.7px;top:805.6px;transform:scaleX(0.8948);">97.999999999953</span>
<span class="t dk" style="left:1354.3px;top:805.6px;transform:scaleX(0.9065);">-24613.329997170134</span>
<span class="t dk" style="left:1514.0px;top:805.6px;transform:scaleX(0.8986);">699</span>
<span class="t dk" style="left:1034.0px;top:821.6px;transform:scaleX(0.9109);">98.0%</span>
<span class="t dk" style="left:1113.6px;top:821.6px;transform:scaleX(0.8989);">49000</span>
<span class="t dk" style="left:1193.7px;top:821.6px;transform:scaleX(0.8953);">99.99999999994834</span>
<span class="t dk" style="left:1354.3px;top:821.6px;transform:scaleX(0.9069);">-24432.34519165184</span>
<span class="t dk" style="left:1514.0px;top:821.6px;transform:scaleX(0.8986);">699</span>
<span class="t dk" style="left:1034.0px;top:837.6px;transform:scaleX(0.9090);">100.0%</span>
<span class="t dk" style="left:1113.6px;top:837.6px;transform:scaleX(0.8989);">50000</span>
<span class="t dk" style="left:1193.7px;top:837.6px;transform:scaleX(0.8956);">101.99999999994368</span>
<span class="t dk" style="left:1354.3px;top:837.6px;transform:scaleX(0.9069);">-24889.16427773077</span>
<span class="t dk" style="left:1514.0px;top:837.6px;transform:scaleX(0.8986);">699</span>
<span class="t dk" style="left:1033.9px;top:869.6px;transform:scaleX(0.9739);">Finished successfully.</span>
<span class="t dk" style="left:1033.9px;top:885.6px;transform:scaleX(0.9890);">Results were saved into: D:/Samples/OpenMM/results/openmm-2024-12-18-10h15m27s</span>
<div class="" style="left:1576px;top:866px;width:4px;height:30px;background:#4f7db2"></div>
</div>
<svg class="abs" style="left:0;top:0" width="1610" height="928" viewBox="0 0 1610 928"><defs><radialGradient id="sB" cx=".5" cy=".5" r=".5" fx=".4" fy=".3"><stop offset="0" stop-color="#eef6ff"/><stop offset=".55" stop-color="#b4d2f2"/><stop offset="1" stop-color="#7fa6d4"/></radialGradient><radialGradient id="sD" cx=".5" cy=".5" r=".5" fx=".45" fy=".25"><stop offset="0" stop-color="#7f98b6"/><stop offset="1" stop-color="#56708f"/></radialGradient><linearGradient id="selr" x1="0" y1="0" x2="0" y2="1"><stop offset="0" stop-color="#cfe1f6"/><stop offset="1" stop-color="#a3c5ec"/></linearGradient><linearGradient id="lens" x1="0" y1="0" x2="1" y2="1"><stop offset="0" stop-color="#c4daf4"/><stop offset="1" stop-color="#8fb6e4"/></linearGradient><linearGradient id="bgsq" x1="0" y1="0" x2="0" y2="1"><stop offset="0" stop-color="#5b7696"/><stop offset="1" stop-color="#8eb6e3"/></linearGradient><linearGradient id="stick" x1="0" y1="0" x2="1" y2="0"><stop offset="0" stop-color="#8db4e0"/><stop offset=".5" stop-color="#c6def6"/><stop offset="1" stop-color="#8db4e0"/></linearGradient></defs><rect x="12.4" y="11.2" width="11" height="9.6" fill="url(#selr)" stroke="#dbe8f8" stroke-width=".6"/><path d="M23.9 20.6L23.9 31.2L26.6 28.8L29.1 33.7L30.9 32.7L28.5 28.1L32.2 28.1Z" fill="#fff" stroke="#26313f" stroke-width=".9" stroke-linejoin="round" transform="rotate(-20 23.9 20.6)"/><path d="M95.7 9.7H89.7Q87.7 9.7 87.7 11.7V17.7M102.5 9.7H108.5Q110.5 9.7 110.5 11.7V17.7M95.7 32.5H89.7Q87.7 32.5 87.7 30.5V24.5M102.5 32.5H108.5Q110.5 32.5 110.5 30.5V24.5" fill="none" stroke="#56708f" stroke-width="1.3"/><circle cx="95" cy="16.2" r="3.9" fill="url(#sD)" stroke="#46607f" stroke-width="0.5" opacity="1"/><circle cx="103.2" cy="20.8" r="3.9" fill="url(#sD)" stroke="#46607f" stroke-width="0.5" opacity="1"/><circle cx="95.3" cy="26.2" r="3.9" fill="url(#sD)" stroke="#46607f" stroke-width="0.5" opacity="1"/><g opacity="1"><path d="M95.8 25.9Q102 18.13 108.2 25.9Q102 33.67 95.8 25.9Z" fill="#8d9bab"/><circle cx="102" cy="25.9" r="2.89" fill="#344458"/><circle cx="102" cy="25.9" r="1.22" fill="#8d9bab"/></g><path d="M127.7 9.7H121.7Q119.7 9.7 119.7 11.7V17.7M134.5 9.7H140.5Q142.5 9.7 142.5 11.7V17.7M127.7 32.5H121.7Q119.7 32.5 119.7 30.5V24.5M134.5 32.5H140.5Q142.5 32.5 142.5 30.5V24.5" fill="none" stroke="#56708f" stroke-width="1.3"/><circle cx="127" cy="16.2" r="3.9" fill="url(#sD)" stroke="#46607f" stroke-width="0.5" opacity="1"/><circle cx="135.2" cy="20.8" r="3.9" fill="url(#sD)" stroke="#46607f" stroke-width="0.5" opacity="1"/><circle cx="127.3" cy="26.2" r="3.9" fill="url(#sD)" stroke="#46607f" stroke-width="0.5" opacity="1"/><g opacity="1"><path d="M127.8 25.9Q134 18.13 140.2 25.9Q134 33.67 127.8 25.9Z" fill="#8d9bab"/><circle cx="134" cy="25.9" r="2.89" fill="#344458"/><circle cx="134" cy="25.9" r="1.22" fill="#8d9bab"/></g><g fill="none" stroke-linecap="round" stroke-linejoin="round"><path d="M153.0 13.3L156.0 15.3L152.5 17.8L156.5 19.8L152.5 22.3L156.5 24.3L152.5 26.8L156.0 29.3" stroke="#8fb0d4" stroke-width="3.4"/><path d="M153.0 13.3L156.0 15.3L152.5 17.8L156.5 19.8L152.5 22.3L156.5 24.3L152.5 26.8L156.0 29.3" stroke="#cfe2f6" stroke-width="1.8"/><path d="M154.0 12.8L163.0 12.3" stroke="#cfe2f6" stroke-width="1"/><path d="M163.0 11.3L166.0 14.3L164.0 16.8L169.0 15.3L168.0 19.3L170.5 18.8" stroke="#8fb0d4" stroke-width="3.4"/><path d="M163.0 11.3L166.0 14.3L164.0 16.8L169.0 15.3L168.0 19.3L170.5 18.8" stroke="#cfe2f6" stroke-width="1.8"/><path d="M169.5 19.8Q169.0 24.3 165.5 26.3Q167.0 30.3 171.0 31.3" stroke="#cfe2f6" stroke-width="1.2"/></g><path d="M170.7 27.1H175.7L173.2 30.1Z" fill="#fff"/><path d="M19.9 49.4L22.5 55.7L29.3 56.2L24.2 60.7L25.7 67.3L19.9 63.8L14.1 67.3L15.6 60.7L10.5 56.2L17.3 55.7Z" fill="#e1cf2a" stroke="#8f8414" stroke-width=".7" stroke-linejoin="round"/><path d="M26.9 66.1H31.9L29.4 69.1Z" fill="#fff"/><rect x="10" y="80.8" width="11.5" height="9.6" fill="url(#selr)" stroke="#dbe8f8" stroke-width=".6"/><path d="M22.2 91.0L22.2 102.3L25.0 99.7L27.7 104.9L29.6 103.9L27.1 98.9L31.0 98.9Z" fill="#fff" stroke="#26313f" stroke-width=".9" stroke-linejoin="round" transform="rotate(-20 22.2 91)"/><g stroke="#cfe2f6" stroke-width="1.5" fill="none"><path d="M10.8 115.8L19.4 119.2L27.8 114.4M19.4 119.2L14 128.4"/></g><circle cx="10.8" cy="115.8" r="2.7" fill="url(#sB)" stroke="#3a5578" stroke-width="0.7" opacity="1"/><circle cx="27.8" cy="114.4" r="2.7" fill="url(#sB)" stroke="#3a5578" stroke-width="0.7" opacity="1"/><circle cx="19.4" cy="119.2" r="3.4" fill="url(#sB)" stroke="#3a5578" stroke-width="0.7" opacity="1"/><circle cx="14" cy="128.4" r="4.8" fill="url(#sB)" stroke="#3a5578" stroke-width="0.7" opacity="1"/><path d="M21.6 128.4H31M26.3 123.7V133.1" stroke="#26313f" stroke-width="3.6"/><path d="M21.6 128.4H31M26.3 123.7V133.1" stroke="#fff" stroke-width="2.2"/><circle cx="11.9" cy="161.6" r="3.4" fill="#4d5e76" stroke="#26313f" stroke-width=".7"/><circle cx="16.9" cy="147.2" r="3.2" fill="#465569" stroke="#26313f" stroke-width=".7"/><path d="M12.200000000000001 160.4L16.599999999999998 148.4" stroke="#26313f" stroke-width="4.8"/><path d="M12.200000000000001 160.4L16.599999999999998 148.4" stroke="#a9cbf0" stroke-width="3.4"/><circle cx="22.6" cy="161.6" r="3.4" fill="#4d5e76" stroke="#26313f" stroke-width=".7"/><circle cx="28" cy="147.2" r="3.2" fill="#465569" stroke="#26313f" stroke-width=".7"/><path d="M22.900000000000002 160.4L27.7 148.4" stroke="#26313f" stroke-width="4.8"/><path d="M22.900000000000002 160.4L27.7 148.4" stroke="#a9cbf0" stroke-width="3.4"/><path d="M22.9 160.4L27.7 148.4" stroke="#4a6a96" stroke-width="1"/><text x="15.8" y="185.2" font-family="Liberation Sans,sans-serif" font-weight="bold" font-size="12.4" fill="#f2f6fb">2</text><path d="M24.6 181.2H31M27.8 178V184.4" stroke="#f2f6fb" stroke-width="1.3"/><circle cx="14.3" cy="192.9" r="5.2" fill="url(#sB)" stroke="#3a5578" stroke-width="0.7" opacity="1"/><path d="M10.0 216.0L10.0 228.4L13.1 225.6L16.0 231.3L18.2 230.3L15.4 224.7L19.7 224.7Z" fill="#fff" stroke="#26313f" stroke-width=".9" stroke-linejoin="round" transform="rotate(-20 10 216)"/><g stroke="#f2f6fb" stroke-width="1.2" fill="#f2f6fb"><path d="M24.2 211.5V221.5M19.2 216.5H29.2"/></g><path d="M24.2 209.6l1.9 2.4h-3.8zM24.2 223.4l1.9-2.4h-3.8zM17.3 216.5l2.4-1.9v3.8zM31.1 216.5l-2.4-1.9v3.8z" fill="#f2f6fb"/><circle cx="24.2" cy="216.5" r="1.6" fill="#2f3d51"/><circle cx="19.9" cy="252.2" r="9.4" fill="none" stroke="#a9cbf0" stroke-width="1.1"/><g stroke="#a9cbf0" stroke-width="1.5" stroke-linecap="round" fill="none"><path d="M19.9 252.7V245.7M19.9 252.7L14.099999999999998 255.79999999999998M19.9 252.7L25.7 255.79999999999998"/></g><g stroke="#a9cbf0" stroke-width=".9" fill="none" opacity=".85"><path d="M16.299999999999997 246.2A7 7 0 0 0 12.899999999999999 252.7M23.5 246.2A7 7 0 0 1 26.9 252.7M15.499999999999998 258.2H24.299999999999997"/></g><circle cx="19.9" cy="284.3" r="9.4" fill="none" stroke="#a9cbf0" stroke-width="1.1"/><g stroke="#a9cbf0" stroke-width="1.5" stroke-linecap="round" fill="none"><path d="M19.9 284.8V277.8M19.9 284.8L14.099999999999998 287.90000000000003M19.9 284.8L25.7 287.90000000000003"/></g><g stroke="#a9cbf0" stroke-width=".9" fill="none" opacity=".85"><path d="M16.299999999999997 278.3A7 7 0 0 0 12.899999999999999 284.8M23.5 278.3A7 7 0 0 1 26.9 284.8M15.499999999999998 290.3H24.299999999999997"/></g><text x="6.8" y="274.4" font-family="Liberation Sans,sans-serif" font-weight="bold" font-size="5.6" fill="#e8eef6" textLength="10.6" lengthAdjust="spacingAndGlyphs">XYZ</text><g fill="none" stroke-linecap="round"><path d="M10.9 310.4C15.6 311 15.4 319.3 19.85 319.3S24.1 311 28.8 310.4" stroke="#1d2633" stroke-width="4"/><path d="M10.9 319.2C15.6 318.6 15.4 310.3 19.85 310.3S24.1 318.6 28.8 319.2" stroke="#1d2633" stroke-width="4"/><path d="M10.9 310.4C15.6 311 15.4 319.3 19.85 319.3S24.1 311 28.8 310.4" stroke="#b9d5f3" stroke-width="2.4"/><path d="M10.9 319.2C15.6 318.6 15.4 310.3 19.85 310.3S24.1 318.6 28.8 319.2" stroke="#d9e8f8" stroke-width="2.4"/></g><g transform="rotate(-35 19.8 346.5)"><rect x="11.3" y="342.2" width="17" height="8.6" rx="1.2" fill="#f4f4f4" stroke="#26313f" stroke-width=".8"/><path d="M20.3 342.2H27.1a1.2 1.2 0 0 1 1.2 1.2V349.6a1.2 1.2 0 0 1-1.2 1.2H20.3Z" fill="#9cc0ea"/></g><path d="M17.6 355.2H27.2" stroke="#10151c" stroke-width="1.1"/><rect x="10" y="371.3" width="20.2" height="15.6" rx="1.6" fill="#7ea7d9" stroke="#26313f" stroke-width=".7"/><rect x="11.6" y="372.9" width="17" height="12.4" rx=".8" fill="#f6f6f6" stroke="#222" stroke-width=".5"/><text x="12.6" y="383.4" font-family="Liberation Sans,sans-serif" font-weight="bold" font-size="11" fill="#111" textLength="15" lengthAdjust="spacingAndGlyphs">Aa</text><rect x="10" y="403.6" width="20.2" height="15.4" rx="1" fill="#80aee2" stroke="#26313f" stroke-width=".8"/><path d="M13 404V409M15.8 404V407.4M18.6 404V411.6M21.4 404V407.4M24.2 404V409M27 404V411" stroke="#36557c" stroke-width="1"/><circle cx="13.5" cy="439.4" r="1.8" fill="#dfeaf7" stroke="#26313f" stroke-width=".5"/><circle cx="19.9" cy="439.4" r="1.8" fill="#dfeaf7" stroke="#26313f" stroke-width=".5"/><circle cx="26.3" cy="439.4" r="1.8" fill="#dfeaf7" stroke="#26313f" stroke-width=".5"/><path d="M26.8 450.1H31.8L29.3 453.1Z" fill="#fff"/><circle cx="719.5" cy="16.8" r="2.9" fill="url(#sB)" stroke="#5477a3" stroke-width="0.6" opacity="1"/><circle cx="726" cy="20.1" r="2.9" fill="url(#sB)" stroke="#5477a3" stroke-width="0.6" opacity="1"/><circle cx="720" cy="23.6" r="2.9" fill="url(#sB)" stroke="#5477a3" stroke-width="0.6" opacity="1"/><path d="M900 17.1H912L906 26.9Z" fill="#4d7cb1"/><path d="M940.9 9.7H934.7Q932.5 9.7 932.5 11.899999999999999V18.1M947.0 9.7H953.1999999999999Q955.4 9.7 955.4 11.899999999999999V18.1M940.9 32.4H934.7Q932.5 32.4 932.5 30.2V24.0M947.0 32.4H953.1999999999999Q955.4 32.4 955.4 30.2V24.0" fill="none" stroke="#a4c8ee" stroke-width="1.5"/><circle cx="940.2" cy="16.7" r="4" fill="url(#sB)" stroke="#2a3a4f" stroke-width="0.8" opacity="1"/><circle cx="948.4" cy="20.8" r="4" fill="url(#sB)" stroke="#2a3a4f" stroke-width="0.8" opacity="1"/><circle cx="940.5" cy="26" r="4" fill="url(#sB)" stroke="#2a3a4f" stroke-width="0.8" opacity="1"/><path d="M972.1 9.7H965.9000000000001Q963.7 9.7 963.7 11.899999999999999V18.1M978.2 9.7H984.4Q986.6 9.7 986.6 11.899999999999999V18.1M972.1 32.4H965.9000000000001Q963.7 32.4 963.7 30.2V24.0M978.2 32.4H984.4Q986.6 32.4 986.6 30.2V24.0" fill="none" stroke="#4f6787" stroke-width="1.4"/><path d="M970.6 16.9L979.2 25.5M979.2 16.9L970.6 25.5" stroke="#283445" stroke-width="4"/><path d="M970.6 16.9L979.2 25.5M979.2 16.9L970.6 25.5" stroke="#8d99a8" stroke-width="2.7"/><text x="963.8" y="58.4" font-family="Liberation Sans,sans-serif" font-weight="bold" font-size="12.2" fill="#f1ecdc" textLength="22.4" lengthAdjust="spacingAndGlyphs">Gro</text><path d="M974.6 63.800000000000004Q975.568 67.232 979.0 68.2Q975.568 69.168 974.6 72.60000000000001Q973.6320000000001 69.168 970.2 68.2Q973.6320000000001 67.232 974.6 63.800000000000004Z" fill="#f5d020"/><path d="M968 67.10000000000001Q968.462 68.738 970.1 69.2Q968.462 69.662 968 71.3Q967.538 69.662 965.9 69.2Q967.538 68.738 968 67.10000000000001Z" fill="#f5d020"/><path d="M970.6 61.1Q971.018 62.582 972.5 63Q971.018 63.418 970.6 64.9Q970.182 63.418 968.7 63Q970.182 62.582 970.6 61.1Z" fill="#f5d020"/><path d="M984.2 60.300000000000004Q984.618 61.782000000000004 986.1 62.2Q984.618 62.618 984.2 64.10000000000001Q983.782 62.618 982.3000000000001 62.2Q983.782 61.782000000000004 984.2 60.300000000000004Z" fill="#f5d020"/><path d="M977.4 61.6L984.6 71.4" stroke="#26313f" stroke-width="3.6" stroke-linecap="round"/><path d="M977.4 61.6L984.6 71.4" stroke="#a9cbf0" stroke-width="2.4" stroke-linecap="round"/><path d="M977.7 62.2L980 65.3" stroke="#3c5a86" stroke-width="1.1"/><g transform="translate(963 80.2) scale(.64)"><g fill="none" stroke-linecap="round" stroke-linejoin="round"><path d="M2.0 3.0L5.0 5.0L1.5 7.5L5.5 9.5L1.5 12.0L5.5 14.0L1.5 16.5L5.0 19.0" stroke="#6c7888" stroke-width="3.4"/><path d="M2.0 3.0L5.0 5.0L1.5 7.5L5.5 9.5L1.5 12.0L5.5 14.0L1.5 16.5L5.0 19.0" stroke="#d8dde4" stroke-width="1.8"/><path d="M3.0 2.5L12.0 2.0" stroke="#d8dde4" stroke-width="1"/><path d="M12.0 1.0L15.0 4.0L13.0 6.5L18.0 5.0L17.0 9.0L19.5 8.5" stroke="#6c7888" stroke-width="3.4"/><path d="M12.0 1.0L15.0 4.0L13.0 6.5L18.0 5.0L17.0 9.0L19.5 8.5" stroke="#d8dde4" stroke-width="1.8"/><path d="M18.5 9.5Q18.0 14.0 14.5 16.0Q16.0 20.0 20.0 21.0" stroke="#d8dde4" stroke-width="1.2"/></g></g><path d="M981.4 92.5V98.6M978.4 96.3L981.4 99.3L984.4 96.3" fill="none" stroke="#26313f" stroke-width="3.2"/><path d="M975.8 98.4V102H987V98.4" fill="none" stroke="#26313f" stroke-width="3.2"/><path d="M981.4 92.5V98.6M978.4 96.3L981.4 99.3L984.4 96.3" fill="none" stroke="#fff" stroke-width="1.7"/><path d="M975.8 98.4V102H987V98.4" fill="none" stroke="#fff" stroke-width="1.8"/><rect x="963.6" y="112.7" width="22.6" height="20.3" fill="#5c7797" stroke="#26313f" stroke-width=".8"/><path d="M963.6 114H986.2M963.6 131.6H986.2" stroke="#a6c6ea" stroke-width="1.8"/><text x="964.3" y="126.6" font-family="Liberation Mono,monospace" font-size="10" fill="#eef3f9" textLength="11" lengthAdjust="spacingAndGlyphs">IP</text><text x="975.6" y="126.4" font-family="Liberation Mono,monospace" font-size="6.6" fill="#a9cbf0" textLength="10" lengthAdjust="spacingAndGlyphs">[y]:</text><path d="M966.6 158.8C966 154.6 969.4 151.2 973.6 150.4C977.8 148.6 984.4 148.8 985.8 152.6C987.2 155.4 985 157.8 986 160.6C986.8 164 982.4 164.6 979.4 165C976.4 166.6 972.8 166.8 970.6 164.2C968.6 162.6 967 161.4 966.6 158.8Z" fill="#3ecf8e" stroke="#1f3a34" stroke-width=".7"/><path d="M973 155.6L975.6 149.6L978.6 150.8L978.4 155.4Z" fill="#e2cf55"/><rect x="969.2" y="143.6" width="5.4" height="3.4" rx="1" fill="#f4a14a" transform="rotate(-38 972 145.4)"/><ellipse cx="964.5" cy="151.4" rx="1.3" ry="2.6" fill="#ec6fae" transform="rotate(-20 964.5 151.4)"/><ellipse cx="982.2" cy="144.8" rx="2.4" ry="1.1" fill="#6fcaf0" transform="rotate(20 982.2 144.8)"/><path d="M963.8 184.2L970 187.4L964.6 189.8M966 183L971 187.4M965 191L969 187M970 187.4H985" stroke="#a8b4c4" stroke-width=".9" fill="none"/><circle cx="976.5" cy="187.6" r="1.2" fill="#c8c060"/><circle cx="977.4" cy="187.8" r="1.0" fill="#3a5aa8"/><circle cx="976.9" cy="188.0" r="1.0" fill="#e6dc58"/><circle cx="976.4" cy="184.9" r="1.4" fill="#9aa6b6"/><circle cx="979.5" cy="187.8" r="1.2" fill="#c8c060"/><circle cx="979.8" cy="187.9" r="1.0" fill="#3a5aa8"/><circle cx="969.2" cy="187.3" r="1.0" fill="#e6dc58"/><circle cx="972.1" cy="186.0" r="1.0" fill="#c8c060"/><circle cx="974.4" cy="187.7" r="1.0" fill="#3a5aa8"/><circle cx="972.9" cy="186.2" r="1.0" fill="#9aa6b6"/><circle cx="970.4" cy="187.8" r="1.2" fill="#3a5aa8"/><circle cx="985.4" cy="188.5" r="1.4" fill="#e6dc58"/><circle cx="974.2" cy="185.7" r="1.2" fill="#e6dc58"/><circle cx="970.2" cy="188.2" r="1.2" fill="#e6dc58"/><circle cx="983.0" cy="186.6" r="1.0" fill="#9aa6b6"/><circle cx="969.0" cy="186.3" r="1.0" fill="#c8c060"/><circle cx="975.2" cy="188.4" r="1.2" fill="#e6dc58"/><circle cx="978.3" cy="185.1" r="1.4" fill="#e6dc58"/><circle cx="974.6" cy="186.1" r="1.0" fill="#c8c060"/><circle cx="981.5" cy="185.1" r="1.0" fill="#9aa6b6"/><circle cx="970.7" cy="185.5" r="1.2" fill="#e6dc58"/><circle cx="980.3" cy="185.3" r="1.4" fill="#e6dc58"/><circle cx="985.3" cy="188.3" r="1.2" fill="#9aa6b6"/><circle cx="975.3" cy="186.6" r="1.0" fill="#e6dc58"/><circle cx="973.5" cy="189.6" r="1.4" fill="#e6dc58"/><circle cx="985.5" cy="185.4" r="1.0" fill="#c8c060"/><circle cx="985.4" cy="187.6" r="1.4" fill="#e6dc58"/><circle cx="969.7" cy="186.0" r="1.2" fill="#e6dc58"/><circle cx="969.2" cy="187.6" r="1.2" fill="#c8c060"/><circle cx="970.2" cy="185.7" r="1.4" fill="#9aa6b6"/><path d="M962.6 212.6L965.8 212.6L967.4 216.6L969.6 212.4L971.8 212.8L968.8 219.4L971.4 226.4L968.6 226L967 222.2L965 226.4L962.4 226L965.4 219.2Z" fill="#e0161c"/><text x="972.6" y="220.4" font-family="Liberation Sans,sans-serif" font-size="7.6" font-weight="bold" fill="#0c0f14" textLength="15.2" lengthAdjust="spacingAndGlyphs">PDB</text><text x="972.6" y="227.2" font-family="Liberation Sans,sans-serif" font-size="7" fill="#0c0f14" textLength="15.2" lengthAdjust="spacingAndGlyphs">F<tspan font-size="5.6">IXER</tspan></text><circle cx="968.9" cy="243.9" r="1.97" fill="#f7b500"/><circle cx="965.7" cy="246.0" r="1.16" fill="#f7b500"/><circle cx="972.7" cy="240.3" r="0.87" fill="#f7b500"/><circle cx="969.8" cy="248.1" r="0.99" fill="#f7b500"/><circle cx="966.0" cy="249.2" r="0.70" fill="#f7b500"/><circle cx="975.8" cy="246.1" r="2.20" fill="#f26f1a"/><circle cx="972.7" cy="250.6" r="1.28" fill="#f26f1a"/><circle cx="978.8" cy="241.7" r="0.87" fill="#f26f1a"/><circle cx="980.5" cy="244.9" r="0.99" fill="#f26f1a"/><circle cx="976.9" cy="249.8" r="0.81" fill="#f26f1a"/><circle cx="975.9" cy="242.0" r="0.70" fill="#f26f1a"/><circle cx="968.9" cy="254.2" r="1.57" fill="#39b3dc"/><circle cx="969.2" cy="258.9" r="1.74" fill="#39b3dc"/><circle cx="964.9" cy="251.0" r="0.93" fill="#39b3dc"/><circle cx="981.1" cy="248.9" r="0.99" fill="#39b3dc"/><circle cx="965.5" cy="254.8" r="0.81" fill="#39b3dc"/><circle cx="972.7" cy="256.8" r="0.99" fill="#39b3dc"/><circle cx="984.3" cy="247.8" r="0.81" fill="#39b3dc"/><circle cx="984.0" cy="251.3" r="0.70" fill="#39b3dc"/><circle cx="972.1" cy="253.9" r="0.70" fill="#39b3dc"/><circle cx="980.5" cy="258.4" r="1.86" fill="#8fc93a"/><circle cx="976.5" cy="255.0" r="1.39" fill="#8fc93a"/><circle cx="983.6" cy="255.0" r="1.04" fill="#8fc93a"/><circle cx="976.2" cy="260.4" r="0.93" fill="#8fc93a"/><circle cx="980.2" cy="252.7" r="0.99" fill="#8fc93a"/><circle cx="973.3" cy="260.3" r="0.70" fill="#8fc93a"/><circle cx="982.4" cy="251.8" r="0.52" fill="#39b3dc"/><circle cx="974.2" cy="243.4" r="0.52" fill="#f26f1a"/><circle cx="983.3" cy="245.6" r="0.52" fill="#39b3dc"/><circle cx="972.1" cy="247.8" r="0.52" fill="#f7b500"/><circle cx="975.0" cy="257.9" r="0.75" fill="#39b3dc"/><circle cx="974.9" cy="240.6" r="0.64" fill="#f26f1a"/><circle cx="985.4" cy="252.8" r="0.52" fill="#39b3dc"/><circle cx="977.0" cy="258.0" r="0.64" fill="#8fc93a"/><circle cx="976.3" cy="252.5" r="0.75" fill="#8fc93a"/><circle cx="980.7" cy="254.9" r="0.52" fill="#8fc93a"/><circle cx="972.7" cy="244.6" r="0.64" fill="#f26f1a"/><circle cx="974.4" cy="253.4" r="0.75" fill="#39b3dc"/><circle cx="979.5" cy="249.8" r="0.52" fill="#39b3dc"/><circle cx="983.3" cy="257.4" r="0.64" fill="#8fc93a"/><circle cx="981.3" cy="242.3" r="0.75" fill="#f26f1a"/><circle cx="967.7" cy="248.6" r="0.52" fill="#f7b500"/><circle cx="967.4" cy="250.7" r="0.75" fill="#f7b500"/><circle cx="978.5" cy="248.2" r="0.64" fill="#f26f1a"/><circle cx="973.4" cy="258.6" r="0.52" fill="#8fc93a"/><circle cx="965.2" cy="253.1" r="0.52" fill="#39b3dc"/><circle cx="969.8" cy="251.9" r="0.52" fill="#39b3dc"/><circle cx="983.6" cy="253.1" r="0.52" fill="#39b3dc"/><circle cx="978.8" cy="243.7" r="0.52" fill="#f26f1a"/><circle cx="978.2" cy="251.2" r="0.64" fill="#f26f1a"/><circle cx="983.5" cy="243.5" r="0.52" fill="#f26f1a"/><circle cx="980.8" cy="247.0" r="0.52" fill="#39b3dc"/><circle cx="979.3" cy="255.5" r="0.52" fill="#8fc93a"/><circle cx="974.5" cy="256.2" r="0.52" fill="#39b3dc"/><circle cx="984.8" cy="246.0" r="0.64" fill="#39b3dc"/><circle cx="971.3" cy="246.2" r="0.52" fill="#f7b500"/><circle cx="972.4" cy="242.7" r="0.75" fill="#f7b500"/><circle cx="968.2" cy="246.8" r="0.64" fill="#f7b500"/><circle cx="967.5" cy="256.5" r="0.52" fill="#39b3dc"/><circle cx="974.8" cy="251.3" r="0.52" fill="#f26f1a"/><circle cx="964.6" cy="248.2" r="0.64" fill="#f7b500"/><circle cx="986.0" cy="250.4" r="0.52" fill="#39b3dc"/><circle cx="978.6" cy="260.6" r="0.52" fill="#8fc93a"/><circle cx="976.8" cy="239.6" r="0.52" fill="#f26f1a"/><rect x="284.4" y="898.4" width="23.2" height="23" fill="none" stroke="#8eb8e8" stroke-width="1.1"/><path d="M299.136 913.136L304.3 918.3" stroke="#2a3442" stroke-width="4" stroke-linecap="round"/><path d="M299.136 913.136L304.3 918.3" stroke="#f2f2f2" stroke-width="2.6" stroke-linecap="round"/><circle cx="294.6" cy="908.6" r="6.3" fill="url(#lens)" stroke="#2a3442" stroke-width="2.8"/><circle cx="294.6" cy="908.6" r="6.3" fill="none" stroke="#ececec" stroke-width="1.5"/><path d="M323.6 898.4H317.1Q315.6 898.4 315.6 899.9V906.4M330.6 898.4H337.1Q338.6 898.4 338.6 899.9V906.4M323.6 921.4H317.1Q315.6 921.4 315.6 919.9V913.4M330.6 921.4H337.1Q338.6 921.4 338.6 919.9V913.4" fill="none" stroke="#8eb8e8" stroke-width="1.2"/><path d="M330.136 913.136L335.3 918.3" stroke="#2a3442" stroke-width="4" stroke-linecap="round"/><path d="M330.136 913.136L335.3 918.3" stroke="#f2f2f2" stroke-width="2.6" stroke-linecap="round"/><circle cx="325.6" cy="908.6" r="6.3" fill="url(#lens)" stroke="#2a3442" stroke-width="2.8"/><circle cx="325.6" cy="908.6" r="6.3" fill="none" stroke="#ececec" stroke-width="1.5"/><path d="M360.488 912.288L365.4 917.1999999999999" stroke="#2a3442" stroke-width="4" stroke-linecap="round"/><path d="M360.488 912.288L365.4 917.1999999999999" stroke="#f2f2f2" stroke-width="2.6" stroke-linecap="round"/><circle cx="356.6" cy="908.4" r="5.4" fill="url(#lens)" stroke="#2a3442" stroke-width="2.8"/><circle cx="356.6" cy="908.4" r="5.4" fill="none" stroke="#ececec" stroke-width="1.5"/><path d="M353.4 908.4H359.8M356.6 905.2V911.6" stroke="#fff" stroke-width="1.7"/><path d="M391.28799999999995 912.288L396.19999999999993 917.1999999999999" stroke="#2a3442" stroke-width="4" stroke-linecap="round"/><path d="M391.28799999999995 912.288L396.19999999999993 917.1999999999999" stroke="#f2f2f2" stroke-width="2.6" stroke-linecap="round"/><circle cx="387.4" cy="908.4" r="5.4" fill="url(#lens)" stroke="#2a3442" stroke-width="2.8"/><circle cx="387.4" cy="908.4" r="5.4" fill="none" stroke="#ececec" stroke-width="1.5"/><path d="M384.2 908.4H390.6" stroke="#fff" stroke-width="1.7"/><rect x="408.8" y="898.6" width="22.2" height="22.2" rx="2" fill="url(#bgsq)" stroke="#223044" stroke-width="1"/><path d="M450.4 897.6L460.6 902.6L461 915.4L450.6 921.6L440 915.6L440 902.8Z" fill="#5b90d0" stroke="#3f6ea8" stroke-width=".8"/><path d="M450.4 897.6L460.6 902.6L450.6 907.6L440 902.8Z" fill="#6ea2de"/><path d="M450.6 907.6V921.6" stroke="#3f6ea8" stroke-width=".7"/><path d="M446.6 909.6L449.6 907V912.2ZM454.6 909.6L451.6 907V912.2Z" fill="#0e1520"/><path d="M450.4 897.2L452.6 900.2H448.2Z" fill="#2f7fe0"/><path d="M439.4 918.6L443.6 915L444.6 917.4Z" fill="#e8622a"/><path d="M461.8 918.6L457.6 915L456.6 917.4Z" fill="#3ecf6a"/><path d="M473.6 900.2H490.4Q491.6 900.2 491.8 901.4L493.4 918.2Q493.4 919.6 492 919.6H472Q470.6 919.6 470.6 918.2L472.2 901.4Q472.4 900.2 473.6 900.2Z" fill="#a4b9cf" stroke="#26313f" stroke-width=".7"/><path d="M471.6 909.2H492.4" stroke="#d2785a" stroke-width=".8"/><path d="M482 900.4V919.4" stroke="#58b878" stroke-width=".8"/><path d="M476.6 900.4L475.4 919.4M487.4 900.4L488.6 919.4M472 904.6H492M471.2 914.2H492.8" stroke="#b8cbdc" stroke-width=".6"/><text x="502.6" y="916" font-family="Liberation Sans,sans-serif" font-weight="bold" font-size="16" fill="#fff" textLength="20.4" lengthAdjust="spacingAndGlyphs">1Å</text><path d="M503 919.2H523" stroke="#fff" stroke-width="1.6"/><rect x="539.4" y="900.8" width="9.6" height="6.6" rx="1" fill="#a9cbf0" stroke="#26313f" stroke-width=".6"/><rect x="542.4" y="899.6" width="3.6" height="1.6" fill="#a9cbf0"/><circle cx="544.2" cy="904.2" r="2" fill="#3b4a5e"/><circle cx="544.2" cy="904.2" r=".9" fill="#d8e6f6"/><ellipse cx="544" cy="914.4" rx="9.2" ry="4" fill="none" stroke="#26313f" stroke-width="3"/><ellipse cx="544" cy="914.4" rx="9.2" ry="4" fill="none" stroke="#fff" stroke-width="1.7"/><path d="M541.4 917.2L545.4 918.6L542.2 920.6Z" fill="#fff"/><path d="M551.5 917.1H556.0999999999999L553.8 920.1Z" fill="#fff"/><rect x="565.6" y="904.2" width="17.4" height="10.4" rx="1.4" fill="#a9cbf0" stroke="#26313f" stroke-width=".7"/><rect x="571" y="902" width="6.4" height="2.6" rx=".6" fill="#a9cbf0" stroke="#26313f" stroke-width=".5"/><circle cx="574" cy="909.2" r="3.9" fill="#3a485b"/><circle cx="574" cy="909.2" r="2" fill="#8e9bac"/><rect x="574" y="909.2" width="11" height="10.4" rx=".8" fill="#5d83b4" stroke="#1e2a3a" stroke-width=".8"/><rect x="576" y="914.6" width="7" height="4.6" fill="#efe9d2"/><rect x="576.4" y="909.8" width="5.4" height="3" fill="#33465e"/><rect x="602" y="899.6" width="14.2" height="13.4" fill="#9cc0ec" stroke="#dbe8f8" stroke-width=".7"/><path d="M604 902.6H614.2M604 905.2H614.2M604 907.8H614.2M604 910.4H614.2" stroke="#6f9cd2" stroke-width="1"/><circle cx="599" cy="917.2" r="3.3" fill="#d6d6d6" stroke="#26313f" stroke-width=".8"/><rect x="626.8" y="901" width="20.4" height="18.4" fill="#8fbaec" stroke="#223044" stroke-width=".9"/><rect x="628.6" y="905" width="16.8" height="8.6" fill="#6f9cd2"/><path d="M628.6 915.8H645.4M628.6 903H645.4" stroke="#6f9cd2" stroke-width=".9"/><circle cx="663.6" cy="905.6" r="3.9" fill="url(#sB)" stroke="#3a5578" stroke-width="0.7" opacity="1"/><circle cx="672.6" cy="909.2" r="3.9" fill="url(#sB)" stroke="#3a5578" stroke-width="0.7" opacity="1"/><circle cx="664.4" cy="913.8" r="3.9" fill="url(#sB)" stroke="#3a5578" stroke-width="0.7" opacity="1"/><g opacity="1"><path d="M664.9 915.2Q670.6 908.2700000000001 676.3000000000001 915.2Q670.6 922.13 664.9 915.2Z" fill="#9aa6b6"/><circle cx="670.6" cy="915.2" r="2.57" fill="#2b3646"/><circle cx="670.6" cy="915.2" r="1.09" fill="#9aa6b6"/></g><path d="M675.5 917.3H680.0999999999999L677.8 920.3Z" fill="#fff"/><g opacity="1"><path d="M689.8 909.8Q699 898.67 708.2 909.8Q699 920.93 689.8 909.8Z" fill="#fff"/><circle cx="699" cy="909.8" r="4.13" fill="#2b3646"/><circle cx="699" cy="909.8" r="1.75" fill="#fff"/></g><circle cx="1009.4" cy="7.0" r="2.21" fill="#f7b500"/><circle cx="1005.9" cy="9.4" r="1.30" fill="#f7b500"/><circle cx="1013.7" cy="3.0" r="0.97" fill="#f7b500"/><circle cx="1010.4" cy="11.7" r="1.10" fill="#f7b500"/><circle cx="1006.2" cy="13.0" r="0.78" fill="#f7b500"/><circle cx="1017.2" cy="9.5" r="2.47" fill="#f26f1a"/><circle cx="1013.7" cy="14.6" r="1.43" fill="#f26f1a"/><circle cx="1020.6" cy="4.6" r="0.97" fill="#f26f1a"/><circle cx="1022.4" cy="8.2" r="1.10" fill="#f26f1a"/><circle cx="1018.4" cy="13.7" r="0.91" fill="#f26f1a"/><circle cx="1017.3" cy="4.9" r="0.78" fill="#f26f1a"/><circle cx="1009.4" cy="18.6" r="1.76" fill="#39b3dc"/><circle cx="1009.8" cy="23.8" r="1.95" fill="#39b3dc"/><circle cx="1005.0" cy="15.0" r="1.04" fill="#39b3dc"/><circle cx="1023.2" cy="12.6" r="1.10" fill="#39b3dc"/><circle cx="1005.6" cy="19.2" r="0.91" fill="#39b3dc"/><circle cx="1013.7" cy="21.5" r="1.10" fill="#39b3dc"/><circle cx="1026.7" cy="11.4" r="0.91" fill="#39b3dc"/><circle cx="1026.4" cy="15.3" r="0.78" fill="#39b3dc"/><circle cx="1013.0" cy="18.2" r="0.78" fill="#39b3dc"/><circle cx="1022.4" cy="23.3" r="2.08" fill="#8fc93a"/><circle cx="1018.0" cy="19.5" r="1.56" fill="#8fc93a"/><circle cx="1025.9" cy="19.5" r="1.17" fill="#8fc93a"/><circle cx="1017.6" cy="25.5" r="1.04" fill="#8fc93a"/><circle cx="1022.1" cy="16.9" r="1.10" fill="#8fc93a"/><circle cx="1014.3" cy="25.4" r="0.78" fill="#8fc93a"/><circle cx="1024.6" cy="15.8" r="0.58" fill="#39b3dc"/><circle cx="1015.4" cy="6.5" r="0.58" fill="#f26f1a"/><circle cx="1025.6" cy="8.9" r="0.58" fill="#39b3dc"/><circle cx="1013.0" cy="11.3" r="0.58" fill="#f7b500"/><circle cx="1016.3" cy="22.7" r="0.84" fill="#39b3dc"/><circle cx="1016.2" cy="3.3" r="0.71" fill="#f26f1a"/><circle cx="1028.0" cy="17.0" r="0.58" fill="#39b3dc"/><circle cx="1018.6" cy="22.8" r="0.71" fill="#8fc93a"/><circle cx="1017.7" cy="16.6" r="0.84" fill="#8fc93a"/><circle cx="1022.7" cy="19.4" r="0.58" fill="#8fc93a"/><circle cx="1013.7" cy="7.8" r="0.71" fill="#f26f1a"/><circle cx="1015.6" cy="17.7" r="0.84" fill="#39b3dc"/><circle cx="1021.3" cy="13.7" r="0.58" fill="#39b3dc"/><circle cx="1025.6" cy="22.1" r="0.71" fill="#8fc93a"/><circle cx="1023.4" cy="5.3" r="0.84" fill="#f26f1a"/><circle cx="1008.1" cy="12.3" r="0.58" fill="#f7b500"/><circle cx="1007.8" cy="14.7" r="0.84" fill="#f7b500"/><circle cx="1020.2" cy="11.8" r="0.71" fill="#f26f1a"/><circle cx="1014.6" cy="23.5" r="0.58" fill="#8fc93a"/><circle cx="1005.3" cy="17.4" r="0.58" fill="#39b3dc"/><circle cx="1010.5" cy="16.0" r="0.58" fill="#39b3dc"/><circle cx="1025.9" cy="17.3" r="0.58" fill="#39b3dc"/><circle cx="1020.5" cy="6.8" r="0.58" fill="#f26f1a"/><circle cx="1019.9" cy="15.2" r="0.71" fill="#f26f1a"/><circle cx="1025.8" cy="6.5" r="0.58" fill="#f26f1a"/><circle cx="1022.8" cy="10.4" r="0.58" fill="#39b3dc"/><circle cx="1021.1" cy="20.0" r="0.58" fill="#8fc93a"/><circle cx="1015.8" cy="20.8" r="0.58" fill="#39b3dc"/><circle cx="1027.3" cy="9.4" r="0.71" fill="#39b3dc"/><circle cx="1012.2" cy="9.6" r="0.58" fill="#f7b500"/><circle cx="1013.4" cy="5.7" r="0.84" fill="#f7b500"/><circle cx="1008.7" cy="10.3" r="0.71" fill="#f7b500"/><circle cx="1007.9" cy="21.1" r="0.58" fill="#39b3dc"/><circle cx="1016.1" cy="15.3" r="0.58" fill="#f26f1a"/><circle cx="1004.6" cy="11.8" r="0.71" fill="#f7b500"/><circle cx="1028.6" cy="14.3" r="0.58" fill="#39b3dc"/><circle cx="1020.3" cy="25.7" r="0.58" fill="#8fc93a"/><circle cx="1018.3" cy="2.2" r="0.58" fill="#f26f1a"/><path d="M1491 9.2Q1491 7.6 1492.6 7.6H1502.4L1505 10.2V20.8Q1505 22.4 1503.4 22.4H1492.6Q1491 22.4 1491 20.8Z" fill="#6f9bd0"/><rect x="1493.6" y="15.4" width="8.8" height="7" fill="#cfe2f8"/><rect x="1494" y="7.6" width="7.4" height="5" fill="#4d74a6"/><rect x="1498.8" y="8.4" width="1.6" height="3.2" fill="#9cc0ec"/><text x="1512.8" y="21.4" font-family="Liberation Sans,sans-serif" font-weight="bold" font-size="18.4" fill="#6f9bd0" stroke="#6f9bd0" stroke-width=".6" textLength="8.2" lengthAdjust="spacingAndGlyphs">?</text><path d="M1528.2 15L1535.4 13.6L1536.6 10.6L1539.6 11.6L1540.4 10.2H1543.8V20H1540.4L1539.6 18.6L1536.6 19.6L1535.4 16.4Z" fill="#6f9bd0"/><path d="M1548.6 20.2H1561.6" stroke="#2f405a" stroke-width="3.3"/><rect x="1568.6" y="9.4" width="11" height="11" fill="none" stroke="#2f405a" stroke-width="3.3"/><path d="M1587.2 8.8L1599 21M1599 8.8L1587.2 21" stroke="#2f405a" stroke-width="3.3"/><path d="M1548.6 20.2H1561.6" stroke="#6f9bd0" stroke-width="2.0"/><rect x="1568.6" y="9.4" width="11" height="11" fill="none" stroke="#6f9bd0" stroke-width="2.0"/><path d="M1587.2 8.8L1599 21M1599 8.8L1587.2 21" stroke="#6f9bd0" stroke-width="2.0"/></svg>
</body></html>
